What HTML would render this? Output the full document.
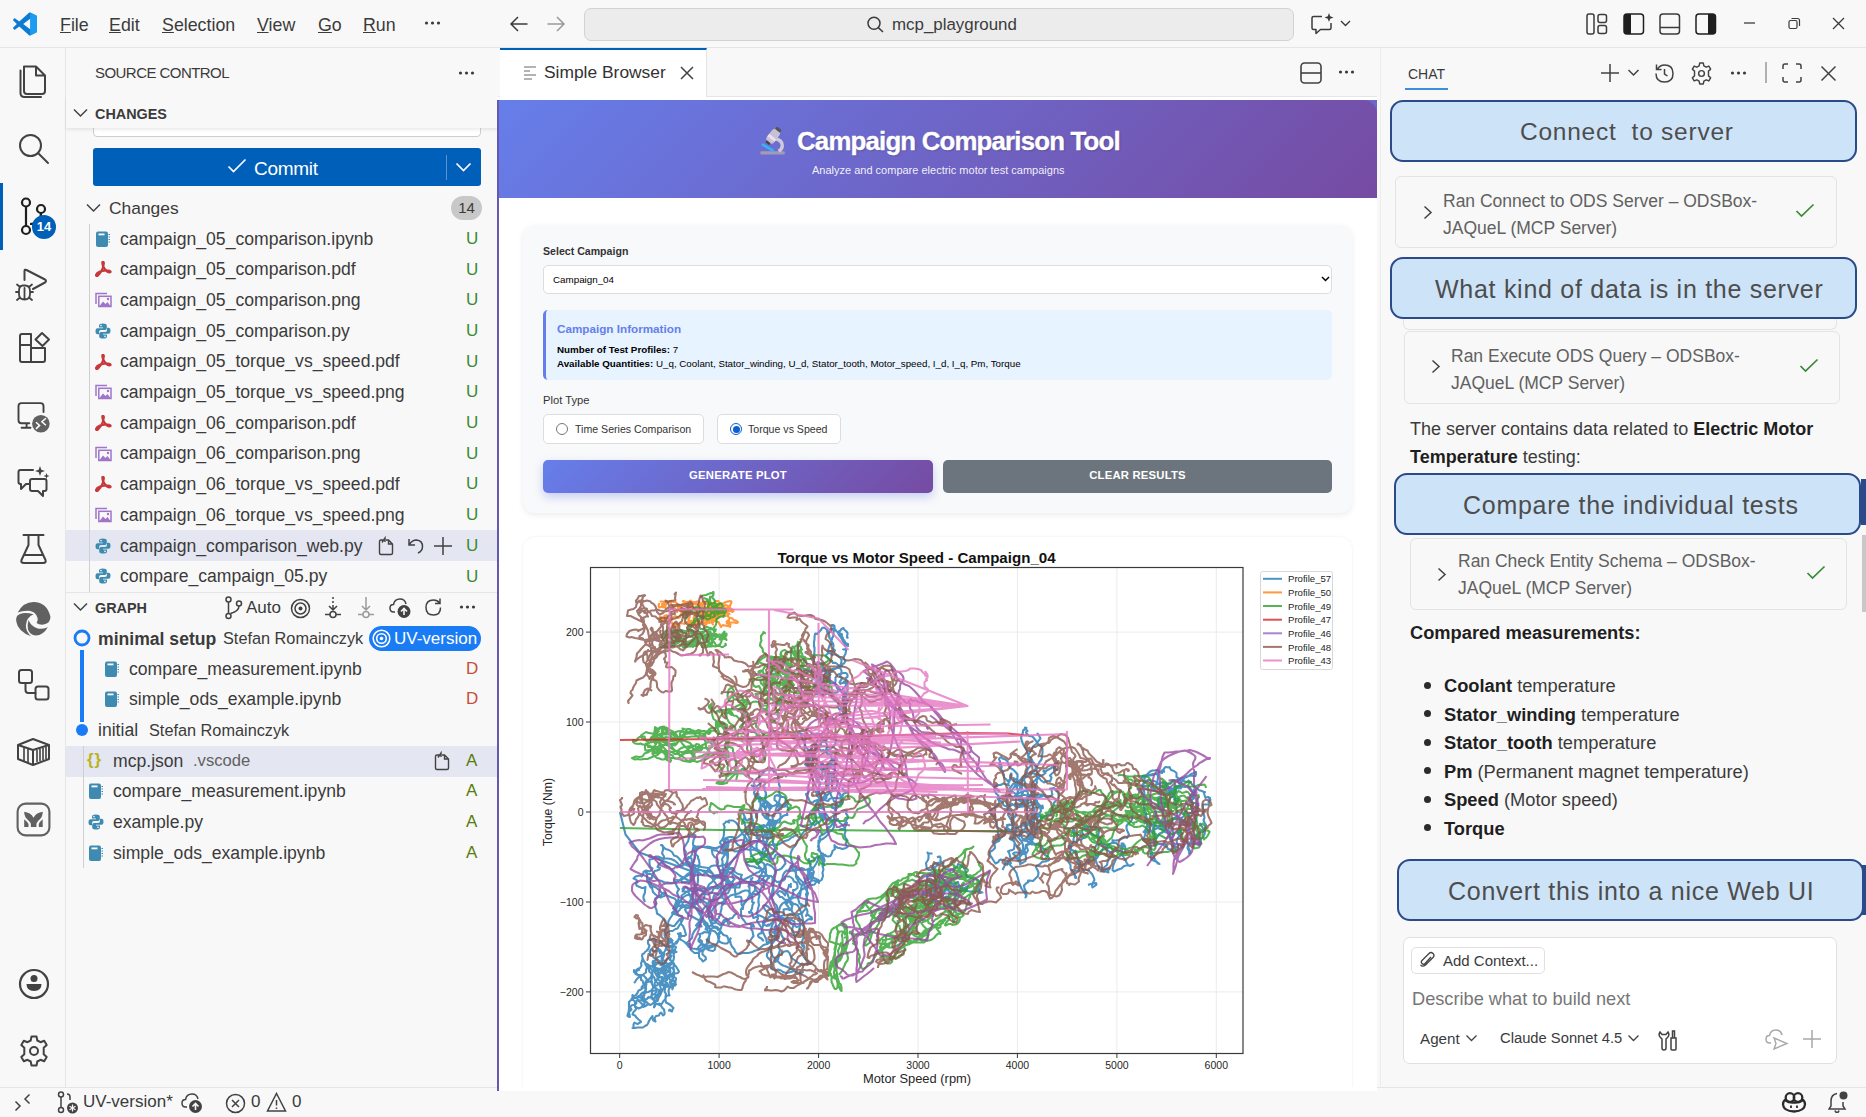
<!DOCTYPE html>
<html><head><meta charset="utf-8">
<style>
*{box-sizing:border-box;margin:0;padding:0}
html,body{width:1866px;height:1117px;overflow:hidden;background:#f8f8f8;font-family:"Liberation Sans",sans-serif;color:#3b3b3b}
.abs{position:absolute}
svg{display:block}
.t{position:absolute;white-space:nowrap;line-height:1.15}
</style></head><body>
<div class="abs" id="titlebar" style="left:0;top:0;width:1866px;height:48px;background:#f8f8f8;border-bottom:1px solid #e5e5e5">
 <svg class="abs" style="left:13px;top:12px" width="24" height="24" viewBox="0 0 24 24">
  <path d="M17.2 0.6 L23.2 3.5 Q24 3.9 24 4.8 V19.2 Q24 20.1 23.2 20.5 L17.2 23.4 Q16.5 23.7 16 23.2 L6.3 14.4 L2.2 17.5 Q1.6 17.9 1.1 17.4 L0.2 16.6 Q-0.2 16 0.3 15.5 L3.8 12 L0.3 8.5 Q-0.2 8 0.2 7.4 L1.1 6.6 Q1.6 6.1 2.2 6.5 L6.3 9.6 L16 0.8 Q16.5 0.3 17.2 0.6 Z M17.5 6.5 L10.2 12 L17.5 17.5 Z" fill="#0b7bd3" fill-rule="evenodd"/>
  <path d="M17.2 0.6 L23.2 3.5 Q24 3.9 24 4.8 V19.2 Q24 20.1 23.2 20.5 L17.2 23.4 Z" fill="#1d9bf0"/>
 </svg>
 <div class="t" style="left:60px;top:15px;font-size:17.8px;color:#3b3b3b"><u>F</u>ile</div>
 <div class="t" style="left:109px;top:15px;font-size:17.8px;color:#3b3b3b"><u>E</u>dit</div>
 <div class="t" style="left:162px;top:15px;font-size:17.8px;color:#3b3b3b"><u>S</u>election</div>
 <div class="t" style="left:257px;top:15px;font-size:17.8px;color:#3b3b3b"><u>V</u>iew</div>
 <div class="t" style="left:318px;top:15px;font-size:17.8px;color:#3b3b3b"><u>G</u>o</div>
 <div class="t" style="left:363px;top:15px;font-size:17.8px;color:#3b3b3b"><u>R</u>un</div>
 <svg class="abs" style="left:424px;top:20px" width="18" height="6"><circle cx="2.5" cy="3" r="1.6" fill="#3b3b3b"/><circle cx="8.5" cy="3" r="1.6" fill="#3b3b3b"/><circle cx="14.5" cy="3" r="1.6" fill="#3b3b3b"/></svg>
 <svg class="abs" style="left:509px;top:15px" width="20" height="18" viewBox="0 0 20 18"><path d="M18.5 9H2.5M9 2L2 9L9 16" stroke="#3b3b3b" stroke-width="1.5" fill="none"/></svg>
 <svg class="abs" style="left:546px;top:15px" width="20" height="18" viewBox="0 0 20 18"><path d="M1.5 9H17.5M11 2L18 9L11 16" stroke="#9a9a9a" stroke-width="1.5" fill="none"/></svg>
 <div class="abs" style="left:584px;top:8px;width:710px;height:33px;background:#ececec;border:1px solid #d2d2d2;border-radius:7px"></div>
 <svg class="abs" style="left:866px;top:16px" width="20" height="17" viewBox="0 0 20 17"><circle cx="8" cy="7.3" r="6" stroke="#3b3b3b" stroke-width="1.5" fill="none"/><path d="M12.3 11.6L17 16" stroke="#3b3b3b" stroke-width="1.5"/></svg>
 <div class="t" style="left:892px;top:15px;font-size:16.9px;color:#3b3b3b">mcp_playground</div>
 <svg class="abs" style="left:1310px;top:12px" width="44" height="24" viewBox="0 0 44 24">
  <path d="M12 4.5H3.5Q2 4.5 2 6V16Q2 17.5 3.5 17.5H6V21.5L10.5 17.5H19.5Q21 17.5 21 16V11" stroke="#3b3b3b" stroke-width="1.5" fill="none" stroke-linejoin="round"/>
  <path d="M19 1L20.2 4.3L23.5 5.5L20.2 6.7L19 10L17.8 6.7L14.5 5.5L17.8 4.3Z" fill="#3b3b3b"/>
  <path d="M31 9L35.5 13.5L40 9" stroke="#3b3b3b" stroke-width="1.4" fill="none"/>
 </svg>
 <svg class="abs" style="left:1586px;top:13px" width="22" height="22" viewBox="0 0 22 22"><rect x="1" y="1" width="7" height="20" rx="2" stroke="#3b3b3b" stroke-width="1.5" fill="none"/><rect x="12" y="1.5" width="8.5" height="8" rx="2" stroke="#3b3b3b" stroke-width="1.5" fill="none"/><rect x="12" y="12.5" width="8.5" height="8" rx="2" stroke="#3b3b3b" stroke-width="1.5" fill="none"/></svg>
 <svg class="abs" style="left:1623px;top:13px" width="22" height="22" viewBox="0 0 22 22"><rect x="1" y="1" width="19.5" height="20" rx="3" stroke="#1f1f1f" stroke-width="1.5" fill="none"/><path d="M4 1H8V21H4Q1 21 1 18V4Q1 1 4 1Z" fill="#1f1f1f"/></svg>
 <svg class="abs" style="left:1659px;top:13px" width="22" height="22" viewBox="0 0 22 22"><rect x="1" y="1" width="19.5" height="20" rx="3" stroke="#3b3b3b" stroke-width="1.5" fill="none"/><path d="M1 14.5H20.5" stroke="#3b3b3b" stroke-width="1.5"/></svg>
 <svg class="abs" style="left:1695px;top:13px" width="22" height="22" viewBox="0 0 22 22"><rect x="1" y="1" width="19.5" height="20" rx="3" stroke="#1f1f1f" stroke-width="1.5" fill="none"/><path d="M13 1H17.5Q20.5 1 20.5 4V18Q20.5 21 17.5 21H13Z" fill="#1f1f1f"/></svg>
 <svg class="abs" style="left:1743px;top:17px" width="14" height="12"><path d="M1 6H12" stroke="#3b3b3b" stroke-width="1.3"/></svg>
 <svg class="abs" style="left:1788px;top:17px" width="13" height="13" viewBox="0 0 13 13"><rect x="1" y="3.5" width="8" height="8" rx="1.5" stroke="#3b3b3b" stroke-width="1.2" fill="none"/><path d="M3.5 1.5H9.5Q11.5 1.5 11.5 3.5V9" stroke="#3b3b3b" stroke-width="1.2" fill="none"/></svg>
 <svg class="abs" style="left:1832px;top:17px" width="13" height="13" viewBox="0 0 13 13"><path d="M1 1L12 12M12 1L1 12" stroke="#3b3b3b" stroke-width="1.3"/></svg>
</div>
<div class="abs" id="activity" style="left:0;top:48px;width:66px;height:1039px;background:#f8f8f8;border-right:1px solid #e5e5e5">
 <div class="abs" style="left:0;top:135px;width:3px;height:67px;background:#005fb8"></div>
 <svg class="abs" style="left:17px;top:16px" width="32" height="34" viewBox="0 0 32 34"><path d="M7 2.5H19L28 11.5V27Q28 30 25 30H10Q7 30 7 27Z M19 2.5V11.5H28" stroke="#424242" stroke-width="2" fill="none" stroke-linejoin="round" stroke-linecap="round"/><path d="M3.5 6.5V29Q3.5 33 7.5 33H24" stroke="#424242" stroke-width="2" fill="none" stroke-linejoin="round" stroke-linecap="round"/></svg>
 <svg class="abs" style="left:17px;top:84px" width="34" height="34" viewBox="0 0 34 34"><circle cx="13.5" cy="13.5" r="10.5" stroke="#424242" stroke-width="2" fill="none" stroke-linejoin="round" stroke-linecap="round"/><path d="M21 21L31 31" stroke="#424242" stroke-width="2" fill="none" stroke-linejoin="round" stroke-linecap="round"/></svg>
 <svg class="abs" style="left:18px;top:149px" width="42" height="42" viewBox="0 0 42 42"><circle cx="8" cy="5.5" r="4" stroke="#1f1f1f" stroke-width="2.2" fill="none"/><circle cx="23" cy="12" r="4" stroke="#1f1f1f" stroke-width="2.2" fill="none"/><circle cx="8" cy="33" r="4" stroke="#1f1f1f" stroke-width="2.2" fill="none"/><path d="M8 9.5V29M12 27Q23 27 23 16" stroke="#1f1f1f" stroke-width="2.2" fill="none"/></svg>
 <div class="abs" style="left:32px;top:167px;width:24px;height:24px;border-radius:12px;background:#005fb8;color:#fff;font-size:13px;font-weight:bold;text-align:center;line-height:24px">14</div>
 <svg class="abs" style="left:15px;top:220px" width="36" height="34" viewBox="0 0 36 34"><path d="M9.5 12V3Q9.5 1 11.5 2L30 11.5Q32 13 30 14.5L18 21" stroke="#424242" stroke-width="2" fill="none" stroke-linejoin="round" stroke-linecap="round"/><path d="M8 17.5Q4 17.5 4 23V26Q4 31.5 9.5 31.5Q15 31.5 15 26V23Q15 17.5 10 17.5Z M4 24H1M15 24H18M5 19L2 16.5M14 19L17 16.5M5 29.5L2 32M14 29.5L17 32M9.5 20V31" stroke="#424242" stroke-width="1.8" fill="none" stroke-linecap="round"/></svg>
 <svg class="abs" style="left:17px;top:283px" width="36" height="34" viewBox="0 0 36 34"><path d="M3 5Q3 3 5 3H14V14H3Z M3 14H14V31H5Q3 31 3 29Z M14 17H28V29Q28 31 26 31H14Z" stroke="#424242" stroke-width="2" fill="none" stroke-linejoin="round" stroke-linecap="round"/><path d="M18.5 8.5L25 2L32 8.5L25.5 15Z" stroke="#424242" stroke-width="2" fill="none" stroke-linejoin="round" stroke-linecap="round"/></svg>
 <svg class="abs" style="left:12px;top:347px" width="44" height="44" viewBox="0 0 44 44"><path d="M31.5 17V11Q31.5 8.1 28.5 8.1H9.5Q6.5 8.1 6.5 11V25.3Q6.5 28.3 9.5 28.3H17.3M14.6 28.3V32.7M9.6 32.7H18.5" stroke="#424242" stroke-width="1.9" fill="none" stroke-linecap="round"/><circle cx="28.9" cy="28.7" r="8.8" fill="#616161"/><path d="M24 27.2L27.6 30.4L24 33.9M33.9 23.2L29.9 26.8L33.9 30.3" stroke="#fff" stroke-width="1.5" fill="none"/></svg>
 <svg class="abs" style="left:16px;top:417px" width="36" height="36" viewBox="0 0 36 36"><path d="M17 5H4.5Q2.5 5 2.5 7V17Q2.5 19 4.5 19H5V24L10 19H13" stroke="#424242" stroke-width="2" fill="none" stroke-linejoin="round" stroke-linecap="round"/><path d="M16 14H28.5Q30.5 14 30.5 16V24Q30.5 26 28.5 26H27V31L22 26H16Q14 26 14 24V16Q14 14 16 14Z" stroke="#424242" stroke-width="2" fill="none" stroke-linejoin="round" stroke-linecap="round"/><path d="M24 1L25.3 4.7L29 6L25.3 7.3L24 11L22.7 7.3L19 6L22.7 4.7Z M30.5 8L31.3 10.2L33.5 11L31.3 11.8L30.5 14L29.7 11.8L27.5 11L29.7 10.2Z" fill="#424242"/></svg>
 <svg class="abs" style="left:19px;top:485px" width="30" height="32" viewBox="0 0 30 32"><path d="M4.5 2H24.5M9.5 2V12L2.5 27Q1.5 30 5 30H24Q27.5 30 26.5 27L19.5 12V2 M5.5 22H23.5" stroke="#424242" stroke-width="2" fill="none" stroke-linejoin="round" stroke-linecap="round"/></svg>
 <svg class="abs" style="left:10px;top:547px" width="48" height="48" viewBox="0 0 48 48"><g fill="#616161">
<path d="M7.7 17.6Q13 7 23.6 6.9Q37 7.2 40.4 21.5Q41 28 33.5 29.6Q29 30 26.6 27.9Q28.5 25.5 27.5 22.8Q25.5 16.5 19 15.8Q12 15.5 7.7 17.6Z"/>
<path d="M23.6 19.3Q12 15.8 7 21Q5.5 24 6.4 27Q8 36.5 21 41.3Q15.5 36 15.9 30Q16.5 22.5 23.6 19.3Z"/>
<path d="M18.5 24.9Q17 30 18 34.4Q20 40 25.8 40.4Q33 40.5 37.8 32.2Q32 34.5 27.9 33.5Q21 31.5 18.5 24.9Z"/>
</g></svg>
 <svg class="abs" style="left:17px;top:620px" width="34" height="34" viewBox="0 0 34 34"><rect x="2" y="2" width="13" height="13" rx="2.5" stroke="#424242" stroke-width="2" fill="none" stroke-linejoin="round" stroke-linecap="round"/><rect x="18.5" y="18.5" width="13" height="13" rx="2.5" stroke="#424242" stroke-width="2" fill="none" stroke-linejoin="round" stroke-linecap="round"/><path d="M8.5 15V22Q8.5 25 11.5 25H18.5" stroke="#424242" stroke-width="2" fill="none" stroke-linejoin="round" stroke-linecap="round"/></svg>
 <svg class="abs" style="left:16px;top:688px" width="36" height="32" viewBox="0 0 36 32"><path d="M2 9L17 3L33 9V23L17 29L2 23Z M2 9L17 14L33 9M17 14V29" stroke="#424242" stroke-width="2" fill="none" stroke-linejoin="round" stroke-linecap="round"/><path d="M8 11.5V25M12 13V27M21 14V26M24 13V25M27 12V24M30 11V23" stroke="#424242" stroke-width="1.6"/></svg>
 <svg class="abs" style="left:12px;top:750px" width="44" height="44" viewBox="0 0 44 44"><rect x="5.6" y="5.6" width="31.8" height="31.8" rx="8" stroke="#616161" stroke-width="2.1" fill="none"/><g fill="#616161"><path d="M12.2 13.8Q18.5 14.5 21.5 19.7Q24.5 14.5 30.7 13.8Q31 19 26.5 22.5Q24.4 24.5 24.4 27V29.1H18.9V27Q18.9 24.5 16.5 22.5Q12 19 12.2 13.8Z"/><path d="M12.2 21.3Q15.5 24 16.5 26V29.1H12.2Z"/><path d="M30.7 21.3Q27.5 24 26.8 26V29.1H30.7Z"/></g></svg>
 <svg class="abs" style="left:18px;top:920px" width="32" height="32" viewBox="0 0 32 32"><circle cx="16" cy="16" r="14" stroke="#424242" stroke-width="2.2" fill="none"/><circle cx="16" cy="10.5" r="3.5" fill="#424242"/><path d="M8.5 16H23.5Q23.5 23 16 23Q8.5 23 8.5 16Z" fill="#424242"/></svg>
 <svg class="abs" style="left:18px;top:987px" width="32" height="32" viewBox="0 0 32 32"><path d="M13.5 1.5H18.5L19.3 5.5L22.5 7.2L26.2 5.7L28.7 10L25.7 12.7V19.3L28.7 22L26.2 26.3L22.5 24.8L19.3 26.5L18.5 30.5H13.5L12.7 26.5L9.5 24.8L5.8 26.3L3.3 22L6.3 19.3V12.7L3.3 10L5.8 5.7L9.5 7.2L12.7 5.5Z" stroke="#424242" stroke-width="2" fill="none" stroke-linejoin="round" stroke-linecap="round"/><circle cx="16" cy="16" r="4" stroke="#424242" stroke-width="2" fill="none" stroke-linejoin="round" stroke-linecap="round"/></svg>
</div>
<div class="abs" id="sidebar" style="left:66px;top:48px;width:432px;height:1039px;background:#f8f8f8"></div>
<div class="t" style="left:95px;top:64.3px;font-size:15px;color:#3b3b3b;font-weight:normal;letter-spacing:-0.55px">SOURCE CONTROL</div>
<svg class="abs" style="left:458px;top:70px" width="18" height="6"><circle cx="2.5" cy="3" r="1.6" fill="#3b3b3b"/><circle cx="8.5" cy="3" r="1.6" fill="#3b3b3b"/><circle cx="14.5" cy="3" r="1.6" fill="#3b3b3b"/></svg>
<div class="abs" style="left:93px;top:110px;width:388px;height:27px;background:#fff;border:1px solid #cecece;border-radius:4px"></div>
<div class="abs" style="left:66px;top:96px;width:432px;height:32px;background:#f8f8f8;box-shadow:0 2px 3px rgba(0,0,0,0.08)"></div>
<svg class="abs" style="left:73px;top:108px" width="15" height="10" viewBox="0 0 15 10"><path d="M1 1.5L7.5 8L14 1.5" stroke="#424242" stroke-width="1.5" fill="none"/></svg>
<div class="t" style="left:95px;top:105.6px;font-size:14.4px;color:#3b3b3b;font-weight:bold;">CHANGES</div>
<div class="abs" style="left:93px;top:148px;width:388px;height:38px;background:#005fb8;border-radius:3px"></div>
<svg class="abs" style="left:227px;top:158px" width="20" height="16" viewBox="0 0 20 16"><path d="M1.5 8.5L6.5 13.5L18.5 1.5" stroke="#fff" stroke-width="1.7" fill="none"/></svg>
<div class="t" style="left:254px;top:157.5px;font-size:19px;color:#fff;font-weight:normal;letter-spacing:-0.3px">Commit</div>
<div class="abs" style="left:446px;top:155px;width:1px;height:25px;background:#5a93cf"></div>
<svg class="abs" style="left:455px;top:162px" width="17" height="11" viewBox="0 0 17 11"><path d="M1.5 1.5L8.5 8.5L15.5 1.5" stroke="#fff" stroke-width="1.7" fill="none"/></svg>
<svg class="abs" style="left:86px;top:203px" width="15" height="10" viewBox="0 0 15 10"><path d="M1 1.5L7.5 8L14 1.5" stroke="#424242" stroke-width="1.5" fill="none"/></svg>
<div class="t" style="left:109px;top:197.9px;font-size:17.4px;color:#3b3b3b;font-weight:normal;">Changes</div>
<div class="abs" style="left:451px;top:196px;width:31px;height:24px;border-radius:12px;background:#c8c8c8;color:#3b3b3b;font-size:15px;text-align:center;line-height:24px">14</div>
<div class="abs" style="left:89px;top:224px;width:1px;height:368px;background:#cfcfcf"></div>
<svg class="abs" style="left:95px;top:230.7px" width="16" height="16" viewBox="0 0 16 16"><rect x="1" y="0.5" width="12" height="15.5" rx="2" fill="#3f8ab0"/><rect x="3.5" y="2.5" width="6" height="1.8" fill="#fff"/><path d="M13.5 3.5H15M13.5 6H15M13.5 8.5H15M13.5 11H15" stroke="#3f8ab0" stroke-width="1"/></svg>
<div class="t" style="left:120px;top:228.5px;font-size:17.6px;color:#3b3b3b;font-weight:normal;">campaign_05_comparison.ipynb</div>
<div class="t" style="left:466px;top:228.8px;font-size:17px;color:#388a34;font-weight:normal;">U</div>
<svg class="abs" style="left:95px;top:261.4px" width="17" height="16" viewBox="0 0 17 16"><path d="M7.5 1Q9 0.5 8.8 2.5Q8.5 5 7.5 8Q5.5 12 3 14.5Q1 15.5 1 14Q1.5 12 5 10.5Q9 9.5 13 9.5Q16 10 15.5 11Q14.5 12 12 10.5Q9.5 8.5 8 5Q7 2 7.5 1Z" stroke="#c8373a" stroke-width="2.2" fill="none" stroke-linejoin="round"/></svg>
<div class="t" style="left:120px;top:259.2px;font-size:17.6px;color:#3b3b3b;font-weight:normal;">campaign_05_comparison.pdf</div>
<div class="t" style="left:466px;top:259.5px;font-size:17px;color:#388a34;font-weight:normal;">U</div>
<svg class="abs" style="left:95px;top:292.1px" width="17" height="16" viewBox="0 0 17 16"><path d="M1 12V1.5H12" stroke="#a074c8" stroke-width="1.5" fill="none"/><rect x="3.8" y="4.3" width="12.2" height="10.2" stroke="#a074c8" stroke-width="1.5" fill="none"/><path d="M4.5 14L8 9.5L10.5 12L12.5 10L15.5 14Z" fill="#a074c8"/><circle cx="13" cy="7" r="1.2" fill="#a074c8"/></svg>
<div class="t" style="left:120px;top:289.9px;font-size:17.6px;color:#3b3b3b;font-weight:normal;">campaign_05_comparison.png</div>
<div class="t" style="left:466px;top:290.2px;font-size:17px;color:#388a34;font-weight:normal;">U</div>
<svg class="abs" style="left:95px;top:322.8px" width="16" height="16" viewBox="0 0 16 16"><path d="M7.8 0.5Q4 0.5 4 2.5V4.5H8V5.3H2.5Q0.5 5.3 0.5 8.3Q0.5 11.3 2.5 11.3H4V9Q4 7 6 7H10Q11.8 7 11.8 5.2V2.5Q11.8 0.5 7.8 0.5Z" fill="#3d8bb0"/><path d="M8.2 15.5Q12 15.5 12 13.5V11.5H8V10.7H13.5Q15.5 10.7 15.5 7.7Q15.5 4.7 13.5 4.7H12V7Q12 9 10 9H6Q4.2 9 4.2 10.8V13.5Q4.2 15.5 8.2 15.5Z" fill="#3d8bb0"/><circle cx="6" cy="2.6" r="0.8" fill="#f8f8f8"/><circle cx="10" cy="13.4" r="0.8" fill="#f8f8f8"/></svg>
<div class="t" style="left:120px;top:320.6px;font-size:17.6px;color:#3b3b3b;font-weight:normal;">campaign_05_comparison.py</div>
<div class="t" style="left:466px;top:320.9px;font-size:17px;color:#388a34;font-weight:normal;">U</div>
<svg class="abs" style="left:95px;top:353.5px" width="17" height="16" viewBox="0 0 17 16"><path d="M7.5 1Q9 0.5 8.8 2.5Q8.5 5 7.5 8Q5.5 12 3 14.5Q1 15.5 1 14Q1.5 12 5 10.5Q9 9.5 13 9.5Q16 10 15.5 11Q14.5 12 12 10.5Q9.5 8.5 8 5Q7 2 7.5 1Z" stroke="#c8373a" stroke-width="2.2" fill="none" stroke-linejoin="round"/></svg>
<div class="t" style="left:120px;top:351.3px;font-size:17.6px;color:#3b3b3b;font-weight:normal;">campaign_05_torque_vs_speed.pdf</div>
<div class="t" style="left:466px;top:351.6px;font-size:17px;color:#388a34;font-weight:normal;">U</div>
<svg class="abs" style="left:95px;top:384.2px" width="17" height="16" viewBox="0 0 17 16"><path d="M1 12V1.5H12" stroke="#a074c8" stroke-width="1.5" fill="none"/><rect x="3.8" y="4.3" width="12.2" height="10.2" stroke="#a074c8" stroke-width="1.5" fill="none"/><path d="M4.5 14L8 9.5L10.5 12L12.5 10L15.5 14Z" fill="#a074c8"/><circle cx="13" cy="7" r="1.2" fill="#a074c8"/></svg>
<div class="t" style="left:120px;top:382.0px;font-size:17.6px;color:#3b3b3b;font-weight:normal;">campaign_05_torque_vs_speed.png</div>
<div class="t" style="left:466px;top:382.3px;font-size:17px;color:#388a34;font-weight:normal;">U</div>
<svg class="abs" style="left:95px;top:414.9px" width="17" height="16" viewBox="0 0 17 16"><path d="M7.5 1Q9 0.5 8.8 2.5Q8.5 5 7.5 8Q5.5 12 3 14.5Q1 15.5 1 14Q1.5 12 5 10.5Q9 9.5 13 9.5Q16 10 15.5 11Q14.5 12 12 10.5Q9.5 8.5 8 5Q7 2 7.5 1Z" stroke="#c8373a" stroke-width="2.2" fill="none" stroke-linejoin="round"/></svg>
<div class="t" style="left:120px;top:412.7px;font-size:17.6px;color:#3b3b3b;font-weight:normal;">campaign_06_comparison.pdf</div>
<div class="t" style="left:466px;top:413.0px;font-size:17px;color:#388a34;font-weight:normal;">U</div>
<svg class="abs" style="left:95px;top:445.6px" width="17" height="16" viewBox="0 0 17 16"><path d="M1 12V1.5H12" stroke="#a074c8" stroke-width="1.5" fill="none"/><rect x="3.8" y="4.3" width="12.2" height="10.2" stroke="#a074c8" stroke-width="1.5" fill="none"/><path d="M4.5 14L8 9.5L10.5 12L12.5 10L15.5 14Z" fill="#a074c8"/><circle cx="13" cy="7" r="1.2" fill="#a074c8"/></svg>
<div class="t" style="left:120px;top:443.4px;font-size:17.6px;color:#3b3b3b;font-weight:normal;">campaign_06_comparison.png</div>
<div class="t" style="left:466px;top:443.7px;font-size:17px;color:#388a34;font-weight:normal;">U</div>
<svg class="abs" style="left:95px;top:476.3px" width="17" height="16" viewBox="0 0 17 16"><path d="M7.5 1Q9 0.5 8.8 2.5Q8.5 5 7.5 8Q5.5 12 3 14.5Q1 15.5 1 14Q1.5 12 5 10.5Q9 9.5 13 9.5Q16 10 15.5 11Q14.5 12 12 10.5Q9.5 8.5 8 5Q7 2 7.5 1Z" stroke="#c8373a" stroke-width="2.2" fill="none" stroke-linejoin="round"/></svg>
<div class="t" style="left:120px;top:474.1px;font-size:17.6px;color:#3b3b3b;font-weight:normal;">campaign_06_torque_vs_speed.pdf</div>
<div class="t" style="left:466px;top:474.4px;font-size:17px;color:#388a34;font-weight:normal;">U</div>
<svg class="abs" style="left:95px;top:507.0px" width="17" height="16" viewBox="0 0 17 16"><path d="M1 12V1.5H12" stroke="#a074c8" stroke-width="1.5" fill="none"/><rect x="3.8" y="4.3" width="12.2" height="10.2" stroke="#a074c8" stroke-width="1.5" fill="none"/><path d="M4.5 14L8 9.5L10.5 12L12.5 10L15.5 14Z" fill="#a074c8"/><circle cx="13" cy="7" r="1.2" fill="#a074c8"/></svg>
<div class="t" style="left:120px;top:504.8px;font-size:17.6px;color:#3b3b3b;font-weight:normal;">campaign_06_torque_vs_speed.png</div>
<div class="t" style="left:466px;top:505.1px;font-size:17px;color:#388a34;font-weight:normal;">U</div>
<div class="abs" style="left:66px;top:530.2px;width:431px;height:31px;background:#e4e6f1"></div>
<div class="abs" style="left:89px;top:530.2px;width:1px;height:31px;background:#cfcfcf"></div>
<svg class="abs" style="left:377px;top:535.7px" width="20" height="20" viewBox="0 0 20 20"><path d="M6 4H4Q2.5 4 2.5 5.5V17Q2.5 18.5 4 18.5H14Q15.5 18.5 15.5 17V8L11.5 4H9 M11.5 4V8H15.5 M5 6.5L8 2L8 6" stroke="#424242" stroke-width="1.4" fill="none"/></svg>
<svg class="abs" style="left:406px;top:535.7px" width="20" height="20" viewBox="0 0 20 20"><path d="M3 3V9H9 M3.5 8.5Q6 4 10.5 4Q16.5 4.5 16.5 10.5Q16.5 15 12 17" stroke="#424242" stroke-width="1.5" fill="none"/></svg>
<svg class="abs" style="left:433px;top:535.7px" width="20" height="20" viewBox="0 0 20 20"><path d="M10 1V19M1 10H19" stroke="#424242" stroke-width="1.5"/></svg>
<svg class="abs" style="left:95px;top:537.7px" width="16" height="16" viewBox="0 0 16 16"><path d="M7.8 0.5Q4 0.5 4 2.5V4.5H8V5.3H2.5Q0.5 5.3 0.5 8.3Q0.5 11.3 2.5 11.3H4V9Q4 7 6 7H10Q11.8 7 11.8 5.2V2.5Q11.8 0.5 7.8 0.5Z" fill="#3d8bb0"/><path d="M8.2 15.5Q12 15.5 12 13.5V11.5H8V10.7H13.5Q15.5 10.7 15.5 7.7Q15.5 4.7 13.5 4.7H12V7Q12 9 10 9H6Q4.2 9 4.2 10.8V13.5Q4.2 15.5 8.2 15.5Z" fill="#3d8bb0"/><circle cx="6" cy="2.6" r="0.8" fill="#f8f8f8"/><circle cx="10" cy="13.4" r="0.8" fill="#f8f8f8"/></svg>
<div class="t" style="left:120px;top:535.5px;font-size:17.6px;color:#3b3b3b;font-weight:normal;">campaign_comparison_web.py</div>
<div class="t" style="left:466px;top:535.8px;font-size:17px;color:#388a34;font-weight:normal;">U</div>
<svg class="abs" style="left:95px;top:568.4px" width="16" height="16" viewBox="0 0 16 16"><path d="M7.8 0.5Q4 0.5 4 2.5V4.5H8V5.3H2.5Q0.5 5.3 0.5 8.3Q0.5 11.3 2.5 11.3H4V9Q4 7 6 7H10Q11.8 7 11.8 5.2V2.5Q11.8 0.5 7.8 0.5Z" fill="#3d8bb0"/><path d="M8.2 15.5Q12 15.5 12 13.5V11.5H8V10.7H13.5Q15.5 10.7 15.5 7.7Q15.5 4.7 13.5 4.7H12V7Q12 9 10 9H6Q4.2 9 4.2 10.8V13.5Q4.2 15.5 8.2 15.5Z" fill="#3d8bb0"/><circle cx="6" cy="2.6" r="0.8" fill="#f8f8f8"/><circle cx="10" cy="13.4" r="0.8" fill="#f8f8f8"/></svg>
<div class="t" style="left:120px;top:566.2px;font-size:17.6px;color:#3b3b3b;font-weight:normal;">compare_campaign_05.py</div>
<div class="t" style="left:466px;top:566.5px;font-size:17px;color:#388a34;font-weight:normal;">U</div>
<div class="abs" style="left:66px;top:592px;width:432px;height:1px;background:#e5e5e5"></div>
<svg class="abs" style="left:73px;top:602px" width="15" height="10" viewBox="0 0 15 10"><path d="M1 1.5L7.5 8L14 1.5" stroke="#424242" stroke-width="1.5" fill="none"/></svg>
<div class="t" style="left:95px;top:599.6px;font-size:14.4px;color:#3b3b3b;font-weight:bold;">GRAPH</div>
<svg class="abs" style="left:224px;top:596px" width="20" height="24" viewBox="0 0 20 24"><circle cx="4.5" cy="3.5" r="2.5" stroke="#424242" stroke-width="1.5" fill="none"/><circle cx="15" cy="7.5" r="2.5" stroke="#424242" stroke-width="1.5" fill="none"/><circle cx="4.5" cy="20" r="2.5" stroke="#424242" stroke-width="1.5" fill="none"/><path d="M4.5 6V17.5M15 10Q15 15 6.5 17.5" stroke="#424242" stroke-width="1.5" fill="none"/></svg>
<div class="t" style="left:246px;top:598.1px;font-size:17px;color:#3b3b3b;font-weight:normal;">Auto</div>
<svg class="abs" style="left:290px;top:598px" width="21" height="21" viewBox="0 0 21 21"><circle cx="10.5" cy="10.5" r="9" stroke="#424242" stroke-width="1.5" fill="none"/><circle cx="10.5" cy="10.5" r="5.5" stroke="#424242" stroke-width="1.5" fill="none"/><circle cx="10.5" cy="10.5" r="2" fill="#424242"/></svg>
<svg class="abs" style="left:324px;top:596px" width="18" height="24" viewBox="0 0 18 24"><path d="M9 1V3M9 5V7M9 9V14M5 10L9 14L13 10" stroke="#424242" stroke-width="1.5" fill="none"/><circle cx="9" cy="18.5" r="3" stroke="#424242" stroke-width="1.5" fill="none"/><path d="M1 18.5H6M12 18.5H17" stroke="#424242" stroke-width="1.5" fill="none"/></svg>
<svg class="abs" style="left:357px;top:596px" width="18" height="24" viewBox="0 0 18 24"><path d="M9 1V14M5 10L9 14L13 10" stroke="#9a9a9a" stroke-width="1.5" fill="none"/><circle cx="9" cy="18.5" r="3" stroke="#9a9a9a" stroke-width="1.5" fill="none"/><path d="M1 18.5H6M12 18.5H17" stroke="#9a9a9a" stroke-width="1.5" fill="none"/></svg>
<svg class="abs" style="left:389px;top:597px" width="23" height="22" viewBox="0 0 23 22"><path d="M6 15H4.5Q1 15 1 11Q1 7.5 4.5 7.5Q5.5 2 11 2Q16 2 17 7" stroke="#424242" stroke-width="1.5" fill="none"/><circle cx="15" cy="14.5" r="6.5" fill="#424242"/><path d="M15 18V11.5M12 14.5L15 11.5L18 14.5" stroke="#f8f8f8" stroke-width="1.6" fill="none"/></svg>
<svg class="abs" style="left:423px;top:597px" width="21" height="21" viewBox="0 0 21 21"><path d="M17.5 10.5Q17.5 18 10.5 18Q3 18 3 10.5Q3 3 10.5 3Q14.5 3 16.5 6 M17 1.5V6.5H12" stroke="#424242" stroke-width="1.5" fill="none"/></svg>
<svg class="abs" style="left:459px;top:604px" width="18" height="6"><circle cx="2.5" cy="3" r="1.6" fill="#3b3b3b"/><circle cx="8.5" cy="3" r="1.6" fill="#3b3b3b"/><circle cx="14.5" cy="3" r="1.6" fill="#3b3b3b"/></svg>
<svg class="abs" style="left:72px;top:628px" width="20" height="20" viewBox="0 0 20 20"><circle cx="10" cy="10" r="7" stroke="#1a7cf5" stroke-width="2.8" fill="none"/></svg>
<div class="abs" style="left:80px;top:650px;width:4px;height:72px;background:#1a7cf5"></div>
<div class="abs" style="left:76px;top:724px;width:12px;height:12px;border-radius:6px;background:#1a7cf5"></div>
<div class="t" style="left:98px;top:628.8px;font-size:17.6px;color:#3b3b3b;font-weight:bold;">minimal setup</div>
<div class="t" style="left:223px;top:629.0px;font-size:16.3px;color:#3b3b3b;font-weight:normal;">Stefan Romainczyk</div>
<div class="abs" style="left:369px;top:626px;width:112px;height:25px;border-radius:13px;background:#1a7cf5"></div>
<svg class="abs" style="left:371px;top:628px" width="21" height="21" viewBox="0 0 21 21"><circle cx="10.5" cy="10.5" r="8.3" stroke="#fff" stroke-width="1.6" fill="none"/><circle cx="10.5" cy="10.5" r="4.8" stroke="#fff" stroke-width="1.6" fill="none"/><circle cx="10.5" cy="10.5" r="1.8" fill="#fff"/></svg>
<div class="t" style="left:394px;top:628.6px;font-size:17px;color:#fff;font-weight:normal;">UV-version</div>
<svg class="abs" style="left:104px;top:661px" width="16" height="16" viewBox="0 0 16 16"><rect x="1" y="0.5" width="12" height="15.5" rx="2" fill="#3f8ab0"/><rect x="3.5" y="2.5" width="6" height="1.8" fill="#fff"/><path d="M13.5 3.5H15M13.5 6H15M13.5 8.5H15M13.5 11H15" stroke="#3f8ab0" stroke-width="1"/></svg>
<div class="t" style="left:129px;top:658.8px;font-size:17.6px;color:#3b3b3b;font-weight:normal;">compare_measurement.ipynb</div>
<div class="t" style="left:466px;top:659.1px;font-size:17px;color:#c74e39;font-weight:normal;">D</div>
<svg class="abs" style="left:104px;top:691px" width="16" height="16" viewBox="0 0 16 16"><rect x="1" y="0.5" width="12" height="15.5" rx="2" fill="#3f8ab0"/><rect x="3.5" y="2.5" width="6" height="1.8" fill="#fff"/><path d="M13.5 3.5H15M13.5 6H15M13.5 8.5H15M13.5 11H15" stroke="#3f8ab0" stroke-width="1"/></svg>
<div class="t" style="left:129px;top:688.8px;font-size:17.6px;color:#3b3b3b;font-weight:normal;">simple_ods_example.ipynb</div>
<div class="t" style="left:466px;top:689.1px;font-size:17px;color:#c74e39;font-weight:normal;">D</div>
<div class="t" style="left:98px;top:719.8px;font-size:17.6px;color:#3b3b3b;font-weight:normal;">initial</div>
<div class="t" style="left:149px;top:721.0px;font-size:16.3px;color:#3b3b3b;font-weight:normal;">Stefan Romainczyk</div>
<div class="abs" style="left:66px;top:746px;width:431px;height:31px;background:#e4e6f1"></div>
<div class="abs" style="left:83px;top:746px;width:1px;height:122px;background:#cfcfcf"></div>
<div class="t" style="left:87px;top:750px;font-size:17px;color:#b8b41e;font-weight:bold;letter-spacing:1px">{}</div>
<div class="t" style="left:113px;top:750.8px;font-size:17.6px;color:#3b3b3b;font-weight:normal;">mcp.json</div>
<div class="t" style="left:193px;top:751.4px;font-size:16.6px;color:#616161;font-weight:normal;">.vscode</div>
<svg class="abs" style="left:433px;top:751px" width="20" height="20" viewBox="0 0 20 20"><path d="M6 4H4Q2.5 4 2.5 5.5V17Q2.5 18.5 4 18.5H14Q15.5 18.5 15.5 17V8L11.5 4H9 M11.5 4V8H15.5 M5 6.5L8 2L8 6" stroke="#424242" stroke-width="1.4" fill="none"/></svg>
<div class="t" style="left:466px;top:751.1px;font-size:17px;color:#587c0c;font-weight:normal;">A</div>
<svg class="abs" style="left:88px;top:783px" width="16" height="16" viewBox="0 0 16 16"><rect x="1" y="0.5" width="12" height="15.5" rx="2" fill="#3f8ab0"/><rect x="3.5" y="2.5" width="6" height="1.8" fill="#fff"/><path d="M13.5 3.5H15M13.5 6H15M13.5 8.5H15M13.5 11H15" stroke="#3f8ab0" stroke-width="1"/></svg>
<div class="t" style="left:113px;top:780.8px;font-size:17.6px;color:#3b3b3b;font-weight:normal;">compare_measurement.ipynb</div>
<div class="t" style="left:466px;top:781.1px;font-size:17px;color:#587c0c;font-weight:normal;">A</div>
<svg class="abs" style="left:88px;top:814px" width="16" height="16" viewBox="0 0 16 16"><path d="M7.8 0.5Q4 0.5 4 2.5V4.5H8V5.3H2.5Q0.5 5.3 0.5 8.3Q0.5 11.3 2.5 11.3H4V9Q4 7 6 7H10Q11.8 7 11.8 5.2V2.5Q11.8 0.5 7.8 0.5Z" fill="#3d8bb0"/><path d="M8.2 15.5Q12 15.5 12 13.5V11.5H8V10.7H13.5Q15.5 10.7 15.5 7.7Q15.5 4.7 13.5 4.7H12V7Q12 9 10 9H6Q4.2 9 4.2 10.8V13.5Q4.2 15.5 8.2 15.5Z" fill="#3d8bb0"/><circle cx="6" cy="2.6" r="0.8" fill="#f8f8f8"/><circle cx="10" cy="13.4" r="0.8" fill="#f8f8f8"/></svg>
<div class="t" style="left:113px;top:811.8px;font-size:17.6px;color:#3b3b3b;font-weight:normal;">example.py</div>
<div class="t" style="left:466px;top:812.1px;font-size:17px;color:#587c0c;font-weight:normal;">A</div>
<svg class="abs" style="left:88px;top:845px" width="16" height="16" viewBox="0 0 16 16"><rect x="1" y="0.5" width="12" height="15.5" rx="2" fill="#3f8ab0"/><rect x="3.5" y="2.5" width="6" height="1.8" fill="#fff"/><path d="M13.5 3.5H15M13.5 6H15M13.5 8.5H15M13.5 11H15" stroke="#3f8ab0" stroke-width="1"/></svg>
<div class="t" style="left:113px;top:842.8px;font-size:17.6px;color:#3b3b3b;font-weight:normal;">simple_ods_example.ipynb</div>
<div class="t" style="left:466px;top:843.1px;font-size:17px;color:#587c0c;font-weight:normal;">A</div>
<div class="abs" id="editor" style="left:498px;top:48px;width:879px;height:1043px;background:#fff"></div>
<div class="abs" style="left:498px;top:48px;width:882px;height:49px;background:#f8f8f8;border-bottom:1px solid #e5e5e5"></div>
<div class="abs" style="left:500px;top:48px;width:207px;height:49px;background:#fff;border-top:2px solid #005fb8;border-right:1px solid #e5e5e5"></div>
<svg class="abs" style="left:524px;top:66px" width="13" height="14" viewBox="0 0 13 14"><path d="M0 1H12M0 5H6M0 9H12M0 13H8" stroke="#9a9a9a" stroke-width="1.3"/></svg>
<div class="t" style="left:544px;top:62px;font-size:17.4px;color:#333333;font-weight:normal;">Simple Browser</div>
<svg class="abs" style="left:680px;top:66px" width="14" height="14" viewBox="0 0 14 14"><path d="M1 1L13 13M13 1L1 13" stroke="#424242" stroke-width="1.5"/></svg>
<svg class="abs" style="left:1299px;top:61px" width="24" height="24" viewBox="0 0 24 24"><rect x="2" y="2" width="20" height="20" rx="3.5" stroke="#424242" stroke-width="1.6" fill="none"/><path d="M2 12H22" stroke="#424242" stroke-width="1.6"/></svg>
<svg class="abs" style="left:1338px;top:69px" width="18" height="6"><circle cx="2.5" cy="3" r="1.6" fill="#3b3b3b"/><circle cx="8.5" cy="3" r="1.6" fill="#3b3b3b"/><circle cx="14.5" cy="3" r="1.6" fill="#3b3b3b"/></svg>
<div class="abs" style="left:497px;top:97px;width:880px;height:994px;background:#fff"></div>
<div class="abs" style="left:497px;top:100px;width:880px;height:98px;background:linear-gradient(135deg,#667eea 0%,#6e64c6 100%)"></div>
<div class="abs" style="left:499px;top:100px;width:878px;height:98px;background:linear-gradient(135deg,#667eea 0%,#764ba2 100%);border-radius:14px 14px 0 0"></div>
<div class="abs" style="left:497px;top:100px;width:2px;height:991px;background:#6359b0"></div>
<svg class="abs" style="left:750px;top:120px" width="50" height="40" viewBox="0 0 50 40">
<rect x="10.4" y="31.2" width="24.4" height="3.3" rx="1" fill="#a39ab5"/>
<path d="M12.8 24.6L22.6 30.4" stroke="#35b4f4" stroke-width="2.8" stroke-linecap="round"/>
<path d="M24.5 18.5Q32.3 20 32.3 25.5Q32.3 29.5 28.5 31" stroke="#cfc9d9" stroke-width="3.4" fill="none"/>
<g transform="rotate(38 22.5 17)">
<rect x="18" y="8.5" width="9" height="15" rx="3.5" fill="#c6c2cf"/>
<rect x="18" y="16.5" width="9" height="3" fill="#eddcf5"/>
<rect x="19.5" y="6" width="6" height="3.2" rx="1" fill="#555"/>
<rect x="20" y="23" width="5" height="2.5" rx="1" fill="#444"/>
</g>
</svg>
<div class="t" style="left:797px;top:127.3px;font-size:25.8px;color:#fff;font-weight:bold;letter-spacing:-0.8px;-webkit-text-stroke:0.3px #fff;text-shadow:1px 1px 2px rgba(0,0,0,0.2)">Campaign Comparison Tool</div>
<div class="t" style="left:812px;top:164px;font-size:11px;color:rgba(255,255,255,0.92);font-weight:normal;">Analyze and compare electric motor test campaigns</div>
<div class="abs" style="left:523px;top:225px;width:829px;height:288px;background:#f8f9fa;border-radius:12px;box-shadow:0 2px 6px rgba(0,0,0,0.08)"></div>
<div class="t" style="left:543px;top:245px;font-size:10.6px;color:#333;font-weight:bold;">Select Campaign</div>
<div class="abs" style="left:543px;top:265px;width:789px;height:29px;background:#fff;border:1px solid #ddd;border-radius:5px"></div>
<div class="t" style="left:553px;top:274px;font-size:9.8px;color:#000;font-weight:normal;">Campaign_04</div>
<svg class="abs" style="left:1321px;top:276px" width="9" height="6" viewBox="0 0 9 6"><path d="M1 1L4.5 4.5L8 1" stroke="#000" stroke-width="1.5" fill="none"/></svg>
<div class="abs" style="left:543px;top:310px;width:789px;height:70px;background:#e7f3ff;border-left:3px solid #667eea;border-radius:5px"></div>
<div class="t" style="left:557px;top:322px;font-size:11.7px;color:#667eea;font-weight:bold;">Campaign Information</div>
<div class="t" style="left:557px;top:344px;font-size:9.8px;color:#000;font-weight:normal;"><b>Number of Test Profiles:</b> 7</div>
<div class="t" style="left:557px;top:358px;font-size:9.77px;color:#000;font-weight:normal;"><b>Available Quantities:</b> U_q, Coolant, Stator_winding, U_d, Stator_tooth, Motor_speed, I_d, I_q, Pm, Torque</div>
<div class="t" style="left:543px;top:394px;font-size:11.2px;color:#333;font-weight:normal;">Plot Type</div>
<div class="abs" style="left:543px;top:414px;width:161px;height:30px;background:#fff;border:1px solid #ddd;border-radius:5px"></div>
<div class="abs" style="left:556px;top:423px;width:12px;height:12px;border-radius:6px;border:1px solid #767676;background:#fff"></div>
<div class="t" style="left:575px;top:423px;font-size:10.6px;color:#333;font-weight:normal;">Time Series Comparison</div>
<div class="abs" style="left:717px;top:414px;width:124px;height:30px;background:#fff;border:1px solid #ddd;border-radius:5px"></div>
<div class="abs" style="left:730px;top:423px;width:12px;height:12px;border-radius:6px;border:1px solid #0b5fd0;background:#fff"></div>
<div class="abs" style="left:732.5px;top:425.5px;width:7px;height:7px;border-radius:4px;background:#0b5fd0"></div>
<div class="t" style="left:748px;top:423px;font-size:10.6px;color:#333;font-weight:normal;">Torque vs Speed</div>
<div class="abs" style="left:543px;top:460px;width:390px;height:33px;background:linear-gradient(135deg,#667eea 0%,#764ba2 100%);border-radius:5px;box-shadow:0 4px 10px rgba(102,126,234,0.35)"></div>
<div class="t" style="left:543px;top:469px;font-size:11.3px;color:#fff;font-weight:bold;letter-spacing:0.2px"><div style="width:390px;text-align:center">GENERATE PLOT</div></div>
<div class="abs" style="left:943px;top:460px;width:389px;height:33px;background:#6c757d;border-radius:5px"></div>
<div class="t" style="left:943px;top:469px;font-size:11.3px;color:#fff;font-weight:bold;letter-spacing:0.2px"><div style="width:389px;text-align:center">CLEAR RESULTS</div></div>
<div class="abs" style="left:523px;top:537px;width:829px;height:600px;background:#fff;border-radius:12px;box-shadow:0 0 3px rgba(0,0,0,0.08)"></div>
<svg class="abs" style="left:0;top:0" width="1866" height="1117" viewBox="0 0 1866 1117">
<g stroke="#ebebeb" stroke-width="1">
<path d="M619.7 567V1053"/>
<path d="M719.1 567V1053"/>
<path d="M818.6 567V1053"/>
<path d="M918.0 567V1053"/>
<path d="M1017.4 567V1053"/>
<path d="M1116.9 567V1053"/>
<path d="M1216.3 567V1053"/>
<path d="M590 991.9H1243"/>
<path d="M590 902.0H1243"/>
<path d="M590 812.0H1243"/>
<path d="M590 722.0H1243"/>
<path d="M590 632.1H1243"/>
</g>
<defs><clipPath id="ax"><rect x="590.5" y="567.5" width="652.5" height="486"/></clipPath></defs>
<g clip-path="url(#ax)" fill="none" stroke-width="2.1" stroke-linejoin="round" stroke-opacity="0.8">
<path stroke="#1f77b4" d="M634 983l 1-1 1.5-2.5 2-2 2.5-1.5 1.5-1 2-1.5 1.5-1 0-2.5 1-3-1.5-2.5-1-3-2-2 0-2-0.5-1.5 0.5-2 1.5-0.5 1-1.5 2-1.5 1.5-2 1-3-1.5-2 0-3 2.5-1 2.5-1 3 1-0.5 1.5 0 2.5-0.5 2 0 1 1 1 1.5 1 2.5 1.5 1.5 2 1.5 2.5-0.5 3 0 2.5-0.5 2.5-1.5 2.5 1 0 0-1 1 2 3-0.5 1 1 2.5 1.5 1 2 0.5 1.5-0.5 2 0 2 0 0.5-1 2-0.5 0.5 1.5 1 2.5 1.5 1-0.5 2 2 0 1.5 0.5 0.5-0.5 0-0.5 1-1.5 0.5-2.5-1-1-2 0-1.5 1 0 2-1 0-2-1-2.5-1.5-2.5-1.5-2.5-2.5-1-1.5-1.5-2 1.5-1 3 2 1 1.5 2 1 2 0.5 2-2 1-3 1-2.5 1-1.5 1.5-1 1-1.5 0-2 1-1 2.5-2 2-2.5 1-2 0.5-1 0.5-2.5-0.5 0.5 0-1.5 1-1.5 2-2.5 2-0.5 0 0.5 1.5 1 2 2.5 2 1.5 1.5 0 2 0-1 0.5 1.5 1.5-0.5 2.5-1.5 2-1-1.5-1-2-2-2-2.5-2-1 0.5-1 2.5-1.5-0.5-1.5 0.5-2 1-1.5-0.5-2.5 0-3 0-1 2.5-1.5 2.5-0.5 3 0.5 M675 977l 1 1.5-0.5 3-2 2.5-1.5 0 0 1.5-1.5 2-2.5-1-2.5 0.5-1.5 1-1.5 1.5-1 2.5-1 2.5-0.5 1-1.5 2.5-0.5 2-0.5 1-0.5 0-0.5-1 1.5-1.5-1.5-1-2 0.5-3 0.5 2.5-0.5 2-0.5 1-2-1-0.5-1 2-1.5 2.5 2 1 0 1-0.5 2-0.5 1-0.5 3 1-1.5 0.5-1.5 0.5-1 2.5 1 2.5 1 1 2 2 2 0.5 3 0 2-1.5 1-1.5-2.5-0.5-0.5-1.5 1.5-0.5 1.5-3 0.5-1.5 2.5 1 3-2-1-0.5-0.5-0.5-2 0-1.5 0-0.5-0.5 0.5-1 1.5-0.5 0.5-1.5 2.5-1 2.5-1 1.5-2 1-2 1.5-3 0-2.5 0-3 0.5-2 0 0.5 0 1-0.5-0.5 0.5 0-1.5 0-2 1-2 1.5 1 2 0.5 1-1 2-1-0.5-1-2-1.5-2-2-1.5-2-2.5-1 1-2.5 2-2 1-2.5-1.5-0.5 0-1.5 0-3-0.5-1.5-2-1.5-1-0.5 1-1.5 0-1 0-1.5 1.5 1 1.5-0.5 2-2.5 1-2.5 2.5-1 2-1.5-1.5-0.5 1.5-2 1.5-1-0.5 0 1.5 0 1 0-1.5 0 0.5-2.5 1.5-2.5-1.5-2-2-2-3-0.5-2.5 0-2.5-1 0.5-0.5 0.5-2.5 2-1 1.5-0.5 M658 1004l 1.5-0.5 1 1 0.5 0 1-1 1.5-2.5 2-2 0.5-2.5 1.5-1 2 0-0.5-1.5-0.5-3 0.5-2 0.5-1.5-1-2.5-2-2-1-1 0.5-3 0-2-2-2.5 0.5-1 1.5-1 0.5 0.5 1.5-1 0.5-1.5 0.5-0.5 1-0.5-1.5-2-1-2.5-1.5-2.5-2-2-2.5-1.5 0.5-2 2-1.5 0-2-1.5-0.5-2.5 0.5-1-3 0.5 0-0.5 0-2.5 0.5-3 0-2-2-1 1-0.5 1.5-0.5 0 1 2-0.5 1.5 0-1 2.5 1 1 2.5 1 1 2.5 0.5 2.5 2 2.5 1.5 0-2 1-2.5 1-2.5 0-3 1.5-2.5 0.5-2.5 1.5-2.5 0.5-2.5 1-2-0.5-1-0.5-1.5-0.5 0.5 3 0 2 2-1.5 0-2.5 0 1.5 1 2.5 1.5-1.5-2 0.5-0.5-1.5 2-2 2 0.5 1-1.5 2.5-1.5 2-1.5 2.5-1.5 1.5-1.5 2-3 1-2 2-1.5 2.5-1.5 0.5 0.5 3 0.5 1 0.5 0.5 0 3 0.5 3 1 2 1.5 2.5 0.5 2.5 2.5 2 1 2.5 0.5 1 1.5 0 0.5 1 0 0.5-0.5 0 1.5-0.5 0 3-0.5 2.5 1.5 2.5-0.5 3 0 2.5 0.5 3 2 1 2.5 1.5 1 1 2 2-1 1.5-0.5 2-1.5-0.5 0-0.5-0.5-1-1.5 1-0.5 0 M657 991l-0.5 1-2 2-2.5 1-0.5 1-1 1-2.5 1-0.5 0 1-1-0.5 0.5-1 1.5-1.5 0.5-3-1-2.5-1-1.5-1.5-2.5 2-2.5 0-0.5 2-2 0-2 2 0 2 0 3 0 2-0.5 3 1 2.5 0.5 2.5-1 0-1.5-1 0-0.5 0.5-2 1.5-2 2-2-1.5-2.5 1.5-1.5 1.5-0.5 1.5 0 1-0.5 1-1.5-0.5-1.5 1-1 1.5 0 3-0.5 2.5 1.5 2 0.5 2.5 2 2 1 1.5-1 2.5-2-0.5-1.5-2-2.5-0.5-2.5 0.5-3 0.5-1.5 2.5-0.5 2.5-1 1.5 0.5 0 0.5 0 2-1 1.5-0.5 1 0.5 1 1.5-1.5 1-3 0.5-2.5-1-3 1.5-1.5 1.5 0.5-0.5-3-1-3 1 0.5-0.5 2.5 1 2.5 1 3 0.5 0.5 1-1.5 1-2 1-1.5-1 0.5-2 1-2.5 0-3 0-2-2-2-2-0.5-2.5-2-2.5-1.5-2.5-1.5-1 0-0.5-0.5-0.5-0.5-3 1-2.5 1.5 0.5 3 1 0.5-0.5 1.5-2 1.5-1 3 0 3-0.5 2.5 0 2 1 1.5-0.5 2.5-1.5 1.5-2 0.5-3-0.5-3 1.5-2 1-0.5 0.5 0.5-2.5 0-2.5 0.5-2-1.5-2.5-1.5-0.5-2.5-2.5-2-2-1 0-1-1.5-1.5-0.5-0.5 0 3 M657 970l 0 0.5 1-2-3 0.5-0.5 0-2-2 0.5-2.5 0-1.5 1 0 1 2.5-0.5 0 0.5 1.5 1 2 0-1 2.5 1.5 3 0 0.5-2 1-1 1-2.5 1.5-2.5 1.5-2 1-1 1.5-1 0.5-0.5 0-2.5 1.5-3 0.5-2 1-2.5-2 0-2.5-0.5-1-0.5 0.5 0 2 0 3-1 2-1.5 1-1.5 2.5-2 0-1-0.5 2-1.5 2.5-1 0-1 0.5-1.5 0.5 1 1.5 2 1 0 0.5-0.5 0.5-0.5 2 0 1-1 0-0.5-1-1 1-0.5-0.5-1.5 1-0.5 2-1 0 1 1 1.5 1.5-1 1.5-0.5 2.5 0-1.5-1-0.5 1 1.5 2 2 2 2-0.5 3 0 1.5 0.5 2-0.5 2-1 2-1.5 2.5-3 1-2.5 0.5-2 1-1.5 1 1-0.5 1.5-1.5 0-0.5-1 0.5-0.5-0.5-0.5-0.5-2.5 0-2.5 1.5-1.5 2.5-1.5 2.5 0.5 3 1 2.5 0.5-0.5-2.5-1-1-1-0.5-1.5-1-2 0-3 0.5-2.5 0.5-3 0-3-1.5-2.5-1.5-2-1.5-2.5-2.5-1-1.5-2-1-2.5-0.5-0.5 0 0.5-0.5 2-1 2.5 0.5 2-1.5 2.5-2.5 1-2 2-1.5-1 0 2 2.5 1.5 2 2 2.5 2 0 2.5 1.5 0.5 0.5 1.5 0.5 2 1.5 2.5 1 0.5 M636 1007l 2.5 1.5 2.5-1 2-2 1.5-2 0-3-0.5-2-0.5-2.5 0-1.5 1.5-2.5 1-2.5 0-3-0.5-3 2-2 1.5-2.5 2-2 1-2.5 0.5-2.5 1.5-2.5 0.5-0.5-0.5-1-0.5-2.5-1-3 0.5-1.5 1.5 0.5 0.5 1.5-1 3-0.5 2.5 1.5 2 1 1 1.5-1 2.5-0.5 2.5-1.5 0 0.5 1.5 0 1-0.5 1-0.5-1.5 0.5-2.5 0-1.5 0.5-2.5 1.5 0 2 2 0.5-2.5 0.5 1 2 0 1 1-1.5 0.5-2.5 2.5-1.5 2.5-1 0.5 2-0.5 2.5 2 1 1 1.5 1-0.5-0.5-1.5 1.5-1 2.5 0.5 2.5-1 3-0.5 1-1.5-1.5-2.5-1.5-2.5-2-2-1-1.5-1.5 1-1.5 1.5-2.5 1.5-2 2-2.5 0-3-0.5-0.5 1.5-2.5 1.5-2-1 0.5-0.5-1-3-1-2.5 1.5-2 2.5 1 1.5-1.5 1.5 0.5 2.5 2 1.5 2-0.5 2.5-0.5 3 0-1.5 2-1.5 2-1.5 1.5 0.5 1-0.5 2.5 0.5 1.5 2 0 3 0 3 0 1-1.5 2-1 2.5 0 1 0 2.5 1.5 2.5-1 2.5 M804 877l 2 3-1 1.5-2 2.5-1.5 2.5-0.5 3-0.5 3.5-0.5 3-3 1.5-3.5 0-2.5 1.5-2.5 1-3 1.5-3 2-2 2.5-1 2.5-0.5 3.5-0.5 3.5-0.5 2.5-1.5 1-1.5 1-1.5 2.5-1.5 3-1 3.5-1.5 3 0.5 3 2 0.5 0.5 1.5 2.5 1 2 0 1.5-1 0-0.5-1.5-1.5-1.5-2.5-0.5-2 0-2.5-0.5-0.5 0.5-1 1.5-0.5 1.5 2.5 1.5 2.5 1.5 1.5 0.5 2.5 1 2 1.5 2 0 2-1.5 1.5-2.5 0.5-0.5 0.5-0.5 1-0.5 0.5 0 2.5 1.5 2-0.5 2.5-1 2.5-1.5 3-2 3 0.5 1.5 2-1.5 1-2.5 0.5-2.5 3-2 2-2 3.5-0.5 1.5 1.5 0.5 0.5 1 2.5 1 2.5 3 2 2.5 2 3 2 3.5 1 3-1.5 2 0.5 2-1.5 0.5 1-0.5 0.5-1.5-0.5-1-2.5-2.5-2-2-2.5-1.5-3 1.5-3 0.5-3.5 0-1.5-0.5-0.5-1 1-1-1.5 0.5-2.5 0.5-2 1-2-0.5-3.5 0.5-3.5 0.5-3.5-1.5-3 0.5-3.5-0.5-3.5-1-3.5-1-3-1.5-3.5-1.5-2.5-1.5-0.5-1-0.5-1.5 0-2.5-2.5-3-1.5-3.5-0.5-2.5-2.5-2 0-2-2.5-1-1 1-1.5 1.5-1 2.5 1 2 2 1 1.5 0.5-2 1.5-3 1.5-3 0.5-2.5 2 1.5 0 0.5-0.5-1 0.5-3 M811 873l 0.5 0.5 0 2-1.5 3-2 1-1.5 1 0-0.5-0.5-0.5 1.5-1.5 2.5-2.5 2-1.5 2-2-1.5-2.5 0.5-1.5-0.5 1-2 0-2.5 2 0 0.5 0.5 2.5 3-1 2 0.5-0.5 1.5 0 2.5-1.5 2.5-1.5 3-1 2.5-2 3 0 3.5-1 2.5 1 3.5 0 3 0 2-1.5 3.5 0 2.5-2 2-1.5 2.5-0.5 0.5-3 0-2.5 1.5-3-0.5 0.5-0.5-0.5-0.5-3 0-2 1.5-1 2.5 0 1-0.5 0-3 0-3.5 0-2.5-2-2.5-0.5-3.5-1-2.5-2.5-3-2-2-3-1-1.5 0.5-1 2-0.5 0.5 0.5 2.5 1.5 1 1.5 3.5 1.5 2.5 2 3 2.5 2 2.5 2 1.5 1.5 1 2.5 1 1-0.5 1.5 0 1.5 3.5 3.5 1.5 2.5 2 3-1 2.5-2.5 3-1.5 3-2.5 2-0.5 1.5 0.5 0.5-0.5-0.5-2-0.5 0.5-2.5-2.5-2-0.5-0.5 1.5 1-1 0.5-3.5-0.5-2-2-3-3-2-1 1.5 1-1.5-2.5-1-1-3.5-1-3.5 0-1.5 0-0.5 2-2 0.5-1.5 2-1.5 2.5-1.5 3-2 2.5-1.5 2 0.5 2.5-0.5 2-3-2.5-1-1.5 0-1.5 1-2 1-2 0.5-2 0-3 2-2-1-0.5-1.5-0.5 0-1.5-3-1.5-2.5 0-3-0.5-1.5-0.5-2.5 1-3-2.5 0-3.5 1-1.5 2.5-1 1.5 M764 940l-1 0.5-1.5-2-3-1.5-0.5-2 1.5-1.5 1.5 0 0.5-0.5 0-1 0.5-3 1-3 0-3.5 1.5-3 1-0.5-2.5-2-3.5-1.5-2-0.5-1-2 1-1.5 0.5-3 1-3.5-0.5-2.5 0-3.5 1-3.5-1-2.5-1-1-2-2.5 0-2.5-0.5 0 0 3.5-2 2-1 3.5-0.5 1 0.5 0.5 0.5 2-0.5 1.5 0.5 1.5 1 0.5 0.5-0.5-1.5 2.5-0.5 3.5-1.5 3-1 1 0 0.5-0.5-1 1.5 0.5 1.5 0 0.5 2.5 0.5 2.5 0.5 0.5 2.5-1 2-0.5-0.5 1 0.5 1-1 2 1 2 2 3 2 3 0.5 2 1 3 1.5 3 1.5 3 0 2 0.5 1.5 0.5 1 1-2 1.5-1.5 2-0.5-0.5 3.5 0.5 3-1 3 0 2.5 1 3 1 2 3 1.5 2 3 2.5 2.5 2.5 1.5 3 1 2.5 1 2.5 1.5 3.5 1.5 3 2 2 1 3.5-1.5-2 0.5 0.5 1.5-1-1-2.5-0.5-2-0.5-1-0.5-0.5-0.5-2 0.5-3.5 1-3 0.5-3-1-2-1.5-3-1-2.5 1-2-1-1 0-1.5-1 1-2.5-0.5-2-1-3.5-2.5-2.5-1-1.5 0-3 1.5-1.5 0-0.5 0-0.5 0.5-2.5 2-3 2-3 2-2.5 1.5 0 2-1.5-2.5-2-1.5-3-2-1.5 0 0.5 1.5-1 2-3 2.5-2.5 1.5-2 M759 876l 1.5 0 3.5 0 3.5 0 3.5 0 2.5 2.5 1 1.5 2.5 2 3-0.5 3-1.5 0.5 0.5 1.5-1.5 0-1 0-1.5 3 0 1.5 0 3 2 1.5 3 2.5 1 1 3 0 2.5-2 1.5-0.5 0.5-2 0 0.5 1-0.5 1.5 0.5 2-2 2.5-2 3-2 3-2 0.5 0.5 0.5 2 2.5 2 3-0.5 0.5 0-0.5 0.5 0.5-1.5-0.5-2.5-0.5-2.5 0.5 0.5 0-0.5 2.5 0.5 3-2.5 1-1 1 1.5 1 1.5 0.5 0-0.5-0.5 0 0 1 1.5-0.5 1 0.5 3 1 3 0 2 1 1 0.5 0 2-1.5 3-1 3.5 0.5 2 1.5 2 0 1 1.5 0.5-0.5 1.5 0-0.5 1-1 2-2.5 1-3 1-3.5 0-3.5 0-2 0.5-1-1.5 1 1-1-1-2.5-0.5-1.5-3.5-1-2.5-2.5-1-2.5 0.5-2-0.5-0.5 1-1.5-2-2-0.5-3-0.5-2-1-2-1-3.5-2.5-2-2.5-2-2.5-2.5-0.5-2-0.5 0 0-0.5 1.5-3 2-3 0.5-3.5 1.5-2.5 2-2 3.5 0.5 2-0.5 3 0.5 3-1.5 3.5-1.5 2.5 1 0 0.5-2.5-1-3.5 0-2.5 0.5 0.5 2.5 0 2 0 1.5 2 2 1 1.5 1.5 1.5 1.5 1.5 2.5 2.5 0 2.5 0.5 1.5 1.5 2.5 1.5 2.5-0.5 2-1 3-0.5 3.5 0 2.5-0.5 3.5 M682 881l 0 1.5 3.5-0.5 3.5 0 2-1 1.5-3.5 2-3 2-2.5 2 0.5 2.5 1.5 1.5 1 1 0 0.5-1 1-0.5 2-1.5 1.5-3.5 3-2.5 2.5-0.5 2 0 1.5 0.5 1 0.5 3-1 1.5-1.5 2.5 2 1.5-1.5 0.5-3.5 0-3-0.5-3.5-2.5-2.5-2-1 0-2.5 0-1.5 1.5-3.5 1.5-0.5 1.5 0 2-2 3-1.5 3-0.5 3-2 3-2.5 2.5-2.5 1.5-1 1.5-1 1.5-1 1.5-3.5 0.5-3 2-0.5 1 2 1.5 2 1 1 3 0 3.5-1.5 2-0.5 3 2.5 1.5 3 1.5 3 0.5 4-1-0.5-3 0.5-1.5-2-3.5-1-3.5 0.5-2-3.5-0.5-2 1-0.5 1 1 0.5-0.5 1 0 2.5 0.5 1.5 0 2 0.5 0 3 2 2 0 3.5-0.5 3.5-1 3.5-2.5 3-0.5 3-1 3.5 0 3-1 2 0.5 1.5 1.5 0.5 1.5 1 0.5 2.5 1 0.5 0.5 3.5 0 4-2 3-2 3-2 1.5-0.5 0.5-2 1-3 1.5-2.5 1-2-0.5 0-2.5 1.5-1.5 0-2 1-1-0.5 0.5-1 0.5-0.5 2.5-1 2-1 3 1 1 0 1 0 3 0 3 1 0.5-0.5 0-1 1-1.5 3-2.5 2-1 2.5-1 3 0 2 0 0.5 0-2-1.5-2.5 0-2.5 0-3-0.5-2-2-0.5-3.5 0.5 0-0.5 0-2.5-0.5-3.5 0-3-2-3-3.5-2-1.5-1.5-3.5-2-1.5-3-1.5-1.5-3.5 0.5-3.5 0.5-2-1.5-3-2-3.5-1-3.5-0.5-4-0.5-3.5 0.5-3-0.5 0-1.5 0.5-1.5 0.5 0 1.5 2.5-0.5 4 0.5 2-1.5 3.5 1 3 1 3.5 0 2.5 0 3.5-0.5 1 0-1-1 1-1.5 1-1 2.5-1.5-0.5-1-3.5-3.5-0.5-2.5 0 0.5-1-0.5-1.5 1-0.5 0.5 0.5 0 0.5-0.5-1 2-1 1-0.5 0 0.5 1.5 1.5 1 1.5 3.5 0.5 3 1.5 1.5 3 2 3 3.5 2 3 2 2.5 2.5-0.5 3.5 0 3.5 1 2.5 1.5 2-0.5 0.5 2-1 0.5 2 2.5 3 2.5 2 3 2 2.5-0.5 2-2.5 3-2 2.5-1.5 2.5-0.5 1.5-2.5 3-2.5 M749 943l 1-2 2-3 1.5-2-0.5-2-0.5-3-1-1 0-2.5-0.5-1.5 1-0.5 2 1-1-2-3.5-0.5-3.5-0.5-2-3-2.5-3-0.5-3.5 0-2.5 0-2 1.5-2 1-2.5 1.5-2.5 2-2.5 2.5-3 1.5-2.5 2-0.5 1.5 0 3.5 0.5 1-2 1.5-2.5 1-2.5 2.5-1 0-1-0.5-2.5 0-3 0.5 0.5 1.5 1.5 0.5-1 1.5-2 1-2 0.5 1-0.5-0.5-2-3-2.5-2.5-2-3-3-2.5-1.5-3-2.5-2.5-2-3.5-2-3-0.5-3.5 0-3.5 0-2.5-2-3.5-1.5-2-2-3-2.5-2.5-1-2.5-2-3-1.5-3.5-2-2.5-3-2-4 0-1 1 1 1-0.5-0.5 0-0.5-0.5 0.5-1-0.5-1 0-1 1.5-1.5 1 1 2.5 0 1.5-0.5 1.5 0 4-0.5 3.5-1.5 3-1.5 1.5-0.5 1.5 1 1 1 2.5-2.5 0-1 1-3 0.5-4 0-1-0.5 1.5 0.5 0 2.5 0.5 3.5 2 3 2.5 1 0.5 1.5 0.5 2.5-0.5 3.5 1.5 3.5 1.5 3 2 3.5 0.5 3 0 0.5-0.5 1 0 0.5 0 1-1.5 2-0.5 2.5-2 1-2 0 1.5-1-0.5 0.5-1.5-2.5-2-3-2-3-3-2-2.5-2.5-3-2-2.5-1.5-3.5 0-4 1-3 1.5-3 1.5-2 2-1.5 2-3 2.5-3.5-0.5-3-0.5-0.5 1.5 1 1 1 2.5 1.5 3 1.5 2 0-0.5 0 0.5-1 1-1 2.5 1.5 3 0 3.5-1.5 2-1 1-1.5 3.5-1 2.5-0.5 0 1-0.5 2-1 2.5-3 2.5-3 1-3.5-0.5-2 3-2 2-1.5 2.5-1.5 2-2 3-0.5 3.5 0.5 4 0.5 3.5-0.5 3.5-0.5 3.5-1 4 0 3-1 1.5 1 3.5 1.5 3.5-0.5 1-2.5 0-2-0.5-1 1-0.5-1.5-0.5 0-2-2.5 0.5-0.5 0 2.5 1.5 2.5 1.5 3 2 3 1 3-2 3-2.5 2.5-2 3-1.5 3-1.5 3-1.5 3-2 3-1 1.5-1.5 3-1 1.5-3.5 2-2 2.5 1 2.5 1.5 1.5 1.5 1.5 2 0 3.5-1.5 3.5 0.5 3-0.5 4 0 2.5-1 3.5-0.5 3.5-1 2.5-2 2 M753 898l-1-0.5-1-1 0-2.5-2.5-3-2-0.5-1.5 0-3 1-2.5 1.5-2.5 1-3 0.5-3.5 1-3 2.5-3 2.5-2.5 2-3 1-3 2-2.5 2.5-1 2-1.5 1.5 0.5 1.5 0.5 3 0 4-1 3.5 1 1.5 1.5 2.5 2 0.5 1.5 0 1 2 0-0.5-2-1.5-0.5-1.5-2.5 1-2 1.5-2 3-2 0.5-2.5-0.5-2.5 1.5-3 0.5 1 1.5 0 1.5-1.5 2.5 0 1.5 1.5 1.5 1.5 1 0-1 0.5-0.5 0-1-1.5-1-0.5 0-1 1 1.5 1.5 3 2 3.5 1.5 3.5-0.5 3 0.5-1-1.5 0.5 0 2 1-3 1.5-3 1-3 0-3.5 2-3 2-2 1-3 0-3-2.5-1-2.5-1-3.5-0.5-0.5 1 0-1.5 0-0.5 1-0.5-1-0.5-1.5 1.5-1 1.5-1.5 2-2 0.5-3.5 1.5-3 2-2.5 2-2.5 2.5-3 1-3.5 0-3.5 0.5-4-2.5-2-0.5-1-0.5-1-3.5-1-4 0-3 0.5-4-1-2.5-0.5-2-0.5-2-0.5-0.5-3-1.5-3-1-1-3-1-3.5-1.5-3.5-1.5-3-2-2.5-2.5-3-2.5-3-1.5-1 2-1-0.5-0.5 0-0.5-1.5-1-2-2-3 0-4 0-3.5-0.5-1.5-0.5 1 2 1 3 0 2 1.5 2 2 3 2.5 3.5 1 3 1.5 3 0 3.5 0.5 4-0.5 3-1.5 2.5-1.5 2-2 3.5-1 2.5-1.5 3-1 2 0.5 0-1 2.5-3 1.5-1 1.5-2.5 0.5-3.5-0.5-3-1-2.5 0-1.5-2-2-1-2-1-3.5 0.5-2 3.5-0.5 3.5 0 3 0.5 1 0.5 1.5-1 3 0.5 3.5 1 3.5 0.5 1.5-1.5 3-0.5 0.5 0.5 1 2.5 3 1 3 0 1.5-1 2 0.5 1.5 1 1 0.5 3-0.5 3.5-1 2 0 0.5-2 0-1.5 0.5-4-0.5-2 0.5-3.5 1-2.5 3-2.5 3-1.5 3.5-0.5 2-0.5 2.5 0.5 1-0.5 2 0.5 0.5-1.5 1.5-2.5 2-0.5 2-3.5 1-2 1 1 0.5 1.5-0.5 2-1 2.5 1 3 0.5 3.5 1 3.5 1 3.5 0 3.5 1 2 1.5 2-1.5 1.5 0 1-1 3-2 1.5-2 2.5-0.5 1.5 M661 862l 1.5 1.5 1.5 1 2 1.5 3 1 2.5 2.5 2 1.5 3 2 3 2.5 2.5 1.5 3 1.5 3.5 2 0.5 2.5 0-1.5 1.5-1 1-2.5 0-2.5-1.5-2.5 0-1.5 1-2-0.5-2.5 0.5-1 1-1 2-3.5 0.5-3 0.5-3 1-3.5 0.5-2-1-3.5-1-0.5 0.5 1.5 3 0.5 2.5-1 4 0 3.5 1 3.5 0.5 3 2 2 0 2 1.5 2.5 1 3.5 1 0.5-1-1.5-1-1 0 2.5-1 2.5-1-1-2-1.5-1-1.5-2.5 0.5-1.5-0.5-2.5 0-0.5 2.5-2 3.5-1 3.5 0 2 1.5 0.5 1 0 2.5 2.5 3 3 1.5 3 2 3.5 1 3 0.5 3.5-0.5 3.5 1.5 2.5 2.5 3 2 3.5 1.5 3.5 0.5 1.5 2 1 0 2-1.5 0.5-2 1-1.5 1.5 0 1.5 0 1 0.5 3.5 2 1 3 1 3.5-2 2.5-2 2.5-2 1-3.5 1-1 3.5-1 3.5-1.5 1.5 0 2.5-0.5 2 1 3 0.5 3 0 2-0.5 3.5-1.5 2 1.5 3.5 1.5 3 1.5 1 1 2 0.5 2.5-0.5 3-2.5 2.5-3 1-2.5 1.5-2.5 2.5-2 3-1 2 1.5 0.5 1.5 1 2.5-0.5 0-0.5 0.5 0 0 0.5-1-1-1 0.5 0 0.5 1.5-0.5 2-1.5 2-1.5 0-1.5 1.5-1 2-0.5 1.5 1 2-0.5 1 1 0 1.5-1.5 2.5-2 2.5-1 3-1.5 2.5-0.5-1 1.5 1-0.5 3-0.5 3.5-3 2-2.5 1.5-2.5 1.5-3.5 1-3 2.5-2.5 2.5-2.5 0.5-3.5 1.5-3.5 1-3 0-3 0-3 1-2.5-0.5-2-2-0.5-2-2.5-3-1.5-3 0-1.5-2-1.5 0-1-1.5-3.5-3.5-1-2.5-3-1.5-2.5-2.5-2.5-3-0.5-3.5-1-1.5 1-2.5 3-1 0 1-2.5 1-3.5-2-1.5-1.5-1.5-1-2-2-2.5-1.5-2-1.5-2.5-2-3-2-3.5-0.5-3.5-1.5-2.5-0.5-1-1 2-1.5 2.5 2 0.5 2 1-0.5 0 0-1.5-1 0-1.5 0.5-2.5-0.5-3.5-0.5-2 0 0.5 0.5 0 3.5-1 2-0.5-0.5-1 1.5 0 0.5-1 1-1.5 1.5-1.5 1.5-0.5-0.5-1 0.5-1.5-0.5-1 0 2-2 M699 921l 0.5 1 0.5 1 0.5 1.5 1 2-0.5 0-3.5 0-1.5-1 2-2.5 2-3 1-3.5-0.5-4 2-2.5 2.5-3 2-2 1.5-2.5 1.5-2 3-0.5 0.5-3 1-2.5 2-1 1.5 1.5 1.5-1.5 3-1 2.5-2.5 2-2.5 2-1 3 1 4 0 3.5 0 0.5-3 0-3.5-0.5-1.5-2.5-2.5-2-1.5-2.5-2-3.5-1.5-3.5-0.5-2-1-2-0.5-1 1.5 0 2 0 1-0.5 1 0.5 2.5 3 0 1-2 0-3.5 1-2-1.5-1-0.5 1.5 0 1.5-1 1.5-0.5 0.5-2.5 2-3.5 0.5-2 0.5-1-1 0-2.5-2.5-3-2-3-3.5-0.5-3.5-0.5-3-1-2.5 0-2.5 1-3 0-3-1.5-2-1-2.5-0.5-2-3-2-2.5-2-2-3-1-2-3.5-3-2-3.5-1-2-2-1.5-2-1 0 0.5 0.5 1.5 1 0 3.5-1 3 2 3.5-0.5 3-1.5 2.5-3 2-1.5 3 2 0.5 0.5 0-0.5 1.5 0 0.5-1.5 0.5-1 0.5-2.5 0.5-0.5 1.5-2 2.5 0 3-1 0.5-0.5-0.5-1.5 1.5 0.5 2 2 3 0.5 3.5 1 4 2.5 2.5 3 2 2 1 2-1 2-0.5 1-3-1.5-0.5-2 1.5-2 2-3 1-2 2 1 3-0.5 3-0.5 1.5 1.5 3.5 0.5 3.5 2.5 1.5 3 2.5 2 3 2 3 3 1.5 3 1 2 0 1-1.5 2.5-3 2-2.5 1-0.5-0.5 1.5 0.5 1.5 0 2.5 2 2 1.5 3.5 1 3.5 0.5 2-1.5 1-2.5 0-0.5 0.5-0.5-1-0.5-2.5-2 1-0.5-0.5 1.5 2 0.5 1.5-1-0.5 1.5 3 1 0.5 3 2 2.5 2.5 2 2.5 3.5 1.5 3.5 0.5 3.5 0.5 1 0.5-1-1-2 0.5-1.5-0.5 1 0.5 1.5-2.5 2-2 2-0.5 0.5 1 2.5 2.5 2 1.5 2.5 1 3 0.5 1.5-1 0.5-1 0.5-3 0.5-1 2-3 0.5-2 0.5-2 0.5-1.5-0.5-0.5-1.5-1 1 0 0.5-0.5 0-1.5 0-0.5 0 0.5 0.5 0 0 0.5 0.5 0 0-3.5 1-2 0.5-2 1-3.5 1.5-2.5 3-1-0.5-0.5-0.5 0.5 1 1 1 3.5 1 0.5 2-1.5 M798 834l-1.5 1.5-2 0-1.5 1.5-1.5 0.5-3 2.5-3.5 1-3 1.5-3.5 2-2 0.5-2.5-1-2 1-2.5-0.5-2.5 0-2-2.5-3.5-1-3.5 0-2.5 0-3 0.5-2 1-1.5 0-1.5-1-2.5 0-2 1.5-0.5 2-1.5 2.5-1.5 3-1 2-2 3.5-2.5 2.5-2 3-2 3-2 3 0 3-1 3.5-2.5 3-3.5 1-3.5-0.5-2 0.5-2 2.5-1.5 1.5-3 2.5-1.5 3.5-2.5 2.5-2.5 2.5-2 2.5-1.5 2.5-2 3-2 3-1.5 1.5-3.5 0.5-3.5-1-2 1-1-1-4 0.5-1 0.5-0.5 0.5-2 2-2 3 0 2.5 2 0.5 2.5 1 3.5 0.5 1 3-1.5 3-2 3-2 3.5-2 0.5-3 2-2.5 0-3 2-2.5 0.5 0.5 0.5-0.5 1 0.5 2 0-0.5 1-1-1.5-2 0-3 2-3 1.5-3.5 0.5-3 1.5-2.5 2-3 1.5-3 1-2.5 0-2 0-0.5-1 0.5 1 2.5 0.5 0.5 1 0 0-0.5 0.5-1.5 0.5-2.5 1-4 2.5-2 2.5-3 3-2 3.5-1 1.5 1-0.5 2 0-0.5 1.5-0.5 0-1.5 1.5-3.5 0.5 0 1 1 2.5-2.5 1.5-1 1 1.5 1.5-0.5 2 1.5 1.5 2 0.5 0 0.5 0.5 1.5 0.5 3.5-1.5 1-0.5 1-3 2.5-2.5 2.5 1.5-0.5 0-1.5-0.5-1.5-0.5-3-0.5-2 1-3 2-1.5 1-2 1.5 1.5 2 0 1.5-1 3.5-3.5 1-2 2-3 2.5-3.5 0.5-2 0-1.5 1.5-3 2.5 1 2 2.5 3 0 1.5 0-1.5 1 1 2.5 1 3.5 2 3 1.5 3.5 1 3 2.5 1.5 1-0.5 1 0.5 3 1.5 3 1.5 2.5-0.5 3.5 0 3-0.5 2.5-3 2-2 1.5-3 2-1.5 3.5 0 4 0 0.5 0.5 1.5 2 1.5 1.5 2 1.5-1 1.5-1.5-0.5-2-3-2.5 0-3 2-2.5 0.5-3.5 2-2 0-3 1.5-3 1.5-3.5 0.5-2-1-3.5-1.5-3.5-3-2.5-0.5 0-0.5 1.5 0.5 0.5 2 2 3 1.5 2.5 2.5 3 1 2.5 3 0.5 1.5 0 1.5 1 3 1 1.5 2.5 1 2 0.5 2.5 0 2.5-2.5 1.5-3.5 M721 874l 0.5-0.5 1.5-0.5 1-1.5-1-2.5-0.5-4 0-3.5-0.5-2.5 1.5-2.5 2.5-3 1-1 0-1.5-2 0-0.5-2-2-1-1 0 2 0 2-1 1-2.5-1-3.5 0.5-2.5 1 0 1 1.5 0.5 1 0 1 0 1.5-0.5 3.5-1 2.5 0.5 1 0.5 3 0 4-0.5 2.5-0.5 2-1 1.5 0 2 0 1.5 3.5 1 3.5 0 1.5 2.5-0.5 0.5-0.5 0.5-1 0.5 0 1.5 0 3.5 2 2.5-1.5 1 0 1-1.5 0.5 1 1 0 0.5-1.5 3-1.5 3.5-1.5 3-3 1-3 1 0.5 1.5-1.5 1-2 0.5-2.5 1.5-1.5 0.5-2 0.5-0.5 0.5-1 0.5-1.5 0.5 0.5 1.5-0.5-0.5 0.5 0.5 0 3-1.5 3.5 0 3-0.5 4 1.5 3.5 0.5 1.5 2.5 1.5 2-0.5 1.5-3 2.5-2 0-1.5 1.5-1.5 0-2.5 1-3.5 0-1.5 0.5-2.5 1-0.5 2-2.5-0.5-2.5-3-2.5 0-3.5-0.5-3-0.5-2 0-1 4-0.5 1.5-2 0-1.5 0.5-1 1 1 2 1.5 1 0-0.5-1-0.5-3-1 0-0.5-2.5-2-2.5 0-2.5 1-2-0.5-1-0.5 1.5-1 0.5-1.5-0.5 0-1 1.5-1 3.5-1 4 0.5 2.5 2.5 3 2 2.5 0.5 1.5 0.5-1 1.5 0.5 2.5 3 2 3.5 1 3.5-0.5 3 0.5 2.5-0.5 2-1.5 0.5-3.5 2-2 1-3.5 0.5-0.5-1-1.5-2-0.5-3-0.5-3-1.5-4-0.5-3-1.5-1-1.5 2.5-1 1.5-1 4 0.5 2.5 0 1 0.5 0-0.5 0.5 0.5 1.5 1 1-2.5 1-3 1 0 1.5-3 1-3 1.5-2.5-1.5-3.5-1-3.5-1-3.5 0-3-1-3-0.5-1-2-3.5 2-2 1 1.5-0.5 0-2 0-2 0.5-2.5 2-1-1.5-1.5-2.5-1.5-2.5 1.5-3-1-2-3 0.5-1 1.5-2-0.5-1-2.5-1.5-3.5-1.5-2 0-0.5-1-0.5 2 2 1.5 3-0.5 3.5-1 0.5 0 1.5 1 0 0 0.5 0.5 1.5 1 3.5 0.5 3.5 1.5 3.5 1.5 3 1 3.5-1.5 1 1.5 2.5 2.5 3 2 1.5 1.5 0.5 3 1.5 2.5 2.5 1.5 1 3.5 2 2 3 2 3 M645 902l-1.5-3.5 0-2.5 1.5-3.5 0-2 0.5-3.5-2 1-1.5 0-3.5-1.5-2-1-0.5-2.5 1-0.5 0.5-1-1.5-2-2.5-1 2-2 2-0.5 3-0.5 1 1 1.5-1.5 0.5-3 2.5-1.5 3.5 1 2-1.5 1-1.5-2.5-2-0.5-3 0-4 3-0.5 1.5-1.5 1.5-1 2.5 0 3.5 1.5 3.5 0.5 2.5 0 3.5 0.5 3.5 1.5 3 2.5 1 1.5 2.5 2 2-1 1-2 1 0 2-2.5 0.5-1.5 2.5-2 2-3 0.5-4 1-3.5-0.5-3.5 0.5-3.5 1.5-3 0.5-1.5-1-0.5-3.5 0.5-2-1 1 0-1 3-1 4-2 3-1.5 2.5-0.5 1.5 1 2 1 1.5-1 2 0.5 2.5 0 2 1 3.5 0.5 2 3.5 0.5 3 0.5 3.5 1 0.5-0.5 0 0.5-1 0-3-1.5-3-1.5-3-2 0-3 1-1 3 1.5 0.5 2.5 1 3.5 1.5 2.5 2.5 2.5 1 2.5 0 1.5 0 3.5 0 3.5-0.5 3.5-2 3.5-1.5 2.5-1 2.5 0 3 0 2.5 1 1.5 1.5 1.5 2.5 1.5 1.5-0.5 1.5 0.5 0.5 0.5 M842 788l 2 2.5 2.5 1.5 1.5 0-2.5 1-1.5 0.5-1.5 1 0.5 0.5-0.5 1 0 3.5-1 2.5-2 1 1 0 0.5-1.5 1.5-2-1.5-1.5-0.5-1.5-0.5-2.5-1.5-2-2.5-2-3-2-1-1.5 0-1.5 0-2-0.5-3.5 0.5-3.5-1.5-3-3-1.5-2.5-2-1-3.5-1.5-2 0-1.5-1.5-0.5 0 2.5 2.5 1 3 0.5 0.5 1 2-2.5 2-2.5 3-2 2 0.5 0.5 3-1.5 1-3 1-2.5 1.5-1 2 0.5 2.5-2 1-2-1-3.5-1.5-2-1.5-3-1-3.5-1-1-1 0-1 1-1-0.5-1 0.5-3-1-3.5-1-3-2-3-1-0.5-2-2-1-2.5-1-3-1-2.5-1.5-2.5-1-3.5-1-1 1.5 1 2 1 2 1.5 3-0.5 2-0.5 2.5-1 1.5 0.5 3-1 3 1 2 2 0 1 1.5 2.5 3-0.5 0.5-1.5 2 0 3 0.5 2.5-0.5 1 1 0.5 2.5-1 3-2 2.5-2.5 2-3 1-3.5 0.5-1-0.5-1 1-2.5-1.5-1.5-3-2-1.5-1.5-1-2 1-1 3.5-2 2.5-1.5 3-0.5 3 2 2 2 2.5-0.5 3-2.5 1-1-1-1.5 1 2.5 1 2-0.5 1 1 1.5 1.5 3 2 1 0-0.5-0.5-0.5-1-2-1.5 0-1-3-1.5-2.5-0.5-2 0-1.5 0 0.5-1 1-1 2-1.5 1.5-3 1-1.5 2-2.5 0.5-2.5 1.5-1 1-1.5 2-2.5 1-0.5 0-1 2-0.5-0.5-0.5 0 0.5 0-1 0 0.5 0.5 1-0.5-1.5 2-2 1-1 1 0 2 3 1 3-1.5 3 0 2.5 2 2.5 2.5-0.5 1 0.5 0-1-0.5 1.5 0.5 3 0.5 3-3 1.5 0.5 3 0.5 2-1.5 1.5-1.5 0.5 1 2 0.5 3 0.5 3.5 0 3.5-1.5 2.5 0 3.5-1.5 1.5-1.5 0.5-1 1-1 2-2 3-1.5 3-0.5 3-2 3-1 2.5 1.5 1.5 2 2.5 0.5 3.5 2.5 2 3 1 2.5 2 3 1.5 2 0.5 0.5 0 2 0 1-1.5 2-1-0.5 1.5 1.5 1 1 1.5 2 1.5 1.5 1.5 1.5 2.5-0.5 1.5-2-1-1 0-2.5 1 M830 761l 2-1.5 2.5-1 1-1 0.5 1.5 1 1-0.5 0-0.5-1.5-1.5 0.5-1.5 1-1.5 2.5-0.5 3-1.5 1.5-2 0-1.5 0-2 0.5-0.5 2-1 2-0.5 2.5-0.5 1-0.5 0 1 0 1 0.5 0 1.5-1 2.5-1.5-3-1-1-1-1-1-1-1-0.5-1.5 2.5 0.5 1.5 2 2.5 2 2.5 1 2-1.5 1.5 0.5 1-1.5 3 1.5 3.5 0 1.5 1 2.5 0 0.5-1.5 0-2-1.5-0.5-1.5 0-1 1.5 0 0-2 0.5-1.5 2.5-0.5 3.5-0.5 1.5 0.5 0-1 0.5-1.5 2.5-2.5 2.5-1.5 3-1 2-3 0 1 0 1 1 3-1 3-1.5 3-2.5 1-3 1.5-2 2.5-3 1-2.5 2-1.5 2-3 2-2 2.5 0.5 2.5-0.5 3.5 0 3.5 0.5 3 0 3.5-2 2-2 2-1 2.5-3 1.5-3 1.5-2 3-1.5 2-2 3-1.5 2.5-1.5 2.5-1.5 3-2 2-1.5 3-1 3.5 0.5 3 0.5 3.5 1.5 3-1 2.5-1.5-0.5 1.5 2 2 2.5 3.5-0.5 3-0.5 3.5 0.5 3-0.5 2.5-1 2-1.5 0 0.5-0.5-0.5-1-1 0.5-1.5-1-2-1-3 0.5-0.5-0.5 2 2 0 3-0.5 2-2.5 3-1.5 3 0-0.5 0.5 0 2 1.5 2.5 1 3 0 1.5 0.5-1.5-0.5-3 1-1.5-1-3-0.5-3.5-1.5 0-1.5-2-2-1.5 1-1.5-1-2 1-3.5 0.5-1 1-2-1-2 0.5-1.5 1-1 3-1.5 2.5-2 3.5-0.5 2.5-1.5 1.5-3.5 0-2.5-1-2-0.5 0-0.5-2-2.5-2-1-0.5-1-1.5-1.5-2-1.5-1.5-1 1.5-0.5 1 1 1-0.5-1.5-2-1-1-1 0.5 0.5-1 3 2.5 2 1.5 1.5-1 0.5-2 0-1.5 2-2.5 1-2.5 2.5 0-0.5-1.5-1-2-0.5-1-2-1-2-0.5-1.5 0-1.5 1.5-3 1.5-3 2-1.5 2-1 2.5 0 1.5 0 2.5 0.5 2 0.5-1.5-1.5-1.5 0 0.5-0.5-1-0.5 0 0.5-0.5-1.5-2-3 0-2.5 3 0 3-1.5 2.5-0.5 0-3-1.5-0.5-1.5-3-1.5-1.5-3 0.5-3 1.5-1.5-0.5 M812 772l 0-2.5 0-0.5 0 1.5 0 1 2.5 2 1.5 2.5 1 2-0.5 3.5 1.5 0-0.5 0.5-0.5-1.5 0-2.5 1.5-0.5 3-0.5 3-1.5 3.5 1 2.5 0 3.5 1 0-2-1-2 0.5-0.5 0.5-0.5 2-0.5-1-3 0-2-2-2.5-2 0-3.5 0-1.5 1 0 3.5-1 2.5 0.5 3 1 2.5-0.5 3.5 0 1.5-1 0.5 0.5 1 2 2.5 1.5 3.5 1.5 3 0.5 3 2 3 1 3 2.5 1.5 1.5 3 0.5 1-2 1.5-1.5 3-2 1-2-0.5 0-0.5 2 1.5 3 1 3.5-1 1.5-1.5 2.5 0 3-0.5 0.5 0-1 2.5 1.5 2 0.5 2 0 0.5-0.5 0.5-2 3 0 2.5-1 0 2.5-1.5-1 2.5-1 3 0.5 3.5-1 3 1 3.5 2 2.5-2 3 1 2 1.5 1-2 1.5-3.5 1-3-1-1.5 0-2.5-1.5-1-1.5 0 1.5 0 1 0.5 1.5-2.5 2-0.5 2-1.5 3-2.5 0.5-2.5-0.5 0-1-2.5-0.5-3 1.5-2 2.5-0.5 2.5-1.5 3-1 1.5-2 3-1.5 1.5-2.5 2-1.5 3-0.5 1.5 1.5-1-1-1 1 1 1.5 1 1.5 0 1.5 1 1 0.5 2.5 1 2 1.5 0-0.5-1.5 0.5 0.5 1 1 1 0.5 0.5-0.5-1.5 1.5-0.5 1.5-1 0.5-1 1-3-0.5-3.5 1-3-1-3.5 0-3 2-2-2-2-1-3-0.5-3-1.5-3-0.5-3-0.5-3.5 0-3 2-0.5 3-1.5 2.5-2 2.5-2.5 0-2.5-1.5-1 0-0.5 0-1.5 0.5-1.5 0.5 1 0.5-0.5 0 1-1-1 0.5 0.5 2-1 2-2.5 1.5-3 0.5-1.5 0-3.5 1.5-2.5 0-2 0-1-1-3-1.5-1-1.5 0.5 0.5-0.5 0.5 1 2 0.5 1.5-2 0.5-0.5 2.5-0.5 3-1.5 0.5-0.5 0.5-2-1-2-2-1-3-0.5-3.5 0-3.5 0.5-2 2.5-3.5-1-1.5 0-3 0-1.5 1.5-1-1.5-3 1-1.5 1.5-2 0-1.5-1.5-1-3-1.5-1.5-1-2.5 1.5-0.5 1.5-3 3-1 1 0.5 0-0.5-1-1-0.5 1-1 0.5-0.5 0-1.5-0.5 1 0.5-1-1-1.5-2 M826 692l 1-1.5 1.5 1-1.5 0.5-1 0.5-1-2-0.5-2.5 0-2-0.5 0.5-1 0-2-1 0.5-1 0-2.5 1-2.5 1.5-2.5-0.5 0-2 1-0.5 3 0.5 2.5-0.5 2.5 0 3 3 0.5 0-1-0.5 1 0.5 1.5-0.5 0.5-0.5-1 0.5-1.5 0-3-2-1-1.5-1.5 2 0 2-1.5 1.5-1 1 0 1.5 0.5 0-1 1.5-0.5 0-1 0.5-1-0.5-0.5 0.5-2-0.5-1.5-2-1-1-2.5-2.5-2-1.5-2 0.5-1.5 0-1.5-0.5 0.5-1-1-1.5 0.5-1.5-1.5-0.5 0-0.5 0.5-1.5 1.5-2 0 0-2 0-1.5 0-2 0.5-2-0.5-1.5 0.5-3 0-3 0-2-0.5 0 0-2.5 0-2.5 0.5-2.5 0-2.5 0.5-3 0.5-0.5 1.5 0.5 0.5-0.5 1.5-1.5 2-2 1-2 2-0.5 2 1.5 1 1 1.5 2.5 0.5 3 0.5 0.5-1 0.5 1 0.5 0 1.5 1.5 1 0.5 2 1.5 2 0.5 2-0.5 3 2 2-1 1.5-2-1-1.5 0-1.5 1.5-1 0.5 0-0.5-0.5-1 0.5-0.5-0.5 0.5 0.5 1 2 0.5 2 2 1.5-0.5 2 0 2.5 1 2 2 1.5 2.5 0 1-0.5 3-1 2.5 0 1-1.5-0.5 0.5-1 0.5 0-1 1-2.5 1.5-2.5 1-1.5 2 0 0.5-1.5 0 0.5-1 0-0.5-2 1-2-0.5-2 0-2.5 0.5-2 1.5-0.5 0-2.5 0.5-1.5 2-1 2.5-0.5 0 1-0.5-0.5 0.5 1 0.5 1.5 0 0.5 1.5 1 2 1.5-2 2 0 2-2 1 0 1 1 0 1 2 1.5 2.5 1.5 3 0.5 1.5 0.5 M838 707l 0.5 1 0.5 1 0.5 0.5 1.5 0 2.5-1.5 1-2.5 2-1.5 1-1 0-3-1.5-2.5 0-2.5 0-2 1.5-1.5 0-2.5 0-3-0.5-3-1-2-0.5-3 2-1 0-2.5-1.5-1.5-2 0-2.5 0.5-1.5 0.5 0.5 0.5-1-0.5-1.5 0.5-1 1-1 1.5-0.5 0.5 0 1 0 3-0.5 1.5 1 2.5 1 2.5 1.5 2.5-1.5 2-3 0.5-2.5 0-3-0.5-3 1.5-2.5 0-2.5-0.5-0.5-1-2-1.5-1 0-1.5 0 1 2.5 1 0-0.5 1 0.5-1.5 0-2.5-0.5-1.5 0.5 0-2 0-1-2 0-2.5 1-2 1-1 2-2.5 2.5-1 2-1.5 2-1.5 1.5-2 2-2.5 3-1 2.5-1 3-0.5 2.5 0-0.5-2.5-2.5-2-1.5-1-0.5 0.5-1.5 0-1-2-2.5-1.5-2-2-2-2 2.5-2 0-2.5 0.5-2.5 1-3 1.5-2 0.5 1 0-1-0.5-2.5 1-1.5 0-1.5 1-1 0.5-2.5 0-2.5 1-2.5 0-2.5 0-1-0.5-0.5-0.5 0-0.5 0.5-1.5-1 2 0 0.5 1.5 0.5 2-1 1-1-0.5-1.5 1.5-0.5 0.5-2 1.5-1 0.5-0.5-1.5 2.5-0.5 1-2 2 0 2.5 0 1.5 2.5 1.5 1 1.5 0.5 2.5 1.5-1 0.5 1 1 0.5 1.5 0.5 0.5 0 1 1.5 2 1 1.5 1.5 2.5 1 1 0-2-3-1-0.5 0.5 1 1 0 1.5-1-1.5-1-2.5-1.5-2.5-1-2-2-2.5-1-2 0-1 0.5-0.5 1.5-0.5 1.5-2 2-1 0.5 1.5 2 1.5 1.5 2 0 1-0.5 2.5 0 1 1.5 0.5 M843 650l 0-0.5 0.5 0 2.5-0.5 0 2-0.5 3-1 1.5-1 2.5 0 1 1 0.5 1 1.5-1.5 2.5-1.5 0.5-0.5 1 0 1.5-0.5-0.5-1-1-1 0.5 0 1 0.5 1.5 1.5 2.5 0 1.5-0.5 1.5-1 3 1 1 1.5 0.5-1 1.5-1.5 2-0.5 1 1 1.5 0-0.5 2.5-0.5 2 0 2-0.5-1.5 0-2.5 0 0.5 0 0.5-1 3-0.5-0.5 2.5-1 2.5-1 1.5-1.5 1-1 1.5-2 0.5 1 1 2 0.5 2 0-1-0.5 0 2 1 1 0-0.5 0 1.5 0.5 0 0 1 0.5 0.5 0.5 0-1-2.5-0.5-1-2 1 0 3-0.5 2 0 3 1.5 1.5 1-1 0 1 0 2.5 1 2-0.5 2.5 1 0.5-0.5 0.5-1 2-2 2 0.5 1 1-1.5-1-2.5-1.5-2.5-0.5-1.5-0.5-3-1.5-2-2-2-2.5-1.5-2-2-2-2-0.5-3-1-2.5-1.5 0-3 0-3-0.5-2.5-0.5-3 0-0.5-2.5-2.5-0.5 1-1.5 0.5-2 1.5 0 1-2 1-2.5 0.5-1-1.5 0 0.5 1.5 M769 832l-1 0.5-1.5 0.5 1 0 0.5 0 1 0.5 1-1 2-2 2-2 1-2.5-0.5-3-2.5-0.5-2-2-2.5-1.5-2-1-1.5-2-1.5-1.5 0-2.5-1-2-1-2.5 0-3 0-1.5-0.5-3-1.5-1.5-1-0.5-1 0-1-1.5-1-2-0.5-2 1-2.5-1.5-2 1.5-0.5 1.5 0.5 2.5 0.5-1.5 1-2-1.5-2-2-2-0.5 1 0.5 2-1 1 1.5 1.5-0.5 2-1.5 2-1.5 1-2.5 1.5 0 1.5 1 0 2.5-1 1-0.5 0.5-0.5 2 2 0-1 1 1 2.5 1 2-0.5 3 0 3-1.5 2.5-1 2-1.5 1.5 2 2 2.5 1-0.5-1.5-1-0.5-0.5-1.5 0.5-1 1.5-1 1-1 0.5 1.5-0.5 0 0 2.5-0.5 1.5-1.5 2 0.5 1 0.5 2.5 1.5 1.5-1.5 2 1 2.5 2 2 1.5 1 1.5 0.5-0.5 0.5 0.5 2 0.5 3 1 1 1.5 0-0.5 1.5-2 1-2 1-2.5 1.5-0.5 2.5 0.5 3-1 2.5-1 2.5-0.5 3 1 2.5 1.5 2 0.5 3-1.5 0 0.5 0.5-1 0-2.5-0.5-3 0-0.5 0.5-0.5-1-0.5-2.5-2.5-1.5-0.5-3 0-2.5 0.5-1.5 1.5-2.5 1.5-2.5-2 0.5-1.5-0.5 1-0.5-0.5-0.5 0.5-1-3-1-2-2-1.5 1 0.5-2-1.5-2.5-1-1.5 0.5-2 2-1.5 0.5-2.5 0.5-2-0.5-2-0.5-3-1.5-2.5 1.5-1 2.5-1 2 0 1 1 0.5 1-0.5 2.5 0 2.5-1 0 0-2.5 1.5-2.5 1.5-2.5 1-2 1.5-2.5 2-2 1.5-2 0.5-3-0.5-1 1-2 0-2 M785 804l-2.5 1.5-1.5-0.5-3 0-2.5 0.5-2.5 0.5-1.5 0.5-2 1-1-0.5 0.5 1 1 1 1.5-1.5-0.5-2.5-1.5-1-2-2-2.5-1.5-3 0-2.5 0.5-0.5 0.5 0.5 0-0.5-3-1.5-2.5-0.5-0.5-1.5-1.5 1 0 2 0-0.5 2 2 1 2 2.5 2.5 1.5 2.5 1 1.5 1.5 0.5 2 1 1.5 0 1.5-0.5 2-1 2.5 0 3-0.5 3 2.5 1 2.5 1.5 1 0.5 2.5 0.5 3 0 0.5-1.5 0.5-2.5 0-2.5 0-2.5-1-0.5-0.5 0-2-0.5-1.5-2 1-3 1.5-1 2.5-2-2-0.5-1.5-0.5-1 1.5-0.5 0 3-1-1-1.5-0.5 0-0.5-1-2-1.5 0-2 0.5-2 2.5-1 0.5 0.5 2 1 0.5 0.5-1 3-0.5 2.5 1 2.5 2 2 2-0.5 1-0.5 0 0.5-2 0.5-3 0.5-1.5 2-1 3-3 1-2 2 0 2 0.5 2 1 2.5-0.5 3-1 0.5 2.5-0.5 1.5-2-0.5-0.5-1 0.5-1.5 1.5-1.5-0.5-2.5 1-1.5 0 0-1.5 2-0.5 2.5 0 0.5-0.5 1.5-1.5 3-0.5 2-1.5 2.5-1.5 1-1.5 2.5-1 2 0-0.5-2 0.5-1.5 1-2.5-1-2-0.5-1.5-1.5-2.5 0-2.5 0 0.5 0.5 1 0.5 1.5 2 0-1-2-1-1-1.5-2.5-1-1-2.5 0-1.5-2-1-3 0.5-2.5 0.5-2.5-1-2.5 0-1.5-0.5-2-0.5-3 0-2.5-1.5-1.5-1.5-2.5-1 0.5-1-1.5-0.5-2 1 0.5 0.5 1.5-2-0.5-2 0.5 0-0.5-1-0.5-2 0.5-2.5 1-2 2.5-1.5 2-2 2-2.5 1.5-2 2-0.5 3 M1015 835l-0.5 0-0.5 2.5 1 1-1-1-1.5-1-3 2 0.5 0.5 2 1 2 1.5 1.5 3 2 2.5 2 1 1 2.5 1.5 0 1.5-1 1 1-1.5-0.5-0.5 0.5-3 2-3 0-2 0-1.5 1 2.5 2.5 2.5 2 1 1.5 0 0.5 1-3.5 2.5-2.5 2 0 0.5-2.5-2-3 0-3.5-1-2.5-2-3-2-2.5-2.5-2.5-1-3.5-0.5-3.5-1.5-3-1-3 1.5-3 2.5-2.5 0.5-0.5-1 1.5-2 1-2.5 1-1.5-2.5-1-1.5 0.5-1.5 0.5-1-1.5-3 0-2.5 1.5-1.5 2.5-2 3 2 1 1 0.5 1.5 2-1 1.5-0.5 1.5-0.5 3.5 0 3 0.5 3-1 3.5-1.5 0-3 1-3-1.5-3-1.5-3.5-0.5-1.5-1.5 0-2 0.5-3.5 0.5-3.5 1-1.5 1-3.5 1.5-1.5 2-3 0.5-2.5-1-3.5 0.5-2.5 1-3.5 1-1-2-1 2 1.5 2 3 1 1.5 3.5 1.5 1 2 0.5 3.5-0.5 2-1.5 3.5 0.5 3.5 0 3-1.5 3-2 3.5-1.5 3-2 3-0.5 2-0.5 1.5 0.5 3-1 2.5-1 2.5 2 2.5-0.5 2.5-1.5 1-1-0.5-1.5-0.5-3.5-1.5-1 1.5 0 2.5-0.5 2 2.5 2 2 1 3.5-1 3-2.5 2-2 2.5 0 3.5-2 3-1 3 0.5 2.5-0.5-1-3 0.5-3.5 1.5-2 1-0.5 0 0.5 0.5-2.5-2-2.5 1.5 0 2 0.5 3.5-0.5 3.5-0.5 2 0 2 0 2-1.5-1 2 0 0-3 0.5-3.5 1.5-3.5 2-2.5 0-2.5-2.5-2.5-3.5 0-1 3-2 3-1 0.5-0.5 1.5-1-0.5-3.5 1.5-2 1-2 0-0.5 1.5-3 1.5-1.5 1-1.5 0-0.5 0.5-0.5 0.5 2-1 3.5-1 2-1.5 1.5 0 3 2 1 2 1 1.5 1 1.5 0.5 1 1 1 2 2.5-0.5-0.5 0-1-2-1 0.5-0.5 3 1.5-0.5 2 1.5-0.5-1 0-2 3.5-1.5 3-3 1.5-2 2.5-1 3 1 3.5 0.5 3.5-0.5 3.5-3 2-2.5 1 0.5-0.5-1-1.5-1-2 0.5 0.5-2.5-2-0.5-0.5-3 0.5-3 1.5-3.5 1-1.5 1 0.5 2.5-1.5 2.5-1.5 3 M1037 733l 2 2.5 1.5 3-1 1-2 3-1.5 1.5-3 2.5-1.5 3-1.5 3-2 3 3 2.5 1.5 3-1 2.5-1 2.5-2.5 2.5-1 3-1.5 3-2.5 2.5-2.5 2.5-2 2-1 3.5-0.5 2.5 0-1.5-1.5-2-1.5-3 0-1.5 0-1-0.5-0.5 1.5 1 3 1.5 2.5 2 1.5 2-2 0.5-2.5-1-1.5 0.5-0.5 0.5 1 2.5 1 2 3.5 0-0.5-1 1.5 0 0-3-0.5-3-3.5 0-2.5 2.5-2 3-2 3-1.5 3-1 1.5-1 1.5-1.5 2 0 3.5 0-0.5 1 3.5 0.5 1.5 0.5 2 2 1.5 2.5 2 0.5 3.5 0 3.5 0 3.5 0.5 2-1 2-1 2.5-1 0.5 0.5 0.5 1.5 2 1 3-1 3 1.5 3.5 0 3.5-0.5 3.5-1.5 1-2.5 0.5-1 0.5-1 0.5 1 1 1 3.5 0.5 2.5-0.5 3.5 0 1.5 1-0.5-3-2-3.5-0.5-2.5-0.5-1-0.5-2 1-0.5 1.5-3 1.5-2-3-1.5-2.5-1.5-2-0.5-2 0-1.5-1 0 1.5-1 2-1 2.5-2.5-0.5-3.5-0.5-1.5 1.5-0.5 3.5-1.5 1.5-3 3-2 2-3 0.5-1.5 0.5-0.5 1.5-1.5-0.5-1.5 2 1.5 1.5 1 0 1-3.5-1-3.5 1-2.5 0.5-1.5-1.5 0.5-0.5 1 0.5 2.5 0.5 2.5-2.5 0.5-3.5 2.5-0.5 2 0.5-2 0-2.5 1 0.5 2.5 2 2.5 3.5 0.5 3.5 0 1 0 2 0 1 1 0.5 3 1.5 3 0.5 2 3.5 0.5 2-3 1.5-0.5-0.5-1-1-2-2-2-2.5-2 0-1-2.5 1-0.5 2-1.5 0 0.5 2-1 1.5 0.5 0 1.5-1.5 2-2.5 2-3 1.5-3.5-3-0.5-1 0-0.5-0.5 0-0.5 2-1.5 1 1 0 0.5 0 1 1.5 0.5 0-2 0.5 1.5-2 0-0.5-1.5 0.5-1.5 1.5 1 1.5 0.5 1.5 0.5 1.5-3.5 1-3.5 0.5-2 1.5-3 0.5-3-1-0.5 2.5-1 3.5 0 1 0.5 2 0-1-1-3-1.5-2.5-2.5-3-1-3.5 0.5-2 1.5-3.5 0.5-1.5-3-2-1.5 1.5-1 3 0.5 3.5-1 3-2 2.5-0.5 3.5-1 3.5-0.5 2 0 1.5 1 2 1 M992 841l 1 1.5 2 1 0.5-2 0.5-2 0.5 0 1 1.5 0-1 1.5-3-1-3.5-0.5-1.5 0.5-3-1-3.5-0.5-3.5-2-3 0.5-2 0-2 0 2.5-2.5-2-2.5-2.5-2-1 2-1.5 2-1.5 1.5-1 1.5-0.5 3-2.5 1.5-3-1.5-3 0-2.5 0.5-1-2.5-2-1.5-3 0-2.5 0-1.5 3.5-1.5 2.5 0 3-1.5 1.5 0.5 2.5 1 1.5 0.5-1-1.5 1.5-3 1-2 1-3.5 0-2-0.5 0-0.5 2-0.5 2.5 0.5 1.5-2 1-1 0.5-1-1.5-2.5-2 0-2.5-1.5-3.5-1.5-3-1-3.5-1 0 1.5 1.5 1 1 0-2-1.5-3-0.5 1 0.5-1.5 0-1-1-1.5 0.5-1.5 1.5-1 1.5 1.5 3 1 2 2 1 3 1.5 3.5 3 1.5 2.5 2.5 2 2.5 0 2.5-0.5 3.5 0.5 3 2 1 0.5 2.5 0.5 0.5-0.5 1-1.5 1.5-1 2.5-0.5 3-1 3 0 3.5 0.5 2.5 3 2.5 3.5-0.5 1-0.5 2.5-2.5-0.5-1.5 0-3 1.5-2.5 0.5-2.5-0.5-2-1-3.5-2-2.5 0.5-3.5-1-2.5 1-3 2.5-1 1.5-1.5 1-1.5 0-1 2 0.5 3 1.5 3.5 0 1 1 1 0.5-1.5 0.5 1.5 0 2.5-1 2.5-2-2-1.5 0-1 2.5 0.5 2.5-1.5 3-1.5 2-2.5 3-2 1 0.5-0.5-1 0-0.5 0 0.5-2 1 0.5 0.5 0 0.5 0 1.5-1.5 2 1.5 0 2 1.5-1-0.5-2 2-2.5 2-2 2 1.5 2-1 3-0.5 1-2-0.5-1 0-3 1.5-3-2-2-3-2.5 2.5 0.5 2.5-0.5 1-2 1.5 0 1.5 1.5 2-2 2 0 3 1 1.5 0.5 1.5 0 2.5 1.5 2-0.5 1-1 1-2.5 2.5-0.5 3.5 0.5 3.5-1 2.5 0-0.5-0.5-2.5 2.5-0.5 0.5 0.5-1 3 1 2.5-0.5 3.5 0 3-1.5 0.5-3 0-3.5-1-0.5 0.5 1-0.5 2 1 2.5 2.5 1 3-0.5 2.5-0.5 2 0.5 3.5-1 3.5-1.5 2-3 1.5-0.5 2 1-0.5 0 0.5 0.5 0.5 1 3-1.5 2.5-1 1-0.5-1-2.5-1-3 2 0 3.5 1 3.5-0.5 2.5 M1047 850l-3.5-1-2-3-2-2-2.5-0.5-0.5 1-2.5-1-1-1-2-1.5-2.5-2.5-1.5 0 0 0.5 1.5-1.5 2-1 3-0.5 1.5-1.5 0.5-3.5-1-3.5-1-3.5-2-3-2.5-0.5-1.5-1.5-0.5-2 1-1-1-2.5 0-3.5-0.5-3.5-3-1-1.5-3-3-2 0-2 0.5-2.5 2.5 0-0.5-1 0.5-1.5 1-1-0.5 1-0.5 1.5 0.5 0 2 0 3.5 0.5 3.5-1 2.5-2.5 0-2-2-2 0-1.5-0.5-2 0.5 0 0.5-1.5 0.5-1 2.5-2 1.5-2 0-2 0-3.5-0.5-3.5-1.5-3.5-1.5-2 0.5-0.5-1-1-3-0.5-1-1.5-1 0 0.5-2-0.5-3.5-1-3.5-1-2-2-3-1.5-3-1-3.5-0.5-2 1-2.5 1-2.5 0-2 1-1 0 0.5 0.5-1 2-1-1.5-0.5 0 0.5 0.5 1 2 2-1 0.5-0.5 1 1.5 2 1.5 1.5 3.5 0.5 2 2.5 2.5 3 1.5 3 3 1.5 1 2.5 0 3.5-0.5 3.5-0.5 3.5-2 2.5-1.5 3-2 3-2 3-2 2.5-2 0-2.5 2.5-2.5 2-2.5 2.5-3.5 0.5-2.5 1.5-3.5 1.5-1 1.5-2 2.5 0.5 3.5 2.5 0.5 3 2 2.5 2.5 3 1.5 1 1.5 1.5 0.5 1-0.5 1.5-1.5 1-1.5 2.5 1 3.5 0 1.5 1.5-1 0.5 0.5 1 1.5 0.5 1 1 2 2.5 2.5 2.5 1 1.5 0.5-0.5-0.5-2 0-0.5-1.5 1.5-0.5 2 0.5 2-1 1.5-3 2-1.5 3.5-2 1 0.5 2.5-1 3.5-1 3.5 0 2 0.5 1.5-3 2-1.5 3-3 2-1.5 0 2.5 1.5 1 0 2 2.5 3 1.5 3.5 0 2.5 0 0.5 0.5 2.5 1 0 3 1.5 3 2.5 3 3 1.5 1 1.5 0.5 1.5-1 1-2.5 0.5 0 0.5-1.5 0-2.5 0.5-2.5 2.5-3.5 1.5 0 1.5 1 1.5 1.5 3.5-0.5 3.5-2.5 2.5-2.5 2.5-3.5-0.5-1.5 0 0 1.5 0.5 0-2 1-2.5 2.5 0.5 3 1.5 3 0.5 3.5-1 2.5 1-1.5-1.5-2.5-1.5-2-2-3-1.5-3.5-1-3-1-3.5-1-3.5-0.5-2-2-3-1.5-2-2-2-2.5-3-2 2.5 M1193 800l-0.5-0.5 1.5-1 0-2-0.5-1-1-3-1.5-3-2-2.5-2-1-1.5 1-3.5-0.5-3 0.5-2-1-2.5 0-0.5 1.5-1.5 2-2 2.5 2 2.5 1.5-2.5 1.5-3-0.5-1-2.5 1.5-3 2-2.5 1.5-3.5 0.5-3 1-1.5-0.5-2-2.5-2-2-1.5-0.5 1 0 0 1-1-0.5-0.5-3-0.5-3.5-2 2-2.5 1.5-2.5-0.5-3.5-0.5 1.5-2 2-2.5 3-1 3 1 3 0 3 2 2.5 2 2.5 1.5 3 1.5 3 1 2.5-1-0.5-0.5-0.5 3-1.5 1.5 0.5-1.5 1-2-2-2.5-1.5-1.5-1-1.5-0.5-0.5 0 2.5 1.5 0.5 0.5 0 0.5 1.5 3 2 1 0-1 3-1 2 2 1 2 2-1.5-0.5 3.5 1-0.5 0 0 1.5 0.5 0 0 2 0 0.5-1.5-2.5 1-1 1 0.5 2.5 0 0 2-2.5 1.5 0 3 0.5 3 0 2 0.5 3 0.5 3 1.5 2.5 1 3 0 3-0.5 3.5-1 2-1 0.5 0 3 1 1 1.5-2.5 2 2-2 1 1 3 2.5 2 2.5 2 2 1.5 0.5 1 3-0.5 3 0 3.5 0.5 1.5-0.5 1.5-1-0.5-2.5-2-2 0.5-1.5-0.5 1 0.5-0.5 0 0.5-0.5 1-1 0 0-3 1-2.5 1.5-1.5 0.5-0.5 0 0.5-2 2.5-2 1-2.5-0.5-1-3.5 1-3-1-3 2-2.5 1.5-2.5 0-1.5-1-3-1.5-3-1.5-1.5-1-2.5 0-3 0-3 0.5-3.5 1.5-3 1-2.5 1-3.5-2-0.5 1 1-1.5 2-1.5 2-1.5 3 1 3 2.5 2 3 0 0.5 0.5 1.5 2-2 2-0.5 3-1 1-3 0.5-2 1.5-1.5 0.5-1.5 0.5 2 1-0.5 0.5-0.5-2-1-1-0.5-1.5-1.5 0 0.5 1-2 1.5 0.5 2-2.5 2-0.5 2-1 3 0 2.5 0 3 1 2.5-1 2-0.5 2-1.5 3-1.5 3 1 3 0.5 3-1 0.5-2-1.5-1.5-2.5-1.5-0.5-1-2-1.5-3 0-3.5-0.5-0.5-1.5-1-1-3.5-0.5-1.5-0.5-1-2-1.5-2.5-2-2.5-1.5-1.5-3-0.5-1-0.5-1 0-2.5-0.5-3.5 M1165 772l-1.5-0.5-1-0.5-1 0 1-1 0.5 0.5 1-0.5-1.5 0 0.5 1-0.5 1-0.5 1-3-1-2 2-1.5 0-2.5 0-3.5 1-3 0-3 0.5-1.5 1 0 1 2 0 2.5-1 1.5-1 2 0 3-0.5 2.5-1.5 2.5 1.5 0 2.5-0.5 3.5-1 2.5-0.5 1.5 1-0.5 1.5-1 0 0.5 3-1.5 3 0.5 2.5 0.5 3-0.5 2-2 3 0 2-1 2.5-1 3-1 3-0.5 3-1.5 3-0.5 2 0.5 2 0 0.5-2 0-2-1 0-1 1-3 1-2.5 2-3 0.5-1.5 2.5-3 1-2.5 2 0.5 1.5 2 0-0.5 0.5-1 1-1 2-1 1 0.5 0.5 2.5-0.5 0 0.5 1-1-1-1.5-1-2-1.5-2.5-1-1 1.5-2-1-1-1-0.5 0-1 0-3-2.5-2-3-1-1.5-3-0.5 0.5-3.5-0.5-1.5 1.5-1.5 2.5-0.5 0.5 0 0.5-0.5 1-2-1.5-2.5-1.5-2.5 0.5-2 0-2.5 1-1.5 1.5-2 2-1.5 2.5-1 3 0 3-2 2.5 1 2.5 1 2.5 0.5 3-1.5 3 1 2-0.5 2 0.5 3.5-0.5 1.5 1 3 0 2 0 1 1.5 0.5 0 3 1 3 1.5 2 2 2.5 1.5 2 1.5 1.5-0.5 2.5 1 0.5 3-1 1-1.5 0.5-1-2 0-0.5 0-3-1.5-3 0.5-2.5 1.5 2 1 1 2.5 2 3 1.5 0.5-1-0.5-1.5-1.5-2.5-1-2.5-1.5 1 0.5-1 2-1 0.5-0.5 3-0.5 1.5-0.5 2 0 1.5-1 0 2 1.5 2.5 2 1.5 2.5 2 2.5 0 1.5 0 3 0 1.5 0 3 0 1.5 0.5 0.5 3 1.5 2.5 1 2.5 2-1-0.5-1 0 0.5-0.5-1.5-1-1.5-2.5-1.5-3-1-1.5 0-1.5-0.5-1.5-1.5-1-1 0.5 0.5-0.5 0.5-1.5 1-3-1 0 0.5 1.5-0.5-1.5 0-2-1-0.5 1.5-1.5 3.5 0 1 1 1.5 0-0.5 0.5-1 2-1.5-0.5-0.5-3 1.5-2.5 2-2.5 1-2 0.5-1-0.5 1 1.5-2 3-1 1.5-1 1.5 0.5 3 1.5 0.5 1 0-2-0.5-3 0.5-3 1.5-2.5 1.5-1.5 0.5-2 M1160 822l 1.5 2 0 0.5 1.5 3 2 2.5 2 2.5 3 0.5 2.5 1.5 1 0.5-0.5-1-2 0-2.5 0-1-1-2-2-2.5-1.5-2-0.5-1.5 0-2-2.5-1.5-0.5 1 0.5 0.5 0 1-1 2 0.5 3-1 2.5-2 1.5-1.5 3-1.5 2.5-2 1.5 0 2.5-1.5-1.5 2-2.5 1-1.5 3-0.5 3 1.5 3 0.5 3 1 3-1.5 2-1 1 0.5 3.5 0.5 3 0.5 3 2.5 1.5 0 2 0.5 0.5-1 0.5-1.5-0.5-2.5-1.5-3-0.5-1-2-2.5-1-0.5-0.5 1.5 0 0.5-1-0.5-1-3 0.5-3 0-2-0.5-1.5-2-1.5-1 0-3 0-3 0-3-2-0.5-3 0.5-3 1-3-0.5 1.5-1.5 1-2 1-3 0.5-2.5-1-1-2 1.5 0-1 0-1.5 0.5 0 3 1 0.5 1 1-2 0 1.5 0.5 2 1 1 1 0 2-1.5-0.5 0 0.5-1 0.5 0 1.5-2 3 1.5 2-0.5 3.5 0.5 1-1.5-0.5-3-1.5-2.5-0.5-3 0-1-2.5-1.5-2-2.5-0.5-3 0.5-3-0.5-2 1-1 3-0.5 3 1 1.5 0.5 0.5 2.5-0.5-0.5-1.5 2 0.5 0-0.5 2.5-1 1.5-1 3-1.5-0.5-0.5 0-0.5-2-2.5-2.5 1-3 3 0.5 3 0.5 3 1 0.5 1-0.5-2 1.5-3 1-3 3-1.5 1.5-3 1-1.5 0-3 1-1.5 3 0 0.5 0-0.5-2 0.5-1.5 1-1.5 2-1 2 0.5 3.5 0.5-0.5-1.5 2 1.5 1.5 2.5 2.5 2 2.5 2 2.5 2 1 0 2.5 1 0.5 0.5 1.5 0-1 1 0.5 2 1 3 0.5-0.5 2-0.5 2 1-1 0 1.5 2-2 2 0.5 1 0 1-0.5 0.5-3 0-3 0 0 3.5 1.5 2.5-1 2.5 1 2 0.5 3-1 2 1 2.5 1.5 2.5 0 3-1 3-0.5 3.5-1.5 2.5-2.5 2.5-1.5 2.5-2.5 2-2-0.5-2 0-3 0.5-1.5 1.5-0.5 2.5 1 2 1 2.5-0.5 1 1-0.5 0-2-1.5-3-0.5-3 2-2 1.5-3 1.5-2.5 3-1.5 2-2.5 2.5-2 2.5 0.5 0.5-2.5-1.5-3-2-2.5-0.5-1 M1088 885l 2.5-1 3.5-0.5 2-0.5 0.5 1-0.5 1-0.5 0.5-3 2-0.5-2.5 1-2.5 1.5-2.5-1-3-1.5-3-2.5-2.5-1.5-1.5-2 0-2 0.5-2-2-1-3-1.5-3-1-2.5-0.5-2.5-1-1.5-1.5-2 0-2 0-1.5-0.5 1-1 0.5 0-1-2-1-2.5-1.5-0.5-1-0.5-1.5 2.5-2 3-2 2.5 0 0.5-2.5 2 0 2 0 1-0.5 1.5-1-1 0-2.5-2.5-2.5-1-3.5-1.5 0.5-0.5 0-2.5-1.5-1 0-1 0 1.5 0.5 3 1 3.5-1 3 0 3-2.5 2.5 0 3-0.5 3-0.5 3.5-1 2.5-2 2.5 1.5 3 2 3 0 3.5 2 3 1.5 1.5 1 3 1 1 0 1-1-0.5 1-0.5-1.5-2 0-3 1-1.5 3 0.5 0.5-1 0-2 1-1.5 0.5-2-1-3-2.5 0.5 0-1 0.5 0.5 0.5 1 1 3.5 2 0.5 0.5-1 3-1.5 2.5-2.5 1.5-2 0 1-1 0 2 1-1 1.5 1-1 1.5-2 0.5 0.5 2.5-1 0.5 0.5 1.5-1 2-2.5 1-3 2.5-2 1.5-3 3-1.5 2-2 3-1.5 2.5-2.5-1-1 0 0.5 3.5 0 3.5-0.5 2.5-1.5 3-1 2 0 0 0.5 0-1 0.5 0 1.5-2.5-1.5-3-1-3 0-2.5 1.5-2 2.5-2 1-1.5 1-3-1-2 M1111 843l 1.5 0 3.5 0 2.5 2.5 2.5 0.5 1-1-0.5-1.5 2 0-0.5 2.5-0.5-0.5-0.5 2-0.5 1.5 0 0.5 0.5 1.5-0.5 3 2 3 2 3 1 2.5 2 3 2.5 0 2.5-1.5-2.5 1.5-1 0.5-1-0.5-2.5 0-2.5 0.5-2.5 2.5-2 0.5-1 0.5-2.5 1-2 1-0.5-0.5-1-1 0.5-3.5 1-3 1-2.5 1.5-2.5 3-2 2.5-2.5 3-2 0.5-3-0.5-2.5-0.5-1.5-1 0-1 3-1.5 2-2 1-2 0.5-3.5-1.5-2.5-2.5-3 0-2-2-3-1.5-3.5 0-2.5 0.5-1.5 2-1 3.5 1 3.5 0.5 2-0.5 2 0.5 3.5 1 3 1.5 2.5 2 3 2 2 1.5-1 3.5-1.5 2.5-1-0.5 1-1.5 1.5 0.5 2-3-1-3-2.5-2 0 0.5-1-1.5-0.5 0-1-1 1 1.5 1.5 2 0.5 2-2 3-2.5 0.5-2.5 0-0.5 1-2 1.5-1.5 2-3 0.5-3 0-2 0 1.5-2 0.5-2.5-2-2.5-1.5-2.5-2.5-2-3 0-2-3-2-0.5-3 1-2.5 0.5-2.5-1-3-3-1.5-3-0.5-3.5 0.5-1.5-0.5-2 0 1 2 2 3 0.5 3-3 2-2-1.5-1.5-3 0.5-2 3-1 2.5-1 0.5 1 1 1 1 3 2 1.5 2.5 1.5 2.5-0.5 2 1.5-0.5 0.5 0.5-0.5 0.5 0 M957 889l 0.5 1 0 1.5 0 1.5-1.5 1.5 0 0.5-1-1.5-2-0.5-1 1-2.5-2.5-1.5-2-1 1 0-2-1-2 0.5-2.5-1 0-3.5-1-3-1.5-2.5-0.5-2.5-0.5-3 0-2.5-1-1.5-0.5-0.5 1.5 0.5 3-1 2 0.5 1.5-0.5-0.5 0.5 3.5 1 0 1.5-0.5-0.5 3 3 2 3 1 3 1.5 3.5 0 2.5 1 3-1.5 2.5 0.5-0.5 2.5 0 3.5 2 3 1.5 2 1 1 2-1.5 0.5-3.5-1-3.5 0.5-2.5 1-2.5-0.5-0.5 1.5-1.5 1-1-0.5-1 1-0.5 2-1 3 1 3.5 0 3 0.5 3.5 0 3 0 3.5 0 2 1 0.5 0-2.5 0-0.5 0.5 0-0.5 1 0.5-0.5-1.5-1-1-0.5-3.5 1.5-2-0.5-3-1-1.5-1-0.5-3.5-1-3-1-3.5-1-1.5-2 0-3-1.5-3-1-1.5 0.5-2-2 1.5-1-2-3-1-0.5 2-2.5 2.5-2.5 1.5-3-0.5-3.5-0.5-2.5-2-0.5-2 0.5-2.5-2 0.5-1-2 0-3.5-0.5-0.5 0-0.5-1 0-2 1 M935 886l 0-1 2 1.5 1 1.5 0.5 0-2.5 1-1 1.5 0 0.5-0.5 0.5-2-3-2-2.5 0-3-1.5-3-2-2.5-0.5-0.5 2.5-2 3.5-0.5 3.5-1 3.5 1 2.5 2 0.5 2 2.5 3 2.5 1.5 3.5 0.5 3 1.5 1.5 2.5 2.5 0 2 0.5 3 2 1 0 0.5-2 3-2 0.5 0-1 0.5-0.5 2 0.5 1-1 0.5-1.5 0-1-1.5-1-0.5-2.5 1.5 0-3-1.5-2-0.5-2.5-1 0.5-0.5 0-1.5 1-1 1.5-1-1.5-2.5-1-2 0.5-2.5 1.5-0.5 2.5 0.5 1.5-1 2-1 3.5-2 1.5-3 1.5-3 2-3 1.5-2.5 2.5-2.5 2.5-1-0.5-2-3-1.5-2-1-3 0-3.5 2-1 3.5-0.5 3-2 0.5-2 0.5-2.5 1.5-3 2.5-2.5-1.5-3-1-3 0.5-3.5-2-3 1.5-3 3-1.5 3.5-0.5 1-1.5 0 0.5 1 1.5-1.5 0-1.5 1.5-1 0-2 2-3 1.5-2 2-2.5 0-1.5-1-0.5-2.5-0.5-3.5 2-3 0.5-2 0-3.5-1-2 1.5 1 3.5 0 M620 812l 5.5 22.5 14 18 25 9 25 9"/>
<path stroke="#ff7f0e" d="M659 603l 0 1-0.5 2 1 1-0.5 0.5 2-0.5 1.5-1.5-0.5-1.5 2 0.5 0.5 2.5-2-1 0.5 1.5 2.5 0-0.5-2.5-1-1-0.5-1 1-1 1 1.5 0.5 1-0.5 1.5-1.5-0.5 0-2.5 2.5 0 1.5-1 2 0 0.5 0.5-0.5-1 0-0.5 1.5 0 2 1 2 0 1.5 1.5 1 1.5 1.5 1 0.5 1 0.5 0 1-2 2-1 2-1-1.5-1 1.5 0 2 1 1 1.5 2 1-1.5 1.5-2 0 1.5-1-1-1 0-2.5 1.5-1 1.5-1 1.5 1.5 1 0 2 0.5 2-1 2 0 0.5 0.5 0.5 2.5 2 1 0 0.5-1-1.5 2 0 1-1.5 1.5 0.5 2 1 1.5 1.5 2 1-1.5 1 0 1 2-1 2.5-0.5-0.5-1 0.5 1 1.5 0.5 1.5-2 0.5-2 2 1 1.5 1.5 1.5 1.5 0 1.5-1 0 1 0.5 1 2 0.5 0.5 1 0 2.5 1 1 0 1 0.5-1 0-1-1.5 0-2.5 1-0.5 1-0.5 1.5-0.5 0 0.5 1.5 1.5 0-1 0.5 0 0.5 1.5-1 1-2-1-2.5 0-1.5 0 0.5-1.5 1.5-2 1.5-1.5 0-0.5 1-2 0.5-2-1.5-0.5-2 0.5-2 0.5-2 1-2 1-2 0-2 1-1 0.5 1 2 1-0.5-1-1-0.5 2-1 2-2 1-2 0 0-0.5-0.5 2.5-0.5-1-2-1-1.5 0-2-1-2-0.5-1.5-0.5-0.5-0.5-1 2-1 2-1 0-0.5-2-1-2 0 2.5-0.5-0.5-2.5 0-1.5-1.5-2-1 0-1.5 1.5-1.5 0 1 0-0.5-1 0.5 M673 622l-1 1 0.5 2-0.5 2 1.5-0.5 2 0.5 2-0.5-1.5-1.5-1.5 0.5-0.5-1.5 2-0.5-1 2 1.5 0 2-1.5 2-0.5 1.5 0 2 0 0.5 0.5 1.5-1.5 2-1 2 1 1.5 1.5 0 1-2-1-0.5 0.5 1 2 2.5 0 1.5-1 1-2 0 1 1-0.5 1.5 0 2-1 0-0.5 0.5 0 2.5-0.5 1.5 1.5 2-1.5 1-2 0 0.5 2 0.5-1.5-0.5-1-1 2.5 0 2 0 2.5 0-0.5-2.5-2-1-1 1.5-1 0.5 0 1-1.5 0.5 1 2 0-1.5 0.5-1.5 2 0.5 2-1 1.5-1.5 0.5-1 1.5 1.5 2.5-1 1.5-1.5 2.5 1 2-0.5 0.5 1 2-0.5 0.5-0.5 0 1.5 1.5 1.5 0.5 0 0.5 0 2 0.5 1 1.5 2.5 0.5 2 1.5-1 1-1 0-1-0.5-2.5 0-2 0-2 0 0.5-1.5 0-1.5-0.5 0.5-1.5 1.5-0.5 0 0.5 2 1.5 0.5 2 0.5-0.5 2.5-1.5-1-1.5 0-1.5-0.5-2.5 0 0-0.5 0.5 0-2 1-0.5 1-0.5-1-1-2-1-2-1.5 0-1-1.5-2 1-2 1 1 2-1-1.5 0.5-2-1.5-2-2 0-2-1-0.5-2.5 1.5-1.5 1 0.5-0.5-2-0.5 0.5-1.5-2-0.5-2-0.5-0.5-0.5-1.5 1 1 1.5 0 1.5-1 2-1-1-1-0.5-1-1-1.5-1-1-1.5 0-2 0-1.5 0.5-1 1.5-2.5-0.5-0.5 2 1 1-1-0.5-2-1-0.5-1-0.5 1-1.5-0.5-1.5-1-1 0-1-2-1.5 0.5-2 0.5-1.5 0-2-1-1.5 0.5 M660 602l 1-0.5 1.5 0 2.5 0.5 1-1 2 0.5 2-0.5 0 0.5 1 1.5 0.5 2 1.5 1.5 2 2 1 1.5 1 2 0.5-2 1.5-1.5 1 0-1.5-1.5-0.5-2 1-0.5 0.5 1-2 0.5 0.5 2 1 2 2 1.5 1 2 2 0.5 2 1-0.5 0 0.5-1 0.5-2 1 0 1 1.5 1-0.5 1-2 0-1.5-0.5-0.5-0.5 1 1 1 0.5-1 1.5-1 2 0.5 2.5-0.5 1.5-1-2 0-1-0.5 0 1 1 2 0 2.5-0.5 1 2 1.5 1.5 1 2 1.5 2 0 2.5 0 2 0.5 2.5 0 1-1.5-0.5-1-0.5 1 0 1 0.5 2 1.5 2 1.5-2 0 0.5 2-0.5-0.5-2 0.5-1.5 2-1 2 0 1.5-0.5 0.5 1-2-1-1.5-0.5 0.5-0.5-0.5 2 0 2-2 1.5-1.5 1-2 0-2 1.5-1.5 1-2-1-1 2-1.5 2 1-1-1.5-1.5-1.5-1.5-2.5-0.5-1 0.5-1.5-1-1 0.5-2 0.5-2-0.5-2-0.5 0-0.5-0.5 1-2 1 0 0.5 1-1.5-1-2 1-2 0.5-2 0.5-2.5-0.5-2-2.5 0-2 1.5 1.5 0.5-1.5 0-1-2.5-2-0.5-1-2-1-1 0.5 0 1 1-0.5 2.5 0.5 1.5-1 2.5-0.5 2-1 1-2 0 0.5 0.5-1-1-2-1-2 1.5-0.5 2-2 1-2-1.5-1-2-1-2 1 1-2 1-1.5 1.5-1.5 2 0 1-1.5-1.5-0.5-0.5-1.5-1 1.5-2 1 1.5 2 1 1.5-1 0.5-1-1-1.5 0 1 2.5 0-1.5 1.5 0 2.5-2 1 1-1 M696 625l-0.5 0 0.5 1 0.5 1-0.5-1.5-1.5-1 0-1-1.5-1.5-0.5 0 1-1 0.5-2-0.5 0 0-1 1 2.5 0-0.5-1-2 0.5-1 1-1.5 2 0-1-0.5 0-2 2.5 0 2-1 1.5 1 0.5 2-0.5 1-1-2 0-1.5-1-1.5 1 0 2 1 2.5 0 0.5 0 1.5-1 1.5-0.5 2-1 2-1 0 1 1 1-0.5 1-1.5-1-0.5 1 0.5 0-0.5 1.5-0.5 1.5 2 0.5 0.5-2.5-0.5-2 0.5 0.5 0.5-0.5 2-1.5 1 0.5 2-0.5 1.5-1.5 1.5 1.5 1.5-1.5 2.5 0.5 2 0.5 2.5 0-1.5-2-2-1-1.5-0.5-2 1-2 1.5 0.5 2-0.5 1 0 2-2-1-2 1-1.5 0-2-1-1-2 0-2 0-0.5 0.5-0.5 2 0 1.5-1 1.5 1.5 2 1 2-1 0.5 0.5-2-1.5-0.5-0.5-1.5-0.5 1 0.5-1-2-0.5-2.5-1.5 0-1.5 0-1.5 2-2 0-2 1-1 1-1 1-0.5 1 1 1.5 2-1 0.5 0.5 0.5 0 2 1 2.5 0 2 0 1.5 1 1.5-1 1.5 1 2.5 0.5-1 2-1.5 1-2-1.5-2-1-2 1-1.5 1.5 0.5 0-0.5-0.5-1-0.5-0.5-1-2.5 0-2 0.5-2 0.5-2.5 0.5-2 0.5 2 1 0.5 1 0 0.5-0.5-0.5-1 1.5 0.5 2 0.5 1.5 2.5-0.5 1 0 1-1.5 0-2-0.5-2.5 0-1.5-2 0.5-1.5-1-0.5-1.5-2.5-0.5 0.5-2.5-1-0.5-0.5 1-1.5 2-1 1-0.5-0.5-1.5-1-1.5-1.5-2.5 0-0.5-2"/>
<path stroke="#2ca02c" d="M668 638l-1 0.5-0.5 2 2 1.5 1.5 0.5 1.5-2 0.5-1.5 1-2 2-0.5 2.5-0.5 1-2 1-2 0.5 0 2.5 0 2 0 2.5-1 2 0 2.5 0.5 2 1 1 1.5-0.5 1.5 0-0.5 1-1 2 0 2 1 1-1 1 0.5 0.5 2-2-1.5-1.5 0.5 1 0 2 1 1.5 2 1.5 0.5 2-0.5 2.5-0.5 0 1.5-0.5 1.5 1 0.5 0 2-0.5 0.5-1 1.5-2 0.5-1.5-1 0-0.5 1.5-2-1-1 1-2.5 0-2-0.5-1.5-2 1-2.5 1-2.5-0.5-2 1 1.5 0.5 0.5 2-0.5 1.5-1.5 2-1 2 0.5 0-1 0 0-0.5 0.5 0-0.5 0-1.5-1.5 0.5 1-0.5 2-1-1-1.5-2-1-2-0.5 0 0-0.5-2.5 0.5-2.5-0.5-1-1-2.5-1-0.5 1.5-1-1 2 0 0.5-0.5 0 1 0 2 0.5 0 0.5-2-0.5-1.5-1.5-1.5-2-1-1-1.5 0-0.5 0.5-1 0-2-1.5-1.5-1 1-1.5 2-2.5-1 0.5 1.5 0 1.5-0.5-2 0-2-2 0-1 2 0 1 0.5 0.5 0 2.5-0.5-1.5-1-2 0.5-2 0.5 0 0.5 2.5 0 2 0.5 0.5 1.5 1.5 2-0.5 2.5 0.5 2 0.5 2 0 2.5 0.5 2.5-1 0-0.5 1 2-1-1 1.5-1.5 0-2.5-0.5-1 1-2 1-2 2 0 1.5 0.5 2 1 2 1.5 1-0.5 0.5 0-0.5 0 0 2-0.5 2.5 0.5 2.5 0 2 0 0.5 0.5 1.5 2.5 0 1 0 2.5 0.5 2 1 2 1 2.5 1 1-0.5 0.5-0.5 1.5-2 0-2.5-0.5-2-1.5-1-2 1.5-1 0.5 1.5 2 0 2 1 0 0.5-1.5 2 1.5 0-0.5 M696 643l 0-2-2-1-2.5 0-2 1.5-1.5 1.5-1 0.5-2-0.5-1.5 0.5-1.5-1 1 0 1.5 0.5 2.5 0.5 2 1 2 1 0.5 0 1-2 1-2.5 1 1.5 2-0.5 2.5 0 2 1.5 2 0 2 0.5 0 1 0 2.5 1.5-0.5 2.5-0.5 2 0 2-0.5 2.5 0.5 2-1 2.5-1 1-2 0.5-1.5-0.5-1.5-1.5 0 2.5 0 1.5-1.5 1 0 1 0-1-1.5 0.5-2 1.5-1 0 2-2 0.5-2.5 0.5-0.5 2 1 1 1-1 1.5 0.5 1.5 1-1-2-2-1.5-2-1.5-2-0.5-1.5 0.5-1 0-0.5 1 0.5 0-1.5 2-0.5 1-2.5 0-0.5-0.5-2 1-1.5 1-2 1-1.5 1.5-2 1.5-1 2.5 1 0 1.5 0.5 0-0.5 2-0.5-1 0-2-1 0.5-2 1-2 1-2 2-1.5 1-2 2.5-1 2 1.5 0-0.5 1.5-1 1-1 0.5 0-0.5 1 0.5 0 0 0.5 0.5 1 2.5 0.5 0 0.5 0.5 0.5 1-1.5 0.5-1 1.5-2 1.5-2 0 2.5 1.5 2-1 1.5-0.5 0-0.5-1.5 1-1.5-1 1 0 2.5-2 1-2-1.5-1.5-1-2-0.5-2.5 0 0-1.5-2.5-1-2-1-2-1.5-2 0-2.5 0.5-2 1-2.5-1-1-0.5-2 1.5 0.5-0.5 0-0.5-2 0-0.5 1.5-2 1.5-0.5-1.5-1-2.5-2 0.5-1.5 0-2.5 0-2.5-1-2 0.5-0.5 0-2 0.5-2 0.5-1-0.5-2-0.5-1 1-1 0.5-1-0.5-1.5 1.5-0.5-1 1 2-2 1-0.5 2-2 2 0 1.5-0.5-1.5-1-2-0.5-2 2-1.5 1.5-2 2-1.5 1.5 1.5 2-1 2 0 2 0.5 2 1.5 0.5 1.5 M725 643l 1 2-1 0.5-2 1.5-1.5 0-1.5-1-2.5 0-1.5-1-1-1.5-1.5-2-0.5-2-1.5-2 0-2.5-1-2 0-1-1 0-1 0-0.5 2 1-0.5-1 2.5-1.5-1-1.5 0 0 0.5 0 1 1-1.5 0-0.5 0 1.5-1.5 2-0.5 0-1-0.5-2.5 0.5-2-0.5-2.5 0-0.5 2 1 1.5 1-0.5-0.5 0-0.5-1-1.5 0.5-2 1-2 1-1.5 1.5-2 1.5 0 2-2 0-1.5 0-1 0.5 0.5-1.5 0.5-2.5-1-1-1.5-2-2.5-0.5-1.5 0.5-2 1.5-1 0.5-0.5 2.5-2-1-2 1-0.5 1 1.5 0 1 0 2.5 0 0-1.5 2.5-1 2-1-2-1-0.5 0.5-1-1.5-1.5 0 0.5 0-2 1-1 2 0 2.5-0.5 0-0.5 0 0-0.5 0.5-1-0.5 1 1-1 0.5-0.5 0.5 0-0.5-0.5 0 1.5-1.5 2-1.5 0-2 0-2 0-2 0-2.5 0 1.5-0.5 2.5-1 1.5-1.5 1.5-2 0.5 0-0.5 1-0.5-0.5 1.5 0 2 1.5 2.5 0.5 1-2 1.5-2 2-1 1-2 1.5-2.5-1 0 0.5 2 1.5 1.5 2.5 0.5 2 0 2-1.5 1-1 1.5-0.5 2.5 0.5 0 0.5 1.5 2.5 1.5 0.5 1.5 2-1.5 1.5 1 1 2-0.5 0.5-2.5 1-1 0.5-2.5 1.5-1 1.5 1 0.5 1 0 0.5 0.5 0-1.5-1 1-1.5 0.5-1 1.5 1 0.5 0-0.5 0 0 0.5-1 0.5-1.5-1-1.5-2.5 0.5-1 1 0 0.5-2 1-1 1.5-0.5 1.5 0 2-0.5 2 0 2.5 0.5 1.5-0.5-2 0.5 1.5 0 0 1-0.5 0-1 0 0.5 2.5 1 2-1 0.5-2.5 1-1.5-1 M702 642l-0.5 0.5-2.5 0.5-1 2-2 1-2 0-0.5 0-2.5 0.5-2.5 0-2-1-1.5-0.5-2.5 0.5-2.5 0.5 1-1 0.5 0 1.5 0.5 1 0 1-1.5-2-0.5-1 2-1.5-0.5 M701 598l 0.5-1.5 1.5-1 3-0.5 2.5-1 2.5-1 2.5 1 0-2-0.5 0 0.5 1.5 0 1.5-1.5 2 1 1.5 1.5 1.5 0.5 2.5 2 2.5 0 2-1.5 2.5-1 1.5-0.5 2.5 0.5 3 0.5-0.5-0.5-0.5 2-1.5 1.5-2-2-1 1 0-0.5 0 0-2-0.5-2.5-1-2-1.5-1.5-2 1.5 1.5 2.5 1 2 0 1-1 2 0 0.5 1-1.5 1.5-2 0.5-1 2 0 3 0 2 0.5 3 1 0 1.5-1 1.5-1 2.5-0.5 2 0.5-1-3 0.5-2.5 1-2 1.5 0 3-0.5 2.5-1.5 2.5-2 2.5-1.5-1.5-1.5 0-2.5-1-2.5 1-1.5 1-2.5 0-1-2-0.5-3-1-2.5 0-2.5-2 1.5-2 2.5-2 1.5-1 3-2 0.5-1.5 0.5 0.5 0 1-2 0-0.5-0.5-1 2 0 2-2 1.5-0.5 0-2 1.5-2.5 2-2 1-2.5 1-2.5 2.5 0 2.5 0.5 1 1.5 0.5 0.5 1-1.5 2-1.5 2.5-1.5 0-1 1-0.5 0.5-0.5 0.5 0 2.5-1 2.5-1.5 2.5-1.5 1 1.5 1 2.5 M717 613l-1-2-3 1.5-2.5 1.5-1 2-3 0-2.5 0.5-3-1-1.5 0.5-1.5-1.5-1.5-1.5-1.5-0.5-1-0.5-1.5 1-1-2-2-1 0-0.5-1 0-2.5 2-2.5 1.5-1 2 1 2 2.5 1.5 1-1 0.5-3-1-1 1.5 0.5 2-2 2-2 2-2 2.5-1 2.5 1 3 0.5 0.5 0 2.5 1.5-1-0.5 1-0.5 0.5-0.5 2.5-0.5 0-2 0.5-1 0-2 0-2 1-1.5 0.5-2.5 0.5-0.5-0.5 3 0 1.5 1 2.5 2 2 2.5 1.5 2 1.5 1.5 2.5-1.5 1-0.5 1 0.5 1.5 1-1 3-0.5 1.5-0.5 0.5-3-0.5 1.5-0.5 0-1-0.5-1.5 1-1 0.5-2.5 1.5-1 1-0.5 0-1.5 2.5-2.5 0.5-2 1.5-2 0.5-1.5-1.5-2.5-0.5-3 0.5-1 2.5 0-0.5 0.5-1 2-0.5 2.5-0.5 1.5-1.5-0.5 0.5 1.5-2.5 3 0.5 0.5 1.5 1-2.5 0-1.5-0.5-3-1.5-1-1-2 2-2.5-0.5-1-1-1-2-0.5 1-1-0.5-1.5-0.5 0-1.5-0.5-1.5-0.5 M649 742l-2.5 2-1.5 2 0 2.5 0.5 2 1.5 0 2.5-0.5 2 0.5 1.5-0.5 2.5-1.5 2-1.5 2.5-2 2.5 0 3 0 2.5-0.5 1-1 2.5 1 1.5 0.5 2 0.5 2-2 1-3 1.5-2 0.5-2 0-3 1.5-2.5 1.5-1 0-1-0.5-0.5 2.5 1 3.5-0.5 2 1 2.5 0.5 1 0.5-0.5 0.5-2 1-3.5 1-2.5 0.5-2 2.5-2.5 1.5-2.5 2-2.5 0-3-1.5-2.5-2.5-1-2-1-2-0.5-1.5-1-2-2-1-1-1-3 0.5-2.5 1.5-1 1.5-2.5 1 0 1.5 1 1.5 0.5 1.5 1 3.5 1.5 2.5 1.5 2.5 1.5 2.5-1 2.5-1 3.5-2.5 2.5-3.5 1-3 1.5-3.5 1.5-3.5 0-3.5 0.5-3-0.5-2.5 0.5-2-1-1-0.5 1.5-0.5 2.5-1 3.5 0.5 3-0.5 2-3 3-1 2.5-1.5 2-2 1-2.5 2 0 2 1 3 2 3 2 2.5 2 3.5 0.5 3.5 1.5 2 3 3.5 0.5 2.5 0.5 3 1.5 3.5 0.5 3 0.5 2.5-1 1-0.5 1-0.5 0.5-1 0-2-1.5-3.5 0-2.5 1-2 2.5-2 2.5-0.5 2 0.5 0.5-0.5 0.5 2-1 1.5-3.5 1.5-3 0.5-3.5 0.5-1.5 0-2.5 0.5-3-0.5-3-0.5-3.5-0.5-3.5-1-2-1.5-2.5-1.5-2.5-2.5-2.5-2-3-1.5-1.5-1.5-0.5-1 0.5-0.5 1.5-1.5 0-2 0.5-2.5-0.5-1 0-2 1.5 0 2.5-2 2.5 1.5 2 1.5 2.5 1 3 2.5 2 3 2.5-0.5 1.5 0 2 0.5 1.5 0 0.5 0 0.5 0.5 2-0.5 3.5-0.5 3.5 0 3.5-0.5 3.5 0 1.5 0 0.5 1 0 2.5 1 2.5 0.5 3.5 0.5 3 2 2 1 1.5 0.5 1.5-1.5 1.5-3 2-2 2.5-3.5 1.5-3 1-2.5-1-3.5-0.5-2.5 1-1.5-1-2.5-2.5-3-2-2-1.5-1.5-2-2.5-1.5-2-2-1.5-2-0.5-2-3.5-1-2-2.5-1-1-1.5-1-1.5-1.5-1 0.5-1-0.5-1 0-2.5 0-0.5-0.5-1-1.5-1-1.5-1-1-1.5 0-2-0.5-1 0-2.5-1-3 2-2 1.5 1 2.5 2 1.5 3 1.5 3-1.5 3-1.5 2.5-2.5 2-3 2-2 M721 750l 0.5 1.5-1 1-3 0-2.5 0-2.5 1-2.5 0-0.5 0.5-1 1 0 0.5 0-1-1-1-3 1-2.5 1.5-2.5 0.5-2.5 1.5-3-1-1-1.5-1.5-1.5-2-3-2.5-2.5-2-2-2.5-2.5-1-1.5-1-2.5-2-2-3-2-3-1.5-2.5-1.5-3-0.5-2-3-2.5-2.5-2.5 1.5-2.5 2-2.5 2.5-1.5 2.5-2.5 2-0.5 3 0-1 1-1 1.5-0.5 2-0.5 2.5 0 3 1 3 1 3 1.5 1-0.5 2 0.5 3 0 3.5-0.5 2 0 2 0.5 3.5-0.5 3 1 3.5 1.5 2 2.5 1 3.5 1 1.5 0.5 3-0.5 2.5-1.5 2.5-1 2.5-0.5 0.5-1.5-1 1.5-1.5 1.5-1.5 0.5-2.5 2-2.5 0-1.5 0-1-1.5-0.5-1-1.5 0.5-1.5 0.5-1-0.5 0.5-2.5 0-3 0.5-3.5 0.5-3.5 1.5-2.5 2-3 1-3.5 0.5-3.5 0.5-3.5 0-3.5-0.5-3.5-0.5-3.5-0.5-1.5-1-1 0-0.5 0 1-2-0.5-1-1-1-1-0.5-1.5 0-2-1-3.5 0-2-1-2 0.5-3.5-0.5-2-1.5 0-2 1.5 0 0.5 1 1 0 1-1 0.5-1.5 2-1.5 3-0.5 1 0 1 0 0.5 2 0.5 1 0 0.5 2.5 0.5 3-1 2.5 0 1.5 0 1 0.5 0 1.5-0.5 1.5-0.5 0.5 0-0.5-1-1-1 0-0.5 0-2.5 0.5-2.5 1-0.5 0 0.5 1.5-0.5-1-1-0.5 0 1 1.5 1 1 0.5-0.5 1 2.5 0 2.5 0.5 3 1.5 3 2 3 0 3 0 3.5 0 3.5 1 2.5 2 3.5 0 2.5 1.5 2-0.5 3-2 2-1.5 2.5-0.5 3-0.5 3.5-0.5 2.5-1.5 3.5-1 2.5 0.5 2.5 0 2 1 1.5-1.5 1-0.5 0.5-1 0-1-1-1-2-2.5-2-1.5-1-1.5-1-1.5-0.5-2-2.5-1.5-3.5-0.5-3.5 0-3.5 0.5-2 0-0.5 0-2.5-0.5-2.5 0.5-2.5 2-3 1.5-3 0-3.5 1-2.5 1.5-3 1.5-2.5-2.5-2.5-2-3-1-2-2-1-1.5-0.5 0.5-0.5 0-0.5 2 0 2 0 1.5 2 0.5 1 1.5 0.5 2.5 2.5 1 1.5 2 2 2.5 2.5 2.5 M724 750l 0.5 2 0 2.5 2.5 1.5-0.5 1 1-0.5 1.5 0.5-0.5-2.5-0.5-3-2-2.5 1-2.5 0-3-1-2-1.5-2-0.5-3 1-1.5 2-0.5 1.5-1 0 0.5 0 2-3.5 1.5-3 1.5-3.5 0-2.5 1-3.5 0.5-3 1.5-3.5 1-2 1.5-2.5 1-1 1-0.5 0-1-0.5 0-1.5-2.5-0.5-1.5 2-3 0.5-1.5 1-2 1-1 2-3 1-2.5 2.5-1.5 2-1 1.5-2 1-3.5-0.5-3.5 0-3-0.5-1.5 0.5-2 1.5-2 0-2.5-1-2.5-0.5-1.5-1-1-1-2-2 0-3 1-2 1.5-3 1.5-3 2-1.5 3-0.5 3.5 1.5 3 1 2.5 1 3-1 3.5-0.5 3-2.5 2.5-2.5 2-2.5 1-3.5 2-3 2.5 0 2.5 2 2 0.5 2-0.5 2-1 3 1 3 0 2.5 0.5 3.5-0.5 3-0.5 2.5 0.5-0.5 0.5-0.5-1.5-1-2-2.5 0-2 1-1 1-0.5 1 0 1 0.5-0.5 1-0.5 1.5 0 0 0.5-1 1.5-1 1-1.5-0.5-1.5-0.5-1.5 0.5-2.5 0-1.5 0-1.5 0-1 0 0.5-1 1-1.5 1 0-0.5 2-0.5 1 0.5 1.5 2.5 1 0 1-2 1.5-2-1.5-2-2-3-2-3-1.5-3.5 0-3.5 0-3.5-1-3 0.5-3.5 1.5-3 0-3.5 1.5-3 0-3.5-0.5-2.5 0.5-1.5-1.5 0-2-0.5-1.5 0.5-1.5-1.5-1 0 1.5-0.5 3-0.5 3.5-1 3 0.5 2 0.5 0.5 0.5 1.5 0.5 0.5 1 0 1-0.5 1-1 0-1-1-0.5 1 0-0.5-1.5-0.5-1-0.5-0.5 1-1 2.5-1.5 1.5-0.5 1-2.5 2 2 2.5 0 2 0.5 3 0.5 2 0.5 1.5 0.5 1.5 1 1 1 0.5 1.5-1-1-1.5 1-2 0-1-0.5-2.5-0.5-1.5 0-1.5 0-1.5-0.5-2.5 1-1.5 0 0.5 0.5-1 0-0.5 1.5-1.5 3 0 2 0.5 2 0.5 0.5 1.5 3 2 3 2.5 2 3 1.5 0.5 1.5 1 2-0.5 1-0.5 0.5-2-1.5-2.5-1.5 0-3 0-1-0.5-2-1-0.5-2.5-1-2 0-1.5 1-1.5 0.5-1.5 0-1.5 0-0.5 1.5 M793 664l-0.5 0.5-2.5 1.5-2 2.5 1 2 1 3-1.5 2.5-1 1.5-1 0-1 2.5-1.5 2 0 1.5 1 0 0 1.5 1-1 0 1.5-0.5 0 0-0.5 1.5-1.5-1-1-1.5-0.5-3 1-2.5-1 2 0.5 0 1.5-2 3 0.5 3 1 3 1 3-2 2.5-1.5 2.5-1 3-1.5 2.5 0.5 2 1.5 3 1.5 1.5 0.5 3-1.5 2.5-2 0.5-2.5 2-2.5-1.5-2-2.5-2-2.5 0.5-3-1-2.5 1.5-2.5 0-0.5-2.5-0.5-2.5 0-1-1-1-1-1.5-2-0.5-1.5 2-1 0-1-1 1.5 0-0.5-1 0-2-2-1.5-3 2.5 0 3-1 2.5-1.5 2-2 0-3.5 2-2 1-1.5 1 0 0.5 1-2 2.5 0.5 0.5-1-2.5-0.5-3-0.5-3 0.5-3-2-1-1 0.5-1.5 0-2 3-3 0-1 1.5-3.5 0-3 0.5-0.5 0 2-0.5 2 0 0.5 1.5-0.5 0.5-0.5 1.5 0.5 3 2.5 1.5 3-1 1 2 1.5 3 1.5 1 0.5 3 2-0.5 0.5-1.5-1 0-0.5 1 0.5-2.5 0-3 2-1.5 1 0.5 3.5-1 1-3-0.5-3 1.5-2-0.5-3-1.5-2 2.5 0.5 3-1 3-1.5 1.5 0.5 1.5 2 2 0 2.5 1 2.5-1.5 3-1 1.5-2 3-1 2.5-1.5 2-1 1.5-2.5 0.5-3 0-2 0-2.5-2 0 1.5 0 3 1.5 3 0.5 3-0.5 0-2 1.5-1 2-0.5 2 0.5 0.5-0.5 3 0.5 3 0 2.5 2 2.5 2.5 2.5 1.5 0-0.5-3-1-2.5 2-2.5 1.5-2 1.5-2.5 2.5-1.5 2.5-0.5 0.5 M778 717l 0.5 0.5-0.5-1.5-0.5-3 1-3 2-2.5 1.5-3 1-2.5 0.5-2 0-3.5 1-2 2-2.5 0.5-2.5 0.5-2.5 2 0 3 1 3 0 3 1 3-1 2.5-1.5 2.5 1 3-0.5 3.5-0.5 3 0 3-1.5 3 0 0.5 1.5 1 2 0 0.5 0-3 3-1.5 2 1 3 1.5 0.5 3 1 3-0.5 1.5-1.5 0-2-2 0-2.5 0-3 0.5-3 0.5-2.5-1.5-3 0-1.5-2.5-0.5-0.5 0 0.5 0-3-1.5-3-0.5-1 3-1.5 3 0 2.5-1 2 1 2-1.5 2.5-1.5 3-2-0.5-2.5-2-2-0.5-2.5 2-3 0-2.5 1.5-2 0.5-3-1-3-0.5-2.5-1.5-2-1-0.5-1-3-2-2-2-3-2-2 0-2-2.5-1.5 0.5 0.5-0.5 1.5-2.5 1.5-2.5 2.5-2 2.5-1 2.5-1.5 2.5-1.5 2.5-0.5 0.5-2.5-1.5 0-0.5-1-0.5-1.5 0.5-3.5 2-1.5 3-0.5 3 0 3.5 0 2-1.5 1-1-0.5-2-1-1.5-0.5-1 1.5-1.5-1-0.5 0-0.5 0-1.5-1.5-1 0.5-3.5-2 0-1 2.5-2.5 2 0 3 2 2.5 2 2 2.5 2.5 2 1.5 2.5 1.5 1 2.5 0.5 2 1 1-0.5 3 1.5 1 1.5 2 2 2.5 1 3-1 2.5-1 1-0.5 1.5-1.5 0-3 0-2.5-2-1-3-2-2.5 0.5-3-0.5-3 0-3 1.5-2.5 2-1.5 1-2.5-0.5-2-2-0.5-1.5 0.5-2 0.5-1 0.5 0 1-1 1-1 1 1-2.5 0.5-1.5 1-1.5 0.5-2-2-2.5 0-3.5 0-3 0.5-1 0-1.5-1-0.5 M802 651l-3-0.5-3 1.5-1 0 0 0.5 0.5 1 1.5 1.5 1.5 3 2 2.5 1 2 1 2 0 0.5 0.5 1 1-1.5-1.5 0.5 0.5 2 1 3 1-1 2 1 0-1 1.5-0.5-1-1.5-1-1.5 1.5-1.5 1.5 0 1 1.5-1 3-1.5 1.5-1 2.5-1.5 0-3 1.5-3-0.5-2 0.5-1-0.5-1.5 0-1.5 0-1 0.5-3-1-1-0.5-2 0.5 1 3 0 2.5-1.5 3 0 1-2.5-1-1.5-2.5-0.5-2-1.5-2-3 0 0.5 0 0.5-2.5 1.5-0.5 1.5-0.5 0.5-3 0.5-3 0-1 0.5-1.5 1.5 0 0.5-1-1-2.5 0-2 2 0.5 0.5 0.5-0.5-0.5 1-0.5-3-0.5-3.5 0-1 0-3.5 0-1 0.5-3-1-2 0-1-0.5-3-0.5-0.5 1.5-2.5 1-2 2-1 0-1.5 2 0 2-1.5-0.5 2-1 0.5-0.5 3 1.5 3 1 2 2 2 1.5 1.5 2 0.5-1 3.5 1 1 1.5 1.5 2.5 1 2 0 2.5-1.5 2.5-1.5 2.5-2 1-1 1 1.5-0.5 2-1 2.5 0.5 2.5-0.5 2 1 3 1 2.5 1.5 0-1-2.5 1-3 0.5-3 1-2-1-0.5-2 0.5-3-3-1.5-2.5 1.5-1.5-1.5-2 0.5-1.5-1.5-1.5-1.5-1.5-2.5-3-1 2-1 3 0 2-2.5 2-1.5 0.5-2.5 0.5-2.5 0-3 0-2 0-2 1.5-1 2.5 1 0.5 0 0-0.5-1.5 2.5-3 0-1.5-3-2-2-2-1.5-2.5-2-0.5-3.5-1-1-1.5-2 0.5-3 1-2-0.5-1.5 0-3 2-2.5 0.5-1.5 1.5 1-0.5 1 M791 704l 1 0-1-2-3 0-1.5-1-1-0.5-3.5 1-1-1.5-1 2 0.5 2.5 1 0 0 1 0.5-1-3.5 0-0.5-0.5-0.5-1-2-1-2.5-1.5-1.5-1.5-2.5-2.5-0.5-3-1.5-2.5-1.5-1-1-1.5-1-3-2.5-2-0.5-2.5 2.5-2 2-1.5 1-2 0-2 1.5-1 0.5 0 3-1 2.5-1.5 1.5-1.5-2-2 0.5 0-2.5-0.5-1.5 2.5 1 0.5 3-2 2-2 3-1.5 3 0 2.5-1.5 1.5-1.5 2-1 1.5 0 0-0.5-2-0.5-1.5 1-2-0.5-3 0-3 1.5-3-1-3.5-0.5-1 1.5 1 1 3 1.5 3-1 3 0 0.5 0.5 2-0.5 0 1 0 1 1.5-0.5 2 1 2.5-0.5 2.5-1 0.5-1.5 0.5-2.5-1-3 0-3 0-2.5 1.5-2.5 1-1-1-0.5-1 3 1 3 1.5 2.5 2 2.5-0.5 0.5-1.5 0.5 0-0.5 1-0.5 0.5-2 0-3 0-0.5-3-0.5-3 0-3 1 0.5 2 0-3-2-1.5-2 0.5-1.5 1-1 2.5 0 1 0.5-1 1 2 2 2 1.5 2.5 0.5 3 0.5 3.5-0.5 3-0.5 3 0 1 0.5 2.5 1 2.5-1.5 1 1.5 2 2.5-1.5 1.5 0 1 2 2 2.5-0.5 0-1-2-1 1.5-2 2.5-1 2-1 0-1 1.5-2 1.5-2 2.5 0.5 1.5-2 2-1.5 2.5 0 2.5 0.5 0-0.5 0-0.5 0.5-1-1-0.5 0.5-1 1.5-1.5-1.5-1-3-1-1 0.5-1.5 0-3-0.5-1.5 0.5-3-2-2.5-2-2.5 0-3 0-2.5 1.5-3 0.5-1-2-2.5 M767 703l-2.5 0 0-2 2.5-2.5 1.5-2 2-2.5 3-1 2.5 1.5 3-0.5 3-1 2.5-1.5 1.5-1 0.5-0.5 2.5-1.5 0.5-2 3.5-0.5-2-2.5-2.5-1.5-2-2-2-3 1.5-2.5-0.5-2.5-1-1-1.5-3-1.5-2.5-3-1-2.5 0.5-3-1.5-2 0-1 0.5-2.5 1.5-3 1.5-1.5 3-2.5 2-2.5 2-1.5 0 2 0 0-2.5 2.5-1 1.5 0.5 1 2-0.5 2.5 0.5 0.5 1 2.5-1 3.5 0.5 2 2.5 2.5 0 1-1.5 0.5 0-0.5 0 0.5 1.5 0.5 2.5-2 1.5 0 0.5-2.5 0.5-3 1-3 1.5-3 2.5-1.5 3-1 2-1 2.5 1 2.5 2 3.5 0 1 0 2-2 1.5-1.5 2.5-2 3.5-0.5 3 0 2.5 2 1 1.5-0.5 0-0.5 0-0.5-1 0-1.5-1 0 1 0.5 1 0.5 0 1.5-1 2.5 0.5-1 3-1.5 2.5-1.5 1 0.5 2.5 1 2 0.5 1 0 0.5 0.5 1 1.5 0 2 1-1 1.5 2 1 1.5 0.5 1.5 1.5 1 1.5-0.5 1 0.5 0 0.5 1.5 0 M736 780l 0.5-1.5 0.5-2 0.5-1.5-0.5-2-1.5-2.5 2 0.5 3 0 1.5-2 1.5-0.5 1.5 1-2 0.5 1.5 0.5 1.5-0.5 1.5 0.5 1 2-1 1.5-1 2.5-1.5-1.5-2-1.5-3 0-3 0-2.5 1-1 1-2 2-2 2-2 2-0.5 1.5-2.5 0.5-1.5 0.5-2.5 0-3-0.5-1-0.5 1-1 2-0.5 1.5 0.5 2.5 0 2.5-2.5 0.5-3 2-1 0.5-1 2 0 0-1.5 0.5-0.5 1.5 0 1.5 0 0 0.5 0 0.5-3.5 0-3 0.5-3 0-3-0.5-2-2.5 1-2 0-1-2-2 0-3 0.5-0.5 0-1.5 0.5-1 0.5-1.5 2.5-2 1-2.5 2-2 1-3 1.5-3-0.5-3 1-1-0.5-3-0.5-2.5-0.5-3-2.5-2-1.5-3-2-2.5-1.5 0-1-1 1 0 2.5-1 1 0.5-1.5-0.5-2-1.5-1-0.5-3 0 0 2 0 2.5-0.5 2 0.5-1 0.5-2.5 2.5-2 3-1 2.5 1.5 2.5 1.5 0.5 1.5-1 1-2 2-0.5-2-1.5-1-2-2-1.5-2.5-0.5-2 1-2 2-3 1.5-2.5 2-2.5 0.5 0 3-1 3 0.5 3 0 2.5-0.5 1.5 1.5-0.5 0.5 1-1.5 2-2 2-2 3.5-0.5 0.5-0.5-1-2.5 0-2 0 1-2 2-3 1.5-3 1-3 1.5-3 1.5-2 1.5 1 2-0.5 0.5 1.5 0 0 1 1 1-1.5 0.5-2.5-2-3.5 0-2.5-2-1.5-1.5 1 1 1.5 3 2.5 1 0 3 1.5 3 1.5 2.5 3 2 1.5 1.5 1 0.5 0.5 3.5 2 2 0 1.5 0 1.5 1 2.5 2 2 2.5 2 M778 738l 0.5 0.5-1-1.5 1-1.5-2-1.5-1.5-1-2-2-3 1-0.5 2.5-2 1-3 0-2.5-2.5-1.5-3-1.5-0.5-1.5-1.5-1.5-1.5 0-2 0.5-2.5-2-1.5-1.5 0.5-3-1-1.5-3-2.5-1.5 1-1-2 0-0.5-3.5-0.5 0.5-0.5-0.5-2-1.5 1-1.5 1 0.5 1.5 0.5 1.5-2.5-1-1.5 0 2.5-0.5 3 0.5 1.5-0.5-1 0.5 1.5-0.5 1 0.5 2-1.5 1.5-1.5 3-0.5 0 0 1-0.5-1-2.5-1.5-2.5-2.5-3-0.5-2-2-1-1.5-2-1-2.5-0.5-3-0.5-3-0.5-0.5 2.5-1-1 0-0.5-1.5 0.5-0.5 2-2-1-1.5-1.5-1-1.5 0-0.5-1-2 0.5-3 0.5 0.5-2.5 1.5-0.5 0.5 0 1.5 2.5 2.5 0.5 3 0.5 3 1 3 1.5 1 2.5 2 2.5 2-1 1-0.5 0 0.5 1.5 0.5 0-2-1 0 2 0.5 2.5 1.5 3-1.5 1.5 0 1.5-1.5 3-2.5 1.5-0.5 1.5 2 2 2 2.5 2.5 2 2.5 0.5 2-0.5 2-1.5 3 0 3 1 0.5 1.5 0 2 1 1.5 0 2 0.5 2 0.5 3 1 3 0 2 1 1.5-1.5 2.5-1 2.5-2 1.5-2 0.5-0.5 0-2-2.5-0.5-3.5 0.5-2-1-3-1-3-0.5-3.5 0.5-3-0.5-2 0-3-0.5-3 1.5-3 1-2 2.5-2 2-0.5 1.5 1 2 1 3 0 3.5 0 2.5 0.5 1-0.5 2-3 1 1 0 1-0.5 2 3 0 1 0.5 2.5-2 0.5-2 0.5 0.5-0.5 1.5-2.5 1-2.5 2-1 0.5-1.5-1-2.5-1.5-1.5-3-3-1 M770 699l-1.5 3-0.5 3-1 3-1 1-1.5 0-1 0.5-1.5-1.5-0.5-1-2-3-1-2-3-0.5-3 0.5-2.5 2-2-0.5-1-3-2.5-0.5-3 0-1.5 1.5 0.5 0-0.5 1 0.5-0.5-2-2-2.5-0.5-2 0-0.5-1.5-1.5-3 0.5-1 1.5-3-1.5-2.5-0.5-1 0.5 0.5-2 0-2 2-0.5 2.5-0.5 3 0.5 3 1 2 0.5-1.5 1.5-1.5 1.5-2.5 2-1 1-0.5 3 0.5 2.5 1 1.5 2 1 3-0.5 3.5-0.5 3-1 2-1 1.5 0 1.5 1.5 2 0.5 1 1.5 0.5 1 1 2.5 1 1.5 0.5 0 1.5-1.5 1-2 1.5-2 1.5-1.5 1.5-2 2.5 2.5 1.5 3 1 3.5 1 2.5 1.5 3 0 2.5 2.5 3 1 1 3 0.5 3 1.5 2.5 0.5 3.5 0.5 2.5 1.5 2.5 0 3-0.5 3-2.5 1.5-2.5 1.5-2 0.5-2.5-1.5-2.5-2-2-2.5 0.5-3.5-0.5-3 0-3-1-1.5 0-3.5 1.5-2 0.5-1.5 3.5-1 1.5-1.5-0.5 1 3 1 2 2.5 0 1.5 1 0.5 1-1.5-2-1.5 M817 806l-2.5 2.5-0.5 1.5 0 3.5 0.5 3.5 1.5 1.5 1 3 2 2 1 2.5 1.5 3-0.5 1.5 0.5 1.5 0.5 2-1-1.5 2-1.5 0.5 0.5 2-1 3-0.5 3.5 0.5 3 1.5 2.5 1.5 4 0.5 1 0.5 0 0.5 1 3.5 2.5 2 1 0.5 2 3 1.5 1 3.5 1.5 2 2.5 2 3 1 0.5 0 3-1 3-2 3 0.5 2-3 2-2.5 0-2.5 0-3-0.5-3-0.5-2 0-2.5 0-3.5-0.5-3.5 0-2.5 0-2 0-1.5 1-2-1-2.5-1-1.5 0.5 0 1.5 0-0.5 1.5-1.5 0-0.5-0.5-1-0.5 0.5 0-2-0.5-3-1 0-1-3-2 0-2-1-1 0-0.5 3.5 2.5 1.5 1 2-1.5 1.5-3 0.5-3 1.5-3.5-0.5-3-2-2.5-2.5-3.5-0.5-0.5-0.5-2 0-2-0.5-3-1-3.5-0.5-3.5 1-3 0.5 0 3.5-0.5 2-2 2-2.5-0.5-1-1-0.5-1-3-1-3-1.5-3-1-3.5 1-2.5 0.5-3.5 1.5-1 0.5-1-0.5-2 0-2.5 0.5 0-2.5-0.5-0.5 1.5 0 2 0 1 0 3 0.5 1.5-1-0.5 0.5 1.5 1.5 1 3.5 2-1 3-2 2.5-3 1.5-3 3-0.5 3-1.5 3-1.5 2.5-2.5-0.5-3.5 1.5-3 2.5-2.5 3-2 3.5-1 3-1 2.5-2 2.5-1.5 2.5-1.5 2-2.5 M750 857l 2-1 3-1.5 3-1 3-1 3.5 1.5 2.5 0 0.5 0 0.5-1.5 0-3.5 1-3.5 0.5-2.5 2.5-2 1.5-1.5 0.5-2-1-2.5-1.5-1 0.5-2 1.5-1.5 1.5 0.5 2 1.5 1 3 1.5 1 1 0.5 2-1 3.5-0.5 3-2 3-2 3-2 1.5-1.5 1.5-2 1.5-1 3 1.5 2.5-1 3.5-0.5 3.5-1 2.5-2.5-2-2.5-0.5-2-0.5-1 0.5-2.5 1-1.5 0.5-3.5 1-1.5 3-2 3.5 0 2.5 1.5 3.5 0.5 3.5-0.5 2-2.5 1.5 0 3 2 3.5 0.5 1.5-3.5 0-3.5 3-2 0.5-1 2-0.5 3.5 0.5 3 2 1.5 3 1.5 0 2 0.5 1-0.5 2.5-1 2-1.5 1.5-1.5 0.5 0.5 0 0.5 1.5-1 1.5 1.5 0.5 3-1.5 2.5-1 0.5-3 1.5-3.5 1.5-3 1-1 1-1 2.5-1 0-0.5 3-2 2.5-3.5-0.5-2 0-1.5 0.5-1 1.5-0.5 1.5-3.5 0-3.5-0.5-3.5-0.5-3 2.5-2.5 2-3.5-0.5-1.5-2.5-1.5-2.5-2-1.5-1.5 0-2 0.5-2.5 0.5-3.5-1-3.5 0-1 1.5-1.5-0.5-3.5-1 0.5-1-2 1-1.5 3 0 3.5 1 3.5 0 3.5 1.5 3 1.5 3 1 1.5 1 2 1 2 2 3 0.5 1-0.5 1 0 3.5-1.5 3 0 2.5 1 2.5 2.5 2.5 2 3 0-1 1.5-2.5 M740 810l-0.5 0 2-1 0-1.5 1.5-2 1.5-0.5-1 3.5-1 3-2 3 0 3.5 2 2.5-0.5 2.5 0 1 2-1.5 3.5 0 2.5 0.5 3.5 0 3.5 1 2.5 1 1.5 1.5 1 2 2.5 3 3 0.5 2-1.5 3-2 3.5 0 2.5-1 1.5-1.5 1.5-3 3-1.5 3.5 1.5 3 1 1-0.5 1.5 0 1-0.5-1.5-2 0.5-0.5 0-0.5 2 0.5 2.5-0.5 1.5-1 2-1.5-1.5-1-1.5 0-0.5 0 2-2 0-3.5-1-3-3-1.5-2.5 1-2.5 1-0.5 0.5-1.5 1-1.5 0 2.5-2.5 1-2-0.5-0.5-1-0.5-1.5-1-1-2.5-1-3 0.5-0.5-1.5-2.5-3-2-3.5-1-2-1-2.5 2-2.5 2-3.5 1.5-3 2-2.5-0.5-3.5 0.5-2.5 0-1.5 2-2.5 2.5 0 3-1.5 3.5-1.5 0.5-2.5-0.5-3.5-0.5-3-2-3.5 0-3 0-3.5-1-3-0.5-2.5 1.5-0.5 2-3.5 0.5-3-1.5-2.5-2-2.5-2-2-1-0.5 2.5-1 3 0 1.5 1.5 1.5 3 2 1-1 2-0.5 1 1 M865 935l-2-2.5-1.5-3.5-1.5-1-0.5-2.5-2-3-1.5-2.5 0-3.5 0.5-2 1-1.5 0.5-2 2-1.5 3-2 0.5-1.5 1-2 3-1 1-1 0-1-2-1 2.5-1 3.5-0.5 3.5 0 2.5-1 2-0.5 1.5-1.5 2.5-2 2.5-2.5 2-3 1.5-2 2-2.5 3-1.5 2.5-1 3-0.5 2-2 2.5-0.5 3-2 3-1 3-2.5 2-0.5 1.5 0.5 2 0.5 3.5 0 3 0.5 2 0.5 2.5 1 3.5 1 2 2 1 2-1.5 1.5 1.5-1 3-1.5 2-1 2-1 2.5-0.5 3-0.5 3.5 0 3 0 3 1.5 2.5 0.5 3 0.5 1.5-1 2-1 1.5-1.5 1.5 1 1 2 1 3-1 3.5-1.5 2.5-3 1-3.5 1.5-3 1.5-3.5 1.5-2.5 0-3 1-1 1-2.5 1-1.5 2.5-1 2.5-1 3-1 2-0.5 1-2 1-3 1-3.5-1.5-3-0.5-3.5-1.5-2.5-1-1 0-0.5 0-1.5 1.5-2 1.5-2 1-3.5 1-2 0.5-1.5 0.5-1.5 1.5-3 2-1 2.5-1 3 0 2.5-0.5 3 0.5 2.5 0 3 0 2.5 1.5 1.5 0 1.5 1 1 0.5 1-1 1.5-1 0.5-3 0.5-2-0.5-3-1-3.5-1-2.5 0.5-3.5 1-3 0.5-2.5 0.5-1 0-0.5 2.5-1 2.5-0.5 0.5 1.5-1.5 1-0.5 1 1 1.5 0 1.5-0.5 2.5-1 3-0.5 2.5 0 0.5 0 0.5-1-0.5-0.5 1.5-0.5 1.5-2 3-2-0.5 0-0.5-1.5 0-2 1.5-2 1-2 0.5-2.5 0-3.5-0.5-2.5-0.5-2 0-2.5-1-2.5-2.5-2-3-0.5-1-1-2-0.5-0.5-1-0.5-1 0.5 1 0.5 0-1.5 0 0.5 1 2 1 3-1 2-1-1-1-0.5 0 1.5-0.5 0.5-1.5 1.5-2 0-2 0.5-0.5 0-2 0.5-1.5 0.5-0.5-0.5 0 1.5-1 2.5-0.5 1-0.5 2.5 0.5 1.5 0.5 3.5 1 3 1 3.5 1 2-1 2.5-1 1-2 2.5 0 2 1.5 2 1.5 1.5 2.5 2 2 0.5 0.5 1 0.5 2 1 0 1.5-1 2-2 1.5-2 0.5-3.5 0.5-3.5-1-3-1-3-1.5-3-1 M910 893l-0.5 0.5-0.5 0 0.5 0 0-0.5-1.5-1-3-1-3.5-1-3 0.5-3.5 0-3 1-3 1-2 2-0.5 3 0 2.5 1 2 0 1.5 0 1 1.5 3.5 2 1.5 2 1 0.5 2 0.5 1-0.5 2 0 2-0.5 1-0.5 1.5 1.5 1.5 1.5 1.5 1.5 1.5 2.5 1.5 0.5 3 1 2.5 1.5 2 2 0 3-0.5 3.5 0.5 3.5 1 3.5-0.5 3.5 1 3-1.5 3.5-1.5 3-2 1.5-2 2.5-1 3.5 1 1.5-0.5 0.5-0.5 0-2.5 1-2 2-1 1.5-1 0.5-2.5 3.5-1.5 2.5 0 2-0.5 3-1 3-1 1.5-0.5 1.5-0.5 2.5-2 1-3 0.5-2.5 1.5-2 1-1.5-0.5-2.5 1.5-3 0.5-3 2.5-2 1.5-3.5-1-1.5-2-2-1.5-2.5 0-0.5-2.5-0.5-1.5 0.5-1-1 0.5-1.5-1-1 0-1-0.5-2.5-2-1-3.5-1.5-2-1.5-2 0-1.5 1.5-1 0.5-1.5 0.5-2 0.5-3 1-3 0-0.5 2 0.5 3.5 1.5 3 2.5 2.5 1.5 2 0 1.5 1.5 0-1 0 1 0-2-1-3-0.5-2-0.5-1.5-1.5-1 0.5-1-1-0.5 1.5 0 0.5-0.5 2-1-0.5-1.5 1.5-1.5 1.5-2.5-0.5-2 1.5-2 0.5-3 2-3 1.5-2.5 2-3 0-3-0.5-3-1.5-2.5-1.5-3-0.5-1.5-2-1-1.5-1.5-1.5-2.5-0.5-1-2-1.5 0 0-1.5 0-3 1.5-1.5 1.5-1-0.5 1.5 0 1.5-2.5 2.5-2.5 2.5-1 3.5-1 3 0 1.5 1 0 0.5-0.5 1-1.5 0.5-1.5 3.5-1.5 3-0.5 3-2 0.5-2 0.5-2 0.5-1.5 2-2.5 1.5-2 0-2 0-2.5 3 0 2.5 1 1.5 1.5 1.5 0 2 0.5 2 1 1-1.5 2.5-2.5 2-0.5 3-0.5 3.5-1 1-2.5 1.5-0.5 0 0.5-0.5 0.5 1.5 0-0.5 1.5-1 3 1 3.5 1 3 1 3.5 0.5 3 1.5 1.5 0.5 1 0.5 0.5 1-1-0.5-2.5-0.5-3.5-0.5-3-1.5-2.5-1.5-3 0-3 1-2 3 0.5 2.5 1.5 2 1 3 1 2.5 1 2.5 0 3.5 0 3.5 0 2.5 1 2.5 0 2 0.5 M946 869l-1.5 3-1.5 3-2 1.5-3 1.5-1.5 2.5 0.5 1.5-1 1.5-2 1.5-2 1-1.5 2-2 2.5-2.5 3-2.5 2-2 3-2.5 2.5-1.5 3-2 2.5-1.5 2 0 1.5 0 3-0.5 2.5-2 2 0 2 0.5 1.5 0.5 1 1 1.5 0.5 2.5 0.5 2-2 2.5-1 1.5 0.5 1.5 2 2 2.5 1 3 2.5 1 1 1.5 0.5 2.5 0.5 1-1 2-3 1-2.5-1.5-2.5 0.5-1.5 0-1 0 0.5-1-1-1-1-2.5-2.5-2-3-2.5-2-3-2-2-1.5-3.5-1-3.5 0.5-3.5 0.5-1.5-0.5-2-0.5-3-0.5-1.5-0.5-2-0.5-1.5-0.5-1.5 0.5-1 1.5-1 0.5-2 0.5-2 2.5-2 0.5-2.5-0.5-2.5-1.5-2.5-0.5-2 0 0 0.5 0-3.5-1.5-3.5-2-2.5-2.5-3-1.5-3-2.5 1.5-0.5 2.5-1.5 2-1.5 3.5-2 0 0.5 0.5 1.5-0.5 2-0.5 2.5-0.5 1.5 0 3-0.5 2.5-2 2.5-2.5 3-2 2.5-2 2.5-2.5 2.5-2.5 2.5-2.5 1-3.5 2-2 2.5-0.5 3-2 3-1 3-1 2.5-1.5 2-1.5 1.5-1 1 0.5 3-0.5 1.5-1 1 0.5 2.5 1 2 0.5 1 0 1.5 0 0.5 1 2.5 0.5 2.5 1.5 2.5 0 2 1.5 3 0.5 2.5 0.5 2-2 1.5-1 0-1.5-1.5-0.5-2 0.5-0.5-0.5-1.5-1.5-2.5 0.5-3 0.5-2 1-2 1.5-1.5 3-2.5 2.5-2 2.5-1.5 2.5-2 2.5-0.5 3.5 0.5 3-0.5 1-3 1.5-2 1.5-2 1.5 0 1.5-1.5-1-2-1.5-1-3.5 0-3 1-3 1-3.5-1-1 0.5-1 2.5-1 3-0.5 3.5-1.5 2 1 1 0 1.5-3 1.5-0.5 1.5-2-1.5-1.5 1-0.5 1 1 0 1.5-1.5 2-2 1-3 1-2 0.5 1 0.5 0.5-1.5 2 0 2.5-1 2.5 1 2 1 0 3-2 3-1.5 3-2.5 0.5-2.5 0.5-1.5 0.5-0.5 0 1 1 1.5-1 1.5 0 2-1 1-2 1.5 0 1 0 1.5 0.5 0 0.5-0.5 1.5-0.5 2 0.5 0 2 2 1.5 3 2 2 1 2.5 1.5 1.5 0.5 1 1.5 0.5 0 1-1 0-0.5 0.5 M894 958l-2.5 0.5-1 0-1 0.5 1-1 1.5 0 2-1 1.5-2.5 2-3.5 2-2 2-2 3-1.5 3.5-1 2-2 3-1 1-1 2.5-1 2 0 2.5-1 2.5-2.5 3.5-1 1-2 1-3 2-1.5 2.5-1 1.5-1.5 2.5-0.5 2.5-1 3-1.5 1-3.5 2-1.5 1.5 0 2-1.5 2.5-1.5 2-3 1-3.5 1.5-2 2.5-2 1.5-3 1-1.5 0-1.5 0.5-1 0-0.5 0 0.5 0.5 0 0.5 0.5 1 0 2-1 2.5-2 2.5-1 2.5-1 1-0.5 2.5-2 0-2 0.5-2.5 0-2.5 0-2 0-1.5-2-2-1-0.5-0.5 0-1-0.5-0.5-1-2.5 0-1 0-2-1-1.5 0.5-2 1-2.5 0.5-2 1-2.5 0.5-1.5 1-1.5 1 0 0.5 1 1.5 1.5 0 0.5 0-0.5 2 1 2.5 0 1-2 2-2.5 0-2 2-1.5 1.5 0 1.5 0 2-3 0-1 1.5-3.5 1.5-3 1.5-2.5 0-2.5-2-0.5 1-0.5-0.5-1.5-1-1.5 0-2 0.5 0.5 2.5 1 1 0.5-1-0.5 2 0.5 3-1.5 2-2 2-2.5 1.5-3 0-2-1.5-2.5 0-2 0.5-1-1.5-0.5-1 0.5-0.5-1.5 0-3-1-3.5 0.5-2.5-0.5-2.5-0.5-3 0-3 2-3 1-3 0-3.5-0.5-3 0-2-0.5-2 0 0.5 1-1 0-2.5 1.5-2.5 2-1 2 1 1 2 1.5 3 0 1.5 0 1.5-0.5 1.5-0.5 0.5-1 1.5-0.5-0.5-0.5-1.5 0-2-1.5 0.5-0.5 1-0.5 1 0.5 1-0.5 2-0.5 2.5-0.5 1 1 2.5 0.5 3 0 0.5-0.5 1 0.5 1-0.5 1-0.5 1.5 0.5 0.5 1.5 0-0.5-1 0.5 0-0.5 0-1 0 1.5 0 2 1 2 0 2-0.5 0.5-1.5 0.5 0.5 0.5-0.5 3-1 2.5-0.5 2.5-1.5 1.5-1 0.5-1.5 1-2 1-2.5 0.5-2 1.5-3 2-1 1.5-0.5 0-1.5 2 0 2 2 2-1.5 2 0.5 2 1.5 2 1 3.5 0.5 2.5 1 3.5 2 3 2.5 0 1 0 2-1.5 0.5-3.5 0.5-1-1-0.5-2-0.5-3.5 0.5-3-1-2 0.5-2 1.5 M977 862l 2 0.5 0.5 0.5-0.5 0.5 0 1.5 1 1 1.5 2-1 2.5-3 2-2 2-2 0.5-1 2.5-2.5 2-2 1-2 0-3-1.5-2 0-1.5 0-1-1.5-2-0.5-1.5-1-1 0.5-1.5 3-1.5 2.5-2 3-1.5 1-3 2-1.5 1.5-2 1.5-2 1-0.5 1-1.5 0-2.5 2-1.5 3-2 3-1.5 3-0.5 3.5-1 3.5-2 3-2 0.5-2.5 1.5-1 0.5-1.5-0.5-1.5 1-1.5 1.5-0.5 0-0.5 1-0.5 0.5-1.5 0.5-2 1-1 0 0-1-1-1.5-1-2.5 0-2-0.5-2.5-1-2-1-0.5-1-0.5-3.5 0-2.5 0-1.5-1.5-1.5-2-1-1.5-1-2 2-3 0.5-2 1-1 1.5-3 0-1-0.5 0 1 1-1.5 2.5 0 2.5 1 2.5 1.5 1 2 0.5 0.5 0 1 1 1.5 1 1.5 3.5 2 2.5 1.5 3 0.5 2.5 0.5 3.5 1 2-1.5 2-0.5 0.5-1 1.5-1 0.5-0.5 1 1 1 0.5 2.5 0.5 2 0 3-2.5 1.5-2 2-0.5 3 0 2.5-1.5 3-3 2.5-2.5 2-1.5 3-1.5 2-1.5 0-1 0.5-1.5 0.5-0.5 1 1 0.5 0 0.5 2.5-1 1.5-1 2 0 2 0 1.5-1.5 1.5-2 1.5-1.5 0.5-1.5 1-1-0.5-2 0-2-1-1.5-1-2 1-2.5 1-3 0.5-3-0.5-2.5 0-1.5-0.5-1 0-1 1 0.5-0.5 2 0-1.5 1.5-1.5 2.5-2 2-2 2-3 0-1.5 2-1.5 2-3 2-2.5 2-2 2-0.5 1-1-0.5-0.5-1.5-1.5 0-2-1.5-1 1-0.5 0.5-1 1 0 1.5-0.5 2.5-0.5 3-1 3.5-0.5 3.5-1 2.5-2 2-2.5 2.5-2.5 1.5-3 2-3 1.5-3 2-2.5 2.5-2.5 2.5-2.5 2-2 0.5-2.5 1-2.5 1.5-2 1.5-0.5 1-1.5 0-1-0.5-1.5 1.5-2.5 1-2.5 0-3.5 0.5-3 2.5-1 2.5-0.5 3-2-2 2-1.5 0-1.5 0.5-2 0-2 1-1.5 3-2.5 2.5-2.5 2-2 1.5-1.5 1-1 1-1 2-3 2-3 1.5-3 1.5-2.5 2.5-2 3-0.5 2 1 3 1.5 1 M934 922l 0-1.5 1.5-1 3-1.5 2.5-2 2-3 2.5-1.5 2.5 0 2-1 1-0.5 1.5-1-1 0.5-0.5 2-0.5 3-1.5 3.5-0.5 2-1.5 1.5 0 0.5-0.5 0.5-1 1-0.5 1.5 0.5 0.5 1.5-0.5 1.5-1 2 0 0.5 0 1 0.5 0.5 0.5 2-0.5 1 0 2-1 2-2.5 0.5-3.5 1.5-0.5 1-1 1-0.5 0-0.5-1.5-1.5-2.5-2-1.5-3-2.5-2.5-1.5-2 0-3 0.5-3 0.5-3 0-3 0-2.5-0.5-1.5-1.5-1-3-2-3-0.5-3.5 0-3 1.5-3.5 1.5-1 2.5-1 3-1 3-2.5 2-2.5 1.5-3.5 1-2.5 1.5-0.5 1.5-3 2-3.5 1-3.5 0-2.5 1-1 2 0 3 1 1.5 1.5 0.5 1.5-0.5 2 0.5 2 2.5 1 0 0.5 1.5-0.5 2 0.5 3-2 3.5 0 2.5 1.5 3 2 1.5 3.5-1 1.5-1.5 2.5-2 3-1.5 2-1 2.5-0.5 1 1 1 1.5 1.5 2 1.5 1.5 0.5 1.5-2-0.5-1 0.5-1.5 1.5-2 2.5-3 2-2.5 0.5-2.5 0.5-2 1.5-3.5 0-3.5 0-3.5 0-3-2-1.5 0.5-1-0.5-1 0.5-2 0-3 2-3 1.5-3 1.5-3 1-2 0.5-2 0-2.5-1-3 0.5-2.5 1.5-2 3-2.5 2.5-1.5 3-2 3-2 2.5-1 0.5-1.5 0-1 1 0 1-1 1.5-1 1.5-2.5 1-0.5 0-1-1.5-1.5-3-1-3.5 0-2.5 1-1-0.5-1.5 0-1-1.5-2 0-3-1.5-1.5-0.5-0.5 0-1.5-1-2-2-1 1-0.5 1-1.5-1.5-0.5-0.5 0 1-1.5 1-1-1-0.5-0.5-2-1-1.5-1.5-1-1.5-0.5 0.5-1.5 1 0 0.5 0 0.5 1.5 2 1.5 3.5 0 1.5 0 0.5-0.5 1 1 3.5-1.5 2.5-1 2.5-2 1-1.5 0-2 0.5-3.5 1-3.5 2-3 1.5-3 1.5-3 3.5-1 2.5 0 2 0 0-1.5 1.5-1.5 2-3.5-0.5-3 0-2.5 0.5-1.5 0.5-2 1-1.5 1-3 2.5-2.5 2-2.5 1-1 0.5-0.5 1-0.5-0.5-0.5-1 2.5 0 2 1 2 1.5 3 2 3 0.5 2.5-1.5 2-1.5 2.5 M954 921l-1.5-3-2-3-0.5-1.5-2-1-1-1-1-1-1.5-1-1-2 0.5-1.5 2-1 1.5 0.5 1.5-1 3-1.5 1.5-1 2-1.5 1.5-0.5 1.5-2.5 1-2-0.5 0 0-0.5 1.5-2.5 1-3 1-3.5 1.5-3-0.5-0.5-1.5 2-1 3-1 3.5-1 3-2.5 1-2.5 0-2.5 0.5-1 1.5-1 0.5-1.5 1.5-2 1-1.5 1 0.5 0.5-1 0.5 0.5 1.5 2 3 0.5-0.5 1 1 1.5 0.5 3 2 3 2 1 2 1.5 0 0 2.5 0.5 1-2.5 1-1.5 2-0.5 1.5-0.5 1 0-1-0.5 0 0 0.5 1-1-0.5 0.5-0.5-2-1-2.5-1-2-1.5-1.5-1 1.5 0 1.5-1.5 1-1.5 1-2.5 1.5-2.5 0.5-2.5 2.5-3 2-2.5 0.5-1.5-1.5-2.5-1-0.5-2-3.5-1-3-2-3-1.5-3.5-1.5-3-1-3.5 0.5-3.5 1-2.5 0.5-2.5 0.5-3-0.5-1.5-0.5-2-2-1-2-2.5 0-2.5 1-2.5 2-1.5 1.5-2.5 2-2 2 0.5 1-0.5 1.5 0 1-0.5 0.5-1 1.5-1.5 3-1.5 2.5-2.5 2.5-1 3.5-1 3.5-0.5 2.5-1.5 1-2 1.5 0-1-1 1-1-0.5 0.5 0 0-0.5 0.5-1.5 0.5-1 0.5-1 1-1.5 1.5-3 1.5-3 1-3-0.5-3 0.5-1.5 0.5-2.5 2-1.5 2.5-3 2.5-2.5 2-2 1.5-1 2.5-1 2-2 1.5-1.5 2.5-0.5 2.5 0 1 0 1 0 1.5-1 0.5-1 0.5-1-0.5-0.5 1.5 0 1 0 2.5 0.5 3 2 3 1 3 0.5 3.5 0 3.5-1.5 3-1.5 3.5 0 2.5-1 2.5-0.5 1-0.5 1.5-1.5-0.5-0.5 1.5-1 1-1.5 0-3.5 0-2 1-3 2-2.5 1-2-0.5-1.5 0-1.5 2.5-1.5 2 0 1.5-1 2-1 2 0 0.5-1.5 2-1 2.5-0.5 2.5 0.5 1 0-1.5-1 0.5-2 1.5-1.5 0.5-1 1.5-1.5 1.5-2 0.5-1 1-0.5 2 0 2 1 1 0.5-0.5 0 1 0.5 1 1-0.5 1.5-2 1.5-2-1-3-1-1.5-2.5-3.5-1.5-2.5-2.5-1.5 0 0-1.5 0.5 0.5 1.5 1 0.5 2.5 0.5 2.5 M990 871l-0.5 0.5-2.5 2.5-3 1.5-1.5 2-1.5 3.5-2.5 1.5-2.5 1-3 1-3.5 0-2 3-1 2 0 1.5-2.5 2-2 2-2.5 0.5-1.5 2-1.5 1.5-3 1-3 1-3.5 0.5-2.5 0-3.5-0.5-3.5 0-2 1-2.5 1-1.5 1.5-1 1 0 3 0.5 3.5 0 2.5 0 2-1.5 2-3 2-1.5 1-2 0 0 0.5 0.5 0 0-0.5-1-1.5-2-0.5-1.5 0.5-1.5 0.5-1-0.5 0-1-0.5 1-1.5 3.5-1 1.5-1.5 3-2.5 2.5-1.5 2-1-0.5-1.5 1-3.5 0.5-2 1.5-2.5 1.5-3 2-2.5 2-2 2.5-1 2.5-2.5 1-3 2.5-3 2-3.5 0.5 0-0.5 1-0.5 2-0.5 2.5-0.5 0.5 0-0.5-1 2-1 0.5-2.5 0.5-3.5 0.5-2.5 0-2 0.5-1 0.5-1.5 2 0 2 0.5 3.5 1 3.5 1 2 0 3 1.5 3 0.5 2 1 0.5 1.5-0.5 1.5 0.5 1.5 3-1.5 3.5-1.5 2-1 2-1.5 0-2.5 2-0.5 1.5-0.5-0.5 0.5-1-0.5 0.5-1 1.5-2 1.5-2 2-1 M837 974l-2 1-1.5 1-0.5 1-1.5 1 0 1.5 0 1 0 1.5 1 2 0.5 1.5 1 2 0.5 1 0.5 0.5 0.5 0 0.5 0 0.5-0.5 0.5-0.5 0.5-0.5 0-1 0-1.5 0.5-1 0-1-0.5-1.5-0.5-1-0.5-1-1.5-1-1-0.5-1-0.5-0.5-0.5-1-0.5-0.5-1 0-1.5-1-1-1.5-1 0.5-2 0.5-2 0.5-2.5 0.5-1.5 0-1.5 1-1 0.5-0.5 1-0.5 1-0.5 1 0 0.5 0 1 0 1-1 1.5-1 1.5-1.5 1-1 1.5-2 1.5-2 1-1.5 1-2 0.5-2.5 1-2-0.5-2.5 0-2.5 0-1.5-0.5-2.5 0-2 0-1.5 0-1-0.5-1.5 0.5-1-0.5-1.5-0.5-1-1.5-1-1-0.5-1 0-1.5 0.5-1.5 0.5-1.5 1-0.5 0.5-0.5 1 0 1 0 1 0.5 1 0.5 1.5-0.5 2 0 2-0.5 1.5-0.5 2 0 2-0.5 1.5-0.5 1.5 0 1.5-0.5 2-0.5 1.5 0.5 2 0 2 0 2.5-0.5 1.5-0.5 2-0.5 2-0.5 2.5 0 2 0.5 1 0.5 0 0.5 0 0.5 0.5 0.5-1 0.5-1 0.5-1 0.5-0.5 0.5-1 1-1 1.5-1 0.5-1 1-1.5 0.5-1.5 0.5-1.5 0.5-1.5 0.5-1.5 0-1.5-0.5-1 0.5-1-0.5-1-1-0.5-0.5-1-1-0.5-1-1-1.5-0.5-2-0.5-2-0.5-1-0.5-1.5-0.5-2-0.5 0-2.5 0.5-1.5 0-2 0-1.5 1-2 0.5-2 1.5-1.5 2-1 1.5-1 2-1 1.5-0.5 1 0 1 0 0.5 0.5 0.5 0.5 1 1 0.5 1 0.5 1.5-0.5 1.5 0.5 2 0 1.5 0 1 M839 975l 0.5-1 1-1 0.5-1 1-1 1-2 0.5-1.5 1-2 1-2.5 2-2.5 0.5-2.5-0.5-2 0-1.5-0.5-1.5-1-1.5-0.5-1.5-1-1-0.5-2-0.5-1-0.5-1.5-0.5-1-0.5-0.5-1 0 0 0.5 0 1-0.5 1-1 1.5-0.5 1.5-0.5 1-0.5 1 0 1 0.5 1.5 0 1 0 1.5-0.5 1.5-1 2-1 1.5-1.5 1.5-1 2-1.5 1.5-1 1.5-0.5 1.5-1 2-0.5 1.5 0 2-0.5 2 1-2 0.5-2 0.5-2 1-2.5 0.5-2.5 0.5-2.5 0.5-3 0.5-2 1-2.5 0-2 0.5-2 0.5-2 0.5-2.5 0.5-2.5 0-2.5 0.5-3 0.5-2.5 0.5-2.5 1-1 0.5-1 1.5 0 1 0 0.5 0 0.5 0.5 0 1-1 1.5 0 1.5 0.5 2 0 2.5 0 3 0 2-0.5 2 0 2 0 1-0.5 1 0 1-0.5 0.5 0 0.5 0 0.5-0.5 1 0 1-0.5 1 0 1.5-1.5 1-1 1-1.5 1.5-0.5 1.5-0.5 1.5-0.5 1.5 0 2.5 0 1.5-0.5 1 0 1.5 0.5 2 1 2 1 2 0.5 2 0.5 2 1 2.5 1 2.5 1 2 1 1 0-2 0-1.5-0.5-2-0.5-1.5-1-0.5-0.5-0.5 0-1-0.5-0.5 0-1-0.5-1.5-0.5-1 0-1.5-0.5-1.5 0-2-0.5-1.5 0-2 0-1.5 0.5-2 0-2.5 0-2 1.5-1.5 1-2 1-2.5 1-2.5 1-1.5 1-1.5 1-1 0.5-1.5 0.5-1.5 0.5-2 0.5-1 0-1.5 0.5-2 0-1.5 0.5-1-0.5-0.5-0.5 0 0 0.5-1 0.5-0.5 0-1 0 M1179 831l 0-1 0.5 0.5 0-0.5 1 2 1.5 1 0.5 1-0.5 2 1 2.5 1.5 3 0 1.5-0.5 1.5-0.5 2.5-1 0.5-1 1-1.5 0-1.5 1-2.5 0.5-2.5 1-3 0-3 1-3 0-3.5 0.5-2.5 0-2.5 0-3.5 1-2.5 0-2.5 0-2.5 0-2-1.5 0-2 0-0.5-0.5 0.5-1.5-0.5-1.5 0 0 1-0.5 0-1 0-0.5 1-1.5 0.5-2 0.5-2.5-1-1 1.5-1.5 2-2.5 0-2 0-3-0.5-3.5 0-1.5 1.5-3 0-3 1-2.5-0.5-2.5-2.5-1.5-0.5-3 0.5-3.5 1-3-0.5-2-1.5-3.5 0-3.5-1.5-2.5 0-3.5 0-1 0.5-1.5-0.5 0 0.5-0.5-0.5-2.5 0.5-1.5 1.5-1 1.5-1 0.5-2.5 0-1-1-1-1.5-0.5-0.5 0.5 1 2 3 1 2.5 2.5-0.5 2-0.5 3 0 3.5 0 2.5-2 3-1 3-2.5 2.5-2 1-3 1.5-0.5 1 2 0 3.5 0 1-1.5 1.5-1-0.5-2-0.5-1 0 1-1 1-1.5 1 0 3-0.5 3-2 0.5-2 0.5-3.5-1-3 1.5-0.5 1.5 1 1 1.5 2 1.5 3 0.5 1.5-0.5 1 0-0.5 0.5-1 0-1-0.5-0.5-1-0.5-1-1-2-1.5-0.5-3.5-1-3-1-3 0-2.5-2.5-1.5-3-0.5 0-0.5 1.5 0-0.5-1-1.5-2-1.5-3-0.5-3.5 1.5-3 2 0.5 2-2 1-1.5-0.5-0.5 0.5-2 0 0.5-3-1-1.5 1-0.5-1 0-1.5 1-2 2-3 2-0.5 0.5-1.5-0.5 1 1 1 2.5 1.5 2-1 1.5-1.5 1.5-2.5 1-3.5 0-3.5 0.5-3.5 0.5-2.5 1.5-1 0.5-2 1-1 3-3-1-3-0.5-0.5-1-1-3.5-0.5-1 1-1 0.5 0.5 2.5-1 0.5-0.5-1 0.5 0-1 1.5-2 1.5-2.5 0-0.5-0.5-2.5-0.5-3 1-1.5-1-0.5-1-1.5-0.5-1-0.5-0.5 1-1.5 0.5-1.5 1.5 0.5 2 2.5 3.5 1 2.5-1 0.5-2.5 0.5-2-0.5-2 2-3 1.5-3 0-1.5 2.5-1 2.5-2.5 2-3 2-1.5 2 0 1.5 1.5 2 1 0 2.5-0.5 3.5-0.5 2.5 0.5 2 M1206 788l-0.5-2-1-1.5-2.5 0.5-1-0.5-2.5 0.5-3 1.5-2.5 0-1.5 0-2.5 0.5-1-2 1-1.5 2-1.5-1 0-2.5 0-2.5 1-1.5 1.5-2.5 1-3.5 1-2.5 2.5-1.5 2.5-2.5 0.5-2.5 2-1.5 3-1.5 3.5-1.5 2.5-1 1-1-2-2-1.5 0-1-0.5-0.5-3-1-3-0.5-1.5-0.5-2-2-2.5 1-1 1.5-2.5 0-3 0.5-2.5 2.5-0.5 1.5 0 2.5-0.5 1 2.5 1.5 2.5 1 3.5 0.5 3.5 0.5 2-1.5 1-0.5-0.5 1-2 1.5-2-1-1.5-1.5-1.5-3-1-3-3-2-3.5-1-3.5-0.5-3 1-1.5-0.5-0.5-0.5-1-2-0.5 1 0 2-1 2-2.5 2.5-2.5 2.5-2.5 0.5-0.5-1.5-2-1.5-2.5 0.5-3.5 0.5-3.5 1-3 1-1.5 2.5-1 2.5-1 3-2.5 2.5 1.5 1.5-2 1 1-1 1 0-0.5-1.5-2.5-2-2-1.5-1-1 1-1.5 0.5 0.5 0.5 1.5-0.5 2.5-2.5 1-2.5 2-2 2.5-3 1.5-1 0-3.5-1 0-2.5-1-1.5-2.5 1-3.5 1-3.5-1-3 1-2.5-2-1-3.5-1-3.5 2.5 0 3.5 0.5 2 0.5 2.5-2.5 1.5-3-0.5-3.5 1-2.5 1.5-2 1-2 1.5-1 0-2 1-0.5 1.5-0.5 2-1 1 1 2.5 0 2.5 1.5 2 0 3.5-0.5 1.5-1 0.5-1 1 0 1-0.5 1.5 0 1 2.5 1.5 1.5 2.5 2.5 1.5 1.5 0.5 1.5 0 2-0.5 2.5 1.5 2 1 1.5 3.5 0 1-1 2-1 1.5-3 1.5-1.5-0.5-0.5 2-0.5 0 2.5 0.5 2.5 1.5 0-1-0.5 1 0 1.5-3 1-3 1.5-1 2-2.5-0.5-1.5-0.5-0.5 0.5 1 0-1 1-2.5 0-1.5 2-1 0.5-3.5-2.5-2-2-3-1.5-3.5 2.5 0.5 3.5 0 3 0 0-1 2.5 0.5 4 0 3 0 3.5 0.5 1.5 1.5 1.5 2 0.5 3 2 2 1 2 2 1 3.5 1.5 3.5 1 2-1-1.5-1-0.5-3.5 0-2.5-0.5-3.5-1.5-0.5 2.5 1.5 2.5 2.5-0.5 3-2 3.5 0 1.5 1.5 1 2-0.5-1.5 0-0.5-2 0-3 M1056 817l 1-2.5-0.5-2 1.5-1 2.5 0.5-0.5 0-1-2-2-0.5-1 0.5-1.5 1-2 0.5-3.5 0.5-2 0.5-1.5 0.5 0.5 0.5 2 0 0.5-1 1.5-3.5 2.5-2 0.5-1.5 1 0 3.5 0 0.5 1 2 2 0 2.5 1 1 1.5 2-1 3.5 1.5 3.5 2.5 1 3.5-0.5 3.5 0 3-2 1.5-2.5 0-2.5-1-2 0-0.5 2-0.5 0 0.5 2.5 0.5 3-0.5 3.5 0.5 2 0.5 0.5 0 1 1.5 1.5 1.5 2 0 2-0.5 2.5 0 0.5-0.5 1.5 0 0-1.5 0-2 0.5-1.5-0.5-1.5 0.5-1.5 3 0.5 1.5 1 1-0.5 1-0.5-1 0 0.5 1 1 0.5 1.5-2 3-2 3-1.5 2.5-0.5 2.5 1.5 3-1 3.5-0.5 3.5 1 2.5 0.5 0.5 0.5-1 3 0.5 3 1 2 0.5-1.5 0.5-1.5 2-2.5 2-1 3-2 2-2 1.5-1.5 1-1 1 1 2 1 3 1 3.5 1 3.5 1 3 1 1.5 0 2 1 2 0 2-1.5 3 0.5 3-1.5 2-1.5 1.5-2 3.5 0 3-0.5 0 1.5 0.5 2 2 1-1 3-1.5 3.5-1.5 3 1 3-0.5 2-2 1 0.5 2 0 1.5 0.5-0.5-0.5 0 3 0.5 2.5-1.5 2.5 0 2-0.5 0.5 2 2 2.5 2.5 1.5 1.5 1 0.5 1 1.5 0 0.5 0.5 1.5 0 3.5 0 2 1 0 0.5-1.5 3-2 3-1.5 0 0 1-0.5 0.5-1.5-3 0-3.5 1-2 1.5-3 0-2-2.5-2.5-2 1.5-3 1.5-3.5 1.5-2 1-2 0-2.5 1-1.5 0.5-2-0.5-3.5 0-1.5 2-3.5 0.5-3 1-1.5 1-3 2-1 1.5-2 0-2.5-1.5-2.5-1.5-2 0.5-3.5 0.5-2.5 2-2.5 2-1.5 1.5 0.5 0 0 0.5 2-1.5 2.5-2-0.5-1-1 1-2 1-3.5 0-3.5-1-3 2-2.5 2-2.5 2.5-2.5 2.5-2.5 0.5-3 1.5-2.5-0.5-3.5-1-3.5-0.5-0.5 0.5-1.5 1-3 0-2-2.5-2.5 1.5-3.5 1.5-2 0.5-2.5 2-2.5 1.5-3 2-1 1.5 0 1.5-1.5-0.5 0-0.5-1.5 0.5 0.5-2-0.5 0 0-2.5 0.5-3 M1118 776l 1-1 2.5 0 3 0.5 2.5 2 1.5 2 2.5 0 2.5 2 3-0.5 2 0.5 3.5-1 3 2 2.5 2 1.5 0.5-1 1.5 0.5 3.5-0.5 3.5 0.5 3.5-1 3 0.5 3.5 2 3 1 3.5 2.5 2 0.5 0.5 0 2.5 0.5 2.5 1 2 1 1.5 3 1.5 1 0.5 2 1 0 1.5 2 0.5 0.5 0.5 0.5-0.5 0 3.5-1.5 1-1 1-2-2.5-1-3.5 0-3 2-3 2-2 3-2 2.5-2 3-2 1-0.5-2.5 1.5-1.5 0 0-2 1.5-0.5-1-3.5-1-3-0.5-3 0.5-2 1.5-1 2.5-1.5 2.5-1.5 2-2.5 1-1 2 1 1.5 1 3.5-1 1-0.5-0.5 0.5 2 0 2 3 1 1 3.5-0.5 3 0 1-0.5 0.5 2-1.5 1.5-1 3.5 0.5 3-0.5 3.5 1 3.5 0.5 2-1 2.5-1.5 3 1.5 2.5 0 2.5-0.5 2.5 0 3.5 1 1.5 0 3.5-1 2.5-1.5 1 0 2.5-1.5 3.5 0 3.5 3-0.5 2.5-0.5 1.5-3 0.5-1.5-0.5-2 0-2-1-1.5-1.5-2.5 0-3-1.5-3-3-2.5-3-1.5-2-1-2.5-2-3.5-1.5-3-0.5-3.5-1.5-3.5 1-2 3-2.5 2.5-3 1-2.5-1-3-2-3.5 0.5-3-1.5-2-1-1.5-0.5-2 0-1.5 0-2 0.5-1.5 0-2.5-2-2-3-1.5-3-2-2.5 0.5-2.5-0.5-3.5-2.5-1-0.5 1.5 0.5 2-1 3-1.5 3-1.5 3-2.5 2.5-3.5 1-2 0-2.5 0.5-3-2-2-1.5-2.5-0.5-2.5-0.5-3 1-2 2-1.5 1.5-3 1.5-1.5 1.5-1 2 0.5 1.5 0 2.5 0 1-2.5 0-2-1-1.5-1.5-2-1-2-2-1.5-2.5-1.5-3.5-2 0-2 3-0.5 3-1 1.5-2.5 2-3 0-3.5 0.5-1.5 3.5-1.5 3-3 2-2 1-1.5 0.5-2 0-2.5 1.5-3 1-2 0.5-2-1 0 1.5-0.5 1-2.5 2.5-3 0.5-2.5 0.5-1 1-1.5 0.5-0.5 0 1-0.5-0.5 0.5-1.5 2-2 3-0.5 1.5 1.5 1.5 1.5 1 3 1 3.5 1 3 0 2-2 1.5-3.5 1.5-3 2.5-2.5 1-3.5 M1044 819l 1.5-2 1 0 0-1.5 0.5-2 0-0.5 1.5-0.5 2.5-1.5 3-1.5 2.5-2.5 3-1.5 3-2.5 2-1.5 1.5 0.5-0.5 1-2 0-1-0.5-2.5 0 1 2 2 2 2.5 1 0.5 1 0.5 0-1.5-0.5-0.5-1.5 1.5-1.5 1-3 0-0.5-1 0 1 0 1-0.5 1 1.5 0.5 3.5 3 2 1.5 1 1.5 2 0.5-0.5 2 1 3 1 1.5 1 1.5 0.5 1 0.5 0.5 0-0.5 1 1 1 3.5 1 3-0.5 3.5-1 3-1.5 3.5-1 0.5 0 3.5 1 3.5 1.5 3.5 0.5 2.5-1 2-0.5 3.5 0 2.5 2.5 1.5 3 1 0.5 0.5 0.5 1.5 1 1 1 0 1 2.5 1 2.5 1.5 2 0 3.5-0.5 2.5-1 2.5 1.5 2.5 2.5 1.5 2 1 3.5 0 2 3 1.5 3 0 0-2 0-1.5 0.5 0-0.5-1-2-0.5-1.5 0 0 2.5 0 1 2 1 1 1.5 1.5 2.5 0.5 2.5 0-0.5-2 1.5 0 1 0 1.5-1.5 2-1.5-0.5-3.5-1.5-3-1-3.5 0.5-3 1.5-1.5 0-2.5 1.5 0.5 0.5-0.5-1.5-0.5-0.5 0 2-1 1-2.5 0.5-1 0-2.5 0-3.5 0.5-3.5 1-3-1-1.5-3.5-0.5-0.5-2-2.5-3-0.5-2-1-1.5 0-1.5-1-3-0.5-1-1.5-1.5-2-3-2-2.5-2.5-3-2-3-1.5-3.5-1-2-3-0.5-3-2-3-1-2.5-1 1 0.5 1.5 0 1.5 0.5 0.5 0.5 0.5 0 1-0.5-1.5 0.5-1.5-1.5 0.5-3 1 0.5 1 1.5-1 1-3.5 3.5-0.5 3 0.5 2.5-1 2-1.5 3.5-1.5 0.5 0 1-1 1.5-3 2.5-2 1-3.5 2.5-2.5 1.5-3 1.5-3 2.5-2.5 1.5-3 2-1.5 1-0.5 1 1 3-0.5 3-0.5 3.5 1 0 2.5 1 2 1 3-1 3.5 1.5 2.5 2.5 2 2.5-0.5 1.5 1.5 3 1.5 3 2 3.5-1 3-1.5 2 0.5 2.5 2 1 2.5 0 3 1.5 3 1 0.5 0.5-1.5-0.5 1-0.5-1-3 2-2 1-0.5 0-2-0.5-3.5-1-1.5-2-1.5-1.5-0.5-3-1.5-3.5-0.5-1.5-1-2.5 0-2 1.5-2.5 0.5-3.5 0-2 M1151 838l 2-3 0-2 0.5-2.5 0.5-2.5 1.5-3 1-3.5 1-3 0.5 0-0.5 0-2.5 0.5-2 0.5-1.5 2.5-1 1-1.5 0-2-3-2-2.5-1.5-3.5-0.5-3.5-1.5-1.5-3 1-2.5 0.5-2.5 0-3 0.5-2.5 0-1.5 0-1-0.5 0.5 1.5 1 1 0 1-2.5 1-3.5 1-1 1-2.5-2-3-1.5-1.5-2 2.5-2 2-1.5 3-1.5 3.5-1.5 2-1 1-3 1-2.5 2-0.5 2-2.5 1.5-0.5 2-0.5 2.5 0.5 1-2 0.5-3-1.5-3-1-2 0-1-0.5-0.5-0.5 1.5 1.5 2.5 1.5 1.5 2.5 3 1.5 3 3.5 1 1 0.5 2.5-0.5 2 2 2 1.5 2 0.5 2.5 2 3 2 2 2 3.5 0 2.5-1.5 3.5-1 2.5-0.5 1.5-2 1.5-2 0.5-2 2-1 3-0.5 2.5 2.5 2.5 2 2.5 2.5 1.5 2-1 0.5-0.5 2-0.5 2-2 0-2 0-2.5-1-1-2-1-0.5-0.5 1-1-1-2 1-2 1-3.5 0.5-2.5-0.5-2.5 2-1-3.5-1-3.5-2.5-2-0.5-2.5 1-2 3-1.5 3.5-1 2.5 0 3 1.5 2 3 2 2 0.5 3.5 0.5 3.5 0 3 1.5 3 3 2.5 3 2 1.5 1.5 1 1.5 0 0.5 1.5 2.5 1 2 0 1-0.5 0 0.5 1-0.5 0.5 1-1-2.5-1.5-1.5-1.5-2-1.5-2.5-0.5-1 0 0.5-0.5 2 1-0.5 1-0.5-0.5 1 1 0 0.5 1 2.5 0 0.5-0.5-1.5 0.5-0.5-1 1-1-3.5 1.5-1.5 1.5-2 0-1-0.5-1.5-1-2.5 0.5 0-2 1-0.5-0.5-2.5-1-3.5-1.5-3-1-2.5-3-1-2-0.5-0.5-2.5-0.5-3-1-2-0.5-2-0.5-0.5 2 0 3.5-1 2.5 0.5 1.5 0.5 3.5-0.5 3 0 1.5 2.5 1 0.5-0.5 2.5 0 1-0.5 1-2-1-3.5-2-2-2-0.5-3-0.5-2.5-0.5-3.5-0.5-3.5 0.5-2 0.5-1.5 1.5-1.5 0-3.5 0-3 1.5-3.5-0.5-3.5 0.5-3-2-3.5-0.5-2.5 2-2.5 2.5-1.5 3-3 2-1 2-1 3.5-2 3-1 3-1 3.5-2.5 2-2 2-3.5 0.5-2.5 1-2 0 M1040 814l 2 1 3 1.5 2.5 2.5 3.5 1.5 1.5 1 1.5-1 2-1.5 3-0.5 3.5 0 1.5-1.5 0.5-1.5 1.5-3 1.5-1-2-1-1.5-1.5-0.5-1 1-1.5 2.5-1.5 0.5-1 2 0.5 1-1.5 0.5-1 0.5-1 0.5 0.5 0 0.5 0.5 1.5 0.5 2.5 0.5 3 2.5 2.5 1.5 2.5 1.5 3.5 0.5 1.5 0 3.5-1.5 3.5 1.5 2 3.5 0 1.5-3 1.5-3.5 0-3 1-3 2-3 3.5-1 1-1.5 2.5-2.5 3.5-1 3 0 1.5-1 1.5-2 1.5-2 1.5-2 2-2.5 2.5-2.5 3-2 3.5-0.5 3.5 0.5 3 2 3 1.5 3.5 0 3.5-0.5 1.5 0.5 2 1 2 0 2.5-1 3.5-1 3.5 0.5 3-1.5 3-0.5 3.5-2 0.5 0.5 1.5 0 2 1 1 2-1 1-1-1.5-1.5-2.5 0.5-1.5 1-0.5 1.5-1.5 1.5-0.5-0.5-1.5-2.5 0-2 0 0 0.5-3 0.5-3-1-3.5 0 0 1-1-0.5 1 0 1-0.5 2.5 1 3 1.5 3.5 0.5 2-0.5 2.5-2.5 0.5-2.5 3 0 1.5-1 1.5-1.5-0.5-1.5 2 0-0.5 1 1 3 0.5 3.5-0.5 2.5 0 3 0 3.5 0.5 1 0 0.5-0.5 2.5-1.5 2.5-1.5 2-3-1-2.5-1-3-1.5-2.5-2.5-2.5-1-0.5 0-0.5-0.5 2-0.5-1 1.5 1 0.5 2.5-1 1-0.5 2-1.5 1 0.5 0.5 2-1 3.5-2 2.5-3.5 1-3 2-3 1-3.5 0-2.5 1 0-0.5 1.5-2 1-3.5 0.5-1.5 0-2-1.5-0.5-2-0.5-2 1-2.5 1-2 1.5 0 2.5 0 3.5 0 1.5 0.5 2-0.5 3.5-3 1.5-3.5-0.5-3.5 0-2 0.5-3 0-2 2-3 2-3.5 0.5-3.5-0.5-0.5-1.5-2-1 0.5-2.5-1-1.5 1.5-3 3 2.5 2 0.5 2 2.5 1.5-1 3 2.5 3.5 0.5 2.5 2 2 1.5 1.5 1 0.5 0.5 0-1.5 2.5-0.5 2-1.5 0.5-2.5-0.5-1 0 0.5-1 1-1.5 1 1.5-0.5 2.5 2.5 2.5 1 2-0.5 2-0.5 3.5 0-0.5 2 0.5-1.5 1 0.5 0.5 1 0 1-1.5-0.5-2-0.5-0.5 1-0.5-1 3-1 2.5-2.5 1-1.5 M1037 823l 1.5-1.5 2 0 0.5-1 1-1-0.5-0.5-0.5-2 1-2 0.5-0.5-0.5 1 0.5 1 1.5 2 1.5 0.5 2 0.5 2 0.5 3 1 3.5-0.5 3.5 1 2 1 0.5 2 1.5 0 0.5 1.5 0 1.5 2.5 1.5 3 1.5 2 1 3 2.5-0.5-1 2 1 2-2 1.5-0.5 1.5 3 1 1.5 2.5 2 2.5-1 1.5-0.5 1.5 3 2.5 2.5 3 1 1.5 0-0.5-0.5-2.5-2.5-1-2-2 0.5 0.5 0.5 3.5-0.5 1.5-1 3 1 3-1.5 1.5-1-1.5 0 0 1 1 0.5 0 2.5 0 1.5 0.5-0.5-1.5-1-0.5-0.5-1.5-2-2-1-1 0-0.5-1.5-0.5-2.5 1-2.5 1 0 2-2 3.5-0.5 3 0 2 1 2 0 2.5-0.5 3-1.5 2-1.5 3-2 2.5-2.5 2-2 2-0.5 2.5-2.5 2-3 0.5-2.5 2.5-2.5 2-1 1.5-2.5 3.5-0.5 2.5 0 2 1 1 2.5-0.5 2.5 1-0.5 3-1.5 3-1 3-0.5 3 0 3.5-0.5 0-1.5-1-1-2-1.5-2-2 0-1.5 1-0.5 M620 828l 99 2 99.5 0 99.5 1 89.5 0"/>
<path stroke="#d62728" d="M620 740l 99-1 99.5-1.5 99.5-3 49.5-1.5 40 0.5 20 2"/>
<path stroke="#9a4aa0" d="M661 887l 0-0.5 0.5-1 1.5-1 1-0.5 2-0.5 2.5 0 3 0 3.5-0.5 3.5-0.5 4.5 0 4 1 4.5 0.5 4 0 3.5 1.5 4.5 1.5 2.5 2.5 2 2 1 2.5 0.5 2 0.5 2.5 1 2 0 2 1 1.5 1 1 1 0.5 0.5 1.5 0.5 1.5 1 1.5 0 2.5-0.5 3-1.5 3-4.5-2-4.5-2-3.5-2.5-4-2.5-3.5-2.5-4.5-3-4-3-4-3-4-1.5-4.5-2-3.5-3-4.5-2.5-6-2.5-5.5-2.5-4.5-2-4.5-1-4-0.5-2.5 1-2 1-2 1-1.5 1.5-0.5 2.5 0 3.5 1.5 2.5 2 2.5 3 3 3 2.5 3 3 3 2 2.5 1.5 2 0 1.5-1 1.5-1 0.5-0.5 0.5-1 0.5-1-1.5 0.5-0.5 0 0-1-0.5-1 1-2 1.5-1.5 1.5-1.5 1-2 0-2.5 0.5-1.5 0.5-1.5-0.5-1.5 0-2.5 0-3.5-1.5-1.5-1.5 0-2 0.5-1.5 0-1.5-0.5-2-2-2.5-2-3.5-1.5-4-1.5-4.5-2-4.5-2.5 2.5-4 2-3 2-2.5 0.5-3 2-3 1.5-2.5 2.5-2 3-2.5 3.5-3 4-2.5 5.5-2 5.5-1 5.5-0.5 6.5 0 5.5 0 5.5-1 4.5 0.5 4 0 3.5 0 3-0.5 1 1 1 1.5 0 2 0 2-0.5 1.5-2.5 2-2.5 1.5-2 1.5-2 1.5-2 0-2.5 1-2.5 1-2 2-2 3-1 2.5-1 2.5-2 1.5 0 1-1.5 1-1.5 1-2-0.5-1.5 1.5-2.5 1-2.5-1-3-1-3.5-1.5-3-1.5-2-2.5-2.5-2.5-1.5-1.5-2-2-1-1-1.5 0.5 0 1 1.5 0.5 2 0 3 0.5 4 2 3 2.5 3 3 4 3.5 3.5 3.5 2 2.5 0.5 2.5-0.5 0.5-1 1 0 1.5 0 1.5 M683 888l 0.5-1 1.5-0.5 2 1 2 1 2 1 3 0 3.5 0.5 3 0.5 3 1 3.5 0.5 3.5 0.5 3.5 0.5 3.5 0.5-1.5 4.5-2 4.5-3.5 5-1.5 5-2.5 4.5-2.5-4-3-4.5-3-3.5-2-5-0.5-5 0-4.5 0-4.5-1-4.5-1-5-1.5-5.5-2-5-3-4.5-2-5-1-5.5 0-5.5-1-5-1.5-4.5-2.5-3.5-5 1-4.5 1-4.5 0-4 0-3.5 0.5-4.5 2-3.5 1.5-3.5 1-3.5 1-3.5-0.5-3 0.5-2 0.5-2.5 1-2 0.5 2.5 4 3.5 3 4.5 4.5 3.5 4.5 3.5 5 3.5 5 3 4.5 3 4.5 3.5 5.5 3.5 5.5 2.5 5 2 5.5 2 4 2.5 3 2 2.5 1.5 2 1.5 2.5 1 2 2.5 1.5 3.5 1.5 3.5 1 0.5-5 2-5 1.5-4 0.5-4.5 0-4.5 0-3.5-0.5-4-1-4-0.5-4.5 0-4 0.5-3 1.5-5.5 0.5-4.5 1-3 1-2.5-0.5-2.5 0.5-1.5-0.5-1.5-2-2 M739 919l-0.5-2 0-2.5-1-2-1.5-1.5-2-2-1.5-2.5-2-3-2-4-2.5-4.5-2.5-5.5-1.5-5-0.5-5-1-4.5-1-5-2-4-1-4 0.5-4 0-3 2-2 1.5-2.5 1-3 1.5-2.5 2.5-2.5 3.5-0.5 3-0.5 3.5 0 2.5-1 3-0.5 1.5 0 1 1.5 0 1.5 0 3.5 0 4 0 3 0.5 3 0.5 4 1.5 3 1.5 3.5 1.5 3 3 2.5 3 2.5 4 2 2.5 2 3 1.5 3 2 4.5 2 5.5 2 4.5 2 4.5 2 3.5 2 4.5 2 3.5 2.5 4.5 1.5 5.5 1.5 4.5 1 5.5 1-1.5-4.5-1.5-4-2-2.5-2.5-2-2.5-2.5-2-3-1-3.5-1.5-4-2.5-4-1.5-3-1-2.5-0.5-3 0-2-0.5-2 0.5-2 0-0.5 0-1 1 0.5 0.5 1-0.5 1.5-1.5 2.5-2.5 2.5-3 2-1.5 2.5-1.5 3-2 2.5-1.5 2.5-1 1.5-2 1-1 2.5-1 2.5-1 2.5-1.5 2.5-2.5 3-3 4-2.5 3-2.5 3-3 3.5-3 3.5-3 3-3.5 2-2.5 1-3 1.5-2.5 0-3.5-0.5-3.5-0.5-3-1.5-3-2.5-3-3-2.5-3-2-4-1.5-5-1-5.5-1-5.5-1-4.5 0.5-4.5 0-3.5 2-4.5 3.5-4 4-3.5 3.5-3.5 4.5-4.5 5-3.5 4-3.5 5.5-3.5 5-3 3 4 3 3.5 3 5 2.5 5 2.5 5 2 5.5 0.5 5-1 4-0.5 3.5-1.5 2.5-1.5 3-2.5 1.5-2 1.5-3 0.5-1.5 1.5-2 1.5-2 1-2.5 2-3 2-4 2-3.5 1.5-4 0.5-3.5 1-4 1-5.5 1-6-0.5-6-1-5.5-2-5.5-2-5.5-2-4.5-2-2.5-3-2-2-0.5-1-1 0 5-0.5 5.5-0.5 5-0.5 M786 943l-0.5 0-0.5 0.5-0.5 0-1-0.5-2-0.5-2-0.5-2-1.5-1.5-1 0.5-2 0.5-2 1-3-0.5-3.5-1.5-3.5-0.5-4.5-1-5-1-4.5-1.5-3.5-1.5-3.5-1.5-3.5-2-2.5-2.5-3.5-2.5-3-3.5-3-3-2.5-4.5-2-5-2-5-3.5-5-1.5-5-0.5-6-0.5-5 0-4 0-2.5-0.5-3 0-3-0.5-3 0-4.5-0.5-3 0-3 1-2.5 2.5 1 4.5 2.5 5 3 5.5 2.5 5 3 5.5 4.5 4.5 2.5 4.5 3 3.5 3.5 3.5 3.5 3 3.5 2 3 0.5 3 1 3 0 2.5 0 4 0.5 3.5-2 3-0.5 3-0.5 2-1 3.5-0.5 4-0.5 3.5-0.5 4 0 3.5-1.5 4-1 4.5-0.5 4 1 4 1.5 4 1.5 3 1.5 5 0 4.5-0.5 4.5 0 4 0 4-0.5 0-5 0-5-1-5.5-0.5-5 0-4.5-1-4.5-0.5-4.5-1.5-3.5-2-4-1.5-4-2.5-3.5-2.5-3-3-3-4-2.5-4-2-4.5-3-3.5-2.5-4-3.5-3-3-3-2-3.5-3-3.5-1.5-4-2-4-2-4 0-3.5 1.5-3 1-2 2-2 1.5-1 1.5-1.5 1-1.5 2-1 4-1.5 5-1.5 5-1.5 4-3.5 3.5-3.5 4-4.5 4.5-4.5 3.5-5.5 2.5-5 3.5-5 3.5-3.5 3.5-3.5 4-4 3.5 0 5 0 3.5-0.5 4-1.5 4 0 4.5 0.5 5-0.5 5 0 5 0.5 4.5 0.5 2 0 1.5 1.5-4.5 2.5-5.5 2.5-5 2-5.5 1-5 2.5-6 3-5.5 3-5.5 3.5-5 2.5-3.5 3-4.5 2.5-4 3-2.5 3.5-2.5 3.5-0.5 5-0.5 4.5-0.5 4.5-0.5 4.5 0 3.5 0 2.5-0.5 2 0 2 0.5 1.5 1 2 1.5 1.5 2 1.5 0 M790 945l 0.5-1-1-1.5-1-2-1-3 0.5-3 0-2.5-1.5-3-1.5-3-1.5-2-1.5-1.5-1.5-2.5-1-2.5-2-2.5-1.5-3.5-1-4-2-5-1.5-5-1.5-3.5-1-2 0-2.5 0-3-2-1.5-2.5-1.5-2.5-0.5-2 0.5-3.5-0.5-3-1-3 0-3 0-3.5 0-4 0-3 1-2.5 1-1.5 1-2.5 1.5-3 2.5-2 2-3 3-3 3-2 2.5-0.5 2.5-1.5 2 0 1.5 0 2 0 2-1 1.5 0 1 0.5 1.5 0.5 0.5 1.5 0 2 0 2.5 1 2 2 3 2 3 2.5 3 2 3.5 1.5 4 1 4 1 3.5 1 3.5 0.5 4.5 0 4.5 0.5 4.5 1 3.5 0 4-0.5 4.5 0 3-0.5 3 1 3.5 1 2 2.5 3 3 3 2 1.5 2.5 2.5 2 0.5 1.5 0 1 0 0.5-1.5 2-1.5 0.5 M962 876l-1.5 0.5-1 0.5-2.5 1-3 0.5-2.5 1.5-3.5 1.5-2.5 2.5-3.5 3.5-2.5 4-2.5 5-1.5 5-0.5 4-2.5 4.5-3 4-3 3-3 2-3 1.5-2.5 1.5-3.5 1.5-2.5 1.5-2 3-2 3.5-2.5 3.5-2 4-2.5 4-2.5 3.5-2 2.5-2 1.5-1.5 1.5-2 2-2.5 1-2 0.5-2-0.5-2 0.5-1.5 0-1-0.5-1.5-1.5-1-2.5-1.5-2-2-3-2.5-3-2-2.5-1.5-3-3.5-2-3-2-2.5-1-1.5-1.5-1.5-1-1.5-1.5-0.5-3-1-3 0-3-1-2 0-3-0.5-2.5 4.5-2.5 4-4 3.5-2.5 1.5-2 4.5 1.5 5 2.5 5.5 2 4.5 2.5 5 1.5 5.5 1 5 1.5 5 0.5 4.5-0.5 5-1 3.5 0 3.5-1.5 3 0 4-1.5 4 0 4.5 0.5 4.5-1 4-0.5 3.5-1 3.5-0.5 3-1 3-1.5 1-0.5 1.5-1.5 1-0.5 2-2 0.5-1-0.5-1-1-0.5-1.5-0.5-1-1-2-2-2.5-1.5-2-1.5-3-2-2-3-2.5-3-2-2.5-2.5-2.5-3-1-2-1-2-0.5-2.5-0.5-2-1-2.5 0.5-3 1.5-2.5 2-2.5 2.5-2.5 0-1.5 1-0.5 0.5 0.5 0.5 1 0 1.5-1.5 1-1.5 2-1 1.5-2 3.5-1 3.5 0.5 3.5 0 4-0.5 3 0 3 0.5 2.5 1.5 2.5 1 2.5 0.5 2.5-0.5 1.5 0 2-1 1-1.5-1-1.5-1.5-1.5-1.5-1.5-0.5-1.5-1-1-1 0-0.5 0-0.5 0.5 0 1-0.5 1-0.5-0.5-1.5 0-1.5 1-2 1-1 0.5-0.5 0.5-0.5 0.5-0.5 1-1.5 1.5-0.5 1.5-0.5 2.5-1 2-0.5 2.5-1 3-0.5 1.5-1 2.5-1 2-1 2-1.5 3.5 M840 976l 2 1 0 1 0.5 0.5 0.5 0 1 0 2.5-1.5 2.5-1 2.5-1 2-1 3-0.5 2.5-1.5 3.5-0.5 2.5-3.5 3-2 3-2.5 2-1.5 0.5-3 0.5-3.5 1-1.5 0.5-2 1-2 0.5-2.5 0.5-3 0-3.5 0-2.5-0.5-2.5 1-2.5 1-1.5-0.5-1.5-0.5-1.5-1 0-1.5-0.5-2 0.5-2 1-2.5 2.5-2.5 3-2 3.5-0.5 3.5-0.5 4 0.5 4 0.5 3 0 2.5-1 2.5-1.5 4-1.5 4-2 3.5-2 3-2 1.5-1.5 1-1.5 0-2 0-1.5-0.5-1.5-1-1.5-2-2-1.5-2-1.5-3-1.5-1-1-1-2 0-2.5-0.5-3 1.5-2 2.5-1.5 2.5-1.5 2.5-0.5 2 0 2.5-1 3.5-0.5 1.5-1 1.5-2 0.5-2 0.5-1.5 0.5-2.5-0.5-3 0-2.5 1.5-1.5 1-2 1.5-1.5 1-2 1.5-1.5 2-1.5 2-1 2-2 2.5-2.5 3.5-0.5 3.5-0.5 3-1 3-2 2-1 2.5-0.5 1-1 1.5-1.5 2-2 2-1 0.5-2 1.5-1 1.5-1 1.5-1 0.5-2.5 1-2.5 0-2.5 0-3 0.5-1.5 1.5-1.5 1.5 0 1.5 0 2.5 0 2.5-1 3 0 3 0 3.5 0 4 0.5 3.5 0.5 4 1 4.5 2 3.5 1.5 4 1 4.5 0.5 4.5 0.5 4 1.5 3.5 1 3.5 1 1.5 1.5 1 0.5 1 0 1 0 0.5-0.5 1 0 1-0.5-0.5 0-1.5-0.5-1-1-1.5-1.5-2.5-2-2-0.5-2.5-1-2.5-1-3-1.5-3.5-0.5-3-0.5-3.5 0-3.5-0.5-3 1-3 1-3.5 0.5-4-0.5-4.5-1-5 0-4.5 0.5-4 1.5-2.5 0.5-3 1.5-2.5 1.5-3 2.5-3 2-3 2-3.5 2.5-3.5 3-3 2.5-3.5 3 M861 930l 1.5 1.5 1.5 1 2 0.5 1-2 1.5-2.5 2.5-3 3-3 3-3 2.5-4 3-4 3.5-3 3.5-2 2.5-2 3-3 2.5-2.5 2-4 2.5-2.5 3-2.5 4.5-2 4-2 4-1.5 2.5-2 2-1 2.5-1 2.5 0.5 2.5 1 2.5 1.5 3.5 1.5 3 1 2 1.5 1.5 2 0.5 2.5 0.5 3-0.5 2.5-1 2.5-1 1.5-1 2-0.5 1.5-1 1-1-0.5-0.5-0.5-0.5-1-0.5 0.5 1 0.5 1 1 0 1.5 0 1.5-1 1-1 1-1 0-0.5 0.5-0.5 1-0.5 2-0.5 2.5-0.5 3 1 2-0.5 1.5 0 1.5-1 2-1.5 2.5-1.5 3.5-0.5 3.5-1 4-4.5-1-5-0.5-6-0.5-5.5 0-6-1-5 0-4.5-1-6-1.5-5-1-4-1-5.5-2-5.5-1-3.5-0.5-4-1-4-1-3-0.5-3 0.5-2-1-1-1-1-1.5-1.5-1.5 4-2.5 4.5-1.5 4.5-2 5.5-1.5 5-1 5-1 4-2.5 4-1.5 4-2.5 4.5-2 5-2.5 5.5-2.5 5-2 4.5-2 3.5-1 3-1 3-1 2.5 0 3 1 3.5 1.5 3.5 1 2.5 2 3.5 1.5 3.5 2 3 2 4 2 3.5 1.5 4.5 2 4 1.5 4 0.5 3.5-1 2.5-1 3.5-1.5 4.5-2 4-2 4-2 4-2-0.5-4.5-0.5-5 0.5-5.5 0.5-5 1-3 1.5-3.5 0.5-2.5-4 2.5-4.5 2-4.5 2.5-4.5 3-4 2.5-4.5 2-6.5 1.5-6 0-6 0-6.5 0.5-5.5 1-5 1.5-6 2-5 2.5-4 2.5-4.5 2-4 3-5.5 2.5-4.5 3-4 3-3.5 3-3.5 3-3 3-4.5 2-4 3-5 3.5-5 3.5-5 3-5 4-5 4-5 4 M853 929l 0 2-1 3 1 4 1 2.5 1.5 3.5 1 3 1 5-0.5 4 0 5 0 4-0.5 4 0 4.5 0 2.5-0.5 3 0.5 3 4-3 3-2.5 3.5-2.5 3-2.5 4-3.5 M863 824l 1.5-1.5 1-1.5 3-1 3-2 3-2.5 2.5-3 3-3.5 3-2.5 3-2.5 3.5-2.5 4-3 6-3 6-2.5 4.5-2 3-2.5 3.5-4.5-4-3.5-5-2.5-5-3.5-4.5-4-4.5-3.5-4-4-3-2.5-3.5-3.5-3.5-3-4.5-4.5-4-3-3-2.5-1-3-1.5-1.5-1.5-2-1-2.5 0-0.5-2 0.5-1 0-1 0-1 1-2 1.5-1.5 2.5-1.5 2.5-1 2.5 0 2.5-0.5 2-1 2 0 3 0 3 1 4.5 0.5 5 0.5 4.5 1 4 0.5 3 0 3.5 1.5 3 1 2 1.5 3 3 4 3 4 2.5 5 3 4 3.5 4 3 4.5 4 6 4.5 5 4 5.5 4.5 6 3 6-5.5-0.5-4.5 0-5.5 1-5 0.5-5 1.5-5.5 0.5-5 0.5-5-1-5-0.5-3.5-0.5-3-0.5-2-0.5-1.5 0-2.5-1-2.5-1.5-3.5-1.5-1.5-3-1-3-1.5-4.5-1-5-0.5-5.5-1-5.5-1-5.5-1-5.5-2-6-2-5-2.5-4.5-2.5-5.5-2.5-5.5-1.5-5.5-2-6-1.5-6-1-5.5-1-3.5 0-3.5 0.5-3.5 0.5-4.5 0-4.5 1-4 1.5-3.5 3-3.5 3.5-2.5 3.5-1.5 4-0.5 4.5-0.5 3.5 0.5 5 1 4.5 2 4.5 0 3.5 2 4 2 4.5 0.5 3.5 1.5 2.5 1.5 2.5 1.5 1.5 0.5 1.5 1.5 0.5 2.5 1.5 2-0.5 2 1 2.5 0 3-1 3.5 0.5 2.5-1.5 3 0 3-1 2.5-1.5 3-1 3-2 4.5-2 5.5-2 3.5-0.5 3-1.5 1.5-2 1-1.5 1-3.5 1-3 0.5-2-1-2.5-1-2-0.5-2-0.5 0-2.5-1-2-1.5-1.5-1.5-2.5 0.5-2.5 0-3 0.5-3.5 0.5-3-0.5-2.5 0-3.5 0.5-3 1.5-4.5 M810 840l 1.5 0.5 0.5-1.5 1-0.5 1-0.5 2-1 1-2 1.5-2 0.5-1.5 1.5-0.5-0.5 0.5-1-1.5-1 0 0 1.5 0.5 1.5-0.5-0.5 0 0.5-1-0.5-1.5-2-2.5-0.5-3-1-3.5-1.5-3-1-2.5-1.5 1-5 1-4.5 1.5-6 1.5-6.5 1.5-6.5 1-5.5 0-6 2-6.5 1-7.5 1-7 1-6 1-6.5 0.5-6 2.5-5 2.5-5 3-3 3-3.5 1.5-4 2-3 2.5-1.5 3-1.5 1-2 1-1 2.5-1 2 0 2 0.5 2 0.5 3 2.5 3.5 1 3.5 2.5 3.5 3 2 2.5 1 3.5 1 2.5-0.5 3.5-0.5 3.5 0 2 0 3 2.5 2.5 2.5 2 4.5 2 5 2 4.5 2.5 5 2.5 4.5 1.5 3 1.5 2.5 1 2 1 1.5 1.5 0.5 0.5-0.5 2-1.5 1-2 0.5-2.5 0.5-2.5-0.5-2.5 0-2 0-1.5 0-1-2-1-2-1.5-3.5-2-3.5-3-2.5-3.5-2-3.5-2.5-4-1-3.5-2.5-1-2.5-2.5-4-2-4-2.5-4-1.5-3.5-2.5-3.5-3-2.5-4-1.5-3.5-1.5-3.5-2-2.5-0.5-3.5-1.5-2.5-1-2.5-2.5-3.5-2.5-4-2-4-3-4.5-2-4-2-4.5-2 0.5-5.5 0.5-5.5-0.5-3.5-0.5-3.5 0.5-4.5 1-3.5 1.5-2.5 1.5-1.5 2.5 0.5 2.5 1 2.5 0.5 3 0 4 1 4.5 3 4.5 3 4.5 3 4.5 3.5 3 4.5 3 4.5 1.5 4 0 5 1 5 0.5 6.5 1 7 1.5 5.5 1 6.5-0.5 7-0.5 6.5-1 7-1 7-1 7-2.5 6.5-2.5 7-2 6.5-1.5 6.5-1.5 6 0 6.5 0 5.5 0 3.5-0.5 4-0.5 3 1.5 2 0 1.5 2.5 0 2-1 2.5-1 2.5-0.5 4 1 M863 683l-0.5 0-1.5 0-0.5 2-1.5 2-1.5 2.5 0 2-0.5 1.5 0 2.5-0.5 3 0 2.5-0.5 2.5-1 3.5-0.5 4-1 3.5 0 2.5-0.5 3 0.5 4-1 2.5-1 3-0.5 4 1 4 3 4.5 3.5 6.5 4 6 4.5 5.5 4.5 5.5 5 5 4 5.5 4 5.5 2.5 6 3.5 5 4 4 4 2 4.5 0.5 4.5 1 4.5 0 4.5-1.5-2-5.5-2.5-5-2-4.5-2-5-1.5-5 0-3.5-1-5-1.5-5.5-1.5-4.5-1.5-3.5-1.5-2.5-1.5-2.5-1.5-4-1-3-1.5-3-1-3-1-3.5-1-3-1.5-4.5 0.5-5.5 0-5-1.5-5-1-5-1-6-2-6.5-0.5-4.5-0.5-4 0-3.5 0.5-2 0.5-2.5 1-2 1.5-0.5 2 0 3-0.5 3 1 4 1 2 2 1.5 1.5 1 2.5 0 1.5-1 1.5-0.5 2-1.5 0.5 0 1-0.5 1.5 0 1.5 0 2-1 1-0.5 2.5 0 2.5 0.5 1 0.5 2 0 0.5-0.5 1.5-1 1-1.5 1.5-1.5 2-0.5 3 0 4.5-0.5 5 0.5 5-0.5 5-0.5 6.5-1.5 7-1 6.5-1.5 5.5-2.5 5-2.5 3.5-2 3.5-1.5 4-2.5 3.5-2.5 2.5-3.5 2.5-4.5 2.5-4 2-5 1-4 0-3-0.5-3.5-1.5-3-1.5-4-3-4-3.5-3.5-3.5-6-3-5-2-4-3-2-2-2-1-0.5-2-1-2.5-0.5-1.5-2-2.5-1.5-0.5 M908 703l-2.5-0.5-2-2.5-2-1.5-2-3-5-3-5-2.5-5-3-4.5-3-2.5-5.5-2-4.5-2-4-0.5-3.5-1-2 4.5 2.5 2.5 3.5 2.5 3.5 2.5 4.5 2.5 5.5 2 6 3 5.5 3.5 5 4 5 3.5 5.5 2 6 1.5 6 3.5 3.5 2.5 4 1.5 3.5 3 3.5 2 2.5 2 1 2.5 1.5 1.5 1 2 1.5 2 2 2.5 2.5 2 4.5 2 5.5 4.5 2.5 2.5 2 1.5 2.5 1.5 3 0 2.5-3-4-2.5-3.5-1.5-3-1.5-4-2.5-3.5-3.5-2.5-2-2-3.5-2.5-3-2.5-2.5-2.5-2.5-4-4-4-2.5-4.5-2-4.5-3.5-5.5-3.5-4.5-2.5-3.5-4-2-4-3-2-4-2.5-4.5-2.5-4-3.5-3.5-3.5-2.5-2.5-3-2-3-1-2.5-2-1-2.5-0.5 3.5 3.5 4.5 2.5 4 3.5 2 4 3 2.5 2.5 2 2 4 2.5 3 3 4 2.5 3 2.5 4 1.5 3 3.5 3.5 3.5 3 4 4.5 5.5 3.5 4.5 4 4 3 5 3 4.5 2.5 5.5 2 5.5 2 3.5 1.5 3 0 2 0.5 2.5 1 3 1.5 1.5 0 2.5 1 3 0 2-1 1.5-0.5 0.5-1 0-3.5-3.5-3-3-4-3.5-3.5-2.5-3.5-3.5-3-4-3.5-5-3-5-4.5-3.5-4.5-4-4.5-3.5-4.5-4-2.5-4-3.5-3.5-4.5-3.5-4-2.5-2.5-3.5-3-4-1.5-2.5-1.5-3-2-2.5-3-1-4-1-4-3-4-2-2.5-3-2-4 2-5.5 2-4.5 1.5-4.5 2-5 2 3.5 3 3 2.5 2 2 2.5 4.5 2.5 3.5 3 4.5 3 3.5 4 3.5 3.5 3.5 2.5 3.5 3.5 3.5 3.5 3 3.5 4 3.5 2 2.5 1.5 3 0.5 3 1 4 0.5 4 1.5 3 2 0.5 2 0 1.5 1.5 1.5 M975 773l 1.5-2 1-4 1.5-4.5 0-5-3.5-3-2.5-2-2.5-3.5-2-5-4-2.5-3.5-2-5-1-5.5-1.5-5-1-5.5-1.5-6-1-5.5-1-3.5 0-3.5-0.5-2.5-2-2.5-2.5-1-3.5-1.5-3.5-0.5-3.5-0.5-3-0.5-2.5-1-1.5-1-0.5-0.5-1.5 0-2 0.5-1.5-0.5-1-1-0.5 0-1 0-1.5 2-1.5 0.5 1 1 1 2-0.5 2 0 1.5 1.5 1.5 0.5 2 0 2.5 0.5 3.5 1.5 3.5 2 3 3.5 4 3.5 3 3.5 2.5 3.5 2.5 3 3 3.5 2.5 5 2.5 4.5 3 4.5 3 5.5 4 4 4.5 4 3 4 4.5 4.5 2.5 4.5 3 4 2 3.5 3 4.5 3.5 2.5 2.5 3.5 2.5 2.5 2.5 2 2 1-3.5-3-4.5-3.5-4-2.5-5-3.5-4.5-3.5-4-4-4.5-4.5-3-4-2.5-4.5-1.5-5-1.5-6 0-5-1-5.5-4.5-2.5-3.5-2-4.5-3.5-4-3.5-5-2.5-3-3-2.5-2-3-2 M1180 843l 0 1-1.5 0-2.5 0-2-0.5-2-2.5-1.5-3.5-2-3-1.5-4-1.5-3.5-1-4 0-4.5-1-3.5-1-2 0-3-0.5-4.5-1-4.5 0-3.5-0.5-4.5-0.5-3.5 0-4 0-5-0.5-4.5-0.5-4.5 1.5-5 1-5 1-4.5 2-4.5 4 0 4.5-0.5 3-0.5 3.5 0 3.5-0.5 4-0.5 3-0.5 3.5 1 3 1 3 1.5 3 1.5 2.5 1.5 1.5 1 1 0.5 1.5 0 0.5 0 0.5 0-0.5 1-1.5 0-1.5 0-2.5 1.5-2.5 1.5-2 1-2 2-3 2-4 3-3.5 3.5-3.5 3-4 2.5-3 2.5-2.5 2.5-3 2.5-3 2-1.5 1-2.5 0.5-2.5 0.5-3.5 1-3.5-0.5-4-0.5-3.5-1-3 0-3.5-0.5-3 0 3 3 2.5 2.5 2 2.5 2.5 2.5 3 1.5 2.5 2 3.5 2.5 4 2.5 3 1.5 4 3 5 1.5 4.5 2 4 2.5 3.5 3 2.5 3 1.5 3.5 1.5 3 1 2.5 1 3 2.5 2.5 3 2 2.5 1.5 1.5 1-1 1-1 1-1-0.5 0-1-0.5 0.5-1-1-1-0.5-1-1-2-1-1.5-3-1.5-3-1.5-2.5-2-3-1-3-2.5-3-1-1.5-2 0-2.5 0.5-3.5 0.5-2 0.5-2.5 0.5-4-0.5-3-0.5-2.5-2.5-2-2.5-1.5-4-2-4.5-3-4-1-3.5-0.5-4 0.5-5 1-5.5 0.5-4 1-4.5 1-3.5 2.5-4 2.5-5 2-4.5 3.5-3.5 4-2.5 4.5-2 5-2 3.5-1 3.5-0.5 2.5 1 2.5 1 2.5 1.5 2 1.5 1 1.5-0.5 2.5-1 1.5-1 2.5 0.5 4 1 5-0.5 5.5 0 5.5 0.5 4.5 2 4.5-0.5 4 0 2.5 0.5 2.5 1 0.5 1 1.5-0.5 1 0.5-0.5 M1178 856l-0.5 0.5-0.5-1 0-0.5 0 0.5-0.5 0-1 0.5-1 1 0.5 0 0.5 0.5 2-1.5 2-2.5 2.5-3.5 1-2.5 1.5-2.5 1-1 1-1 0.5-0.5 0-1 0.5-0.5 0-0.5 0-0.5-0.5-1.5 0.5-1 0-2 0.5-1.5 1-4 1.5-4 1.5-4 2-3.5 1.5-3.5 0.5-3.5-1-2-2.5-1-1.5-2-1.5-2.5 0-2.5 0-2.5 0-2 1-2 1-1 1-0.5 1 0.5 1.5 1.5 1 1 2 1-0.5 2-1 3.5-1 3.5-0.5 3-2 4-2.5 3-2.5 2-2 3-3 2-2.5 2-2 3-2 2.5-2.5 3.5-1.5 3.5 0 4-0.5 3.5 0 3 1 4 1 3 1 2.5 2.5 2.5 2 1.5 2-1 2.5-1.5 3-2 3.5-3.5 1.5-2.5 0.5-2.5 0-1.5 0-0.5 0-3-0.5-1.5 0.5-0.5 0.5-1 0-0.5-1-0.5-1-1-1-0.5-2 0.5-0.5-0.5-1.5 0.5-2 1.5-1.5 1.5-0.5 2.5-1 2.5-1.5 3-2.5 3.5-2 3.5-1 3-0.5 4 0 3.5 0 3.5-0.5 3 1.5-4 1-3 1-4 1-3.5 1-3.5 2-3.5 1-4 2-4 1.5-3.5 1-2 0.5-1 0.5-1 0-1 0.5-2.5 1-4 0-2.5 0.5-2.5 2-2 2-3.5 2-3 2.5-3 1-3-0.5-1.5 0-2 0-2.5-0.5-3 0-2-1-2.5-2.5-3-3-2.5-2-2.5-2-2-2.5-1.5-3-1.5-2.5-0.5-2.5-2-3.5-1-4.5 0.5 M1147 866l 19.5-27 20-36 20-27"/>
<path stroke="#8c564b" d="M702 609l-1.5 1.5-0.5 1-0.5 0.5-3 1.5-3.5-0.5-3 0-1.5-0.5-2 0-0.5 1.5 0.5 1.5-0.5-1 0-0.5-2 0.5-3 0.5-3 2-3 1.5-3.5 0.5-2.5 2-3.5 1.5-2.5 2-2 0 0.5 1.5-2.5 3-2 2.5-1.5 0.5-2 1-2.5 2-1 3 1.5 1 1.5-0.5 2-0.5 1.5-0.5 0.5 0.5 1 0 1-2.5 2.5 0 3.5 0 3.5-0.5 2-0.5 0.5-1.5 0-3.5-0.5-1 1.5-0.5 1.5 0.5 1.5 3.5 1 3 1.5 3.5 0 1-0.5 1.5-0.5 0-0.5 0.5 0.5-1 2-1 2-1 1-3.5 1.5-2 3.5 0.5 2.5 2-0.5 1.5-1-1-2 3 0.5 2-1 0.5-1.5 0-0.5 2-1 0.5 0.5 0 1 0 1.5-0.5 1.5 0.5-0.5 1-0.5 0-3.5-1-3 1.5-3.5 1-2.5 1-2.5 0-2.5 1-3.5-0.5-2.5-2.5-0.5-2-0.5-2.5-1.5-0.5-0.5-2.5-1-2.5-2-2.5-3.5-1 0.5 0-0.5-0.5-2-2.5 1-1.5 1 1 0 0.5 0.5 3-0.5 2-1 3-2.5 3-1.5-0.5-2.5 0.5-3.5-0.5-3.5-1-3-0.5-3.5-1-2 0.5-3-1 0.5-2.5 2.5-3 3-1 3-0.5 2.5 0.5 0 1 3-1.5 2.5-1 0.5-2-1-1.5 0.5-2-2-3-0.5-1.5 1.5-0.5 2.5-1 2-1 1 0.5-0.5-0.5-0.5-2.5-2-0.5 0-1-1 0.5 0.5-1.5 2.5-2-0.5-0.5-3.5 0-3 0-0.5 2 1 2-1 0.5 0-0.5 2-1 0-1.5 1.5 1 3 1.5 3-0.5 2-1.5 3 0 2.5-1 3.5 1 3.5 0.5 1 0.5 3.5-0.5 1.5-1.5 1.5-0.5 1.5-2 3-1 3-0.5 3.5 0 2.5 0 3 2.5 1.5 3 0.5 3.5-2 2-2 1-0.5 2.5 0 2 2.5 2.5 2.5 0.5 3 0 2-0.5 1 1 0 3 0.5 1 0.5 3-1 3.5-1.5 2.5-2 2-2.5 2.5-2 2-2 1.5-0.5 1.5 0-0.5-1.5 2-1 1-0.5-0.5-1.5-0.5-0.5 0-2.5-2.5-3.5-1-1.5 0-3-0.5-1.5-1-1 1-0.5 1 0-1-1-2.5-2-2-2-3-1-3-1-3 1-2 M646 664l 2.5 0 0.5-1 1-1 1-2 2-1.5 1-1.5 2-2.5 1-1-0.5 0-0.5-2 1.5 0 1 0 1.5-2 2-1.5 2.5-2 2.5-2.5 2-1.5 2 1 1-0.5 2 1 0.5-2 1.5-1.5-1-3.5-2-3-2-3-2.5-2.5-1.5-2 1-1.5 2-2 1-3.5 0.5-3.5 0-1.5-1-2 2.5-0.5 2.5-1 2.5-0.5 3.5 1 3 1.5 3.5-0.5 3.5 0.5 2.5 2 3 2 0.5 3.5 1.5 2-1 2-1 3-1.5 2-2.5-2.5-3.5-1-1.5 0.5-1 1.5 1.5 3.5 0 1 0.5 2-2 1-1 2.5-0.5 1.5-1.5 0-1 2-3 0-3.5 0-2 0-1-0.5-0.5 0-1-1-2-1.5-1-1-1 0.5-1 1.5-1 1 1.5 1-0.5 0 0.5 0-1 2.5-2 3-3 2-3 2-2.5 1-1 0.5-0.5 0-1.5 0.5-1 3.5-1 3-1 3-1.5 2.5 1 1 1 0.5 1-0.5-1 0-1.5-0.5 1.5 1 0.5-1 0.5-3-1-1.5-0.5-0.5-0.5 0.5-2-1 0-3.5-1-3 0-0.5 1.5-2.5-0.5 1.5-1 1-0.5 1.5-3 1.5-3 1.5-2.5 2-2.5 2 0 0.5 0.5 0 0-1.5 1-3 0.5-3.5 2.5-2.5 2-2.5 1.5-1.5 2-2 1.5-3 3-2 0-1 1 0 1 1.5-1.5 0 0.5 0.5-0.5-1 3-0.5 3-1 1-1.5-0.5 0 0.5 0 0 2.5-0.5 1 0.5-2 0.5-2 2 1-1.5-0.5-1 0-1-1.5-1 0 0.5 0-1-1.5-1.5 1.5 0.5 0 0.5 1 0 1.5-1.5 3-0.5 2.5 1 2.5 1.5 2 3 2 3 2 1.5 0.5 3-1 2.5-0.5 3-1 2 1.5 3.5 1 2.5 1.5 3 1.5 3.5-0.5 2-0.5 3.5-0.5 3-1.5 2-2 1-3 1-3.5 1.5-1.5 3.5 0.5 3.5-0.5 1.5-1-1-2.5 2-3-1-2.5-1.5-2.5-2-2 0-3-1.5-1.5-0.5-3 0-1.5 1-1.5 0.5-2.5-0.5-3.5 1-3 0.5-3 0.5-3-0.5-0.5 0-1-1.5-1-0.5-2.5-0.5-2.5-1.5-0.5-0.5 2-0.5 1-0.5 3-1 3 1.5 3 1.5 2.5 2 0.5 M629 702l-0.5 1-0.5-2 2.5-3 2-2.5-2-2.5 0.5-2 1.5-1 0.5-2 1-2 2-3 0.5-2.5 3-1.5 3.5-1.5 2.5-2.5 1-3.5 0.5-2.5 2-2.5 2.5-1 2-3.5 0.5-2 1-1.5 1.5-1 1.5-2.5 3-2 1.5-1.5 3-2 0.5-2 0.5-2-2-1.5-2.5-1-2-1.5-3.5-1-3-1-1-0.5 1-0.5 0 1 2 0 2.5-1 1-1 3.5-1 2.5-2.5 3.5 1 3.5-0.5 0.5-0.5-1 0 1.5 0 1.5-2 2-2 3.5 0.5 2 1-1-1-2-2 0.5-2.5-1-1-1-0.5-0.5-1 0-1-0.5-0.5-0.5-0.5-2.5 2.5-1 2.5 1.5 0.5 1-0.5 0.5 1.5 1 3.5 1.5 3 3 0 2 1-1 0.5-0.5 0.5-2.5 0.5-1 0.5 0.5-0.5 1.5-0.5 2 0 2-0.5 3-0.5 3.5 1.5 3-2 2-2 2.5-2 0-3.5 2-3 2-2 0.5-2 0.5-2.5-1-1-3-1.5-3.5-1.5-2.5 0-3.5 0-3 1-2 0.5 0.5-1 0-1-0.5-1-0.5-1 0-1.5 0 2-0.5 3.5-1 3-0.5 2.5-3 2.5-0.5 3.5-0.5 3.5-0.5 3-1 2 0 3.5-1-1-1.5-1-1.5-1-1.5 1-1 0.5-1-0.5-1 0.5-1 0-2.5 0 0.5-2 1.5-2 1.5 1 0 0.5-2.5 0.5-1.5-0.5-0.5 0-0.5-3.5 0-3 0-1.5-1-2.5-1-2.5-1.5 0-0.5-2.5 1-1 1-0.5 2-0.5 2 0.5 1 3.5 1.5 3-0.5 2 0 3-0.5 2-0.5 2 0.5 3-3 2 0 1.5-1 0.5-1.5 1.5-1.5 3 0.5 2-2.5 2.5-2.5 0.5-3 0.5-2.5 0.5-3.5 0.5-1.5 0.5-1.5 3.5 0 3 0.5 3.5 2.5 2 2.5 3 2.5 2.5 1.5 0.5 2.5 2.5 0.5 1 0 0.5 0-0.5-2 0.5-2.5 2-1 2.5 1-0.5-1.5 1-0.5-2-2.5-2.5 1-3 1 0 2.5-0.5 2 2.5 2 1 0 0.5-1 0.5-0.5-1.5-0.5 0.5 0 3.5-2 3-0.5 3 0 3.5-2 3-1.5 3 0 1-1.5 0.5-2-0.5-2 0.5 2 1 0-1 0-2 1.5-3 3-1.5 3 1.5 1 1 M674 595l 2-2.5-0.5 2.5-0.5 3.5 0.5 1.5-2 0.5-3 0.5-2.5 1-1.5-0.5-1-0.5 0-0.5 0.5 0.5 1.5 0.5 0.5 2 1 1.5 1.5 2.5 2.5 1.5 1.5 2.5 0.5 2.5-2 0-2.5 0.5-2 1.5-1.5 2-1.5 3.5-3 0-1.5-1-3-1.5-2.5-2.5-3.5-0.5-1.5-3-3-2.5-2.5-2-2-3-1-2 0.5-1 0.5-2-1-1 1-2.5 2-1.5-0.5-0.5-2 0.5-2 0.5-1.5 0-1 2-0.5 1-1.5 1.5 0 1.5 2.5 0 1.5-0.5 1 1.5 0 3-2 3-2 2 1 2 0.5 1.5 2.5 2.5 2.5 2 0.5 3-0.5 2.5 1.5 3-1 3.5-1.5 3-1.5 1-1.5 1 0 1.5 3.5 1 2 3 1.5 3 3.5 2 1.5 1.5 2 0 1.5-1 0 1 0.5 1.5-0.5 2.5 2 1 2 0.5-1-0.5-0.5 0 2.5-1.5 3.5 0 2 2 0.5 3-2 2.5 0.5 0 0.5 2 0 1.5 2.5 0-1 2.5-0.5 2 2 0.5 3.5-0.5 1.5 1 2.5 2.5 0 1 0 1.5-0.5 3-1.5 0-0.5 3.5-1.5 3 0 3.5 0.5 3.5 0 1-1 1-2.5 0-3-0.5-2 1.5-2-0.5-2.5-2-2-3 0-3-0.5-2.5-1-1-2-0.5-0.5-3.5-1-3.5-1.5 0-0.5 0-0.5-1.5-1.5-2-1.5-3-0.5-2 0-2 2-3 1-2.5 1-2 1.5-3-0.5-3-0.5-3.5-1-2.5 0-3-0.5-3.5-0.5-2-0.5-3.5-1.5-3.5-1.5-3-1.5-1.5-3-2-3-1.5-2-1-2-1-3-1.5-3.5 0 0.5-2.5 0.5-3 3-1 2.5-0.5 2.5-2 0.5-3 1.5-2 1-1 1.5-0.5 3 1 3.5-1 3.5 1 1 1.5 1.5 0.5 2 2 1.5 3.5 0.5 3 2.5 2.5 3.5-1.5 1.5-1.5 1.5-2.5 2-1 1.5-2.5 3.5-0.5 2.5 0 2-0.5 2.5 0.5 2.5-0.5 2.5 1 3 0 0.5-0.5 1-0.5 2.5-1 0.5 0.5-1.5-1.5-0.5-0.5-2.5 1.5-3.5 1-1 0 0 1.5 0.5 0 3.5 1 3 0 2-1 1.5 2 2.5 2 1 3 0.5 1-1 0-0.5-1-0.5 1-2.5 0.5-1.5-2-1.5-1.5-3.5-0.5-2-1.5-3.5-1-1 1 M770 703l 0 0.5 1.5 0 0.5 0 2-1 2.5-1 3-1.5 3.5 0 3.5 1.5 4 0.5 3.5-1 4-1.5 4-0.5 3.5 2 1 3.5 2.5 3 1.5 3 2.5 2 3 1.5 2.5 1.5 2.5 1 2-1.5 4-1 2.5-1-1.5-0.5-1.5-1-1.5 2-1.5 2-4 1-0.5 0.5-1.5 0.5-1.5-3-1-3 0-0.5 0 1.5 1.5 3.5 0 1 0.5-0.5 0-0.5 1.5-2.5 2.5 0.5 1.5 2 2 3.5 4 0 1 0 2.5-0.5 2.5 1 2 2 2 3.5 2.5 2.5 3 2 1 3 1 1.5 0.5 0 1 1 1 1.5 1.5 3 1 1.5 0.5 3.5 1 3 0.5 0.5-1.5 2-2-0.5-3.5-2-4-0.5-2.5-1 1 2 2 0 0-1-1-1.5 0-3 2-1.5 3-2 4-1.5-0.5-1.5 2-1 4-1.5 4 0 2.5-2.5 3-1-0.5-1-2.5 0.5 0 1.5-1.5 2.5 2 0 1 3 2 2 3 1.5 3 2 3 2.5 2 3 2.5 2 1.5 1 1 3 0 3 0 1 0 1.5 0.5-0.5-0.5-0.5-2.5 0-1 2-1.5 3.5-1 2.5-1 3-2.5 3.5-1.5 1.5-2.5 0.5-2.5 2 0.5-0.5-2 1 0 0.5-1-2-1.5-2-0.5-2.5-1.5 2-1 0 1 1-1.5 0.5-1-2 0.5-2.5 1.5-0.5 0.5-2.5 3-2 4 0 4 0 3-2.5 3-2.5 4 0.5 3.5-2 3.5-1.5 2-3.5 3.5-1.5 3.5-2.5 3.5-0.5 3 2 3.5 1.5 3.5-1 4-1.5 3-2.5 4-0.5 1.5 0.5 2.5 0.5 0 1.5 0.5 2 0.5 2.5-1.5-0.5-2 2-2.5 0-4 0.5-4 0-1.5-1-2.5 0-2.5 0 0 3-1 2-2.5 3-1 3.5 0.5 4 0 3.5 1.5 2 1-1.5 0.5-1 0-0.5-3.5-0.5-4 1-3-1-4 0-3 2 2 0 2-0.5-1 1-1-1-3 1-1.5 0.5 1 1 0 2-3.5 2.5-3.5 1-2 0.5-2-1.5-1.5-3.5 0-2-3-3-3.5-2-1.5-1-0.5-1-0.5 0-4-1.5-3-2.5-3-3-2.5-3-3.5-0.5-2.5-1-2-1.5-2.5-0.5-3-2.5-3.5-1.5-4 0.5 M750 820l 1 2.5-1.5 2.5-3 2.5-0.5 0-1.5 2.5 1 2.5 3.5 1.5 4 0.5 0-1 1.5-1 2 0 3.5-1 4 0 4 0 2.5 0 3 2.5 2.5 1 2 0.5 2.5-1.5 2.5 0-0.5 1.5-2.5-1-1 0.5 0.5-0.5 0.5 0.5-1-2 0.5-1.5 2.5-2 3-1.5 3 1 3.5 0.5 3 2.5 1.5 2.5 2.5 2.5 4 0.5 3.5 0.5 1.5-3-1.5-4 1-4 0.5-4 1-3-0.5-2.5-2 0 0.5-1 3-1.5 3.5-1 3-3 2-2 0.5-2 1.5-3 1-3.5 0-3.5 0-3 2.5-3.5 3-3-0.5-4 1-3.5 0.5-2.5 1-2-0.5-2.5-0.5-3-0.5-2.5-0.5-3 1-0.5 1.5-2 2-1 2.5 0 2 2.5 3.5 2 2 2.5 2.5 0.5 4 1 1-0.5 3.5-0.5 2.5 1.5 2.5 3 2 1 1.5-3.5 1-3 1-4-0.5-3 0.5-2.5 1.5-3 1.5-1.5 0-2 1-3.5 0.5-2 0-3.5 0.5-3 1-2.5 2-3-0.5-4-3-2.5-1.5-3-2-3.5-1-2.5-0.5-4-1-4-1-1-1-2 1.5-0.5 0.5-2 1-2-0.5-3.5 0-4 2-2 2.5-3 2.5-1 3.5-1.5 3-2.5 1-2-0.5-3-0.5-2-1.5-3 1-2 0.5-1.5 1 0.5 1-0.5 0-1 1-0.5-0.5 0 0.5-1.5 2-1 3.5-2 4-0.5 2.5 0.5 1.5 1 0.5 3 1.5 3 1.5 2.5-0.5 3-1 1.5-1 0 2 0.5 2.5 0 0.5-0.5-1 2 0 0.5-1.5 2.5-2.5 2-2 3-2.5 1.5-2.5 2.5-4 1-4 0.5-3.5 1.5-3.5 0-3-1-3.5-2.5-1.5-0.5-1-1-1.5 1-2 1-2.5 1-2.5-0.5-2 0-2.5-0.5-3.5 1.5-1.5 3.5-0.5 2.5-2 2-1.5 2-3.5 2-4 0-4-1-4 0-3 1-3.5 2-3.5 2-4 0-2 1-4 1-2 2-2.5 1-1 0.5 0 2-1.5 1 0 1-2 0-1 2 0.5-0.5 0.5-1 0 2.5 1 4 1 3.5 1 2-1 4-0.5 2.5 1 0.5 0.5 2-1 2.5-2.5 2.5-2.5 3.5-1 4-2 3-2 2.5-1.5 2-3.5 2-2.5 1-2 3 M962 774l-3-1.5-2-1-3.5-1.5-1.5-2.5 2-2.5 2.5 0.5 0.5 1.5 2 0 2.5-0.5-0.5-2.5-0.5 1 0.5-2-0.5-3 0-2 0.5-3 2-3.5 1-2-1-2-3-0.5-3.5 0-2.5-1.5 0-0.5-3.5-1-3.5-2.5-2.5-2.5-2-2.5-2.5-1.5-1 0-1.5-1.5-1.5 0.5 0 0.5-2-2.5-3-2.5-3-3-3-1-4-1-3.5-2.5-3.5-2-3.5-1-3.5-2-3-3-3-2-2-3.5 0.5-2.5 1.5-3-1.5 0.5-2.5 1.5-0.5-0.5 0-3 1-4 0.5-1.5-2-1-2-3.5-1-3.5 0-3.5-0.5-3.5-1-4-1.5-3.5-1.5-2.5-3.5-1.5-3.5-2 1 0.5-1.5 0-1.5 2-2 2-3.5 2-4 0-1.5-1.5-0.5-3-2-2.5-2.5-3.5-2-3-2.5-1-4-0.5-3.5 1-3.5 0.5-3-0.5-3-3-3 0-1.5-1-2.5-2.5-2-2.5-1.5-3.5-0.5-3-2.5-3.5-3-2 0.5-2 0.5-2 2.5-2 2-1.5 0.5-4-1.5-2-3-2.5-2-1.5-2-1-3.5-1-4-0.5-2-3-3 0.5 1-1.5-3 0-3 0.5-4 0.5-4-0.5-3-3-2.5 1-3 1.5-1.5 2.5 2 0.5 3.5-0.5 4 0 0 1.5-0.5 1 1.5-0.5 1.5-1 1.5 2.5 2 2 3 2 1 1 0.5 0.5-2 2.5-0.5 2.5-1 2.5-1.5 4-2 1.5 1 2-1.5 0.5-2 3 0 3.5 0.5 1.5-0.5 3 0 2.5 0.5 4 0.5 4-1 1.5-1 3 1.5 0 0 1 1.5 0 2 2.5 0.5 2.5 1 4 0 3.5 3 3 2 2.5 2 3.5 1 4 1 3.5 0 2.5 1 2.5 0 4 0 2 3 3 3 2.5 4 0 2 0 3 2.5 2.5 1.5 2.5 2.5 2 3 0 4 0 4-1.5 2.5 0.5 2.5 1.5-1 0.5-3 2-2.5 1.5-2.5-0.5-2 1.5-3.5 1.5-3.5 0-1.5 2-2.5 1-2 0.5-2 0-3-0.5-3 1-3.5 2.5-2.5 1-3.5 0.5-1.5 3-2 3-1.5 2-2.5 1.5-1 3.5 0.5 4-1 0.5-2 0-3 2.5-3 1-3 1-1-0.5 0 1-2-0.5-2.5-2.5-1-1-2-1.5-2.5-3-2.5 M753 661l 0.5 2.5-0.5 4-2 2.5-0.5 2.5 0.5 1 1.5 1 0.5 0 1.5-2.5 1 2 0 0.5-1 1.5 1.5-1.5 0.5 0.5 4-0.5 3 2.5 3.5 2 3 2.5-0.5 2 2 3 0 4 1 3.5 1 2.5 2 1.5 1 2 0 4 0 1.5-1.5 3.5-0.5 1.5-1.5 0-1 0.5-2 1.5 1.5 3.5-1.5 4-0.5 2.5 1 3 0.5 2 2.5 3.5 0 1 2 2 2 3.5 0 3-1 3.5 1 3.5 1.5 1.5 3.5 1.5 2.5 0 3 0.5 1.5 0 2-0.5 2 0.5 1.5 4 2 3.5 1 3.5-1 3.5-3.5 2-2 0 1.5 0-0.5-0.5-1-1 2.5 0 2.5-1 3-1 0.5 0.5 1.5-1 2-1 0.5-1 0.5 0.5 1-1.5 2-3.5 2-3 2-3 3.5-1 2.5-3 4-0.5 4 0 4 0.5 4 0 2 2 3.5 1.5 2.5-0.5 1 3 1.5 1.5 1 0.5-1 1 2 0 2.5-1.5 1.5-1 2.5-3 3-2.5 3-2 3.5-1 2.5-2.5 2-3.5 3-2 2.5-2 0-2.5-1-1.5 0-0.5 0.5 0 3-0.5 2-0.5 2.5-1 2 0.5 1 0.5 1-0.5-1 1 1.5 1.5-1.5 0-2.5 1-2-1 0-1.5-2.5 0-2 1 0.5 0.5 0-1 2-0.5 2-1 0.5-0.5-0.5 0-1 0.5-1 1-1.5-1-1-0.5-1.5 1.5-4 1.5-2 0.5-2.5-0.5 0.5-1 1 3-2 3.5-1.5 4-3 1-2.5 2-2 1.5 0 4-1.5 3.5 0 2-2 0 0 1-2.5-0.5-3.5 0-3 0.5-4-1.5-0.5 0-3.5-2-3.5-1-3 0-3 1.5-3.5 2.5-2.5 2-2 2 0.5 0.5 1 2 0 1.5-0.5 1.5-2.5 2 1.5 1.5-1 1-0.5 1 0.5 0.5 4 1.5 0.5 1-3.5-2.5-2-1-2 1-4 1-2.5 1-3 0-4-0.5-2 0.5-2.5 1-2.5-1.5-1 1-2 1-3 1 1 1 0.5-1-2.5-1-2 2.5-2.5 0-1 0.5 0.5 0.5 2-1 2-1.5 1.5-2-2.5 0-0.5 0-1.5 0.5-1.5 0.5-0.5 3-2 0.5-1.5 0-2 1.5-3.5 2-1.5 1-3.5-0.5-3-1.5-4-0.5-0.5-1.5 M880 676l 0-1 1-0.5-1 2 0 1.5-1 2-2.5 1-3 0.5-0.5 1.5-2 2-2-1.5-2.5 0.5-2.5 1-3.5 1.5-2 3 0 1-1.5 3-2 3-2 2.5-3.5 1.5-2.5 2-3 0.5 0 0.5 0 3.5 0 4 2 3 1 2.5-0.5 2.5 0 1.5 0.5 1 2 2.5-1 2.5 0 2-1 1-0.5 2-1 3.5 0.5 3.5 2.5 3.5 1.5 0 0.5-0.5 0-1 1 1 2 2.5 0.5 3 3 2.5 1.5 3.5 1.5 1 2.5 1 2.5-1 2-2-0.5-2-1-2-2.5-2.5-1-1.5 1 0 1 0.5 1-0.5 2.5 0 3.5-1 2.5-0.5 4 1.5 2.5 2.5 2 1.5 2-1.5 1.5 1 2.5 2 2.5 3 2 2.5 2 1 4 0 1.5 0 1 4 1 3-2 2.5-1 2.5 0 3 0 2.5-1 1.5 0 2.5-1.5 3.5-0.5 4-0.5 3.5-0.5 1-1.5 1 0 0.5-2.5 0.5-4 0-3.5 1.5-4 0.5-2.5-1-3 1-3 1-4 2-2 1.5-1.5-1.5-3.5 2-1 2.5-2 3.5-2 3-1.5 1-3 0.5-1.5 0.5-2.5 0-4 1-1.5 1-2.5 2-2 0.5-1 1-2 0.5-2.5 2-2.5 1-1.5 2.5-2.5 3-3.5 1.5-2.5 2-4 1-3.5 2-3.5 2.5-2.5 1.5-1.5 1.5-3 2.5-3 2.5-1.5 3.5-4 1.5-1.5 1.5-3.5-2-3.5-2.5-1.5-2.5-2.5-2.5-3.5-1.5-2.5-0.5-1 1.5-3.5 1-4-0.5-3.5-1.5-3.5-1-3.5-0.5-2.5-2 1-3.5 1-3.5 2-3 1-3.5 0-4-2-3.5-1.5-3-3-1-1-2.5-3-2-0.5-2-0.5-4 0-3.5 0.5-2.5-0.5 0-1 0.5 2-3.5 1.5-4 2-2 1.5-1 1-2 0-0.5-3-1-1-3.5 1.5-4 1-3 2-3 1.5-3.5-0.5-4-3.5-2-2.5-3-1-3.5 0.5-3.5 0-2.5-1-4 1-1.5 0.5-3 0.5-3-0.5-1.5 1.5 1 2.5 1.5 2 0 0.5-2-1-1.5-1.5-1.5-1-3-2-3-1.5-3.5-0.5-0.5 1.5 2.5 0.5 3 2-1-0.5-1.5-1-3-1.5-3.5-2.5-3-1.5-4-1-1.5-2-2-2.5-1-0.5-1 0.5-1.5 M711 699l 0.5 0.5 2 3 1 1.5-1 1.5-1.5 2.5 2.5 3.5 2.5 3 1.5 3 0.5 2.5 2 3 2.5 1-0.5 0 1-0.5-0.5 0.5 0-0.5 1 1.5 1.5 3.5 0.5 3.5-0.5 4-1.5 3.5-3 2.5-3.5 2.5-1.5 1.5-1.5 1.5-0.5 1 2 1.5 2 1 1.5 0.5 0 2-2 3-2.5 1-1.5 1.5-2 1.5-2 2 0-1 1-0.5 2.5 1.5 2 3 4-1 4 0 1 1.5-1.5 2-1 2.5-0.5 2.5-0.5 1.5-0.5 1.5-0.5 1.5-0.5-1.5 0-0.5 2.5 0.5 3-0.5 2.5-1.5 2.5-1.5 1.5-4 3.5-1.5 1.5-3 2.5-3 3.5-2 3-2 1.5 1 2 2.5 3.5 1.5 4 0 4 0 2.5 0.5 1.5-1 0.5-2-1-1.5-0.5-1.5-1-2 0.5-3.5 0-4-0.5-2.5-1.5-0.5 1-1.5-0.5-4 1.5-3.5 2-2 4-0.5 3-1 3 0.5 3.5 0 3.5 1.5 3.5 1.5 3.5-0.5 3.5-1.5 3-1.5 4-0.5 4 0 3.5-2.5 3.5-0.5 4-0.5 4-1 2 0 0.5-2 0-1 3-1 3.5-0.5 2.5-3 2-2.5 1-1.5 3-1.5 2.5 0 3 0.5 3 0 1.5 0 4 0 0.5-2-2-1-0.5-1.5 1.5 0-0.5-3.5 2-3.5 2-3.5 1.5-0.5 0.5-2-0.5-1.5-2.5 1 0-2 2-3.5 1.5-0.5 1.5 0 2.5 2.5 2 3.5 3 2 3 2 1.5 1.5 2 1 2.5-1 3.5-1.5 4-1 2-2.5 0-2.5 2-2.5 2-4 2-2.5 1.5 0 0-3-0.5 0.5-2-1-1-0.5-2.5 0.5-0.5-1-1.5-1.5-2.5-2-1.5-1 1 2.5 2.5 3 3.5-0.5 1 0 1 2 2 3 2 3.5-1 1.5-2-1-1.5-1.5-3 0.5-1.5-1-3.5-1-3.5-0.5-3.5-2-1-1.5-2.5 1.5-3.5-1.5-3 0-3.5 0.5-3.5 1-3.5-0.5-2.5-1-1.5-2.5-1.5 0-2.5-2-3-1.5-3-0.5-1-1.5-2-3-3.5-2-4-0.5-2 0-3 0-4 0.5-3 2-1.5 2.5-2 1.5-2 0.5-2.5 3-0.5 2 0 1-0.5 2 1 2.5-1.5 3.5-2 3.5-1.5 1.5-3.5 2.5-3.5 2-4 1-2 1.5-4 0-4 0 M936 765l 2-3-0.5-1.5-1.5 0-2-2-2.5-1-2-0.5 0-2.5 2-2.5-1.5-1.5-4-1-2 0-4 1.5-3 2-3 1-2-1-2 1-4 1-3.5 1.5-3.5-1.5-4-0.5-3.5-1-4-0.5 0-0.5 0.5 0 1-2-1-0.5-1.5-1-3.5 1.5-3.5-0.5-3-1.5-2.5-2.5-3.5-0.5-2.5-0.5-1.5-1-3-3-0.5-0.5-1 0-0.5-1.5-4-1-3.5-1.5-3-1.5-4-1-1.5 0.5 1.5 1 2-1.5 0.5-1.5 0.5 0-2.5 3-1.5 3.5-4 2-2.5-0.5-4-0.5-3-1-2-1-2.5-1-2.5-0.5-3.5 2-2.5 2.5-4 0.5-3-0.5-3.5-2-3.5 0-0.5 0.5-1.5 0.5-3-0.5-4-0.5-3.5-0.5-2-3.5-2.5-3-1-3.5 1-3.5-0.5-2.5-1-2.5-2-2.5-1.5 0 0 2.5-1-2-0.5-2 3.5-0.5 3 1.5 3.5 1 3.5 2.5 2 3.5 2 3.5 2.5 1.5 2 1.5 2.5 2 1.5 2 2 2.5 2.5 3.5 2.5 2.5 3 3 0.5 3.5 0.5 0-0.5-0.5 0 0.5 1-0.5-0.5 0-1.5 1.5-2.5 3-2.5 1-0.5 2.5 1 3.5 0 2 2.5 1 1.5 1 0.5 0.5 3.5 2 3 3 2.5 1.5 3 1 2.5 0 4 0 1.5 0.5 1 1-1.5 1-1.5 3-1.5 2-2 2.5 0 3.5 0 3.5-1.5 1.5-3.5 1-1.5 1-3 0.5-2.5 0.5-2.5 1-1 0.5-3.5 0.5-1-0.5 1-0.5-1-0.5 0-1.5 1.5-1 0.5-3-1-3 0.5-4-1-3-0.5-4-0.5-4-0.5-2.5-2-3.5-0.5-4-1-4-1-4-1.5-1.5 0.5 1 1-1 2.5-1 2.5-1 1-2.5-1.5-1 2.5-1.5 1.5 1 0.5 2.5 0 3 0 2.5-0.5-1-3.5 1.5-2.5 1-0.5 3.5 0.5 4 3 2 1 2.5-1.5 0 2-3.5 0-3.5 1.5-4 0.5-3-2-2.5-1.5-1-1.5 1.5-3 3-3.5 2-3.5 0-3-3-1-2.5-2-0.5-3.5-1.5-3-2.5-2.5-2-3.5-2-3-1.5-2.5-3-1.5-3.5 1.5-0.5 3 0 2 0.5 0.5-2-0.5 1 1-3 0-3-0.5-3.5-2 0-2.5 0-2-1.5-2.5-3.5-2-2-2-1 M859 797l 0.5 0.5 0.5-0.5 0 1-0.5 0.5 0-2.5 0.5-1.5 0.5-2-1-2.5-0.5-0.5 1.5 1 0-1.5 3.5-1 3-1.5 3.5-1.5 0.5-3 3.5-2 3.5-1.5 2 0 3.5 0.5 4 0 3.5-1 0.5-2.5-1 1 0 1-1.5 0-1.5 0-2-1-3.5-1.5-2-0.5-2-0.5-2-0.5-1-0.5-2.5 0.5-2-2-1.5-0.5 0.5-1-3.5-0.5-3 1.5-2.5 0.5-3.5-2-4-0.5-3.5 0.5-2.5 0-3 1.5-2 2-1.5-0.5 1-0.5 1.5 2.5 0 0.5 1 1 2.5-1 0.5-1 1.5 0 0.5 0.5 3 0.5 4 0 0 0.5 0.5-1.5-1.5 0 1.5 2.5 0 1-1.5 0.5-2.5 0 0.5 0-2.5 1-1.5 1.5-0.5 4 0 4 0 1.5 0 3-0.5 4 1.5 2 0-0.5-3 1-4 0.5-1.5 1-3.5 1.5-3 2.5-2-0.5-3 0.5-1-0.5-0.5 0.5-1.5-0.5-3-1-3.5 1-4 0-0.5 1.5-1-0.5-1.5-1-2.5-1-3-1-2.5-1.5-3.5-1-4 0.5-3.5 0-4-1-3.5 2-3 2.5-1.5 2.5-1 2.5-2.5 1-2 1.5-1.5 2-1 3-1-1-2 0-1.5 0-2.5-1.5-2.5-0.5-3.5-2-3.5 0-3.5 1-3 0.5-4 0-2.5-0.5-3-2-2 1-1 2.5 0.5 2.5 0 2-1.5 0.5 0.5 0 1.5 1.5-0.5 1.5-0.5 3 0 3.5-1.5 3.5-1 3-1.5 3.5-1 3.5-0.5 1.5-0.5 1.5 0.5 1.5-1 2-0.5 1.5-2.5-0.5-3 0-1.5 0.5 1 0 2.5 0.5 3.5 0 3.5-1.5 4-1.5 3.5-1 4-1.5 3.5-2.5 1-3.5 0.5-3.5-1-4-0.5-4 1.5-2.5-1-4 0.5-3 0-4 1.5-3.5 0.5-4-0.5-4 1.5-3 2-3.5 1.5-3.5 1-4 2-2 0-2-1-2.5-1-3.5 1-4-1-3-2-1.5-3-1.5-1.5-2-3.5-1-0.5 0 0 1.5-1 1.5 0.5-1 1 0 0.5-2.5-0.5-4 3-3 1-4 2.5-2.5 3.5-1.5 3.5-1.5 3.5-2 2-0.5 0.5-2 1.5-3.5 1-4 0.5-4 1.5-1.5 2 0 1.5 1 3.5 1.5 2 1 1-1.5 1.5-1.5 2-1 3 0 M957 724l-4.5 1-2 1.5-0.5 2.5 0 1 0.5 0.5 0.5-1-0.5-1 1-3-1.5-2.5-2.5-1.5-3-1.5-3-1-1 1 0 2-0.5 1.5-1.5 1 2 0.5 2.5 0.5 0.5-2-2.5-1.5-0.5 0-2 1-2-1-4 1-3-1.5-2-0.5-1-1.5 0-1.5-1-1.5-2.5-0.5-3.5 1.5-1.5 2-0.5 0.5-1 0.5-1.5 2-1-0.5-1-1.5-2-0.5-3.5 0-4 0.5-3.5 2-3.5 0.5-1.5 1-1.5 0.5-2.5 3-2 1 0-0.5 0.5-3 0-2-1.5-2-2-1.5-1.5-0.5-1.5 1.5-3.5 2-2 1.5 0 2.5-0.5 4 1.5 1.5 1-2.5 0.5-2.5 0.5-3 2 0 1.5 0-0.5-2 1-2.5 1-0.5 2.5-0.5-2-2.5-2-2.5 1.5-3.5 1-4-1.5-2.5 0.5-2-0.5-3-1-3.5-2-2-3 0-4 0-3.5-1-3.5-2-3 0-4 0-3.5 0-2.5-3-0.5-2-0.5-1.5-0.5-1.5-1-3.5-0.5-3-2-3-0.5-3-3-2-4-1-3.5-0.5-1.5 0.5-4 0-4 0-4-0.5-3-2-3 0-4 0-3.5 1-3.5-0.5-3 1.5-4 0-3.5 0-3-2-2.5-2-3.5-2-4-1-2.5 0.5-4 1.5-2 1.5-3 1-3-0.5-3.5 1.5-4 0.5-3 1-0.5 1-4 0.5-4-1.5-3 0.5-3-3-3.5-1.5-4-0.5-4-1-2.5-3-2.5-0.5-4 0.5-1-2-0.5-0.5-0.5 0-3-3-3-2-1.5 0 2 2 0.5 2.5 1.5 1.5-0.5 4-0.5 4 0.5 4 0 3 3 2.5 3 2.5 3.5 1.5 3.5 2.5 2 2.5 1 3.5 1 3 2 3.5-0.5 4-1 3 1.5-0.5 1-2 3-3 3-2.5 4-1.5 4 0 3.5 1.5 3 0.5 3.5 2 4 1 2.5-0.5 3.5 0 3 2.5 2.5 2 2.5 0.5 1.5 0.5 1.5 1.5 3 2 3.5 2 2.5 3 4-1.5 3.5 1 3 2 2 2.5 1.5 1 1 1 2 1.5 4 0 4-1 2.5 1 3.5 1.5 2 3-0.5 2.5 0 2 2 1-0.5 2 1 0.5 0 1.5 0.5 0.5 3 0.5 0.5 0.5-2 0.5-2.5 1-1 4 0 4-2 0.5-2 0.5-2-0.5 M813 666l-3 0-3-1.5-1.5-3-2-2.5-3.5 1.5-2.5 1.5-1.5 2-1.5 2-3.5 1-2.5 2.5-0.5 0.5 2 0 2.5 2 3 3 1.5 4 1.5 3.5 3.5 2 3 2 2 2.5 3 2 2 1.5 0 2.5-1.5 4-3 2.5-1.5 1-1.5 1-1 2-1 1.5-2.5 1-3.5 2-1 1-2.5 3.5 0.5 2 1.5 0-0.5 1-1.5 4-1.5 3.5 0.5 4 2 3.5 2.5 2.5 2.5 3.5-0.5 4 0 1.5 1 2 2.5 3 3 2.5 3 2.5 0.5 3-2 3.5-0.5 1.5 0.5 2 1 1.5 3.5 2 1 1.5 1 0.5 2.5 1.5 1.5 2 2 2.5 1.5 2 1.5 0.5 0.5-1-0.5 0 0-2-2.5 0-2.5-0.5-1.5-1-3-1.5 0-0.5-1 0.5-1-1-2-1.5-3.5 0.5-4 0.5-4 0-3 1.5-2 2-3-2-3.5-2-4 0-4 0-4 0.5-3-2.5-2-1-1 1.5-3 1.5-3.5 1.5-3.5 1-4 0.5-3.5-0.5-3.5-1-2-4-3-2.5-3-2.5-2.5-2-1-1.5-3.5 0.5-2 1-1 2 0 2-1.5-0.5 0-0.5-1.5-3.5-2-2.5-3-2.5-2 0-2-1-3 1-2.5 1-3.5 2.5-3 2-1 3 2 0 2.5 0.5 3 2 2.5 3 2 2.5 2-2.5 1.5-2.5 0.5-3 2-3.5-1.5-1-0.5-1.5 0-3-0.5-3 0-3.5-1.5-3.5 0-3 0.5-2 0.5-2 1.5-0.5 3.5-1 0-0.5 0.5 0-0.5 1-0.5-0.5-1.5 2-2-1-3 1-1.5 0-1.5-0.5 0.5 1.5-0.5 4 1.5 1.5 2 3.5 2 2.5 3.5 2.5 0 1-1 0.5 1.5-1.5 0.5-1.5 2.5-1.5-0.5-1.5-1-3 1.5-2.5 2.5-0.5 4 0.5 4 1.5 1.5 1.5 2 0 1.5 2 2 3 2 1.5 3 0.5 3.5 1 2.5 0.5 2 2 2.5-0.5 1.5-2 1.5-3.5 2.5-3 1.5-3.5 1.5-4 1.5-3.5 1-2.5 3-1.5 2-1 3-2 2.5-2.5 2.5-3 1-2.5 1-1 0-1.5 0.5-1 0-1 1-1.5 2-3 3-2 1.5-4 1.5-3.5 2.5-3 2.5-1 3.5-2.5 2.5-1.5 0.5-1.5 3-2.5 3.5-2 2.5-2.5 2.5-1.5 M699 654l 1.5 1.5-1 0 1-0.5 2.5-2.5 0-2.5 0-2-1.5-2.5-2-2.5-2-0.5 0.5-1.5-0.5-2.5-1-2.5-1.5-2.5-2.5-2.5-2.5-1.5 2 0.5 3 2 2.5 1.5 3 0 2 2.5 0.5 3 0.5 2.5 1 3 1 3 1 3 1 3 0 2 1.5-0.5 1-3 1 0 2.5 2 0 3 0 2 0.5 3-1 3 0.5 1.5-0.5-0.5 2 1 2.5 1 1.5 1 0 1 2 3 1.5 2 0 1.5-1 0 1.5 0.5 0 0.5 1 1.5 2 0.5 3 1.5 2 1 3 1.5 3 1 3 1.5 3 1 3-0.5 2.5-2 1-3 2-2.5-0.5-2.5-0.5-2-1.5-2.5-0.5-2.5-0.5 1-2-0.5-2 1-1 0.5 1.5 0 3-1 2 2.5 2 2.5 1 1.5 2.5 2.5 2 0.5 3.5 0 2.5-0.5 3-1 3-2 1.5-2.5 1.5-3 1-2.5 3 0.5 3 0.5 3 1.5 3.5 0.5 1 1 1.5-1.5 2.5-0.5 1.5 3 0.5 0 0 2 0 2 0.5 3-1.5 0-1-0.5-2 1.5 0.5 3.5-3 0.5-2.5 2-1.5 2.5 2 1.5 0.5 0 2.5-0.5 3-2 0-1.5 1 0.5-0.5 0.5-1 3-0.5 2 2 2-1.5 0.5-0.5 1-0.5 2 1.5 1.5 1.5 2-0.5 2 1.5 0.5 0 1-3 0-1.5 1-1.5 3-1 2-1 3 2 2.5 0.5 0-0.5-0.5 2 0 3 0.5 2 1.5 1 2-1-0.5 0.5 0 2 2 2 0.5 0.5 2.5 0.5 0.5-1.5-1 2 0 3-1.5 2-3 3-1 2.5-2 1.5-2.5 0.5-2 2.5 2 1.5 1.5 2 1.5 2 2.5-1 2 M745 707l-1 3-1 3-1 3-1 2-1 2 1.5 0.5 3 1.5 1.5 2.5 1 3-1 0 2.5-0.5 2-2 3-1 2.5-2 1.5-2.5-0.5-3 1.5-3 1 1 2.5 2 1.5 2.5 2.5 2.5 1 3 1 3 2.5 2-0.5 1.5 1.5-2.5-0.5-3.5-1-3-0.5-1.5 2 2 3 0 3 1 3 1.5 1.5 3 1.5 0.5 1.5 2.5 0 1 3 1.5 1.5-1.5 1.5 0 0.5 0.5 1.5 1 2.5 1.5 1.5 3 2 2-2-0.5-1.5-2-2-2.5-3-1-0.5 0-0.5-1-1.5-0.5-3 0-3.5 0.5-2 2-2.5 1.5-2 2.5-2-0.5-3.5 0.5-2 0-3-0.5-2-1.5-2.5-1-3 2-3 1-3 0.5-2-1-3.5-0.5 0.5-0.5 0-2-0.5-1-2.5-1.5-0.5 0.5-3 0-3.5 0-3 0-3 1-3-0.5-2-1.5 1-3 2-1 3 0.5 1.5-0.5-1-1 0 0.5-1.5-1 0.5-1 3 1 2.5-2.5 1.5-2.5 1.5-2.5 2-0.5 1.5-0.5 1-1 3.5-1 2.5-1.5 1.5-2.5 1 0-1 2.5 2-0.5-0.5-2 2-2.5 3-1 3 2 3 0.5 2-0.5 1.5 2.5-1 1 2-0.5 3.5 0 3-0.5 2-1.5 0.5-1 1-1 2.5 0 3.5-0.5 3-1 3-0.5 1.5-3-0.5-3 0.5-2 3-1 2-1 3-2 1-0.5 0.5-0.5 0.5 0-0.5-0.5 1 1 1.5 0.5 3-0.5 2-0.5 1.5-3 3-1 3.5 0 3 0 3.5 0 2 0.5 2 0.5 3 1 0.5-0.5 2.5 2 1 2.5 1 3 2 1.5 1 2 0.5 0.5 1 0 0.5-1.5 M802 719l 0.5 0 1.5-1 2 0-1-1.5-2-1.5-1.5-3-1-3 0.5-3 0.5-1.5 1.5-1.5 3-1.5 2-2.5 0.5-2.5 0.5-1 0.5-1-2.5-0.5-2-3 0-2-2.5-2 0.5-3 0.5-3-1-2.5 0-1 0.5-1 2.5-0.5 3.5-0.5 2.5-2 0-3 1-3 1-3-0.5-2.5 1-3-1-2.5-2-2.5-3 0-2.5-1.5 0-0.5 2.5-0.5 0.5-1 0 1.5-0.5 2 2.5 0 0.5-2-1.5-2-2-2.5-0.5-2.5-1-2 0.5-3 1.5-2.5 1-2.5-1.5-2.5-3.5-0.5-1.5 2.5-0.5 1 0.5 3 2 2.5 1.5 2 2.5 2 0 1.5-1.5 2 1.5 2.5-0.5 2.5 2 2 2 2.5 1 1 2-1.5-0.5-0.5-2.5 1-1 0.5 2 2.5 2 2.5 1.5 2 2.5 2.5 2.5 1 1.5 0.5 2 1 3-2 2 0 1 1-2 2.5 1.5 2.5-3 2 0.5 2.5-1 3-2 2.5-2.5 2-0.5 3 2 2 3 1.5 2.5 2 2.5 2 3 1 2.5 1 1.5 1.5 1 3 2.5 2 1.5 1.5 1 0.5-1-0.5-1 1 1 3 0.5 3-0.5 3.5 0 3-1 2.5-2.5 1.5-2.5-0.5-3-1-3 1-3 1-2.5 0-2-1-1-3 1.5-2.5 2-2.5 0-3-1.5-2.5-2.5-2.5-1-0.5-3-1-2.5-2-3 1-3 0.5-2 0.5-3-0.5-3-1.5-2-0.5-3-1-3-1-2-2-1-3-2-2.5-3 0.5-3 1.5 1 3 0 2.5-1 3 1.5 2.5 1.5 2 2.5 2.5 2 2 3 1 1 0-0.5-0.5-1-0.5-3.5-0.5-2.5-2-3-0.5 M805 708l-0.5-1 0.5 1 1-1-3.5-0.5 0.5-1 2 0-1-0.5-1.5-2-2 0 1.5 0 3 1 2-1 2-2.5 0-0.5 1-3 3-0.5 2-2 0.5-2 0-3 2-1.5 0.5 0 1.5-3 1.5-2.5 1.5-3 0-1 2-1 2-1 1-1.5 2.5-0.5-1 0.5-0.5 1-0.5 2-1 0.5-3 0.5-3.5-0.5-2-2.5-0.5-3 0-3-1.5-2-2-1-2.5-0.5 1 1.5 0.5 1.5 1 2.5 0.5 3-1 2-2.5 0-3-1.5-1.5-2.5-2 0.5-2-1-1.5 0-1.5 1-1 3-3.5 0.5-0.5 0.5-0.5-1-1 0-1 0-1 1-2.5 1-3.5 0-2 0 0-0.5-1 1.5-2 0.5-0.5 3-1 0-3-0.5-3 0.5-2.5 2.5-0.5 2.5-1 2.5-0.5 2-0.5 1 1 3-0.5 3-2.5 2.5-1 1 1-0.5 0-1.5-1.5-0.5-2.5 0.5-2.5-1.5-3-1.5-3-1.5-1-2-0.5-1.5 0 1-2.5 2.5-2 0-1.5 0 1.5 2.5 1.5 2.5 1.5 3-0.5 3-2 2-2 0.5-3-1-3 0.5-3.5-0.5-2.5-1-1.5 0-0.5-1 0.5-3 0.5-1.5 0-2-2.5 1-0.5-0.5-2 0.5-2 2-0.5 2 0.5 2 0 3-1 3 0.5 2.5 0.5 1.5 0.5 0-1 0.5 0 0.5-2-1.5-1.5-2.5-0.5-3.5-1-2-2-2.5-1.5-0.5-1.5 1-0.5 1-2.5 1-0.5 0.5-1 2-1.5 1.5-2-0.5-1.5-1.5-1.5-3-1.5 1-3 0-1-1-0.5 0 1 1.5 1 0 2-1 2.5-2 2.5-2 1.5-3-2-2-2.5-1 M708 723l 1.5 1.5 2.5 2 2.5 2 1.5 3 2 2.5 3 0 3.5 0.5 2 0 0-2 0-1 1-1.5-0.5-1.5-1.5 2-1.5 2-0.5 2 2 1 1.5 0.5 0.5-0.5 1-2.5 1.5 1 3 2 1.5 0.5 2-3 1.5-2 0.5 0 0.5-2-0.5 1 2.5-1 2.5-2 1.5 0 1 0.5-0.5 1 0 1.5 0 0.5-2-2.5-1-3 1-3 3-0.5 2-1 1 1.5 2-0.5-0.5-3 0.5-0.5 3-1 3-1 1.5-3 1.5-2.5 0-3.5-1-2.5-0.5-3.5 0.5-1 0.5-0.5 1-2 2-1.5 2.5-2 3-1 3-1 1-1.5 3-1 0 1 1 2 1 0 1 1 0 1 1-1 2.5 0 1.5 0 0-2 1.5-2 1.5-2.5 2-2.5 1.5-3 0.5-3 2.5-1.5 2 0 3.5-0.5 2-2-0.5 0.5-0.5-0.5-2 1 0-2 2.5-2 3-0.5 2 2.5 2.5 1.5 3 1 3.5 0 1.5-0.5 3 1 0.5-2-0.5-2.5 1-0.5 2-1 1.5-1 2-2.5 2-2.5 2.5-2 1.5-3 0.5-3 0.5-3 0.5-0.5-1.5-2.5-3.5 0-2.5-1.5-2-2-0.5-2-0.5 3 0 2.5 0 0.5 0.5 2.5-0.5 2-1 3.5 2 2.5 1.5 2 1.5 1 2.5 1.5-1.5 3-1.5 3-1.5 2.5 0 2.5 0.5 2.5-1 2 2 2.5 2.5 2.5 0 2-1.5 1-1 0-0.5-0.5 0.5 1.5 0 1-0.5 1 0-1 1 2-2.5 1 0 1.5-2-1.5-1.5-0.5-1-1.5 0-3 0-1-0.5-1.5-3-2-2-1-1.5-1.5-1-2-1.5 1-0.5 1 1.5 1 M768 705l-0.5-1.5-1.5-2.5-3-2-2-2.5 0-1.5 1.5-2 1.5-3 0-1.5-0.5 0.5 1-0.5 1-1.5 1.5-1.5-1-0.5-0.5-2.5 1-3 0.5-2.5 1-1-1-3-1-3 1-1 0.5-1.5 0-1 1 1 0.5-0.5 2.5 0.5 2-2.5 0-1 0.5-1.5 0-2 2.5 0-1-2 0 0.5 0.5-1 0-3-0.5-2.5 1.5-3-1.5-3 0-2-0.5-2.5 0.5-0.5-2-0.5-1 1.5 1.5 3-0.5 1-1.5 0.5-0.5-2 0.5-0.5 2 0 2.5-0.5 3 0.5 3 0.5 1.5 0 1.5-0.5 1.5-1.5 1 1 1 0.5 0-0.5-0.5 2.5 2.5 2 0.5 2.5-0.5 1-0.5 0.5-3-0.5-2 1-0.5 1.5 0.5 0.5 0 2-1.5 0 0-1 0 3 1 2.5-0.5 0.5-1 3-1 3-1.5 0.5-2 2-0.5 2-0.5 0.5-0.5-1-1-3 2.5-1 0-1 1.5-2 2-2.5 0.5-3-3-0.5-3-1-0.5-1-2 0 0.5 3-0.5 3.5 1 2.5 2.5 1.5 3 1 1-1-0.5-1.5-2.5-1-2-0.5-1-1-3-0.5-3-0.5-3-1.5 0.5-3 0-2-2-2.5-2.5 2-2.5 1.5-2 2.5-1.5 2.5-1.5 2.5-1 2-1.5 3 0 3.5-0.5 3-1 3-0.5 0.5-0.5 1 0.5 1 1.5-0.5-0.5 2-0.5 2 0 3-1 3-3 1.5-1 1.5-2.5 2-2.5 1.5-2.5 0-3-1-2.5-2-2-3-3 1-3.5-0.5-3 0 0 0.5-0.5 1 1-0.5 0.5-1 1-1 1-2.5 1-3 2-1 3 1.5 3 0.5 1.5-1 1-2.5 0-3-1-3-1.5-1 M825 739l 1.5-2 3-0.5 1.5-1.5 2.5-2 0 0.5-2.5-1-3 1-2.5 1-1.5-1.5-3 1-2.5 1.5-3.5 0-2.5-2-2-1.5-2.5-2-2.5 0-1.5 0.5-2-2.5-3-1.5 0.5-2-1.5-2.5-2-1-1.5-3 0-2 1-2.5 1.5-2.5 1.5-3 2-2.5-2-0.5-0.5 1-1 0.5-2-1.5-0.5-3.5-0.5-2 0.5-3-0.5-2 0-1.5 2-1 0.5-1 0.5-0.5 3 1 1 0.5 3 0 3-0.5 0.5-0.5 1.5-3 1.5-1.5-1.5-1 1 1.5 0-1-1.5-3 0-3-1-0.5-3.5 0-1 0.5-0.5 1.5-1 3-2 1.5 2-1 0 0.5-3 1-1 1.5-3 0-1.5 1 0.5 1 1 0.5-0.5 0 0-2-1.5-3-2-1.5 0-1.5-1.5-2-0.5-1 0-1 2.5-1.5 0.5 0.5 1.5 1 2 2 2.5 2 2.5-1 2.5-2-1-2-0.5-3-1.5-1.5-1-3-1.5-0.5 1-2.5 1-3-1-3-1-1.5-3.5 0-2.5 0.5-0.5-1 0-1 1.5 1 1 1.5 0 0.5-0.5 0-0.5-1 M1050 822l 0.5 1.5 0.5 0.5-1.5 0-2-0.5 1 2 1 0.5 2.5 0.5 3-2 0.5 1 0.5 0.5 3 0 3.5 1.5 3 0 3.5 1 3.5 0 2.5-1 1.5-0.5 3-1.5 3.5-1 1.5-3 2-1 1 0.5 1.5 2 1.5 0 0.5 1-0.5 2 1 3 0.5 0 3 0 2.5-2.5 1-3.5 0.5-3.5 1-3.5 2-3 0-2-0.5-0.5 1 1.5-3 2.5 0.5 3-1 2.5-1.5 3 0.5 3 1.5 2 0 1.5 1.5 1.5 2 2.5 1-0.5-2-3-2.5-3-4 0-2 1.5-2 2-3.5-1-3.5-0.5-3.5-1-1-2 0.5-1 3-2 3-1 2 1 1-1.5 1.5-2 2-2-0.5-0.5-2-0.5-3-0.5-1 0-1.5 1-2 1-1.5 2-2 0-3-0.5-2.5-1.5-1-3.5 0-2.5-2.5-1.5 1-2.5 0.5-4 2.5-2.5 2.5-2.5 3.5-2 2-3 2.5-0.5 1-0.5 0 1 0-1.5 0-2.5-1.5 0.5-2-2-1-3-1-3.5-1.5-3-2-3.5-2.5-1-3-1-1 0.5-2 1.5 0.5 1.5 0.5 2 1 0 0-1 0.5-2.5 3-2.5 3-1-0.5-3 2-1.5 3-2.5 1-1.5 1 2.5-1.5 3-2.5 1-0.5 1.5-0.5 2-1 3.5 0.5 3.5 2 3 2.5 3 1 1 1 0.5 1 1.5-3 2-2 3-1.5 1-1.5 2-2 0.5-1-0.5-1 0-3.5-0.5-2.5 1-3.5 0.5-1.5 1.5-3 1.5-2 1 0.5 2.5 0 2.5-1.5 1-1 0-1.5 2.5-1 2-0.5 1.5 0 3.5-0.5 1-2.5 0.5-2 1-3.5 1-1.5-0.5-3.5 0-2.5-2.5-2.5-3-3.5 1.5-3 1.5-2 3 0 2.5 1.5 3 1 3.5 2 1.5 3 2.5 2 2.5 3.5 1.5 2.5-1.5 3-2.5 2.5-0.5 2.5-2 0.5-2 1.5-3.5 3-2.5 3.5-1 3.5 0.5 2.5-2.5 1.5-3.5 3 0 3.5-2 3-1.5 2 1 3.5 1 2 3 0.5 2-1 2-2 2.5-2.5 3-0.5 3 1 3.5-0.5 2.5 1 1 1 0.5 2 1.5 0.5 3.5 2.5 2.5 2 3 1 2 1.5 4 0.5 1.5-1 3-1.5 0.5-2 0.5 0-1.5 2 0 0.5-0.5 M1100 801l-1 1-0.5 0.5-3-0.5 0 0.5-1.5 1.5 1.5 1.5-2-1-1-0.5-1 0-3.5 0-3.5-1-3 1-1.5 2-3.5 1.5-2-0.5-3 2-3.5 1.5-2.5 3-1 3.5-2.5 2.5-2.5 0.5 0 2 0.5 3.5-1 1.5-2 2-2.5-1-1.5-1 1-1.5 0.5-3.5 0.5-0.5 0.5 0.5 2.5 0 0-1-1 1-2.5 3-2.5 1.5-1 1 0 0.5-1-1.5-0.5-1 2.5 1 3.5-0.5 1 0.5 1 1 2-1-1-0.5-2.5-3-2 1.5-1.5 2 1 1 2 1 1.5 0.5-1 0.5-3.5-0.5-3.5 0-1.5 1-1-1-3.5-1-3.5-0.5-3.5-1.5-3.5-0.5-2.5-2-0.5-2.5 1-3 0-1-1 1 0.5 1.5 2 3 2 0.5 2.5 1 0-1 2 0-0.5-2-3-2-3-2-3-1.5-2.5 2-4 0.5-2-1-0.5 0-1.5 3-2.5 2.5 1 2.5 1 3.5 2 2.5 0.5 3.5 0.5-1-0.5 0.5-2.5 1-1 0-2.5 1.5-2.5 2.5-1.5-0.5 0-2.5 1.5-1 2.5-2 1.5-1.5 0.5-2.5-1-3.5-2-3.5-0.5-2.5-1.5-3.5-1.5-2-2.5-1.5-2-1.5-0.5-2-1.5 0-3-2-3-2-1.5-0.5-1-2 0.5-2-0.5 2-0.5 2 1 3-0.5 3.5 0 3.5 0.5 3.5-1-0.5-1.5 0-1-2-1.5-3.5 0.5-2.5 1.5 0-0.5 1-1 0.5-0.5 0 1-0.5 2.5 1.5-1 1.5 0 1 1 0.5-1 1.5 2.5 3 1 2.5-0.5 4 1.5 2 2 0.5 1 0.5 2 1.5 0 3 3.5-0.5 4 0.5 3.5 0 3 1 3 0.5 3.5 0.5 3.5 1.5 3-2.5 2.5-2.5 3-2 3.5-1.5 3.5-1.5 2-1.5 1.5-1.5 0-2.5 1-2.5 1.5-2.5 3-2 3-2 3-1 3.5 1 2 1 3 1 1.5 2 2.5 1.5 3 1.5 2 0 2 1 3.5 1 3.5 1 2.5-1.5 3.5-0.5 3.5-0.5 3.5 0.5 3.5 1.5 3.5 1 2 1 2 0.5 2-1 2 0 1-2 0-0.5-1-1.5 0.5-3.5 1-1 0.5-2 0-1-0.5-0.5-0.5 0.5-2-2-0.5-2-1 0-1 0.5-2.5 0-0.5-2 0 1-1.5-0.5-2.5 0 M1044 883l-1-0.5-1-2-1-1-1.5-1.5 0.5 0.5 1.5-1.5 1-2 1-2 1.5 1 3 1 2.5-1 3-2.5 3.5-1 3-1 2.5-0.5-1 1 2.5 2.5 1 1.5 1.5-0.5 0-0.5 0 2.5 0-0.5-1 0 0 0.5 0.5 0.5 2 0.5 3-1.5 3.5-1 3-2 3.5-1.5 2.5 0.5 0.5-1.5 1.5-3.5 1-2.5 3 0.5 2.5 0 1.5 0.5 0.5-1 0.5-0.5-1.5 1.5-1 2.5-3.5 2 0.5 1-1.5 0.5-2-1.5 0-2-1-3-2.5 0 0.5-0.5 0-1.5-2-1-2-1-3-2-3.5-1-2 0.5-3.5 0-3.5 0-4 0.5-3.5-0.5-3.5 1.5-3.5 0-2 0-1.5 0-2.5 0.5-0.5-2-1 0 1-2.5 3-2.5 0-1.5 0-0.5 1 1 1.5 0.5 0 1 0.5-2-1-1-1.5 2-2.5 0.5-3.5-0.5-0.5 1-1 0.5-1 0-1 1-2 1.5-3.5 1-2.5 1-3.5 1.5-3.5 1-3 0.5-3.5-0.5-4 0-1.5-1.5-1.5-1-1.5-0.5-0.5 1.5-2.5 1-0.5 2.5 2 2 2-0.5 2-3.5 1.5 0 1.5-1.5 3-2 3-2 2-2 0-2-2-3-0.5-1.5 1.5-1 1.5-2-1.5-1-2.5-3-1-3.5-1.5-3.5-1-3 0-4-0.5-3.5 0.5-2.5 0.5-2-0.5-0.5 0.5-0.5-0.5 1.5-0.5 1 0 1.5 0 1.5-0.5-1 0-3.5 1-3 0-4-2.5-2.5-2-2.5-1.5-3-2-2-3-2-2-1 0.5 1 2 0-0.5-2.5 2.5-0.5 3 1-0.5 1.5-1.5-1-1 1 1 0.5 1-2 0.5-3 1.5-3.5-0.5-2-1-0.5 0-1.5-2-3 0-2.5-0.5-3.5-1.5-3.5-2-3-2-3-3-2-2-1-1.5 0.5-2 0 0.5 0 1.5-2 1-1.5 1.5-1.5 1-1.5 1-1-2.5 0 0-0.5 0-1.5-0.5-2 2.5-1 0.5 0 2 1 3.5 2 3 1.5 2.5 1.5 1 1 2.5-2.5-0.5-2.5 2-2 0 0.5 3.5 1 2 3 2.5 3 3.5 1.5 2 0.5-0.5-1.5 0.5-1-2-1-2.5 0-3-2.5-3.5-1-3-1-1.5 0 1-0.5 3-2.5 3-2 M1096 786l-1 0.5 1 2-1.5 0.5-2 2-1.5 2.5 0 1-4 1-3 1.5-2 2-2 0-1.5 0.5-2 1.5-2 3-2 1-2 2 0.5 0 0.5 2 0.5 3-2 2-1 3-0.5 3.5-1.5 3.5-1.5 3-1.5 3 1.5 3.5 2 3 0 2-1 0 0 1 0 1-1.5 2.5 0 3.5 0 4-2 3 0 2.5 2 1.5 1.5 3 0.5 0-1-0.5-0.5-0.5-2.5-2-1 0-3.5 0.5-3 2.5-0.5 2-2.5 1-1.5 1-2 0-0.5 2.5 1 3.5 1.5 3.5-1 3-1.5 3.5-1.5 3.5 1.5 2 0.5 3.5 0.5 3 0.5 2-1 0 0.5 0 1 0.5 2.5 0.5 3.5 1 2.5-1 1.5-2 1.5-3.5-0.5-4 0.5-3 2-3.5 1.5-1 0-1-0.5 1 1.5-0.5 0 1.5 0.5 3.5 2 1 0 1 0.5 0 0.5-1.5 2 0.5 3 0.5 2-1.5 2-1.5-0.5-3 1.5-3.5 1-2.5 0-1.5-0.5-3.5 0.5-3.5-1-3-1-1-1.5-1-0.5-2.5-1-3-1-1 0-0.5 2 1.5 0 1-0.5 3-1.5 1.5-1 0-1-0.5-3 2-2 0-1.5-1-0.5-0.5-1.5-1-3.5 0.5-2.5 2.5-3 1-3.5 1.5-2 2-3.5 0.5-1.5-0.5-2 1-2 0-3-0.5-3.5-0.5-3.5-1-3 0-2.5 1-2.5 0.5-3.5 0.5-4 0.5-2.5 2-2 1.5-1.5 3 0 2 1.5 2.5 0.5 2.5 0 1 0.5 2.5 1 1 1.5-1.5 1-2 1 0 1.5 1 0.5 2.5 0.5 0.5-3-1.5-3.5-1.5-3.5 0.5-3.5 1-3 2-1.5 3.5 0 1.5 0 1.5 2 1.5 1 0 2 0 2-0.5 1-2 0-2 2.5 2 2 1 2 1.5 1-1 2-0.5 3.5 0 3.5-0.5 3.5 1.5 1.5 0 0.5-1 1.5-1 1.5 1 1.5 0.5 3.5-0.5 3-1.5 3 0 2.5 1.5 1 2.5 1.5 3.5 2.5-1 2-3 1-3.5 2.5-3 2-3 3-2.5 2.5-2.5 2.5-2.5 1.5-3 1.5-0.5 1-0.5-0.5-1.5 2-1-0.5-0.5-2-0.5 1 0 1.5 0 3-2 3 1 1 0.5 1.5-1 1 0.5-1.5 0 0 1.5 1.5 1.5 2.5 1 2 0 0.5 1.5 M1055 752l-1.5 2 3 1 0-0.5 1-1 2.5-2.5 3-2 2.5-1 3-0.5 3.5-0.5 3 1.5 2 3 2 3 1.5 3.5 3 0.5 3 2 2.5 0.5 1 2.5 0 0.5 0.5-0.5 3 1 3 2 2-0.5 3 0.5 1 0.5 0.5 0 2-0.5 0-1.5 1-1.5 2.5 0.5 2 1.5 2 2.5 0.5 2.5 2 3 2.5-0.5 2.5-0.5 2.5-2 2-0.5 1.5-1 2 1.5 1 0-1 0.5 0.5-1.5-2.5-0.5-1.5 1-0.5 4 0.5 3.5 1 2-2 1.5 2 0 1 2 2.5 1 0-0.5 1 0 2 0 2 1.5 2 1 1.5-1 1-1 0.5-1.5 1-2 0 0.5-2.5-1.5-1.5-1-0.5-1-0.5 1-1-1.5 0 1 1.5 2.5-1 3 1.5 0.5 3.5 0 0.5 3 1 2.5 1 3.5-0.5 1.5-0.5 1.5-3 2.5-3.5 0-1.5-1-3-2-0.5-2 1 1-0.5 1.5 0 2.5 1 3.5-1 3.5 1.5 3 1.5 3 3 2 3 2 3.5 1.5 2.5 0.5 0.5 1.5 1 1-1.5 0.5 1.5 0 2.5 0.5 1.5 2.5 0 3-1 3.5-0.5 2.5-2 3 0.5 1 0 0.5 0.5 0.5 0.5 2 0 1 1 0-2 1-2.5-1.5 0.5-1 3.5-0.5 1.5 1 0 1 1.5 0 1.5-1 0-0.5 0.5 1.5 1 0 0 2.5-0.5 2.5-1 0-1 0-1.5 0-1 2-0.5 2-2 3.5 1 3.5 2.5 1 2.5 0.5 1-2 1.5-1 1-1 3-1.5 2-0.5 0.5-1 0-1.5 1.5-1.5 3-2 1.5-3.5 3.5-1.5 2.5-1 3-1.5 2.5 0.5 3.5 0.5 2.5 1.5-2 0.5-3-0.5 0.5-3 0-0.5-1-2 2-2 2-3 0-1.5 1.5-1.5 0-0.5 0.5-3 1-3.5 1-2 2.5 0.5 0.5 0.5 0-1-1.5 0.5-0.5 1.5-1.5 2.5-0.5 0.5-2-1.5 1 1 1 1 2-0.5 0 1-1 1-2.5-0.5-2.5 0-3.5-0.5-3.5 0-2.5 0-1-1-3.5-1.5-1-0.5-1 1.5-0.5 1 1 1-2 0.5 1 1 2 1 1 0.5 1 0.5 0-1-1-1.5-0.5-3-1.5-1-0.5-3-0.5-3 0.5-1.5-0.5 0-1.5-1 M1167 817l 2.5-1.5-0.5-0.5 0.5-1 1.5-1.5 0.5-2-0.5 0.5-2 0-3.5-0.5-3.5 0-3.5-1.5-3.5-1-3-2.5-3-1.5-3.5 0.5-3 0-3-0.5-2.5-1.5-3-1-4-0.5-3-1.5-2-3-0.5-2 0 0.5 0.5 3.5-0.5 3 0 4-1.5 1-0.5 0.5-1.5-2.5-2.5-2.5-3.5-1.5-2.5-2.5 0-2.5-0.5-3 0.5-1-1.5-0.5-0.5-2.5-1.5-3.5-2-3-0.5-3-3.5-1.5-2.5-2.5-2-1.5-1.5-3.5-2-3-1-3-1.5-2.5-1-2-1-1-2.5 0.5-0.5 1-0.5-0.5-0.5 1-0.5 1.5-2 0-2-1-4 0-3 1-2.5 0-1.5-2 0 0.5-2 1-1 2-1.5 0-0.5 2.5 0.5 3 0 3.5-1.5 3.5-0.5 3.5-0.5 2-1.5 2.5-1.5 2.5 2.5 3 0.5 1-2 2.5-3 1.5-0.5 3 0 3.5 2 3-0.5 2.5 1-0.5-0.5-3-2-2-3-2-3-2-3.5-1-3 0-2.5-3-2.5-2.5-3-1.5 0-1.5-2-2 0-1 1 1.5 0.5 1.5 2.5 1.5 2.5 2 2 3 2.5 3 2 3.5 2 2 0.5 3 1 3.5 0.5 3 2.5 0 3.5-1 2.5-2.5 2.5-2.5 2.5-3 2-2.5 2.5-2 3.5-1 3-2.5 1.5-2.5 1-2 0-3-0.5-2-2-1 0-3-1-1.5 1-0.5 1.5-1 0.5 0 3.5 0 1.5-1.5 2-1.5 2.5-0.5 0.5-1-1.5 0.5 1-0.5-1 0 1 0.5-2 0.5-3.5-0.5-1 1-2-2.5-1.5-2-0.5-3.5-1.5-2.5 0-2-1-1.5-1 2 1 2.5 0.5 1 1-0.5 0.5 2 1.5 0-1.5-1.5-2-0.5-2.5-1 0-0.5-0.5-3 0.5-3.5 1.5-1.5 0.5-1-1-2-2.5-2-1-3.5-1-3.5-1-3.5-1-3.5-2.5-3-2.5-0.5-1.5-0.5-2.5 1-2.5 2.5-2.5 0.5-3 2-2 3-2 0-3 2.5-3 1 1-1 1.5 0-1 1-1.5 2.5-1 2.5-0.5 2.5-1 1.5 0 1 0-0.5 0.5-0.5 2.5 1 2.5 0 3-0.5 2-1.5 1 0 3 2 3 2.5-1 2.5 0.5 0 3-0.5 0 2.5-1 2 0.5 2.5-1 2-3 0.5 0.5-2 1-2.5 M1067 821l-0.5-1.5 0-3-1-3.5 0-3-0.5-1.5-2.5-1-1.5-2.5 0-0.5 3 0 2.5-1 1.5-1-2-2.5-2-3-2-1.5-3-1.5-0.5-3-2 0 0-1.5 2.5-2.5 1.5-2.5-0.5-2-2 1-1.5 1-0.5-1.5 1-3.5 2-2 1.5 0.5 1 2.5 3.5 1.5-1 2.5-0.5 3.5-1 1.5-2 0-2.5-3-2-0.5-3-1.5-3-1-2.5 0-1.5-2.5-2-2.5-2.5-2.5-3-1.5-1-2-2-2-2 0.5-2 0 0 2-0.5 1.5-1 2 1 3.5-1 4 0 3.5 0.5 3.5 1 3 1 3 1.5 1.5-1.5 0.5-1.5 0.5 0 2.5 2 2.5 0.5 1.5-0.5 1.5-0.5 1-2 1.5-2.5 2-2 2.5-2 3.5-1 3.5-0.5 1.5 1.5 0.5 2 1.5 0 2 1 2.5 0.5 0.5 1 0 2 0.5 1-1 2.5-1 4-0.5 3-1.5 2-1.5 0 1-0.5 1-1-0.5-1.5 1-1.5 0.5 2 1-0.5 1-0.5 1.5 2 0 3.5 0.5 1.5 3.5 2.5 3 1.5 3 0.5 3.5 1 2 1.5 3 1.5 3.5 1 1.5 0-1 2.5-1 3.5-1.5 3 0 1.5 0 1 2.5 0.5 1-0.5-0.5 1 2 1 1.5 1-0.5-0.5 2.5 0.5 2 3 1 2.5 0 3 1.5 1.5 0.5 1 0 1.5-0.5 2-1 2.5-2 1.5 1 2 3 3 2 3 2 1 1 0.5 0 0-1 0.5-2.5-1-1-2 0.5-2-1.5-0.5-1.5 0-2.5 0.5-2 0.5-0.5-1-1.5-3-0.5-2 0-1 1-0.5-1 0.5-0.5-1-0.5 0.5 1 2.5 3 1 1.5 1 0 1 0.5 1 2 0.5 0 0.5-2-0.5-0.5-2 1.5-3.5-0.5-2-1-0.5 1-0.5 2.5-1.5 1-3 1-3.5 0.5-3 0 0.5 1.5-0.5-0.5 0.5-1.5 1-1.5 0.5-0.5-2-1 0.5-1 0-1-1-2-1.5-3.5-2-3-2.5-2-1.5-1.5-1.5-1 1 0.5 0.5 0.5 0.5-0.5 1.5-1 1-3.5-0.5-3.5-1.5 0-2-3-1 0-1.5 0.5 0-1-0.5-0.5-2.5-2-2.5-2.5-0.5-2.5 1-3.5 0.5-4 1-2 1-3 0-3 1-1.5-1.5-1 0-1 1.5-2 M1132 852l-1 0-3-1-2 0.5 0 0.5 1.5-0.5 2-0.5 3.5 1 1.5 1.5 1 1 0.5-0.5 0.5-1 1.5 0.5-0.5-1-1.5 0.5-1-0.5-1.5 0.5-1 3-1.5 0.5-1.5 0-2.5 2-2.5 1.5-2-1-3.5-0.5-3-2-3-2-4 0-3.5-0.5-3.5-0.5-3.5 0-2.5-1-3.5-1.5-3.5-1.5-2-1.5-2.5-1-3-1.5-1.5 0-3-1.5 0-1-2-0.5-1.5-1-1.5 1-2-2-2-3-1.5-3.5-2.5-1.5-3 2-3 2-1.5 2-1.5-0.5-3 2-1-1-2.5-2.5-2-2-3.5-1-4 0-3.5-0.5-3.5-1-2-1.5-3.5 1-2 0.5-3.5 0.5 0.5-1.5 0-2.5-0.5-3.5 0.5-3.5 2-3.5 2.5-2 0.5-1.5-0.5 1.5 0-1.5-0.5-1.5 0.5-1.5 1-1-0.5-1.5-1-1-1-3.5-1-2.5-0.5-2-0.5-1-2-0.5 2.5 0-1 0.5-2 0-3.5 1-3.5 0-0.5-2.5-1-1.5-2-1.5-1-3.5-1.5-1 0 2-1 3.5 1.5 3 0.5 4 1 3.5-1.5 3-2 3-1.5 2.5-1 2 0 1-0.5 3 0.5 3-0.5 2.5 0-0.5-0.5 0.5 0.5 1 2 0.5 1 1.5 1 2-1.5 3 0 1-3 1.5-2 1-3 2-2 0.5-1-1.5 0.5-1-1-1 0 2 1 1.5-1.5 0.5 1.5 0 1.5-2 0-3.5 2.5 0 2-1 3.5 1-1 0-1.5 0-2.5 0-1.5 2-2 0 0-0.5-1 0.5 0 2 0 2.5-0.5 1-1 2.5-2 2.5-2 3.5-0.5 3.5 1 2.5-1 2-1 2 2 1 1 1.5 1 0.5 1.5 1 2 2.5 2.5 1.5-1 1-1 1.5-2.5 2.5-2 3-1 3.5-0.5 3.5 0.5 2.5 0.5 1-1.5-0.5-2-0.5-1.5-0.5 0-1 1.5-1 0.5-1.5-3 0 0-1-1-2-0.5-0.5-2 0 0 1.5 0.5 3-0.5 3.5-0.5 2-2 3.5-1.5 3 0 2 1 2.5 1 3 1.5 1 0.5 0 1.5 0 2-1.5 1 0 2.5-1 3.5 0 2.5 0.5 2 0.5 1-1 2-2 2-1.5-0.5-2-1.5-2.5-1.5-1.5-1-3 0.5-1.5 2.5 0 M1138 784l-3.5 0.5-3-1.5-1 1.5-2 1.5 1.5 2 0-1-1 2.5 0.5 2 2 3.5 1 2.5 1 0.5-1.5 1-3.5 1-1.5-1-0.5 2-1.5 3-2 3.5-2 2.5-1-0.5 0.5-1 0-1.5-2.5-1-2-1-3 1-3 1-2.5 1-3.5 1-4 0.5-3.5 1-1 2-0.5 1.5-1 2.5 0.5 3.5-1-1-0.5 0-0.5 0 1.5 0.5-2 2.5-2 2.5-1-0.5-1.5-1 1-3.5 3.5-1.5 2-3 2-2 2-1.5 2.5-1 2.5-2.5 2-2 0-3 1.5-3-1-2.5-2.5-3-1 0.5-2.5 0-3.5-1.5-3.5-1-1.5-1-2.5-1.5-2.5 0-1.5-0.5-2-3.5 0-3-1-2-0.5-3-1-3.5-1-1.5 1-2-1-3-2.5-0.5-3.5-1-2.5 0-3-1.5-1.5-3.5 1-1.5 1-1.5 2-0.5 1 1.5 0 1.5 0.5 1.5 2-0.5 2.5 0 2.5-0.5 2 0.5 1 0 0.5 1 0.5 2 1.5 1 1.5 0 3.5-1.5 3.5-0.5 2 0.5 3 0.5 3.5 0 2-2 0.5 0-0.5-3 0.5 0-0.5 3-1 3-1.5 2 1 3 0 0.5 0.5 1.5 3 0.5 3 1.5 3.5 0.5 0.5 2.5 0 3-1.5 0.5-0.5 1 1 0.5 1 1.5 1.5 1 0.5-1 1.5 2 1.5 2 3 1.5 1 0.5 0 0.5-1 1-1 3 0 1.5 0 1.5-3 1.5-2.5 3-0.5 1-2-1.5-0.5 1-2-1.5-2 0.5-3 2-1.5 2-1.5 0-3.5 0-3-1-3-1-1 0-2 1-1 0.5-1-1-1.5-1 0.5-0.5 0.5-1 1-1 0-2.5 0-3.5 0.5-3.5 0-2-1.5 0-2-2-0.5-2.5-2-3-1.5-2-2-2-1.5-3 0-3-1.5-3.5-0.5-2-1-1-2.5-1.5-0.5-1.5-3-2.5-2-3-2.5-2-2.5-3-0.5 0-1 0.5-2.5 0.5-1.5 1.5-2 3-3 2-3.5 2-1.5 3-2 3-2.5 2.5-2.5 3-2 3-3.5 1.5-1.5-0.5-0.5 0.5 1.5 0 0 1 0.5 1.5 1 2 0 0.5-3.5 2-2 0-3.5 1-2-1-3.5-2-2.5-0.5-2.5-1-2.5-3-0.5-2.5 0.5-0.5-0.5 0 1 2.5 1-0.5 M1187 797l 3 1.5 1 2 2 3 0 4 0 1.5-1 3 0.5 1 1.5 1.5 1 3.5 0 4-0.5 3.5 0.5 3.5-1 2.5 0.5 3 1 1.5-0.5 2-1.5 3.5 0.5 2.5-0.5 1.5-0.5 2-3.5-2-1.5-3-1-3 0.5-3.5-0.5-3.5-2-3-2-1-3.5 0-3 0-2 1-2-1-1-2.5 0.5-3.5 0-3.5-0.5-4-3-2 0-4-1-3.5 1-3.5 1.5-3 0-3-1-1.5-3.5 0.5-2.5 0-3-2.5-3.5-1-3.5-1-4-0.5-3.5-1.5-2-1.5-2-1-2.5-1-3.5 0.5-3.5-1-3-2-3 0-3.5 0.5-2 0-2 0-2.5-3-3-2-3-2-2-3-2 0.5-3 2-0.5 0.5-1.5 0-2.5-2.5 0-3 0-1-3-0.5-3-0.5-2.5 0.5-3 1-3.5 0.5-3.5 0-0.5 2-2.5-0.5-4-0.5-0.5-3.5-1-1.5-2.5-2.5-2.5-0.5-2-0.5-2.5-1-3 1-2.5 0-2.5 2-3 0-3.5 1.5-1 1.5-3 0.5-3.5-0.5-2 0-2.5-3-3.5-1.5-3-1.5-3.5-0.5-3.5-0.5-1-0.5 1-3.5 3-2.5 2-2.5 1.5-3 1-1.5-0.5 1 1 1 0.5 1 1.5-1-1-0.5-3 0.5-2-1 0 0.5-1-2.5 0.5-3 1-2 1.5 0-2 1.5 0.5 3.5 2 3 2.5-0.5 2.5-2 2 0 3-2 3-1 3-0.5 1.5 0 2.5-2 0.5-3.5 2-1 2-1 2.5 0.5 3.5 2 2.5 1.5 2.5 1.5 2 3 1.5 3.5-0.5 3-1.5 2.5-3 2-1.5 3 1 3.5-1.5 3-0.5 3.5-0.5 3.5-1.5 2.5-2 1-1.5-3-0.5-3.5 0-3.5 1-3-2-3.5 2-3 1-3.5 0.5-3 1.5-1.5 1.5-1 0.5 1 2.5 1 1.5 1.5-0.5 2 0.5 2 2.5 2 1 3 0.5 2 1 1.5 2.5 2.5 1 4 0 3.5 0.5 3.5 1 2.5 1 3.5 0 2.5 1 3.5 0.5 3.5-0.5 3.5-1 1.5-0.5 1.5-1 3-1.5 1 0 2.5-1.5 1.5-0.5 2-3 0.5-3.5 1 1 3 0.5 1.5 1.5 2-2 3-3 2-2.5 1-3 1.5-0.5 1.5 0 1.5 0.5 1 0-0.5 2 1.5 2 1.5 2 1.5 2 1.5 M995 784l 2 0-0.5 1-1 1-0.5-1.5-0.5-0.5-1 0 1-1 1.5 0 1 1-0.5 1 1 1-1-0.5-1-1-1-0.5-0.5-2 0.5-2.5 1.5-1.5-0.5-2.5 2.5-2.5 2.5-0.5 3.5-1.5 3.5-1 2-2.5 2-2.5 3.5-1.5 0-2-0.5 0 1 0 2 0.5-0.5 2.5 0.5 1 2.5-0.5 1.5-1 1-1 2.5 0 2.5-0.5 0-0.5-1.5 3 1 2.5-1.5 3.5-0.5 3.5-2.5 2.5-0.5 3 0 3 1.5 2 1 0 2 1.5 3.5 0.5 1.5-1 0 1 2 0 0-0.5-1.5-2-2 1.5 1 1-2-1.5-3-2-2 1 2 1.5 2.5 3 2.5 2.5 3.5 1 3.5 1.5 0.5-0.5-0.5-0.5-1 1-3.5 1.5-3.5 1-1 0.5-1.5 3.5 0.5 3.5-2 2-0.5 0.5 0 1.5-0.5 2.5 1 3.5 1.5 2 1 1.5-0.5 0 0.5-0.5-0.5-1 2.5-2 2-3-0.5 0-2-2.5-2-1-2.5-3-2-1-1-0.5-2.5 1.5-2-1-2.5-0.5-0.5 1 1.5 1.5 1 2.5-1 1.5-2 0-0.5 1.5 1.5 2.5 1.5 2 3.5 0 2 1 2 3 2 1 2-2.5 0.5 0.5 0.5-1-0.5 0.5 1.5-0.5 0.5-1-0.5 0 2 1 0 1 3.5 0.5 3.5 2 1 0 0 1 0.5 3.5-1.5 3-1 3.5-1 3.5 0.5 2 2 2 0.5 3.5 0 4 0 3.5 2 2.5 3 0 1.5-2 2-2 2-3-0.5-2.5-2-3-0.5-3-3-2-3.5-2-3.5 0-2.5 1-1.5-0.5 0.5-2 0-3-2-2.5 1-1.5 1.5-1.5 1 0-1 1-1.5 2.5-1 2-2-0.5 0.5-1 0.5-2.5-1-3.5-0.5-2 1-0.5 1.5-1.5 1.5 0.5 1.5 0.5 0-2 0-1.5 1-3.5 1-3.5-2-3-1.5-3.5 0.5-3.5 0-3.5 1-4-0.5-3.5-1-3.5-2.5-3-1-2-1-1-1-0.5-1.5-0.5-2 0-1 0 1-1.5 1-1 3.5-1 1 0 2.5-2-0.5-2.5-0.5-3.5-2-3.5 0.5-2 0-2 2.5-2.5 3-1-1-1-0.5 0-1-1.5-1-0.5-3 0-2-1-1.5-1 0.5-3 1.5-2 2-1.5 3.5-1.5 M1151 850l-0.5-1-0.5-1.5-2-3-2-2-2.5-2-1.5-3-1.5-3-1 0.5-2.5 0-3.5 0.5-3.5 0.5-3 1-2-0.5-2.5 1-3 2-1 3.5 0 3.5-2 3-2.5 2-2.5 2.5-3 2.5-3-1-3-2-3-1-3.5-1.5-1-3.5-3.5-1-1-1 0.5-0.5-1 2-1 1-3.5 1-2.5 0.5-2.5 0-1.5-2-1.5-1-2-1-2-1.5-3-2-3-2.5 0-1.5 1.5-3.5-0.5-3 2-3 3-2 3-2 3.5 0.5 3.5-1 2.5-3-0.5-1.5 1.5 0 1.5-0.5-1 0.5 1 0 1-1-0.5 2.5 0 3.5 1.5 2 1.5 0.5 2.5-0.5-0.5-2.5 1.5-3 0-1.5 0-2 1-0.5 2.5-1.5 3-0.5 3-2 1.5-2 2.5 0 3 1 2 1 2.5 1.5 3.5 0.5 3 1.5 2.5-0.5 1.5-0.5 0.5 1.5 2 1.5-1 0 2.5-1 3.5 0.5 3.5-0.5 3.5 1 3.5 2 2 2 0.5-1 1-2 1-1 1 0.5 2-0.5 0.5-1.5-1-1 0.5 0 1.5 0.5 2.5-0.5 4-0.5 3.5 0 3.5 1 3.5-1.5 2-1 2-0.5 2.5-2.5 3-1 2.5-1 2.5 1.5 1.5 2 3 0.5 3.5-0.5 3.5-1.5 3.5 0 3-1 3-0.5-1 1.5-2 1 1 0.5-0.5-0.5-2.5-1-2-2-3.5-1.5-3.5-1-3-1.5-3.5-1.5-3.5 0.5-3 1-1.5-0.5-3 0-2-1-3-1.5-3-2.5-1.5-3.5-2.5-3-2-2.5-3.5-2-2.5-2.5-2-2.5-2 0.5-1.5-1-2.5-0.5 1-0.5-0.5-0.5-0.5 0.5-3.5-0.5-2-2.5-3-2.5 0-2.5-0.5-2-2.5-3-2 0-0.5-1-1-3-2.5-1-1-1-1.5 0-2 2-3.5 0.5-2.5-1.5-2.5 0.5 0 1 0 2 0-1.5 0-1-4 0.5-3.5-0.5-3.5 0-3.5-0.5-3.5-2-2-1-2.5-3-2.5-2.5-2.5-2.5-1.5-3-2.5-1-2.5-1.5-2.5-2.5-1.5-1 0-1-0.5 0-0.5 1 1.5 0 1.5 0.5 1 2.5 1.5 3.5 0.5 3.5 2.5 3 2.5 2.5 2 3 1 3-1 2.5 1.5 3-0.5 2.5-2 1-1 2 0 0.5 1.5 0.5 1 1 1 2.5 0 2-1 2.5 M1049 865l 2-0.5 2-1.5 2-2 1-2 1-1.5 2-1.5 2.5-1.5 2.5-2.5 2-2.5 3.5-1 2.5-2.5 3.5-2 1.5-2 2-3 1.5-2.5 2.5-2 1.5 0.5 3-1.5 2.5-1 2-2 1.5-3.5 0.5-2 1.5-3 0-1.5 3 0 3.5-2 3.5 0 3.5 0 3.5 2 2.5 2.5 2 2.5 0 2.5-0.5 2.5 1.5 1.5 2 1 0-0.5 0.5-0.5 0.5 0 1-0.5 0.5-2 1.5 1-0.5 0.5-3-1.5-3.5-0.5-3 1-3.5 0-2.5 0.5-3 1.5-2.5 3-2.5 3-1 1.5-1.5 2 0 2.5 2.5 1 2.5 1.5 3.5 1.5 0.5 1 0 1.5 1 3 1.5 2.5 2.5 1 3.5 0 1-0.5-1 2-2.5 2.5-0.5 3.5-2.5 3-1 0.5-2.5 1-1.5 0-1.5 1.5-2.5 1 1.5-1 1.5 1 0.5 0.5-2-1.5 0-3.5-0.5-3.5-1.5-1.5-0.5 0 1 0 2.5-1 2.5 0 2.5-1 1.5-3 0.5-4 3-1.5 2.5-2 0-2 0.5 0.5 3 2.5 1.5 1 1.5 0.5 1.5 0 1 0.5 1 0.5 2 0 2.5-2 1.5-1.5 1 0.5 0.5-2 1-1 3 0 2 1.5 2-0.5 2-1.5 3.5-1 3-2.5 3.5-0.5 4-0.5 3.5-0.5 3.5-0.5 3.5 1.5 3 1.5 2.5 2 1 1-1 2-2 1 1 0.5 1 2.5 1.5 0 2.5-1.5 1-2.5 0-2.5 0-0.5 0.5-1 2.5 0.5 1 1 0.5 0.5-0.5 0 1-2 1-2 1-3 0-2.5 0.5-1.5 2-2 3-1.5 0.5-0.5 0.5 2 1.5 1-1.5 2 0.5 2 3 0 2.5-0.5 1.5 1 1-2-0.5-1.5 0.5-1 0-1.5 0-1-1 0 0.5 0-1-2.5-1-3-1.5-1.5-2.5-2.5-0.5-1.5 2 1.5 0 2.5 1.5 0.5-1 1-3.5 1 1 2.5-2 2-3 0.5-1.5 0-2-3-2-2.5-3-0.5 0 0.5-0.5-2 2.5-2.5 2.5-2.5 2-3 3.5-0.5 3.5-1.5 2.5-0.5 3.5 0 2 1 1.5-2 0-3.5 0.5-3.5-0.5-3 0.5-2.5 2-1.5 3 0 2.5 2 1 3-2.5 1-1 3-0.5 4 1 3.5 1.5 3 1.5 3.5-1.5 1.5-2 1.5-0.5 2-2.5 0.5-0.5 3 M927 801l-2 0-0.5-1-1-1.5-1.5-3 2.5 0.5 1.5-1 1.5 1 0 0.5 1 1.5-0.5-1.5 0.5-2 2.5 0.5 2.5 0.5 2.5 2 3.5 1.5 3 1.5 3.5 0.5 2.5 1.5 2 1 2 1.5 1.5-0.5 2.5-2 2 0.5 1-1-0.5-1.5 0-0.5 2-1.5 3-2 3-2 2 1 0 3.5 1.5 3.5 1 3 1.5 3-1 3 0 1 2.5 2 3.5 1.5 2 0.5 3.5 1 3 2 3 2 3 0.5 1.5 0.5-2-1.5-1.5 0-3.5 1-3 1.5 1-1 0-2.5 0.5-2.5-1.5-3 3.5-1.5 2.5-2.5 1-0.5 0 0.5-1-1 0.5-2-1-2-2.5-1-3.5 0-3-1.5-2.5 0-2.5-1.5-2-0.5-2-1-3.5 0-1.5-0.5-2 0-1 2 0.5 0.5 2-1 0.5 0.5 0.5 0.5-3 1-1.5-0.5 0-0.5-0.5-2-2-1-1.5 1-1.5-1-1-1-0.5-2.5-2.5 0.5-2 1-2 0.5-2 0.5-1.5 1.5-1 0.5 0.5 2-1 0-2.5-2.5-3-0.5-1-0.5-0.5 0-3 0.5-1.5 1-2.5 1.5-1.5 1 0 2-1 2-1.5 2-1.5 1-2.5 0.5-2 1.5 0.5 0.5 1-1-1.5 1.5-2 1-0.5-0.5-2 0-3-0.5-1-0.5-2-3-0.5 0.5-1.5-2.5 0-2.5 0.5-3.5 2.5-2.5 2-2.5 3-1.5 1.5 1.5 3 2 1.5 0.5 1.5 2 3 2 2 2.5 3.5 0.5 2-2 2.5-2 3.5 0 2-2.5 0.5-1 2.5-0.5 1.5 1 0 0.5 1 2.5-0.5-0.5-2-1-1.5 0.5-1.5 3-2 2-2 1.5-1 2 1.5 3.5-0.5 3-2 3 0 1 2 0 0.5-1 M914 828l 1-0.5 2.5 0.5 2.5-2.5 3-1-1-0.5 1-1 1.5-0.5 3.5 0 2.5-2.5 2-2.5 2-3 1.5-3 1.5-1 1-2 0.5-2.5 2.5-0.5 1.5 1 3.5 0.5 2.5-1 1-3.5 2-0.5 0.5 0 1.5 1 1.5 0.5-0.5-2 0.5-1.5 2.5-0.5 2-1.5 3.5-1.5 3 1.5 3.5-1 3.5-0.5-1 0-2-1-2.5 1 0.5 0.5 1 1.5 1.5 2 0.5-1 2 2.5 1.5 0 1 0.5 2 0 2.5-1 2 0.5 2-0.5 0.5-1.5-1-1.5 1-3.5-1.5 2-1-0.5-1.5-0.5-3.5 1.5-1.5 3-2 1 0 1-1.5 1.5-1 1.5-0.5 0.5-1 1 0 3.5-1.5 3-1 3-1.5 0.5-2.5-2-3 0 1-1 2.5 0.5 3-0.5 3 0 2.5 1 1.5 1 3 1 3.5 0.5 3 0 3.5 1 3.5 0.5 3.5 0 3 1 1.5 0 1 0 1.5-0.5 0-2 0.5 1 2.5 0 1 0.5-2.5-0.5-2 0.5-2.5 0.5-1.5 2.5-1 3-2 3-3-1.5-0.5-3.5-0.5-3.5 0.5-2 1.5-1 2-2 1-0.5-2 1.5-3 1.5 0.5 3-0.5-0.5-3 0-3.5 0.5-2.5 2-2.5 1.5-3.5 0 0.5-1 0.5-3 0-3.5-1.5-2-1 1.5-2 0-2.5-1-2.5 0-2-0.5-3.5 1-3.5 0-3 0.5-3 0-1 1-2.5 0-2 1-3 1-3 1.5-3.5 0.5-3.5-1.5-2-3-1.5-2.5-0.5 1 0.5 2 0 2 1-3.5-1.5-2.5-1-3-1-3.5 0.5-3 3-2.5 3-1.5 3 0.5 2.5 0 1.5 0.5 2.5-1 3.5 0.5 2 1 M890 794l 2 0-0.5 2.5-1.5 3-0.5 3.5-0.5 3.5-0.5 3.5 1.5 2.5 0.5 0.5 1.5 1.5 0.5 0-0.5 1.5-0.5 2.5 1.5 2 0-0.5-2 0.5-2.5-2.5-1-1.5 0.5-0.5 2 2.5 3 0 2.5 1 2.5 2 2.5 3 0 1.5-2 2.5 1 1 0.5-2 1.5-2.5 0-2 0.5-1 1.5-1 2 0 1 1.5 3.5 0.5 2.5-2 3-2 3-2 3-0.5 3.5-1 2-1 1.5-2 2.5-1.5 3-1.5 2.5-1.5 3 0 3-0.5 1 0.5-1-1 1-1.5 1.5-1.5 3-2 2 1 2 1 1.5-0.5 1.5-3.5 3.5-1 3.5 0 3-0.5 3.5 1 3 0 1.5 0.5 3.5 0 3.5 0.5 3 2 3.5 1 3.5 0 3 1.5 2 0 3.5-1 3 2-2 0.5-2.5-1.5-3-0.5-3-1-3.5-1-3-1-3 0.5-2-1-3-1.5-3.5 0-3.5 0-3 1-3.5-1-3-0.5-3.5-0.5-3.5 0.5 0 2.5 1 0 0 2-2 0.5-1.5 0 0.5 2-0.5 3.5 1 2.5-1.5 2-1 3.5-1 3.5-1 2.5-0.5 1.5 0 1.5 2 1.5-0.5 1.5 0.5 0-1 0.5 0 1.5-1.5-0.5-2-2.5 0-3-3-2-2 0.5-3.5 0.5-2.5 1.5-2.5 2.5 0 0.5-1-1.5-1.5 0-3.5-0.5-3.5 0-2.5-0.5-3.5-1.5-3-0.5-2.5-2-3-2-1.5 0-1.5 1.5-1.5 0.5-1.5-1 2-1 1.5 0.5-0.5 0.5-0.5-2-1.5-0.5-1.5-2.5-1.5-3-3.5-1.5-1.5-1.5-2.5-2.5-2-1.5-2-2.5 1.5-3 2-3 2-1.5 2-0.5 2.5-1.5 3.5 0.5 2.5 1 3 0.5 3 2 M946 804l 2.5 0.5 1 0.5 2.5 1-2.5 0-2 1.5-0.5-1-1 1-3 0-1.5 1-3 1.5-3.5 0-3.5 1.5-2 0-1 3-1.5 2.5 1.5 2.5 2.5 2 1 3 0 0.5 2.5 0.5 1-1 0.5 0-0.5 1.5 1 0 1.5 1.5 3.5-1 2.5-0.5 3.5 1 1.5 2 1.5 1 0-2-0.5-3.5 0.5-3.5 1.5-2.5 0.5-0.5 1.5-1.5 3 2 3 1.5 2.5 1 1.5 0.5 1 3.5-1.5 3-2.5 2.5-3.5 1-2 2.5-2.5 0-3 0-2.5-0.5-3.5 0.5-3 0-2 0-2.5-0.5-2.5 0-2.5-2.5-3-1.5-3-1.5-3.5 0.5-0.5 0.5-1.5 1-2 0.5-3.5-1-2-3-1.5-3-2-2.5-1-1.5-2.5-2-3.5-0.5-3 0.5-2.5 0.5-3 0-2.5 1-1.5 2.5 0.5 2 3 1.5 3.5 0 0.5-1.5 1.5 1.5 2.5 1.5 1.5 0 3-1.5 1.5-2 1.5-3.5 3-1.5 1.5-0.5 2 1.5 0.5 2 0 3 0-1-2-2.5 0-1 3-1 2 1.5 0.5 1.5 2.5-2.5 1.5-3 2.5-2.5 3.5-1 0-0.5 0 1.5-1.5 2-0.5 1-1 1.5 0.5-1 3-1 1-1-1-2.5 0.5 0 2.5-1.5 2 0 2-0.5 0-3 1.5-1.5 3-1.5 3.5-0.5 3.5 1.5 3 0 3-0.5 3.5-0.5 1-2 2.5-1 1-1 2.5-0.5 3.5 0 2 1.5 3 2 3.5 0 3 0 3.5 0.5 2.5 2 1.5 0 1.5 2 3.5 1 0.5 0.5 0.5-0.5 1.5-1.5 2.5-0.5 3-2 1.5-2 1-0.5 2-2.5-0.5-1 0.5-2 2-1 2.5-1 1 2.5 1 3-1.5 2.5 0 3.5-2.5 2.5-3 2 M622 797l 0 1.5-2 1.5 1 2.5 1 2.5-1.5 2 1 2.5 0 3.5 2.5 3 2-0.5 2-0.5 3 0.5 3-2-0.5-3.5 0.5-1 0.5 0-1.5 0-3 1.5-1.5 2 1 3.5 0.5 3.5 1 3 2.5 2.5 1.5-2 1-3.5 2-2.5 1.5-3 2-2.5 3-1.5 3.5-0.5 1-2.5 1 0.5 0-0.5 2-2-0.5-3-0.5-3-2-1.5 0-1-2-3-2.5 0.5-1.5 0.5-2 2.5 1 3.5 0.5 3-0.5-1.5-1.5-1.5-0.5-2 0.5-3 3-2 1.5-1 1-2.5 0.5 1.5 1 0 0.5 1 2 2 1 0.5-0.5 2.5 1-0.5 1-2.5 1-3.5 1-1 1 1 1 0 3.5 1 3.5 0.5 0 0.5-0.5 1 1 1 0.5-0.5 1.5-0.5-1.5 0.5-0.5 0-0.5-1-2.5 0-0.5 1-1.5 1-0.5-1-2.5 0.5-1.5 0.5-1.5 0.5-3 2.5-2.5 2-3-1-2.5-0.5-2.5-0.5-2.5-0.5-2.5 2.5-1 3.5-1 3.5-2 2.5 0.5 1-1.5 0.5 0-1.5 1-2 2.5-2.5 1.5-3 2.5-2.5 1.5-3 1.5-1 0-1.5 0-1.5 2.5-1 2 1 3.5 1 3.5-0.5 3.5 0 3.5 0.5 3.5 1 3 1 0.5 0-1.5 1-2.5 2-1.5 3 1 3.5 0.5 0.5 1.5 0 0-3 2.5-1.5 2.5-2 2.5-3 2-3 1.5-1 2.5-0.5 0 2 0.5 0.5-0.5 1.5 2.5 2.5 1.5 3 2 3 0.5 3.5-2 3-3.5 0-2 1-1 1.5-0.5-0.5-2 0-2-2.5-0.5-1.5 1.5-1-1-0.5-0.5-1-2-2-2-0.5-2 0.5-2 0.5 0 3.5-1.5 3-0.5 3.5-2.5 2.5-1 3.5 M674 793l-1.5-0.5-1.5-1-3-1.5-3 0.5-1 2-3 1.5-2 1.5-3 1.5-3 1-1 0.5-0.5 0-2 2-3 1.5-3 1.5-3.5-0.5-3-1.5-0.5 3 2.5 2.5-1 1.5 0.5 2 0.5 3 2.5 2 2.5 2.5 1.5 1.5 2.5 2.5 3 1.5 3 2 1.5 1.5 2 3 3 1 3.5 1.5 3.5-0.5 3-0.5 3.5-0.5 0-0.5-0.5-1-0.5 0-0.5 2-1 1.5-2 0.5-1 0 2 0 2.5-0.5 0.5-0.5-0.5 1.5-2.5-0.5 1-0.5 1.5-1.5 2.5-2.5 2-3 1-0.5 2 0.5 3.5 0 2.5 2 2.5 3 2.5 2.5 1 1 2-2 1.5-1.5 2-0.5 1-0.5-1-0.5-1-1-0.5 1-2.5-2 0-2.5-2.5-2.5-1.5 0-1.5 1-0.5 2.5-1 2.5-1.5-3-1.5-3-3-2-2-1.5-2-1.5-2.5-0.5-1.5-0.5-2 1.5-3.5 0.5-2 1.5-3 0.5-2.5 1.5-2 2.5-3.5 1-3 1.5-3.5-1-3 0-2-1.5 0-2-1.5-0.5 1-2.5 0-1 0.5-1.5 0.5-3.5 1-1.5-1-1.5-2-2.5-0.5-1.5-1-1 0 1 2 0.5 2.5 0 1 0.5 1-1.5 2.5-2 1.5-3 3.5-1 2.5 2 0.5 2.5 2 2.5 2.5 3 2.5 2.5 0 0.5 1.5 2 1.5 1.5 1 3.5 1 3.5 1.5 0.5 1.5-1.5 3 0.5 3 1 2.5-1.5 3-2.5 3-0.5 2.5-0.5 3.5-0.5 1 1 2 1 1-0.5 1.5 0 2 1.5 3.5 0 1.5 1.5 0 1.5 0 3-1 2 0 0.5 1-3 0-2.5-1.5 0.5-2.5-2.5-3-2-3 1.5-3-2-2.5-1-3.5 1 M673 804l 2 0.5-2-2-3-1-2.5-0.5-3.5-0.5-2.5-2.5-1.5-0.5-2.5 0-0.5-1-1-2.5-1.5 1.5-2 3-2.5 2.5-1 3.5-2 2.5-2 2.5-1.5 2.5 3 0 2 1 0.5 0 0-1-2 0-1 1.5 1 0 0 1 0.5 1 0-0.5 1.5 2 0.5 0.5 1 0.5 0.5-0.5-2 0 1 1.5-0.5 0 0-3-1-3.5-1.5-2.5-1.5-3-2-3-2-2.5-1-2.5 0-1.5 1-0.5 0.5 1 0 2.5 1 3.5 1 3 1.5 2 2.5 2.5 2.5 1.5 1.5 3.5 0.5 2.5 0.5 0 0.5 0.5-3-2-1.5 0-1.5 0 3.5-0.5 3.5 0 1 1.5 0.5 2-0.5 2.5-1 0.5 3 1.5 2.5 2.5 3.5 0 2.5-1.5 2.5-2.5 1.5-2 2-1 2-2.5 2-1.5 0-2 1.5-2 3.5-1.5 3-1.5 2.5-2.5 1-2 1.5-1 2-3 3-1.5 3-2 1 0.5 2.5-1 1 2 1 0.5 1-1 1.5-0.5 1 2 1 3 0 1.5-1.5 1-2 1-3 2-2 2-0.5 3-0.5 2-1 1.5 1.5 1 0.5 1.5 2 2.5-1.5 0.5-1.5 1-3 1-3.5 0.5 0 2-1.5 1.5 0 3.5-1 2-0.5 2-2 0.5-3.5 1-2.5 1.5-2.5 2.5-3 2-1.5 3-1-0.5-0.5-2.5-0.5-1.5 0-1.5 1.5-1.5 2-1 2.5-1 1.5-1 0-1-1-0.5 0.5 0.5 0.5-1.5 0.5-3.5 0.5-3.5 0.5-3 1.5-3 3-1.5 1-3 1.5-1.5 1-1.5 1 0 2-2-1.5 1-2 0-3 0-1-1.5-2 0.5-3.5 1-2 0-3 1.5 M962 893l-1.5-1.5-3-1.5-3.5 0-1 0.5 0.5-1.5-1 0.5-1 0-2-3-1.5-1-3.5 0-3 1.5-2 0.5 0.5 1.5 1.5 2.5-2.5 1-0.5 1-0.5 1.5-0.5 2-0.5 1.5-2.5 0-3.5 1.5-1 1.5-1 2-1.5 0.5-1 3.5-2 2.5-2.5 2.5-2 2.5-1 1.5-2.5 2.5-2 3 2 3 0 4-0.5 1.5-1 0.5-1 1 0.5 1 2 0.5 2-0.5 0.5 0-1 0.5-2-3-2.5 1-3 2-1 1.5-0.5 2.5-0.5 1-0.5 1 1-0.5-0.5-3-3-1.5-1-3.5-2.5-1-1-0.5 0.5 1 0 1-1.5 0-2.5 0-0.5 0 0 3-1 1.5 2-0.5-0.5 0.5 0 1.5 1 2.5 1 1.5 3-0.5 2 0 1.5 0 0.5 0.5 0-2-1.5-3-1-3-1.5 0-1.5 1-3 2-1.5 1.5-2-0.5 1 3.5-0.5 2.5-0.5 3.5 1 1.5 0 2.5 0 1-0.5 0.5 1-0.5 1.5-2 2.5-2.5 2-2 1.5-1 1-1.5-2-3.5 0.5-3 0-2.5-2 0-1.5 1-1.5 0 0-0.5-2-2-0.5-3.5 1-3.5 0.5-1.5 2-1.5 3-2 2-1 2.5-3 2.5-1 3 0.5 3 1 3.5 0.5 1.5 0.5 1-0.5 1-1 3 0 3-1.5 1.5-2.5 0-1.5-1 1 1.5 0 2 0.5 2 1 2 2.5 2.5-0.5 1.5-1 1-1 1.5 0.5 3.5 1 2.5 1 1 3.5 3 2 3.5 1 1.5-2.5 0-2-3-1.5-2.5-2-1-1.5-2.5-3-2.5-2-2-3-0.5-3.5-1-3-1.5-3.5-2-2.5-2-2.5-2-3-0.5-3.5-1.5-3-2.5-2-1 0-1.5 0-1 1-0.5 2-0.5 3.5 1.5 1 0.5 0-1.5 0-3.5-0.5-3-1-2.5 1.5-3.5 1-2.5-0.5-3-1-2-1-2.5-0.5-0.5 2 1 3 0 2-0.5-0.5-1-1-0.5 1.5-1.5 0.5-1 2-0.5 1 M931 865l 0 1-1 1.5-3.5 1.5-2 1-3 0.5-2 2-1.5 2.5-1-1 0.5 0.5-0.5 1 1.5 1 1 1-0.5 3 0 3-1 3.5-3 2-3 2-2.5 2-1.5 3-1.5 0-1.5-0.5-1 0 1 0.5 1 2 0.5 3-1 1.5-1 0.5-1.5 2 0.5 3-0.5 2 1 1 1.5 0.5 0.5 1.5-3 0.5-2.5-1-1.5 0-1-2 1.5 0.5 0 0.5 0.5-0.5 0-3 1-3 0-3.5 1-3 2.5-3 2-2.5 1.5-3 0.5-0.5 1.5 0 0.5-2 0 3 0 1.5-1 0-1 2-1 2 1 3-0.5 2 2 0 3.5-0.5 2.5-0.5 2.5 0 3.5 1.5 2 2 2.5 2.5 1 1 0.5-2 0-2 0.5-2.5 2.5-2.5 3.5-0.5 3.5-1 3.5 0.5 3 2 2 2.5 1.5 3 2 3 3.5 1.5 1.5-1.5 2-0.5 0-2-1-0.5-1-1-2 0-1.5 0 1.5-1.5 1.5 0 2 0-1.5 1.5 1.5 2 2 2.5 2.5 2.5 1 2 2.5 1 3.5 0.5 0.5-2 3-2 1.5 0.5 3.5 1 3.5 0.5-1-3-0.5-3-1-3.5-1-2.5-2-2.5-1.5-3 0.5-1 2-0.5 0-2.5 0-1.5 0.5-2.5 2.5-2.5 2.5-2 0-0.5 2 0 0.5-0.5-1.5-1.5 0.5-2.5 1-2.5 0-1-0.5-3.5 0-3.5-1-2.5-2.5-1.5-2-2-1-2-2-3-1.5-1.5-2-2-1 0 0 1.5-0.5 1.5-1 1 0 3-0.5 3.5-0.5 2.5-1.5 3 0.5-1-2-2-3-2.5-2.5-0.5-2-2.5 0-1-0.5-0.5-1 2 0 1-1 1.5-0.5-1-0.5-2.5-2-1-1.5 0.5-3 1.5-3 1-2 3-2.5 2.5-0.5 3 1 3.5-1.5 3-1 2.5-2 1.5-1.5 0.5-1 1.5-1 1.5-2-1.5-3-1.5-3.5 0.5-3.5 0.5-3 1.5-3.5 1.5-1.5 3.5-2 0.5-2 2.5-2 3-2.5 1-3.5 0.5-2 3 M878 968l 0-1.5 0.5-1 0.5-3 2.5-1.5 3-1.5 3-0.5 3 1.5 0.5-1.5-1-0.5-0.5-0.5-1 0.5 0.5 3-0.5 1-1.5 0.5-0.5-2-0.5-1.5 1 1.5 0 1 2-0.5 1-3 0-3.5 2-2.5 2-3-1.5-3 0-3.5 0.5-0.5 1.5-1.5 2.5-2.5 0.5-2.5 2.5-2.5 3.5-1.5 0.5-3.5 0.5 0 0.5-2 2-2.5 1.5 1 0 1-2 1.5-1 0.5 0.5-1.5 0-3-2-2 0-1-1.5-0.5-2 0-2.5-2.5-1-1.5-2 0.5-0.5-1 0-0.5 2 0 1-1-1-0.5 1 1 0-3 1.5-3 0.5-3.5-0.5-3 0.5-3.5 0-2.5 1-3 0.5-2.5 1.5-0.5 3.5-1.5 3.5-0.5 3 1.5 3.5-0.5 2.5 1.5 2-1 1-1 2.5 0 2.5 1.5 0.5 3 0 3.5-1 3.5-2.5 0-3.5 0-3.5 0-3 1.5-3.5 0-1.5 1 0.5-1-1-1.5-1.5 0-1-3-0.5-0.5 1 0-0.5 0 1 2 1.5 0 1.5-1.5-1-3 0-2.5-1.5 0-3.5 0.5-3.5-1-3.5-0.5-1.5-1.5 0 1-0.5-1-3.5 0-2.5 0.5-1 2-0.5 1.5-0.5 1 2 2.5 0.5 2.5 0 1.5-1.5 0 0.5 1.5 0 2 0 2.5-1 3.5 0 3.5-1.5 3-1 3.5-2.5 2.5-0.5 3.5-2 3-1.5 3-0.5 2.5 1 3 0 2.5-1.5 1-0.5-1 1 1.5-0.5 2.5-1.5 0.5-3 1.5-2 1.5-1 2.5-1 2.5-0.5 2.5-0.5 2.5 2 0.5 0-1 2-1.5 2.5-0.5 3-1.5 3.5-0.5 3.5-0.5 2.5 0 3 1.5 2 2.5 2.5 0.5 1.5 2 2-1 1-1.5 1-1 1 0 3-1 0.5-2.5 0.5-2.5 1 0-0.5 1-2.5 0.5-3.5 1.5-1.5 0.5 1.5-1-1.5 0.5-2.5 0-0.5 3-1.5 3-3 2-3 1.5-3 1.5-3.5 0.5-1.5 0-0.5-0.5-2.5-2 1-1.5 2-0.5 3.5-0.5 0-3.5 M895 909l 2.5 0 3-0.5 3-1 2-0.5 3.5 1 2.5 2 2.5 1 1-2 0.5-2 1-3-1-3.5 2.5-2.5 0.5-2 2.5 1 3.5 1 3 2 2.5 2 0 0.5 2-0.5 0-2.5-1-2.5-0.5-3.5-0.5-3.5-1.5-2-1-0.5-2-0.5 1 0 3 0.5 2 3-0.5 3-1 0.5 0 0.5 3 1.5 3.5 0 2.5 2 3.5 1 3.5 0 1.5 0.5 2.5-0.5 2.5 2 2.5 2.5 3.5 1.5 2.5-1.5 2.5 0 3-0.5 2.5-0.5 1 1 0.5 2 0-1.5-2 0.5-1-0.5-2-2-1-2 0.5-0.5-1 1.5-2.5 0-1 1 0 0.5-3.5-0.5-1.5-1.5-3 0-3.5-0.5-3.5-1-1-0.5-1.5-0.5-1.5-2.5-0.5-2 0.5 0.5 1 1.5-0.5 1.5 0 2.5-1 0.5-0.5 1-0.5 2.5-3 2-0.5 3-3.5 0.5-2.5 1.5-1 3.5-0.5 2-1.5 1.5-2-1-3.5 0-3-2-2-2.5-2.5-2 0.5-0.5-2.5-1.5-1.5-2-3-2-2.5-2.5 0-3.5-2 0-2 1.5-3-1-3-1-3-2.5 0-3.5 0.5-3 1-2 1.5 1 1.5 0.5 0.5 2-0.5 2 2 1 2 1.5 3.5 0.5 3.5 0.5 2 0 3-0.5 1 0 0.5 0-0.5 0.5-1-1.5-0.5-1.5-1.5-0.5 1.5-1 2.5-0.5 1.5-0.5 1.5-1.5 0-1 0.5 3 0 2.5 0 2 3 1.5 1.5 2 1 3.5 2 2.5 2 3 2.5 0 2-0.5 2.5-2 3-2 0.5 0.5 1.5-1 2.5-2.5-1-1.5-1.5-1-1.5-3-1.5-3-1.5-2-1.5-2 1.5-2 0.5-3-0.5-3.5-1-2 0-0.5 0.5-3.5 0-2-1.5-2-2-2.5 1.5-1.5 1-3 2 1.5 3 1.5 2.5 0.5 3.5 1 3.5 0.5 2-2 1-0.5 0.5-2.5 0-2-0.5-1 0.5 0.5 0 0.5-1 2-1 2.5-3 2-2 0.5-2 2.5-2 2-1.5 3-3 2.5 M648 960l-0.5 0 0.5-3 0.5-3 2 1.5 1 0.5 1-1 1.5-3 2-2 1.5-2 1.5-2.5-0.5-3-1-0.5-0.5-0.5 1.5-2.5 1-3-1-2 2-2 2-2-0.5-0.5-0.5 2.5 0 3-0.5 1.5 2 2 1.5 2 2 1.5 1.5 0 0-2-1-2.5-0.5-2-0.5-1 1.5-1 1-2.5-0.5-3-2.5-1.5-2.5-1-1.5 1 0-0.5 1.5 0 2-2.5 0.5-2.5-1.5-2.5-0.5 0.5-1 2-1 2-1 3-0.5 1 0 2.5 1.5 2.5-0.5 3-2 1.5-3 0.5-1-1-2.5-1 0-0.5-1.5 0-1 2.5-0.5 2.5 2.5 1 0.5 0 1 2 1 2.5 1.5 0.5-0.5 1.5-2-0.5-1 1.5 0 3 2.5 1 1.5 0 0 1-1 3 0.5 3 1.5 2.5 1 1 2.5 1 1.5 0.5 2-1 1.5-2.5 1-2 1.5-0.5-0.5-1.5-0.5-1.5-1-0.5 0-0.5 0.5 1 1-2 1.5-1.5 0-3-1-2-2.5-1-1-0.5 1.5-2.5 1.5-0.5-1-1 0 0.5 0 0.5 1-2.5-1-1 1-2.5-0.5-1.5-1 0.5-0.5-1-0.5-3-1.5-1-0.5-0.5-2.5 0.5 1.5-0.5 2 1.5 0.5 0-1-0.5 2.5 1 2 2 1 1-0.5-1.5-0.5-3-1-0.5-1-2-0.5-2.5 0-1 0.5 0.5 0.5-0.5 1.5 2-1.5 1.5-1 0 M639 919l 1 1 0.5 1-2 2 0.5 3 1 2 3 0.5 2 1-0.5 1.5 0 2 0.5-0.5-1.5 1-1.5 0.5-2.5 0.5-3 0-1 1-0.5 2.5 1 0.5-1-0.5 2-1.5 0.5 0.5 2.5 2 0.5-0.5-1-1-1 1-1 0.5-1.5-0.5 0.5 0 2.5 0.5 3 0.5 1-1.5 0.5-1.5 2.5-1.5 0-2.5 0.5-2-2.5 2-2 1-0.5 0.5 0.5-2.5 0.5-2.5 0-3 0-2 0-0.5-1-1-2-1.5-0.5-2 0-0.5-2.5 0-2-1.5 1.5-2 2 0.5-0.5 1.5 1.5 1 0 3 0.5 3-0.5 2 0.5 3 2.5-0.5 1.5-1.5 2-2 2.5 0.5 3 0.5-1.5 0.5 1.5 1-0.5 1 0.5 3 1 2.5 2 2.5 3 0.5 2 2 0.5 3-0.5 2-2.5 0.5 0.5 0.5 0.5 0 1.5 1 0.5-0.5 2 0.5 2.5-1.5 3 0 1 0-0.5-0.5 1 2-1-0.5-1 1-0.5-0.5-2.5-0.5-1.5 0-0.5-1 1 0-0.5-3-3-0.5-2 0-1 0.5-1-1-2-1.5 0.5 0 2 1 1 0-1.5 0 0.5 1.5 2.5 0 1-0.5 3 0 3 0.5 2-0.5-1.5 0 0 0.5 0-0.5-0.5-1.5 2-2.5 1-0.5 1 0-0.5-0.5 0-2.5 0-2.5 0-3-1.5 1.5-3 0-2 2-2.5 1-1-0.5-2.5-0.5 M761 964l 0-1 0.5 1.5 0.5 1.5-0.5 0.5 3.5 1 1.5 0.5 1 3 1.5 3 0.5 2.5 1 1 1.5-1 1.5-2 0.5 0 2 1 0.5 2-0.5 0 1.5 0 3.5-1 3.5 0.5 3.5 0.5 3 0.5 3-0.5 0-0.5 1-0.5 0.5-3 1.5-3 0-3 3-1.5 2-2.5 2.5 1 3 0.5 3-2-1.5-1.5-2-2 0-3 0-2.5-0.5-3.5 0-3.5 1-3 2-3 1-1-0.5-1.5-0.5-3.5 0-3.5 0-3 3.5 0.5 2 3.5 0.5 3.5 1 0.5 0.5 1 2 1-1-0.5-0.5 0-1 1 1-1.5-1.5-3-0.5-1-0.5 0 0-0.5-1.5-0.5-2-0.5 0-1.5-2.5-1 0 0.5-1 2-1-0.5-1 1 1 3.5-0.5 3.5-0.5 2.5-1.5-0.5 0.5 0.5 2.5-0.5 1-1.5 0-3.5-1-2-1.5-1.5-0.5-2.5-1-3.5-1-3-1-3-3-2-1-0.5 0.5 0.5-1 1.5-0.5-1-1-1.5 0.5 0-2 1 0-0.5 0.5-1.5-2 0.5-1 0.5-3 0-3 0-2 2-1.5 3-1 3.5-1 3-1.5 3.5-0.5 3.5-2 2-3.5 1-3 0.5-2-0.5 0-2 0.5-0.5 2.5-1 3.5 0 1.5 0.5 0 0.5 0.5 2 0.5-1 1-3-0.5-3.5 0-2.5 1-1.5 2.5 0 2 2 3.5 1.5 2 2.5 2 0 1 1.5 2.5 1 1.5-0.5 2.5 1.5 0.5-0.5 1 0.5 1 0 0.5-1.5-1.5-1.5-2-1.5-2-0.5 0.5 0.5 3.5-1 0.5-0.5-0.5-2 1 2 3 0.5 1.5 1 1.5 1.5 0.5 1.5 1-0.5-0.5 2.5-2 2 0 3.5 1.5 2.5 0 3 2 1 M824 956l 1.5-1.5-0.5-0.5-0.5-2.5-1.5-2-2-2.5-0.5-3.5-1-3.5 0.5-3.5-1.5-0.5-3 1-3.5 0.5-2 3 1.5 2 1.5 2 1 0.5 2.5 0 2 0 2 0 1.5 1 1.5 1 2.5 0.5 2 2-0.5 2.5-0.5 3 0 3.5-2.5 2.5-0.5 3.5 0 3.5 0 2.5 0.5 2.5 0.5 1 1.5-0.5 0.5-0.5-1.5-1.5 0 1 0 0.5 0 2-2 0.5-0.5 1.5-2.5 2-3 2-2 0-1-0.5-2.5 1-1.5 2.5-2 3-1.5 1.5 1-0.5 1.5-3 1-3.5 2.5-0.5 2.5 1 2 0 1-2 2-2.5 3.5-1 3.5-1-2-1.5-2.5-0.5 0-1-0.5-0.5-2.5-1-2-1-1-1-2 1 1-1.5-0.5-2-3-2.5-3.5-0.5-2-2-1.5-3 0-1.5-1-3-2.5-2-3-2-2-2-0.5-3.5-1-3.5-0.5-3.5 2.5-2 0.5-1 1.5 1.5 0-0.5 1 0 1.5-1 0.5-3.5 1.5-1.5 1-0.5 1 0-0.5 0.5-2 2 0 2 1 2.5 1 3.5 0.5 2.5 1.5 3 0 3.5-1.5 3.5-2 2.5-2 0-1.5 1-2.5 1.5-1 2.5-1.5 3.5-2 3-2 2-2.5 2-1.5 1.5-1.5 3-0.5 1.5 1 1-1 2-1 0-1-1-2.5 0.5-1.5-1-0.5-1-1 1-1.5-0.5-2.5-1.5-2-1-0.5 1-1.5 0-3.5 0-3.5-1-1-0.5-1-1.5-0.5-1-1 0 2.5-1.5 3-1.5 3-1 2-2.5 2-1.5-1-2.5 0.5-2-1-1 1-2 0-3.5-0.5-3.5 1-3-0.5-3 0.5-3.5-0.5-2 0-1.5-1-3.5 1-3 2-1 M810 906l-1.5-0.5-1-2-2 2-2.5 1-2.5 2-2.5 2-2 2.5-2 1-1 1-2.5 0.5-1-0.5-1-0.5-3.5 1-1-2-1-1-3-0.5-2 0-3.5 1-1.5-1.5 0-1.5 0.5-1-1.5 0-2 0.5-2.5 1 0 1-0.5 1-0.5 3.5-1 1.5 1.5 2 1.5 1 3.5 0 2.5-0.5 0.5-0.5 2 0.5 2.5 1 2.5 2.5 3 0 2.5 1.5-1.5 1.5-0.5-1.5-0.5-1.5 0-1.5 1.5-1 1.5 1 0 2.5 1 2 2.5 2.5 2.5 3 3 0.5 3.5 1.5 3 1 3.5-0.5 2-1.5 1.5-1 1.5-0.5 3.5 0.5 3.5 0.5 3 2.5 1.5 3 2 2.5 2.5 2.5 0 3-1 3-2 3-1.5 1.5 0.5-2.5 2.5-1.5 0 2.5-1 2.5 0.5 2.5 1.5 0.5 0.5-1-1 0.5 0-0.5 1 0 0 2.5-0.5 3.5 0 2 0 3-0.5 2-0.5 0-2.5 1-3.5 1-1 0-1-1-0.5 0.5 3-1 2.5 1.5 3.5 0.5 0 2.5-0.5 2 1 3-2-2-3-2-2 0-2 2-0.5 1-3.5 1.5-3-1-3.5-1-3-2-3.5-1.5-1-0.5-0.5 0 0 0.5 0.5 2.5 0 3.5 1 2 1.5 0.5 0.5 0-3 0-3.5 0-3.5 0-0.5-0.5-1.5-0.5 2-1 0.5 0 1 0 1.5 0.5 2-1-1.5-1.5-0.5-1.5-1.5 0.5-2-0.5-3 1-2.5 0-3-0.5-2 0-2 0-3-1.5-2.5 0.5 0-1-1 1-0.5 0.5 1 1 0.5-1.5 0.5-2.5 0.5-2-1-3-1.5-3 0-3.5 0.5-2 1-3 2-1.5 2.5-1.5 2 0 0.5-0.5 0-2-0.5-3 M706 939l 0.5 0.5 1 1 2 1.5 2 1.5 3.5 1 3 1.5 3 2 3 1.5 3 1.5 3 1.5 1.5 2 2 1.5 1.5 0.5 1.5 0 1-1.5 2.5-2 2-1 2.5-2 2-1.5 1-2 1.5-2-0.5-0.5 0-1.5-1.5-1.5 0-0.5 2 0.5 2.5 1.5 2.5 2.5 2.5 2 3 2.5 2.5-0.5 2 0 2 0 2.5-1 2.5-1 3.5 0 3-1.5 3-2.5 2-2.5 2-2 2.5 1 1.5 1 2 1.5 2 0.5 2.5 1 3 0 1.5-0.5 0.5-1 1.5 0.5 2 0.5 3 0.5 2.5 1.5 3 2 1.5 2.5 0.5 3 0.5 3 0 3.5-1.5 2.5-2 2-3.5 0.5-2 0-2 1-0.5 2-1 2.5-1.5 1.5-1.5 2.5-1.5 0.5-1.5 0-2 1-1 0.5-1.5 0.5-2 0-2.5 0-3.5-1-2.5-1-2-1.5-2-1.5-2-1.5-2.5-1-2-1.5-1-1.5-2 0-2 0.5-2 0-2.5 0-3 0.5-3.5 1-2 1-2 1.5-1.5 0.5 0 1.5-0.5 2.5-1 2.5-1 1.5-1 2.5-1.5 2-1 2.5-0.5 2.5-1 2-2.5 0-3-0.5-2-0.5-1.5-1-2-0.5-0.5 0-1 0-2-0.5-2-0.5-2 0-1.5 1-1.5 0-1.5 0-2 0-1.5-0.5 0.5-1.5-0.5-1-2-1-3-1.5-3.5-1-2-2.5-0.5-1.5-1-1 0.5 0 0-0.5 0.5-1 M767 986l 0 1.5-0.5 0.5-1 1-0.5 1 0 0.5 2.5-0.5 2.5 0.5 2.5 0 3-0.5 3 0.5 1.5 0.5 1.5 0.5 2.5-1 2.5-2.5 1-1.5 1.5 1 1.5 0.5 2 0 1 0 1-0.5 0.5-0.5 1.5-1 1.5-1 2-1 2-1 1.5-1 2.5-1.5 2.5-1.5 2-2 1.5-1 0.5-0.5 0.5-0.5 0.5-0.5 1.5 0 0.5-0.5 1.5-0.5-0.5-0.5-1.5-1-1.5-0.5-2-1-2-0.5-2.5 0.5-3-0.5-3.5 0-3.5-0.5-3-0.5-1.5-1-2-2-1-2 1-1 1-1 0-1 0-2.5 0-2 2-2 1.5-1.5 1.5-1 0.5-2 1-0.5 0-0.5 0.5 0.5 1.5 1.5 1 2 0.5-0.5 1-0.5 0 0.5 0.5-0.5-1-1.5-0.5-2 0-0.5-0.5-0.5-1.5-0.5-1.5-1.5-3-1-3 0.5-2.5 1-1.5 0 0-1.5-2 0.5-2.5 1-1.5 0.5-1.5 0-2 0.5-2.5 0-2 1-2 0.5-3.5 1-3 1.5-3.5 1-3 1.5-2 2.5-1.5 1-2.5 2-1 2.5-2 2.5-2 2.5-1.5 2.5-0.5 3 0.5 3 1.5 1 0.5 1-0.5 0.5-1.5 1-2 0.5-2-0.5-2.5-1.5-3-1-2-1.5-2-1-2-1-2.5-0.5-1 0.5-2 1-2 0.5-3 1.5-3 1.5-3.5-0.5-2.5 0-3.5 0-3.5 0.5-2 0-3-1.5-3-1-3.5-2-1-0.5 M918 830l 99.5 2"/>
<path stroke="#e377c2" d="M669 790l 0.5-180.5 124 0 M769 790l 0-180.5 M819 790l-0.5-167 M669 790l 398-0.5 0-58.5 M968 812l-0.5-81 M620 812l 417.5 0 M679 655l 50-0.5 M774 610l 44.5 8.5 30 31.5 M788 700l 179.5 6-127 10.5 M757 674l 210.5 32-129.5-15 M773 694l 194.5 12-165.5-14.5 M852 660l 115.5 46-130.5 15 M864 704l 103.5 2-196.5-0.5 M693 752l 187 4.5 M700 738l 308-4.5 M708 753l 350 12 M716 740l 248.5 4.5 M802 762l 96 0 M708 746l 359-12 M813 739l 123-2.5 M739 752l 166.5-12 M813 775l 173.5 4 M760 775l 275-11 M706 787l 231.5 5 M710 780l 294 10 M715 771l 249 16 M757 779l 257 14 M732 772l 242-13.5 M830 791l 228.5 8.5 M702 789l 281-4 M773 728l 217.5-3.5 M676 759l 344.5-17.5 M822 766l 162.5 5.5 M703 780l 260.5 5.5 M724 730l 217 12.5 M822 668l-1 0-0.5 0.5-0.5 0 0 0.5 0 1.5 0 2-1 2-0.5 2.5-1 1.5-1 2 2.5 1.5 3.5 2.5 1.5 3 3.5 0.5 2.5 2 3.5 2.5 2 3 1.5 2 0.5 3 1.5 1 1.5 0 0-0.5-0.5 0 0 1.5 0.5 1.5 0.5 2 0.5 1.5 0 3-1.5 0.5 0 2-1 0-1 0.5-0.5 1.5 0 1.5-0.5-1.5-2-0.5-1.5 0-2.5 1.5-1.5 1.5-2 1.5 2 2-0.5 0.5-0.5 1-0.5 1.5 0.5 0.5-1-0.5 1-2 2-1.5 3.5 0.5 3.5 0.5 3-1 2-1.5 1.5 1 0.5 1.5 1 2.5 1.5 2 1 2.5 2.5 2 2.5 2 1 1.5 1.5 0.5 2 0 1.5 0.5 3 2 2.5 3 3 3.5 2 3 0 2.5 0 2 0.5 3-0.5 1.5-2.5 1.5-2 0.5-1.5 0.5-1.5 1.5-1.5 3-0.5 1 2 0.5 1 1 1 0.5 1 0.5 2 0-0.5 1.5 0.5 1.5 1.5 1.5 1 1.5 0 2 1.5 1 0.5 1.5-0.5 2-1 0.5-1.5 0-3-0.5-4-2-3.5 1-4 0-3.5-1.5-3.5-2-1.5-2-1.5-2-1-2-2-2.5-3-3-2.5-3-2.5-2.5-2-3.5-0.5-4 0-3 0-3.5 1-3.5 0-2 0-3 0-4-0.5-4 0.5-4.5 0-4-0.5-3.5-1.5-4-1.5-4-1.5-2.5-2.5-2.5-1.5-2.5-1.5-1.5 0-1.5-1-2 0-3.5-1-3-1.5-3.5-1.5-4-1-3.5 0.5-3.5-1.5-2.5-2-3-1-2-2 0-1.5 0.5-0.5-0.5 1 0 1.5-1 0.5 0.5 2.5 1.5 0.5 2 2 1.5 1.5 2 1 1.5 0 1 1.5 0 0 1 0.5 2.5 0.5 1 M920 703l-0.5 3 0 4.5-0.5 3-2.5 2.5-2 2.5-2.5 0.5-2 0-1 0-2.5-0.5-3 0-0.5 1-0.5 1 0.5 0-0.5 2.5-1.5 3 0 3.5-0.5 2.5-1.5 3.5-1.5 2.5 1 2 1.5 0 2 2-2 1-0.5 2.5 0 1.5 0.5 1 0 0.5 0.5 1 0 2.5-2 4-2.5 3-3 2.5-4.5 0-4-0.5-3.5-1.5-2-0.5-2-0.5-1-1-1-0.5-1.5 2-0.5 1.5-0.5 4-1.5 2-2.5 0.5-3.5-0.5-0.5-1-2-1.5-1 0.5-1 3 1 2-0.5 3 0.5 2-0.5 3-1 1.5-0.5 1.5-0.5 0.5 0.5 0-2-1.5-3-2-1.5-1-0.5-1.5-2-1.5-2-0.5-1.5-1-3-3-1.5-2.5-2-3.5-2-1.5-1.5-1.5-2-1-2-1.5-2.5 0-2 0.5-3 2-3.5 2-2.5 1.5-3 3.5-3 2-2 2-2.5 2.5-1 3.5 1.5 1.5 1.5-1 1 0 0-0.5-0.5-0.5 2 0 0.5-1 0-0.5 3-2.5 4-0.5 3-1 4-1 3.5-2 3.5-0.5 4 1 4 0 4-1.5 2.5-1 2 0 3 0 2.5-1 3-3 3.5-2.5 3.5-2 2-2 1.5-2.5 2.5-2.5 3.5-2.5 3.5-1.5 2.5-0.5 1-1.5 1-1 1-3 1.5-3.5 1-4 2-3.5 1.5-4 1.5-3.5-0.5-4.5-0.5-4 0-4 2.5-3.5 1-2.5 3.5-1.5 4-1.5 3.5-1 4 1.5 3.5-1 4-1 3.5-2 2.5-3.5 3-1.5 1.5-1.5-0.5-1-1.5-1.5-2-1.5 0-1.5 0-2.5 1-1.5 1-0.5 0.5-0.5 0 0.5-0.5 0-0.5-1.5 1.5-1.5 0-2.5-1.5-2.5-1-1.5 M856 711l 0.5-2 2.5-2.5 2.5-2.5 2.5-2.5 2-1 0-0.5-1.5 0.5-2.5 0-0.5 1 1.5 1.5 1 2 1.5 4 2 3 1.5 1.5 1.5 2.5 1.5 2.5 1 3.5 1 2.5 0 4 0 4.5-0.5 3.5-1.5 3.5-0.5 3.5 0.5 1.5 2 3.5 1 3 2 2 0 3 1 1-0.5 2-1.5 4-1 2-1.5 1-1.5 0-1.5-0.5-0.5-2-1-0.5-1.5-0.5-2-1.5-1.5-1.5-1.5-1-0.5-2.5-1-2.5-2.5-0.5-2-0.5-1.5-1.5-1-2 0.5-2.5 1.5-2.5 1.5-2.5-1-2-2.5-1-2-0.5-1 0.5-2-1-1.5 0 0 0.5-2-0.5-2.5-1.5-2.5-1-1 0-1.5-1-3.5-1-4-0.5-3.5 1-3-0.5-4 1-2.5 0.5-2 0-1.5 0-1 2 1 0.5-0.5 0.5-2 2-2 1-1.5 1-2 0.5-2.5 0.5-3 1-3 1.5-3 1.5-2 1.5-1.5-1-2-2.5-2.5-0.5-2-2-2.5-1.5-1-1-2.5 0.5-1.5 0 0 2 1.5 1.5 2.5 2 2.5 1 1.5 0 1 0.5-1 1.5 0 0.5 0-0.5 1.5-1.5 3-2 2-2.5 2.5-2 3-2.5 3-1 2.5-2 1.5-1.5 1.5-2 2-0.5 3-0.5 3-0.5 3.5-1 2.5-1.5 1.5-1 0.5-1 0-2 0.5 0 3 0.5 1.5 1.5-0.5 0-0.5-1.5 1.5-2.5 0.5-1 1-1-0.5-0.5 0-0.5 1.5 1.5 1.5 0 3 0 3.5 0 4 0.5 4-1 4 1 4 1 3.5 0 4 1.5 4 0.5 4 0 4.5 0 3.5 1 2.5 0.5 2.5 1 4-0.5 4-1 3.5 0 4-1 3.5-2 2.5-3.5 0.5-1 M881 725l 0.5-4.5-1.5-2-1 0.5-0.5-0.5 1-0.5 0.5-1.5-0.5-2.5-1-4 1-4 1.5-3.5 2-3 1-2 0.5-2-1-3-1.5-3.5-2-3-1-2.5-2-1.5-2-0.5-0.5 1-1 1-3.5 1-4 1-4 0.5-4 0-3 2-4 0-4 1.5-3 1.5-2.5 3.5-2.5 3-4 1.5-4-1-2-2.5-1.5-3-2.5 0-3 0-0.5 0-2.5 0 0-2-2-1.5-0.5 0-1.5-0.5 0.5 0.5 0 1.5 0 1-1 2 0 2-0.5 1.5-1.5 1-2 0-3-0.5-3-0.5-2-2.5-2-3.5-2-3.5-0.5-4-2-2.5-2-3.5-2-2-2-1-2-1-4-1.5-2.5-1.5-1.5-1-1-2.5-1.5-1.5-2-1-3-1-2-3 3 1.5 2-0.5 2 0 3.5 1.5 3.5 2 2 1.5 2.5 2.5 2 1 2.5 1 1.5-0.5 2.5 0 3.5 2 3 1.5 3 2 2.5 1 3 1.5 3.5 2 3 3 2.5 3 1.5 1.5 1.5 0.5 2 0.5 2.5 1 4 0 4 1.5 4 0 3.5-2.5 2.5-2.5 2.5-3.5 2.5-3 2.5-2 3-1.5 2.5-2 1.5-2 1.5-0.5 3-1 2-2.5 2-0.5 1.5-0.5 0.5 1 1 0.5 2.5 2.5 3 3 3.5 2 2.5 3 1 3.5 1 4.5 0 3 0.5 1 0 2-1 1-0.5 0-0.5 0.5 0.5 1-0.5 2.5 0 3 0.5 2 1 2.5 1.5 2.5 2.5 3 3 1.5 2.5 2 2.5 2.5 3.5 1.5 1 0.5-2 1-2 0.5-2-3-2.5-2-3-2-2.5-0.5-2 1.5-3 1-3 0-3 1.5-4 0-2.5 0-2 0.5-2 0-1 0 M815 662l 2 1 1.5 1.5 1.5 4 1 4 1 4 0 3.5-2.5 3.5-2 3 0.5 0.5-0.5 0.5-2 1.5-0.5 0 1 0.5 1 0.5 1 0.5 1-1 2.5 0.5 3 3 1 3-0.5 4.5-1 4 0 4-0.5 4 0 4.5 0.5 3 1 2.5 0 3.5-0.5 1-0.5 1.5 0 2-0.5 1.5 1.5 2.5 0 0.5-0.5 0 1-1.5 0-1 1-4 2.5-2.5 0.5-1.5 1 0 1.5 0.5 1 0.5 1 0 1-0.5 0-1.5 1.5 0-0.5 0-0.5 0.5-1.5-0.5 0.5-0.5 1 1 2 0.5 4-0.5 3 0 2.5-0.5 3 0.5 2 1 2.5 2 2.5 0.5 1.5-0.5 4 0.5 4 0.5 1.5-0.5-0.5-1-0.5 0-1 3-1.5 4-0.5 3.5 0 4-0.5 4.5 0 1 0-0.5-1-1-0.5-0.5-1 1-2 1 0 2 0.5 1-2 0.5-1 1.5-1 2.5-2.5 2-2 0.5-2.5 0.5-2.5 0.5-2 2-1.5 0 1 1-1.5 2-2.5 2-1.5 2 0 2.5 0 1-1 2-0.5 2.5-0.5 3.5-0.5 2.5-2 2-0.5 1.5 1 0 0 0.5-3-1.5-3-2.5-3.5-2-2.5-3.5-3-3.5-3.5-1 0-1 0.5 1-0.5 1.5-0.5 2.5 0 2 0.5 1 0.5 0.5 0.5 2.5 1.5 0.5 2-2 2.5-1.5 2.5-1 4-0.5 4 0 3-1 1.5 0 1 0-0.5-0.5 1.5-0.5 1.5 0 3.5-1 2-1.5 3.5-1.5 3.5-2 2.5-2.5 1-2.5 1.5-3 2-4 1.5-2.5 2-0.5 2.5-1 2-1.5 3-2 3-3.5 2-2.5 3-1.5 1-2.5 0-4 0-4 2-2 1-2.5 M926 675l-0.5 1-0.5-1.5-2.5-2.5-1.5-2-3-1-4-0.5-4 0-1.5 1.5-3 1-3.5 0.5-2 0-3.5 0.5-4 1.5-3 2-3 0.5-4 0.5-2 1-2 1-2.5 1.5-2 2-1 1.5 0 0.5 0.5 1.5 2 0.5 0.5 3 1.5 2 0.5 2 3 2.5 1.5 2.5 0 3 0 4-0.5 2.5-2 3-2.5 1.5-1 0-1.5-0.5-2.5-0.5-3.5 0-4 0.5-4-0.5-4 1-4 1-4 1.5-2 0.5-4 1-3.5 2-3 3-1.5 3.5-1.5 2.5-1.5 3-1.5 0.5-3 0.5-2.5 0-2 0.5-3-1-3-1-1.5 0-1-1-0.5-1-2-0.5-1 3.5 0.5 1.5 2 1.5 3 0 2.5 1 2.5 0.5 1.5 0.5 2.5 0.5 2.5 0.5 2.5-0.5 0.5 1 2 0 0.5 2 0 1.5 2.5 2 2 2.5 2.5 3.5 2.5 3 1 2.5 1.5 1 2.5 1.5 1.5 1.5 1.5-1 2-1.5 2.5-2 2.5-1.5 4-1 3-3 3-2 3.5-2 3-0.5 4 0.5 2 1 1 1.5 0.5 3 0 1.5 0.5 1.5 1.5 3.5 1.5 3.5 1 3.5 2.5 2 1.5 2 1 3 2.5 3.5 2.5 2 2 1.5 3.5 3 3 1.5 2.5 1 2 0.5 3.5 0 2-1.5 1.5-1 1-3.5 1.5-3 3-2.5 2.5-3 0.5-3.5-1-3.5-0.5-3.5-2-3.5-2.5-1.5-2.5 1-1.5 1.5-2 3-3.5 2.5-4 1.5-2 2-1.5 2-2 2.5-3 1-1 0.5-2 1-2 3-0.5 1.5-2 0-1 0-2-1-2.5-1-2-1-3-2.5-3.5-2-3-0.5-3.5-1.5-3.5-2-3.5-2.5-3 0-2 0-3 0 M766 719l 2-2.5 1.5-3.5 2.5-2.5 2-4 0.5-3-1-4 0-4.5 0-4 1-4 3 1 3.5 2.5 2 3.5 2.5 3.5 2.5 1.5 1 0.5 3 1 4 1 2.5 0 3.5-1 3.5-2 3-1 2 2 1.5 1.5 2 0.5 0-0.5 1 0 0.5 2 0 1.5 0.5 0.5-1 0.5-4-0.5-4.5 1-3 0-4.5 0.5-2-0.5-3-0.5-4-0.5-3.5 2-3.5 2.5-2.5 3.5-1.5 3.5-2.5 3-1.5-0.5-1.5-0.5-3-0.5-2 0.5-2 0.5-3 0.5-2 1.5-1.5 2.5-2 2.5 0.5 3.5 0 4 2 1.5 1.5 3 0.5 0 1 3 1.5 2 1 3 1.5 2.5 2 3.5 0 4 1.5 4 2 4 1 1.5 1 3 0.5 3-2 3.5-2.5 2-3 3-1.5 2-3 3-2 2.5-1.5 1.5-2.5-0.5-1 1 0.5-1 0-1-1-1-0.5-0.5-2-3-2.5-3.5-3.5-2.5-2.5-2.5-3.5-2.5-3-2.5-1-1 1-2 1-0.5 1.5-1.5 1-2.5-0.5-3 1.5-2 1-2 0-3.5-1-1.5-1-2.5 1-1.5 1-3.5 0-3 1-3.5 0-2 1.5-1.5 2.5-2.5 2.5-0.5 4 0.5 4 1 4 0 4 2 4 1 4 1.5 4 0.5 2.5-1 1-1 0.5 0-1 0.5-0.5-0.5 0 1 1 1 0.5 0.5 0-1.5 1.5-1 0-3 0.5-4 1.5-4 2-3.5 3.5-1.5 3-1 4-2 0.5-2.5 0.5-1.5-1.5-1.5-0.5-2.5 0-3.5 0-2 0-1-2.5-1-2-2-2-1-1-1.5-2 0.5-1 0-1.5 1.5-2 1.5-1.5 2-0.5 3 1.5 1.5 1 1.5 0 0.5-1 1.5 M700 740l 1-2.5 0-1 1 1.5 1.5 0 2 1 2 2 2.5 1 3 0 2.5 3 3 3 3 1.5 2.5 0.5 1 0.5 2 1 0.5 2 1 0 0.5 0 2 2.5 1.5 0.5 2 0 1.5 1 2 0.5 1-0.5 0 0.5 1-0.5 1-1.5-0.5-2-1.5-2-1.5-1-0.5 0.5 1-0.5 1-1 1.5-2.5 3-3 2-1 3 0 2.5-1.5 2.5-2 2-0.5 4.5 0 4 0.5 2.5 0.5 1.5 2 2 2 1.5 3.5 1.5 1 2.5 0.5 1.5-1 1-4 0.5-2.5-0.5-1-1.5-2.5-2 0-1-1.5-1-2 0-1 0-2 0-0.5-0.5-0.5 0-1-0.5 0 0.5-2-0.5-1-0.5-2.5-1-1.5-1.5-1-1 0-2 0-3.5-0.5-3 0.5-2.5 0-1 0 1-0.5 1.5 0.5-0.5 0 0.5 1 1.5-0.5 0-2.5 0-3 1-3 1-3 1-3 0.5-3-1.5-3-2-1.5-1.5-2.5-1-2 1-0.5 0.5 1-0.5 0.5-3 1-2-1.5-1.5-2.5-2.5-1-3.5-1-3-1-2.5-0.5-2 1.5-1.5 0.5-0.5 0.5-2 0.5-3 2-3 2.5-3 2.5 0 2-1 3-2.5 2-2 0-0.5 1 0-1 2.5-0.5 2-0.5 1.5-1.5 3-0.5 3 1 3.5 2.5 1.5 1.5 2 1.5 3 0.5 2 1 2 2 0.5 2.5 0.5 3 0.5 2.5 0 3.5-0.5 4.5-1 4 0.5 4 2.5 3 2 2 0.5 2.5 1.5 2.5 2 0.5 2-0.5 0.5-1 1.5 0.5 1 1 1.5 3.5-0.5 4.5-0.5 3 0 1.5 0.5-1 1.5-1 1-2 0.5-1 0-1-0.5-2 0.5 0 0.5 1 M740 764l 0.5-0.5 0.5 1 0.5 0.5-1-0.5-2.5 2.5-3 0.5-2 1-2 0-0.5-2-1-2 0-2.5 0.5-1.5 1-2 2 1 2 0 0-0.5-1 0-1.5 0-2 0.5-3-0.5-3 0-3 1-2.5 1-2 1.5-2 0.5-3.5 1-3 0.5-2.5 2-2 1-2.5 1 0.5-3 0.5-4 0.5-4 1-1.5 2.5-2 2.5-3.5 1.5-3.5 3.5-3 2-3 3.5-1 3-2 3-2 4-1 3.5-1.5 4-1 3.5-2 2.5-2 1-1 1.5-1 3-2 2.5-3 3-3 1.5-1.5 2.5-2.5 3-1.5 1.5-0.5 4-0.5 4 0.5 4 1.5 3.5 1 2-1.5 2-4 3-1 3-1 3 0.5 1.5 0.5 1.5 0.5 0 1-2 1.5-2 0.5-2-0.5-2.5-1.5-2-2-1-2-2 2 0.5 2 0.5 1 1 0.5-0.5 0.5-0.5 0-0.5 2-1.5 2 0 3.5-2 3-0.5 3 0.5 2 0 2.5-0.5 3.5-1 3.5-2.5 3-2.5 3.5-1.5 3.5-2.5 3-2 0.5-2.5 1.5-0.5 1-1.5 1-1 0.5-2.5 1.5-1.5 1"/>
</g>
<rect x="590.5" y="567.5" width="652.5" height="486" fill="none" stroke="#3a3a3a" stroke-width="1.2"/>
<g stroke="#3a3a3a" stroke-width="1">
<path d="M619.7 1053.5V1058"/>
<path d="M719.1 1053.5V1058"/>
<path d="M818.6 1053.5V1058"/>
<path d="M918.0 1053.5V1058"/>
<path d="M1017.4 1053.5V1058"/>
<path d="M1116.9 1053.5V1058"/>
<path d="M1216.3 1053.5V1058"/>
<path d="M586 991.9H590.5"/>
<path d="M586 902.0H590.5"/>
<path d="M586 812.0H590.5"/>
<path d="M586 722.0H590.5"/>
<path d="M586 632.1H590.5"/>
</g>
<g font-family="Liberation Sans" font-size="10.5" fill="#262626">
<text x="619.7" y="1068.5" text-anchor="middle">0</text>
<text x="719.1" y="1068.5" text-anchor="middle">1000</text>
<text x="818.6" y="1068.5" text-anchor="middle">2000</text>
<text x="918.0" y="1068.5" text-anchor="middle">3000</text>
<text x="1017.4" y="1068.5" text-anchor="middle">4000</text>
<text x="1116.9" y="1068.5" text-anchor="middle">5000</text>
<text x="1216.3" y="1068.5" text-anchor="middle">6000</text>
<text x="583.5" y="995.7" text-anchor="end">−200</text>
<text x="583.5" y="905.8" text-anchor="end">−100</text>
<text x="583.5" y="815.8" text-anchor="end">0</text>
<text x="583.5" y="725.8" text-anchor="end">100</text>
<text x="583.5" y="635.9" text-anchor="end">200</text>
</g>
<text x="917" y="1083" text-anchor="middle" font-family="Liberation Sans" font-size="12.9" fill="#262626">Motor Speed (rpm)</text>
<text transform="translate(552 812) rotate(-90)" text-anchor="middle" font-family="Liberation Sans" font-size="12.3" fill="#262626">Torque (Nm)</text>
<text x="916.5" y="562.5" text-anchor="middle" font-family="Liberation Sans" font-weight="bold" font-size="15.1" fill="#111">Torque vs Motor Speed - Campaign_04</text>
<rect x="1260.5" y="571.5" width="72" height="98" rx="2" fill="#fff" fill-opacity="0.8" stroke="#d8d8d8" stroke-width="1"/>
<path d="M1263 578.8H1282" stroke="#1f77b4" stroke-opacity="0.8" stroke-width="2"/>
<text x="1288" y="582.4" font-family="Liberation Sans" font-size="9.6" fill="#262626">Profile_57</text>
<path d="M1263 592.4H1282" stroke="#ff7f0e" stroke-opacity="0.8" stroke-width="2"/>
<text x="1288" y="596.0" font-family="Liberation Sans" font-size="9.6" fill="#262626">Profile_50</text>
<path d="M1263 606.0H1282" stroke="#2ca02c" stroke-opacity="0.8" stroke-width="2"/>
<text x="1288" y="609.6" font-family="Liberation Sans" font-size="9.6" fill="#262626">Profile_49</text>
<path d="M1263 619.7H1282" stroke="#d62728" stroke-opacity="0.8" stroke-width="2"/>
<text x="1288" y="623.3" font-family="Liberation Sans" font-size="9.6" fill="#262626">Profile_47</text>
<path d="M1263 633.3H1282" stroke="#9467bd" stroke-opacity="0.8" stroke-width="2"/>
<text x="1288" y="636.9" font-family="Liberation Sans" font-size="9.6" fill="#262626">Profile_46</text>
<path d="M1263 646.9H1282" stroke="#8c564b" stroke-opacity="0.8" stroke-width="2"/>
<text x="1288" y="650.5" font-family="Liberation Sans" font-size="9.6" fill="#262626">Profile_48</text>
<path d="M1263 660.5H1282" stroke="#e377c2" stroke-opacity="0.8" stroke-width="2"/>
<text x="1288" y="664.1" font-family="Liberation Sans" font-size="9.6" fill="#262626">Profile_43</text>
</svg>
<div class="abs" id="chat" style="left:1377px;top:48px;width:489px;height:1039px;background:#f8f8f8;border-left:none"><div class="abs" style="left:3px;top:0;width:1px;height:1039px;background:#ededed"></div></div>
<div class="t" style="left:1408px;top:66px;font-size:14px;color:#3b3b3b;font-weight:normal;">CHAT</div>
<div class="abs" style="left:1405px;top:88px;width:43px;height:2px;background:#3c8ddb"></div>
<svg class="abs" style="left:1600px;top:63px" width="20" height="20" viewBox="0 0 20 20"><path d="M10 1V19M1 10H19" stroke="#424242" stroke-width="1.5" fill="none"/></svg>
<svg class="abs" style="left:1627px;top:68px" width="13" height="10" viewBox="0 0 13 10"><path d="M1.5 2L6.5 7L11.5 2" stroke="#424242" stroke-width="1.5" fill="none"/></svg>
<svg class="abs" style="left:1654px;top:63px" width="21" height="21" viewBox="0 0 21 21"><path d="M3.5 6Q6 2 10.5 2Q19 2 19 10.5Q19 19 10.5 19Q2 19 2 10.5 M2.5 1.5V6.5H7.5 M10.5 6V11L13.5 13" stroke="#424242" stroke-width="1.5" fill="none"/></svg>
<svg class="abs" style="left:1690px;top:62px" width="23" height="23" viewBox="0 0 32 32"><path d="M13.5 1.5H18.5L19.3 5.5L22.5 7.2L26.2 5.7L28.7 10L25.7 12.7V19.3L28.7 22L26.2 26.3L22.5 24.8L19.3 26.5L18.5 30.5H13.5L12.7 26.5L9.5 24.8L5.8 26.3L3.3 22L6.3 19.3V12.7L3.3 10L5.8 5.7L9.5 7.2L12.7 5.5Z" stroke="#424242" stroke-width="2" fill="none" stroke-linejoin="round"/><circle cx="16" cy="16" r="4" stroke="#424242" stroke-width="2" fill="none"/></svg>
<svg class="abs" style="left:1730px;top:70px" width="18" height="6"><circle cx="2.5" cy="3" r="1.6" fill="#3b3b3b"/><circle cx="8.5" cy="3" r="1.6" fill="#3b3b3b"/><circle cx="14.5" cy="3" r="1.6" fill="#3b3b3b"/></svg>
<div class="abs" style="left:1765px;top:62px;width:1.5px;height:21px;background:#b0b0b0"></div>
<svg class="abs" style="left:1782px;top:63px" width="20" height="20" viewBox="0 0 20 20"><path d="M1 6V3Q1 1 3 1H6M14 1H17Q19 1 19 3V6M19 14V17Q19 19 17 19H14M6 19H3Q1 19 1 17V14" stroke="#424242" stroke-width="1.5" fill="none"/></svg>
<svg class="abs" style="left:1820px;top:65px" width="17" height="17" viewBox="0 0 17 17"><path d="M1.5 1.5L15.5 15.5M15.5 1.5L1.5 15.5" stroke="#424242" stroke-width="1.5" fill="none"/></svg>
<div class="abs" style="left:1390px;top:100px;width:467px;height:62px;background:#cde3f8;border:2px solid #2b4a8a;border-radius:13px"></div><div class="t" style="left:1520px;top:118.3px;font-size:24.5px;color:#4d4d4d;font-weight:normal;letter-spacing:0.75px">Connect&nbsp; to server</div>
<div class="abs" style="left:1395px;top:176px;width:442px;height:72px;border:1px solid #e3e3e3;border-radius:6px;background:#f8f8f8"></div><svg class="abs" style="left:1423px;top:205px" width="10" height="15" viewBox="0 0 10 15"><path d="M1.5 1.5L8 7.5L1.5 13.5" stroke="#424242" stroke-width="1.5" fill="none"/></svg><div class="t" style="left:1443px;top:191px;font-size:17.5px;color:#616161;font-weight:normal;">Ran Connect to ODS Server – ODSBox-</div><div class="t" style="left:1443px;top:218.3px;font-size:17.5px;color:#616161;font-weight:normal;">JAQueL (MCP Server)</div><svg class="abs" style="left:1795px;top:203px" width="20" height="15" viewBox="0 0 20 15"><path d="M1.5 8L6.5 13L18.5 1.5" stroke="#388a34" stroke-width="1.7" fill="none"/></svg>
<div class="abs" style="left:1403px;top:300px;width:434px;height:30px;border:1px solid #e3e3e3;border-top:none;border-radius:0 0 6px 6px"></div>
<div class="abs" style="left:1390px;top:257px;width:467px;height:62px;background:#cde3f8;border:2px solid #2b4a8a;border-radius:13px"></div><div class="t" style="left:1435px;top:275.0px;font-size:25px;color:#4d4d4d;font-weight:normal;letter-spacing:0.72px">What kind of data is in the server</div>
<div class="abs" style="left:1404px;top:331px;width:436px;height:73px;border:1px solid #e3e3e3;border-radius:6px;background:#f8f8f8"></div><svg class="abs" style="left:1431px;top:359px" width="10" height="15" viewBox="0 0 10 15"><path d="M1.5 1.5L8 7.5L1.5 13.5" stroke="#424242" stroke-width="1.5" fill="none"/></svg><div class="t" style="left:1451px;top:346px;font-size:17.5px;color:#616161;font-weight:normal;">Ran Execute ODS Query – ODSBox-</div><div class="t" style="left:1451px;top:373.3px;font-size:17.5px;color:#616161;font-weight:normal;">JAQueL (MCP Server)</div><svg class="abs" style="left:1799px;top:358px" width="20" height="15" viewBox="0 0 20 15"><path d="M1.5 8L6.5 13L18.5 1.5" stroke="#388a34" stroke-width="1.7" fill="none"/></svg>
<div class="t" style="left:1410px;top:419px;font-size:18px;color:#3b3b3b;font-weight:normal;">The server contains data related to <b style="color:#1f1f1f">Electric Motor</b></div>
<div class="t" style="left:1410px;top:446.5px;font-size:18px;color:#3b3b3b;font-weight:normal;"><b style="color:#1f1f1f">Temperature</b> testing:</div>
<div class="abs" style="left:1410px;top:538px;width:437px;height:72px;border:1px solid #e3e3e3;border-radius:6px;background:#f8f8f8"></div><svg class="abs" style="left:1437px;top:567px" width="10" height="15" viewBox="0 0 10 15"><path d="M1.5 1.5L8 7.5L1.5 13.5" stroke="#424242" stroke-width="1.5" fill="none"/></svg><div class="t" style="left:1458px;top:551px;font-size:17.5px;color:#616161;font-weight:normal;">Ran Check Entity Schema – ODSBox-</div><div class="t" style="left:1458px;top:578.3px;font-size:17.5px;color:#616161;font-weight:normal;">JAQueL (MCP Server)</div><svg class="abs" style="left:1806px;top:565px" width="20" height="15" viewBox="0 0 20 15"><path d="M1.5 8L6.5 13L18.5 1.5" stroke="#388a34" stroke-width="1.7" fill="none"/></svg>
<div class="abs" style="left:1394px;top:473px;width:467px;height:62px;background:#cde3f8;border:2px solid #2b4a8a;border-radius:13px"></div><div class="t" style="left:1463px;top:491.0px;font-size:25px;color:#4d4d4d;font-weight:normal;letter-spacing:0.72px">Compare the individual tests</div>
<div class="abs" style="left:1861px;top:479px;width:5px;height:46px;background:#2b4a8a"></div>
<div class="abs" style="left:1862px;top:535px;width:4px;height:77px;background:#c8c8c8"></div>
<div class="t" style="left:1410px;top:622px;font-size:18.3px;color:#1f1f1f;font-weight:bold;">Compared measurements:</div>
<div class="abs" style="left:1424px;top:681.8px;width:7px;height:7px;border-radius:4px;background:#2b2b2b"></div>
<div class="t" style="left:1444px;top:675.3px;font-size:18.3px;color:#3b3b3b;font-weight:normal;"><b style="color:#1f1f1f">Coolant</b> temperature</div>
<div class="abs" style="left:1424px;top:710.2px;width:7px;height:7px;border-radius:4px;background:#2b2b2b"></div>
<div class="t" style="left:1444px;top:703.8px;font-size:18.3px;color:#3b3b3b;font-weight:normal;"><b style="color:#1f1f1f">Stator_winding</b> temperature</div>
<div class="abs" style="left:1424px;top:738.7px;width:7px;height:7px;border-radius:4px;background:#2b2b2b"></div>
<div class="t" style="left:1444px;top:732.2px;font-size:18.3px;color:#3b3b3b;font-weight:normal;"><b style="color:#1f1f1f">Stator_tooth</b> temperature</div>
<div class="abs" style="left:1424px;top:767.1px;width:7px;height:7px;border-radius:4px;background:#2b2b2b"></div>
<div class="t" style="left:1444px;top:760.6px;font-size:18.3px;color:#3b3b3b;font-weight:normal;"><b style="color:#1f1f1f">Pm</b> (Permanent magnet temperature)</div>
<div class="abs" style="left:1424px;top:795.6px;width:7px;height:7px;border-radius:4px;background:#2b2b2b"></div>
<div class="t" style="left:1444px;top:789.1px;font-size:18.3px;color:#3b3b3b;font-weight:normal;"><b style="color:#1f1f1f">Speed</b> (Motor speed)</div>
<div class="abs" style="left:1424px;top:824.0px;width:7px;height:7px;border-radius:4px;background:#2b2b2b"></div>
<div class="t" style="left:1444px;top:817.5px;font-size:18.3px;color:#3b3b3b;font-weight:normal;"><b style="color:#1f1f1f">Torque</b></div>
<div class="abs" style="left:1397px;top:859px;width:467px;height:62px;background:#cde3f8;border:2px solid #2b4a8a;border-radius:13px"></div><div class="t" style="left:1448px;top:877.0px;font-size:25px;color:#4d4d4d;font-weight:normal;letter-spacing:0.72px">Convert&nbsp;this into a nice Web UI</div>
<div class="abs" style="left:1862px;top:865px;width:4px;height:50px;background:#2b4a8a"></div>
<div class="abs" style="left:1403px;top:937px;width:434px;height:127px;background:#fff;border:1px solid #e0e0e0;border-radius:7px"></div>
<div class="abs" style="left:1411px;top:947px;width:134px;height:27px;background:#fff;border:1px solid #e0e0e0;border-radius:5px"></div>
<svg class="abs" style="left:1419px;top:951px" width="17" height="18" viewBox="0 0 17 18"><path d="M12 6L6 12.5Q4.5 14 3 12.5Q1.5 11 3 9.5L10 2.5Q12 0.5 14 2.5Q16 4.5 14 6.5L7 13.5Q4 16.5 1.5 14" stroke="#424242" stroke-width="1.3" fill="none"/></svg>
<div class="t" style="left:1443px;top:952px;font-size:15px;color:#3b3b3b;font-weight:normal;">Add Context...</div>
<div class="t" style="left:1412px;top:989px;font-size:18.2px;color:#767676;font-weight:normal;">Describe what to build next</div>
<div class="t" style="left:1420px;top:1030px;font-size:15.2px;color:#3b3b3b;font-weight:normal;">Agent</div>
<svg class="abs" style="left:1465px;top:1034px" width="13" height="9" viewBox="0 0 13 9"><path d="M1.5 1.5L6.5 6.5L11.5 1.5" stroke="#424242" stroke-width="1.3" fill="none"/></svg>
<div class="t" style="left:1500px;top:1030px;font-size:14.75px;color:#3b3b3b;font-weight:normal;">Claude Sonnet 4.5</div>
<svg class="abs" style="left:1627px;top:1034px" width="13" height="9" viewBox="0 0 13 9"><path d="M1.5 1.5L6.5 6.5L11.5 1.5" stroke="#424242" stroke-width="1.3" fill="none"/></svg>
<svg class="abs" style="left:1657px;top:1029px" width="22" height="22" viewBox="0 0 22 22"><path d="M3 3Q1 6 3.5 8.5L5 10V19Q5 21 7 21Q9 21 9 19V10L10.5 8.5Q13 6 11 3L9 5.5H5Z" stroke="#424242" stroke-width="1.5" fill="none"/><path d="M14 9H19V20Q19 21 18 21H15Q14 21 14 20Z M15.5 9V2H17.5V9" stroke="#424242" stroke-width="1.5" fill="none"/></svg>
<svg class="abs" style="left:1765px;top:1028px" width="24" height="22" viewBox="0 0 24 22"><path d="M6 15H4.5Q1 15 1 11Q1 7.5 4.5 7.5Q5.5 2 11 2Q16 2 17 7" stroke="#a8a8a8" stroke-width="1.5" fill="none"/><path d="M9 10L22 15.5L9 21L11 15.5Z" stroke="#a8a8a8" stroke-width="1.4" fill="none"/></svg>
<svg class="abs" style="left:1802px;top:1029px" width="20" height="20" viewBox="0 0 20 20"><path d="M10 1V19M1 10H19" stroke="#a8a8a8" stroke-width="1.5"/></svg>
<div class="abs" id="status" style="left:0;top:1087px;width:1866px;height:30px;background:#f8f8f8;border-top:1px solid #e5e5e5"></div>
<svg class="abs" style="left:14px;top:1093px" width="17" height="19" viewBox="0 0 17 19"><path d="M1.5 8.5L6 13L1.5 17.5 M15.5 1.5L11 6L15.5 10.5" stroke="#424242" stroke-width="1.5" fill="none"/></svg>
<svg class="abs" style="left:57px;top:1091px" width="22" height="23" viewBox="0 0 22 23"><circle cx="4" cy="3.5" r="2.5" stroke="#424242" stroke-width="1.5" fill="none"/><circle cx="4" cy="19" r="2.5" stroke="#424242" stroke-width="1.5" fill="none"/><path d="M4 6V16.5M13 9V6Q13 3 10 3" stroke="#424242" stroke-width="1.5" fill="none"/><circle cx="15.5" cy="17" r="5.5" fill="#424242"/><path d="M15.5 13.5V20.5M12.5 15.3L18.5 18.7M18.5 15.3L12.5 18.7" stroke="#f8f8f8" stroke-width="1.2"/></svg>
<div class="t" style="left:83px;top:1092px;font-size:17px;color:#3b3b3b;font-weight:normal;">UV-version*</div>
<svg class="abs" style="left:181px;top:1092px" width="22" height="22" viewBox="0 0 22 22"><path d="M6 15H4.5Q1 15 1 11Q1 7.5 4.5 7.5Q5.5 2 11 2Q16 2 17 7" stroke="#424242" stroke-width="1.5" fill="none"/><circle cx="14.5" cy="14.5" r="6.5" fill="#424242"/><path d="M14.5 18V11.5M11.5 14.5L14.5 11.5L17.5 14.5" stroke="#f8f8f8" stroke-width="1.6" fill="none"/></svg>
<svg class="abs" style="left:225px;top:1093px" width="21" height="21" viewBox="0 0 21 21"><circle cx="10.5" cy="10.5" r="9" stroke="#424242" stroke-width="1.5" fill="none"/><path d="M7 7L14 14M14 7L7 14" stroke="#424242" stroke-width="1.5" fill="none"/></svg>
<div class="t" style="left:251px;top:1092px;font-size:17px;color:#3b3b3b;font-weight:normal;">0</div>
<svg class="abs" style="left:266px;top:1092px" width="21" height="21" viewBox="0 0 21 21"><path d="M10.5 1.5L19.5 19H1.5Z M10.5 8V13.5M10.5 15.5V17" stroke="#424242" stroke-width="1.5" fill="none"/></svg>
<div class="t" style="left:292px;top:1092px;font-size:17px;color:#3b3b3b;font-weight:normal;">0</div>
<svg class="abs" style="left:1781px;top:1091px" width="26" height="22" viewBox="0 0 26 22"><circle cx="9" cy="6.5" r="4.3" stroke="#2b2b2b" stroke-width="2.3" fill="none"/><circle cx="17" cy="6.5" r="4.3" stroke="#2b2b2b" stroke-width="2.3" fill="none"/><path d="M4.7 8.5Q2 10 2 13.5Q2.5 20 13 20.5Q23.5 20 24 13.5Q24 10 21.3 8.5M4.7 9.5Q8 12 13 11.5Q18 12 21.3 9.5" stroke="#2b2b2b" stroke-width="2.3" fill="none"/><path d="M10 14.5V17M16 14.5V17" stroke="#2b2b2b" stroke-width="1.8"/></svg>
<svg class="abs" style="left:1828px;top:1091px" width="21" height="22" viewBox="0 0 21 22"><path d="M9 2.5Q3 3.5 3 10V15L1 18H17L15 15V11 M7 19.5Q7.5 21.5 9 21.5Q10.5 21.5 11 19.5" stroke="#424242" stroke-width="1.5" fill="none"/><circle cx="15.5" cy="4.5" r="4" fill="#424242"/></svg>
<div class="abs" style="left:499px;top:1087px;width:878px;height:4px;background:#fff"></div><div class="abs" style="left:497px;top:1087px;width:2px;height:4px;background:#6359b0"></div>
</body></html>
